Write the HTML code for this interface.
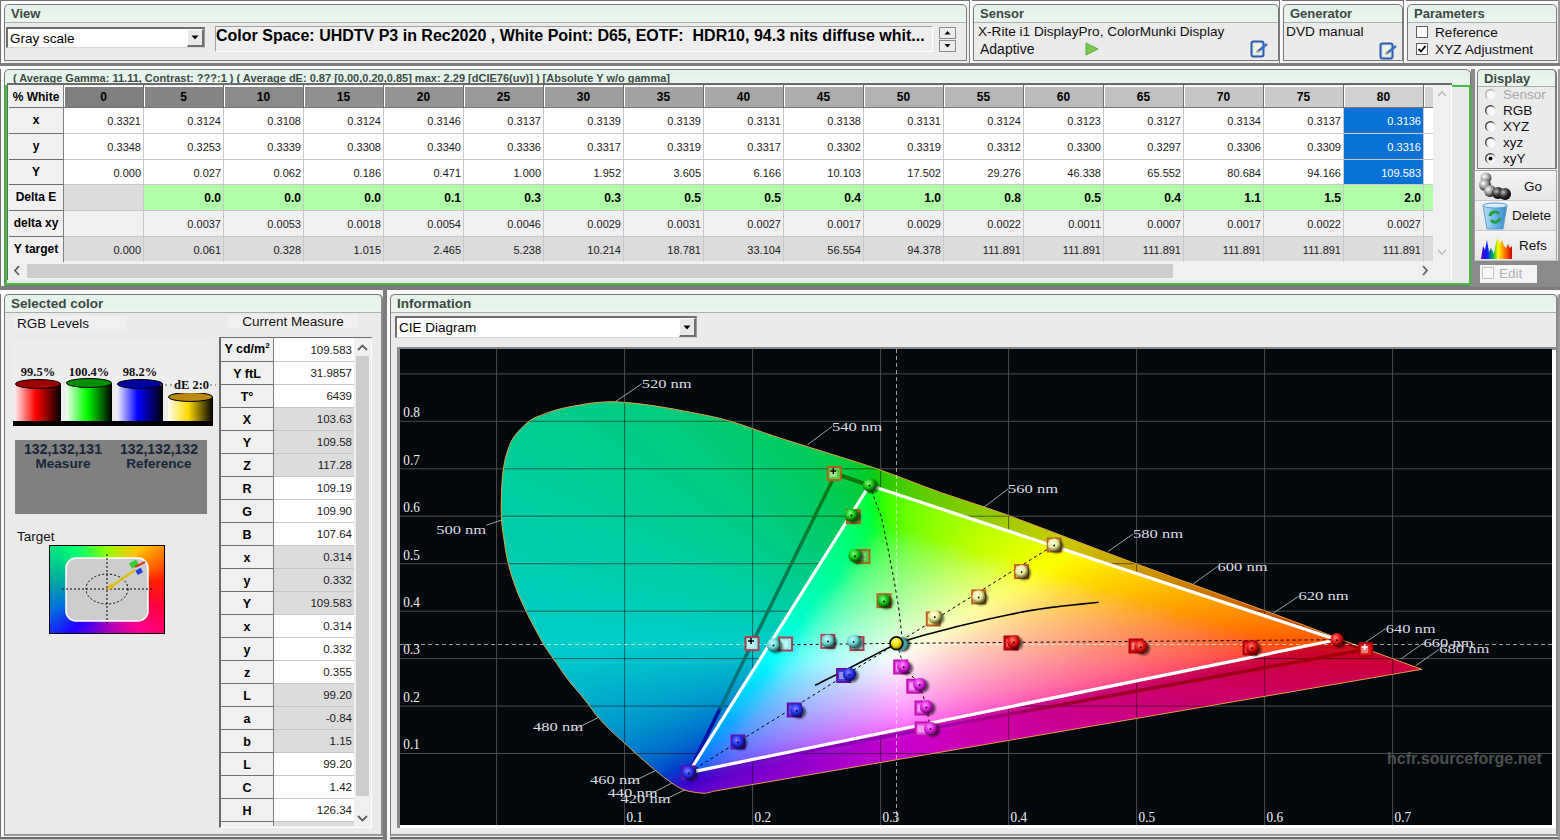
<!DOCTYPE html><html><head><meta charset="utf-8"><style>html,body{margin:0;padding:0}body{width:1560px;height:840px;overflow:hidden;position:relative;background:#f0f0f0;font-family:"Liberation Sans",sans-serif}</style></head><body><div style="position:absolute;left:0px;top:0px;width:1560px;height:1px;background:#707070"></div><div style="position:absolute;left:0px;top:0px;width:1px;height:840px;background:#707070"></div><div style="position:absolute;left:1px;top:1px;width:1558px;height:3px;background:#fafafa"></div><div style="position:absolute;left:1px;top:1px;width:3px;height:836px;background:#fafafa"></div><div style="position:absolute;left:0px;top:837px;width:1560px;height:2px;background:#6e6e6e"></div><div style="position:absolute;left:0px;top:839px;width:1560px;height:1px;background:#c8c8c8"></div><div style="position:absolute;left:1558px;top:0px;width:2px;height:840px;background:#9a9a9a"></div><div style="position:absolute;left:0px;top:63px;width:1560px;height:3px;background:#7c7c7c"></div><div style="position:absolute;left:0px;top:66px;width:1560px;height:3px;background:#fafafa"></div><div style="position:absolute;left:0px;top:286px;width:1560px;height:4px;background:#7c7c7c"></div><div style="position:absolute;left:0px;top:290px;width:1560px;height:4px;background:#fafafa"></div><div style="position:absolute;left:969px;top:0px;width:1px;height:63px;background:#7c7c7c"></div><div style="position:absolute;left:970px;top:0px;width:2px;height:63px;background:#fafafa"></div><div style="position:absolute;left:1279px;top:0px;width:1px;height:63px;background:#7c7c7c"></div><div style="position:absolute;left:1280px;top:0px;width:2px;height:63px;background:#fafafa"></div><div style="position:absolute;left:1403px;top:0px;width:1px;height:63px;background:#7c7c7c"></div><div style="position:absolute;left:1404px;top:0px;width:2px;height:63px;background:#fafafa"></div><div style="position:absolute;left:1471px;top:69px;width:4px;height:217px;background:#8a8a8a"></div><div style="position:absolute;left:383px;top:290px;width:4px;height:550px;background:#7c7c7c"></div><div style="position:absolute;left:387px;top:290px;width:3px;height:550px;background:#fafafa"></div><div style="position:absolute;left:4px;top:4px;width:963px;height:57px;background:#ebebeb;border:1px solid #7a7a7a;box-sizing:border-box;border-radius:5px 5px 0 0"></div><div style="position:absolute;left:5px;top:5px;width:961px;height:18px;background:linear-gradient(#e2f3e8,#eaf6ef);border-bottom:1px solid #a9b0ac;border-radius:5px 5px 0 0;box-sizing:border-box"></div><div style="position:absolute;left:11px;top:6px;text-align:left;white-space:pre;font-family:'Liberation Sans',sans-serif;font-size:13px;font-weight:bold;color:#3d4743;line-height:16px">View</div><div style="position:absolute;left:6px;top:27px;width:199px;height:21px;background:#fff;border-top:2px solid #6e6e6e;border-left:2px solid #6e6e6e;border-right:1px solid #9a9a9a;border-bottom:1px solid #d8d8d8;box-sizing:border-box"></div><div style="position:absolute;left:10px;top:31px;text-align:left;white-space:pre;font-family:'Liberation Sans',sans-serif;font-size:13.5px;color:#000;line-height:16px">Gray scale</div><div style="position:absolute;left:187px;top:29px;width:17px;height:18px;background:#e9e9e9;border-right:2px solid #707070;border-bottom:2px solid #707070;border-top:1px solid #fff;border-left:1px solid #fff;box-sizing:border-box"></div><svg style="position:absolute;left:191px;top:35px" width="9" height="6"><path d="M0.5 0.5h7l-3.5 4z" fill="#000"/></svg><div style="position:absolute;left:215px;top:26px;width:718px;height:26px;background:#eeeeee;border-top:1px solid #a0a0a0;border-left:1px solid #a0a0a0;border-right:1px solid #fff;border-bottom:1px solid #fff;box-sizing:border-box"></div><div style="position:absolute;left:216px;top:27px;text-align:left;white-space:pre;font-family:'Liberation Sans',sans-serif;font-size:16px;font-weight:bold;color:#000;line-height:18px">Color Space: UHDTV P3 in Rec2020 , White Point: D65, EOTF:  HDR10, 94.3 nits diffuse whit...</div><div style="position:absolute;left:939px;top:27px;width:17px;height:12px;background:#ececec;border:1px solid #8a8a8a;box-sizing:border-box"></div><svg style="position:absolute;left:943px;top:30px" width="9" height="6"><path d="M1.5 4.5h6l-3-3.5z" fill="#000"/></svg><div style="position:absolute;left:939px;top:40px;width:17px;height:12px;background:#ececec;border:1px solid #8a8a8a;box-sizing:border-box"></div><svg style="position:absolute;left:943px;top:43px" width="9" height="6"><path d="M1.5 1h6l-3 3.5z" fill="#000"/></svg><div style="position:absolute;left:973px;top:4px;width:306px;height:57px;background:#ebebeb;border:1px solid #7a7a7a;box-sizing:border-box;border-radius:5px 5px 0 0"></div><div style="position:absolute;left:974px;top:5px;width:304px;height:18px;background:linear-gradient(#e2f3e8,#eaf6ef);border-bottom:1px solid #a9b0ac;border-radius:5px 5px 0 0;box-sizing:border-box"></div><div style="position:absolute;left:980px;top:6px;text-align:left;white-space:pre;font-family:'Liberation Sans',sans-serif;font-size:13px;font-weight:bold;color:#3d4743;line-height:16px">Sensor</div><div style="position:absolute;left:978px;top:24px;text-align:left;white-space:pre;font-family:'Liberation Sans',sans-serif;font-size:13.6px;color:#101010;line-height:16px">X-Rite i1 DisplayPro, ColorMunki Display</div><div style="position:absolute;left:980px;top:41px;text-align:left;white-space:pre;font-family:'Liberation Sans',sans-serif;font-size:14px;color:#101010;line-height:16px">Adaptive</div><svg style="position:absolute;left:1085px;top:42px" width="14" height="14"><path d="M1 1L13 7L1 13z" fill="#7ec850" stroke="#5aa838" stroke-width="1"/></svg><svg style="position:absolute;left:1250px;top:38px" width="20" height="20"><rect x="1.5" y="3.5" width="12" height="15" rx="2" fill="#d8e6f5" stroke="#2a5db0" stroke-width="2"/><rect x="4" y="6" width="7" height="10" fill="#f2f2e0"/><path d="M7 14L17 6" stroke="#3a6fc0" stroke-width="2.5"/><path d="M6 15l2-3 2 2z" fill="#c8b070"/></svg><div style="position:absolute;left:1283px;top:4px;width:120px;height:57px;background:#ebebeb;border:1px solid #7a7a7a;box-sizing:border-box;border-radius:5px 5px 0 0"></div><div style="position:absolute;left:1284px;top:5px;width:118px;height:18px;background:linear-gradient(#e2f3e8,#eaf6ef);border-bottom:1px solid #a9b0ac;border-radius:5px 5px 0 0;box-sizing:border-box"></div><div style="position:absolute;left:1290px;top:6px;text-align:left;white-space:pre;font-family:'Liberation Sans',sans-serif;font-size:13px;font-weight:bold;color:#3d4743;line-height:16px">Generator</div><div style="position:absolute;left:1286px;top:24px;text-align:left;white-space:pre;font-family:'Liberation Sans',sans-serif;font-size:13.7px;color:#101010;line-height:16px">DVD manual</div><svg style="position:absolute;left:1379px;top:40px" width="20" height="20"><rect x="1.5" y="3.5" width="12" height="15" rx="2" fill="#d8e6f5" stroke="#2a5db0" stroke-width="2"/><rect x="4" y="6" width="7" height="10" fill="#f2f2e0"/><path d="M7 14L17 6" stroke="#3a6fc0" stroke-width="2.5"/><path d="M6 15l2-3 2 2z" fill="#c8b070"/></svg><div style="position:absolute;left:1407px;top:4px;width:150px;height:57px;background:#ebebeb;border:1px solid #7a7a7a;box-sizing:border-box;border-radius:5px 5px 0 0"></div><div style="position:absolute;left:1408px;top:5px;width:148px;height:18px;background:linear-gradient(#e2f3e8,#eaf6ef);border-bottom:1px solid #a9b0ac;border-radius:5px 5px 0 0;box-sizing:border-box"></div><div style="position:absolute;left:1414px;top:6px;text-align:left;white-space:pre;font-family:'Liberation Sans',sans-serif;font-size:13px;font-weight:bold;color:#3d4743;line-height:16px">Parameters</div><div style="position:absolute;left:1416px;top:26px;width:12px;height:12px;background:#fff;border:1px solid #606060;box-sizing:border-box"></div><div style="position:absolute;left:1435px;top:25px;text-align:left;white-space:pre;font-family:'Liberation Sans',sans-serif;font-size:13.6px;color:#101010;line-height:16px">Reference</div><div style="position:absolute;left:1416px;top:43px;width:12px;height:12px;background:#fff;border:1px solid #606060;box-sizing:border-box"></div><svg style="position:absolute;left:1416px;top:43px" width="12" height="12"><path d="M2.5 6L5 8.5L9.5 3" fill="none" stroke="#000" stroke-width="1.8"/></svg><div style="position:absolute;left:1435px;top:42px;text-align:left;white-space:pre;font-family:'Liberation Sans',sans-serif;font-size:13.7px;color:#101010;line-height:16px">XYZ Adjustment</div><div style="position:absolute;left:4px;top:69px;width:1467px;height:217px;background:#ebebeb;border:1px solid #7a7a7a;box-sizing:border-box;border-radius:5px 5px 0 0"></div><div style="position:absolute;left:5px;top:70px;width:1465px;height:14px;background:linear-gradient(#e2f3e8,#eaf6ef);border-radius:5px 5px 0 0"></div><div style="position:absolute;left:13px;top:71px;text-align:left;white-space:pre;font-family:'Liberation Sans',sans-serif;font-size:11px;font-weight:bold;color:#3d4a45;line-height:14px;height:13px;overflow:hidden">( Average Gamma: 11.11, Contrast: ???:1 ) ( Average dE: 0.87 [0.00,0.20,0.85] max: 2.29 [dCIE76(uv)] ) [Absolute Y w/o gamma]</div><div style="position:absolute;left:5px;top:85px;width:1466px;height:200px;border:2px solid #3cc23c;box-sizing:border-box"></div><div style="position:absolute;left:7px;top:83px;width:1445px;height:197px;background:#f0f0f0;border-top:2px solid #6a6a6a;border-left:1px solid #6a6a6a;box-sizing:border-box"></div><div style="position:absolute;left:9px;top:85px;width:54px;height:22px;background:#f0f0f0"></div><div style="position:absolute;left:9px;top:86px;width:54px;text-align:center;white-space:pre;font-family:'Liberation Sans',sans-serif;font-size:12px;font-weight:bold;color:#000;line-height:22px">% White</div><div style="position:absolute;left:64px;top:86px;width:79px;height:21px;background:#808080;border-left:1px solid #fff;border-top:1px solid #fff;box-sizing:border-box"></div><div style="position:absolute;left:64px;top:86px;width:79px;text-align:center;white-space:pre;font-family:'Liberation Sans',sans-serif;font-size:12px;font-weight:bold;color:#000;line-height:23px">0</div><div style="position:absolute;left:144px;top:86px;width:79px;height:21px;background:#858585;border-left:1px solid #fff;border-top:1px solid #fff;box-sizing:border-box"></div><div style="position:absolute;left:144px;top:86px;width:79px;text-align:center;white-space:pre;font-family:'Liberation Sans',sans-serif;font-size:12px;font-weight:bold;color:#000;line-height:23px">5</div><div style="position:absolute;left:224px;top:86px;width:79px;height:21px;background:#8a8a8a;border-left:1px solid #fff;border-top:1px solid #fff;box-sizing:border-box"></div><div style="position:absolute;left:224px;top:86px;width:79px;text-align:center;white-space:pre;font-family:'Liberation Sans',sans-serif;font-size:12px;font-weight:bold;color:#000;line-height:23px">10</div><div style="position:absolute;left:304px;top:86px;width:79px;height:21px;background:#8f8f8f;border-left:1px solid #fff;border-top:1px solid #fff;box-sizing:border-box"></div><div style="position:absolute;left:304px;top:86px;width:79px;text-align:center;white-space:pre;font-family:'Liberation Sans',sans-serif;font-size:12px;font-weight:bold;color:#000;line-height:23px">15</div><div style="position:absolute;left:384px;top:86px;width:79px;height:21px;background:#949494;border-left:1px solid #fff;border-top:1px solid #fff;box-sizing:border-box"></div><div style="position:absolute;left:384px;top:86px;width:79px;text-align:center;white-space:pre;font-family:'Liberation Sans',sans-serif;font-size:12px;font-weight:bold;color:#000;line-height:23px">20</div><div style="position:absolute;left:464px;top:86px;width:79px;height:21px;background:#999999;border-left:1px solid #fff;border-top:1px solid #fff;box-sizing:border-box"></div><div style="position:absolute;left:464px;top:86px;width:79px;text-align:center;white-space:pre;font-family:'Liberation Sans',sans-serif;font-size:12px;font-weight:bold;color:#000;line-height:23px">25</div><div style="position:absolute;left:544px;top:86px;width:79px;height:21px;background:#9e9e9e;border-left:1px solid #fff;border-top:1px solid #fff;box-sizing:border-box"></div><div style="position:absolute;left:544px;top:86px;width:79px;text-align:center;white-space:pre;font-family:'Liberation Sans',sans-serif;font-size:12px;font-weight:bold;color:#000;line-height:23px">30</div><div style="position:absolute;left:624px;top:86px;width:79px;height:21px;background:#a3a3a3;border-left:1px solid #fff;border-top:1px solid #fff;box-sizing:border-box"></div><div style="position:absolute;left:624px;top:86px;width:79px;text-align:center;white-space:pre;font-family:'Liberation Sans',sans-serif;font-size:12px;font-weight:bold;color:#000;line-height:23px">35</div><div style="position:absolute;left:704px;top:86px;width:79px;height:21px;background:#a8a8a8;border-left:1px solid #fff;border-top:1px solid #fff;box-sizing:border-box"></div><div style="position:absolute;left:704px;top:86px;width:79px;text-align:center;white-space:pre;font-family:'Liberation Sans',sans-serif;font-size:12px;font-weight:bold;color:#000;line-height:23px">40</div><div style="position:absolute;left:784px;top:86px;width:79px;height:21px;background:#adadad;border-left:1px solid #fff;border-top:1px solid #fff;box-sizing:border-box"></div><div style="position:absolute;left:784px;top:86px;width:79px;text-align:center;white-space:pre;font-family:'Liberation Sans',sans-serif;font-size:12px;font-weight:bold;color:#000;line-height:23px">45</div><div style="position:absolute;left:864px;top:86px;width:79px;height:21px;background:#b2b2b2;border-left:1px solid #fff;border-top:1px solid #fff;box-sizing:border-box"></div><div style="position:absolute;left:864px;top:86px;width:79px;text-align:center;white-space:pre;font-family:'Liberation Sans',sans-serif;font-size:12px;font-weight:bold;color:#000;line-height:23px">50</div><div style="position:absolute;left:944px;top:86px;width:79px;height:21px;background:#b7b7b7;border-left:1px solid #fff;border-top:1px solid #fff;box-sizing:border-box"></div><div style="position:absolute;left:944px;top:86px;width:79px;text-align:center;white-space:pre;font-family:'Liberation Sans',sans-serif;font-size:12px;font-weight:bold;color:#000;line-height:23px">55</div><div style="position:absolute;left:1024px;top:86px;width:79px;height:21px;background:#bcbcbc;border-left:1px solid #fff;border-top:1px solid #fff;box-sizing:border-box"></div><div style="position:absolute;left:1024px;top:86px;width:79px;text-align:center;white-space:pre;font-family:'Liberation Sans',sans-serif;font-size:12px;font-weight:bold;color:#000;line-height:23px">60</div><div style="position:absolute;left:1104px;top:86px;width:79px;height:21px;background:#c1c1c1;border-left:1px solid #fff;border-top:1px solid #fff;box-sizing:border-box"></div><div style="position:absolute;left:1104px;top:86px;width:79px;text-align:center;white-space:pre;font-family:'Liberation Sans',sans-serif;font-size:12px;font-weight:bold;color:#000;line-height:23px">65</div><div style="position:absolute;left:1184px;top:86px;width:79px;height:21px;background:#c6c6c6;border-left:1px solid #fff;border-top:1px solid #fff;box-sizing:border-box"></div><div style="position:absolute;left:1184px;top:86px;width:79px;text-align:center;white-space:pre;font-family:'Liberation Sans',sans-serif;font-size:12px;font-weight:bold;color:#000;line-height:23px">70</div><div style="position:absolute;left:1264px;top:86px;width:79px;height:21px;background:#cbcbcb;border-left:1px solid #fff;border-top:1px solid #fff;box-sizing:border-box"></div><div style="position:absolute;left:1264px;top:86px;width:79px;text-align:center;white-space:pre;font-family:'Liberation Sans',sans-serif;font-size:12px;font-weight:bold;color:#000;line-height:23px">75</div><div style="position:absolute;left:1344px;top:86px;width:79px;height:21px;background:#d0d0d0;border-left:1px solid #fff;border-top:1px solid #fff;box-sizing:border-box"></div><div style="position:absolute;left:1344px;top:86px;width:79px;text-align:center;white-space:pre;font-family:'Liberation Sans',sans-serif;font-size:12px;font-weight:bold;color:#000;line-height:23px">80</div><div style="position:absolute;left:1424px;top:86px;width:9px;height:21px;background:#d5d5d5;border-left:1px solid #fff;border-top:1px solid #fff;box-sizing:border-box"></div><div style="position:absolute;left:9px;top:108px;width:54px;height:25px;background:#f0f0f0"></div><div style="position:absolute;left:9px;top:108px;width:54px;text-align:center;white-space:pre;font-family:'Liberation Sans',sans-serif;font-size:12px;font-weight:bold;color:#000;line-height:25px">x</div><div style="position:absolute;left:64px;top:108px;width:79px;height:25px;background:#ffffff"></div><div style="position:absolute;left:64px;top:108px;width:79px;text-align:right;white-space:pre;font-family:'Liberation Sans',sans-serif;font-size:11px;font-weight:normal;color:#1a1a1a;line-height:27px;padding-right:2px;box-sizing:border-box">0.3321</div><div style="position:absolute;left:144px;top:108px;width:79px;height:25px;background:#ffffff"></div><div style="position:absolute;left:144px;top:108px;width:79px;text-align:right;white-space:pre;font-family:'Liberation Sans',sans-serif;font-size:11px;font-weight:normal;color:#1a1a1a;line-height:27px;padding-right:2px;box-sizing:border-box">0.3124</div><div style="position:absolute;left:224px;top:108px;width:79px;height:25px;background:#ffffff"></div><div style="position:absolute;left:224px;top:108px;width:79px;text-align:right;white-space:pre;font-family:'Liberation Sans',sans-serif;font-size:11px;font-weight:normal;color:#1a1a1a;line-height:27px;padding-right:2px;box-sizing:border-box">0.3108</div><div style="position:absolute;left:304px;top:108px;width:79px;height:25px;background:#ffffff"></div><div style="position:absolute;left:304px;top:108px;width:79px;text-align:right;white-space:pre;font-family:'Liberation Sans',sans-serif;font-size:11px;font-weight:normal;color:#1a1a1a;line-height:27px;padding-right:2px;box-sizing:border-box">0.3124</div><div style="position:absolute;left:384px;top:108px;width:79px;height:25px;background:#ffffff"></div><div style="position:absolute;left:384px;top:108px;width:79px;text-align:right;white-space:pre;font-family:'Liberation Sans',sans-serif;font-size:11px;font-weight:normal;color:#1a1a1a;line-height:27px;padding-right:2px;box-sizing:border-box">0.3146</div><div style="position:absolute;left:464px;top:108px;width:79px;height:25px;background:#ffffff"></div><div style="position:absolute;left:464px;top:108px;width:79px;text-align:right;white-space:pre;font-family:'Liberation Sans',sans-serif;font-size:11px;font-weight:normal;color:#1a1a1a;line-height:27px;padding-right:2px;box-sizing:border-box">0.3137</div><div style="position:absolute;left:544px;top:108px;width:79px;height:25px;background:#ffffff"></div><div style="position:absolute;left:544px;top:108px;width:79px;text-align:right;white-space:pre;font-family:'Liberation Sans',sans-serif;font-size:11px;font-weight:normal;color:#1a1a1a;line-height:27px;padding-right:2px;box-sizing:border-box">0.3139</div><div style="position:absolute;left:624px;top:108px;width:79px;height:25px;background:#ffffff"></div><div style="position:absolute;left:624px;top:108px;width:79px;text-align:right;white-space:pre;font-family:'Liberation Sans',sans-serif;font-size:11px;font-weight:normal;color:#1a1a1a;line-height:27px;padding-right:2px;box-sizing:border-box">0.3139</div><div style="position:absolute;left:704px;top:108px;width:79px;height:25px;background:#ffffff"></div><div style="position:absolute;left:704px;top:108px;width:79px;text-align:right;white-space:pre;font-family:'Liberation Sans',sans-serif;font-size:11px;font-weight:normal;color:#1a1a1a;line-height:27px;padding-right:2px;box-sizing:border-box">0.3131</div><div style="position:absolute;left:784px;top:108px;width:79px;height:25px;background:#ffffff"></div><div style="position:absolute;left:784px;top:108px;width:79px;text-align:right;white-space:pre;font-family:'Liberation Sans',sans-serif;font-size:11px;font-weight:normal;color:#1a1a1a;line-height:27px;padding-right:2px;box-sizing:border-box">0.3138</div><div style="position:absolute;left:864px;top:108px;width:79px;height:25px;background:#ffffff"></div><div style="position:absolute;left:864px;top:108px;width:79px;text-align:right;white-space:pre;font-family:'Liberation Sans',sans-serif;font-size:11px;font-weight:normal;color:#1a1a1a;line-height:27px;padding-right:2px;box-sizing:border-box">0.3131</div><div style="position:absolute;left:944px;top:108px;width:79px;height:25px;background:#ffffff"></div><div style="position:absolute;left:944px;top:108px;width:79px;text-align:right;white-space:pre;font-family:'Liberation Sans',sans-serif;font-size:11px;font-weight:normal;color:#1a1a1a;line-height:27px;padding-right:2px;box-sizing:border-box">0.3124</div><div style="position:absolute;left:1024px;top:108px;width:79px;height:25px;background:#ffffff"></div><div style="position:absolute;left:1024px;top:108px;width:79px;text-align:right;white-space:pre;font-family:'Liberation Sans',sans-serif;font-size:11px;font-weight:normal;color:#1a1a1a;line-height:27px;padding-right:2px;box-sizing:border-box">0.3123</div><div style="position:absolute;left:1104px;top:108px;width:79px;height:25px;background:#ffffff"></div><div style="position:absolute;left:1104px;top:108px;width:79px;text-align:right;white-space:pre;font-family:'Liberation Sans',sans-serif;font-size:11px;font-weight:normal;color:#1a1a1a;line-height:27px;padding-right:2px;box-sizing:border-box">0.3127</div><div style="position:absolute;left:1184px;top:108px;width:79px;height:25px;background:#ffffff"></div><div style="position:absolute;left:1184px;top:108px;width:79px;text-align:right;white-space:pre;font-family:'Liberation Sans',sans-serif;font-size:11px;font-weight:normal;color:#1a1a1a;line-height:27px;padding-right:2px;box-sizing:border-box">0.3134</div><div style="position:absolute;left:1264px;top:108px;width:79px;height:25px;background:#ffffff"></div><div style="position:absolute;left:1264px;top:108px;width:79px;text-align:right;white-space:pre;font-family:'Liberation Sans',sans-serif;font-size:11px;font-weight:normal;color:#1a1a1a;line-height:27px;padding-right:2px;box-sizing:border-box">0.3137</div><div style="position:absolute;left:1344px;top:108px;width:79px;height:25px;background:#0a72d6"></div><div style="position:absolute;left:1344px;top:108px;width:79px;text-align:right;white-space:pre;font-family:'Liberation Sans',sans-serif;font-size:11px;font-weight:normal;color:#ffffff;line-height:27px;padding-right:2px;box-sizing:border-box">0.3136</div><div style="position:absolute;left:1424px;top:108px;width:9px;height:25px;background:#ffffff"></div><div style="position:absolute;left:9px;top:134px;width:54px;height:25px;background:#f0f0f0"></div><div style="position:absolute;left:9px;top:134px;width:54px;text-align:center;white-space:pre;font-family:'Liberation Sans',sans-serif;font-size:12px;font-weight:bold;color:#000;line-height:25px">y</div><div style="position:absolute;left:64px;top:134px;width:79px;height:25px;background:#ffffff"></div><div style="position:absolute;left:64px;top:134px;width:79px;text-align:right;white-space:pre;font-family:'Liberation Sans',sans-serif;font-size:11px;font-weight:normal;color:#1a1a1a;line-height:27px;padding-right:2px;box-sizing:border-box">0.3348</div><div style="position:absolute;left:144px;top:134px;width:79px;height:25px;background:#ffffff"></div><div style="position:absolute;left:144px;top:134px;width:79px;text-align:right;white-space:pre;font-family:'Liberation Sans',sans-serif;font-size:11px;font-weight:normal;color:#1a1a1a;line-height:27px;padding-right:2px;box-sizing:border-box">0.3253</div><div style="position:absolute;left:224px;top:134px;width:79px;height:25px;background:#ffffff"></div><div style="position:absolute;left:224px;top:134px;width:79px;text-align:right;white-space:pre;font-family:'Liberation Sans',sans-serif;font-size:11px;font-weight:normal;color:#1a1a1a;line-height:27px;padding-right:2px;box-sizing:border-box">0.3339</div><div style="position:absolute;left:304px;top:134px;width:79px;height:25px;background:#ffffff"></div><div style="position:absolute;left:304px;top:134px;width:79px;text-align:right;white-space:pre;font-family:'Liberation Sans',sans-serif;font-size:11px;font-weight:normal;color:#1a1a1a;line-height:27px;padding-right:2px;box-sizing:border-box">0.3308</div><div style="position:absolute;left:384px;top:134px;width:79px;height:25px;background:#ffffff"></div><div style="position:absolute;left:384px;top:134px;width:79px;text-align:right;white-space:pre;font-family:'Liberation Sans',sans-serif;font-size:11px;font-weight:normal;color:#1a1a1a;line-height:27px;padding-right:2px;box-sizing:border-box">0.3340</div><div style="position:absolute;left:464px;top:134px;width:79px;height:25px;background:#ffffff"></div><div style="position:absolute;left:464px;top:134px;width:79px;text-align:right;white-space:pre;font-family:'Liberation Sans',sans-serif;font-size:11px;font-weight:normal;color:#1a1a1a;line-height:27px;padding-right:2px;box-sizing:border-box">0.3336</div><div style="position:absolute;left:544px;top:134px;width:79px;height:25px;background:#ffffff"></div><div style="position:absolute;left:544px;top:134px;width:79px;text-align:right;white-space:pre;font-family:'Liberation Sans',sans-serif;font-size:11px;font-weight:normal;color:#1a1a1a;line-height:27px;padding-right:2px;box-sizing:border-box">0.3317</div><div style="position:absolute;left:624px;top:134px;width:79px;height:25px;background:#ffffff"></div><div style="position:absolute;left:624px;top:134px;width:79px;text-align:right;white-space:pre;font-family:'Liberation Sans',sans-serif;font-size:11px;font-weight:normal;color:#1a1a1a;line-height:27px;padding-right:2px;box-sizing:border-box">0.3319</div><div style="position:absolute;left:704px;top:134px;width:79px;height:25px;background:#ffffff"></div><div style="position:absolute;left:704px;top:134px;width:79px;text-align:right;white-space:pre;font-family:'Liberation Sans',sans-serif;font-size:11px;font-weight:normal;color:#1a1a1a;line-height:27px;padding-right:2px;box-sizing:border-box">0.3317</div><div style="position:absolute;left:784px;top:134px;width:79px;height:25px;background:#ffffff"></div><div style="position:absolute;left:784px;top:134px;width:79px;text-align:right;white-space:pre;font-family:'Liberation Sans',sans-serif;font-size:11px;font-weight:normal;color:#1a1a1a;line-height:27px;padding-right:2px;box-sizing:border-box">0.3302</div><div style="position:absolute;left:864px;top:134px;width:79px;height:25px;background:#ffffff"></div><div style="position:absolute;left:864px;top:134px;width:79px;text-align:right;white-space:pre;font-family:'Liberation Sans',sans-serif;font-size:11px;font-weight:normal;color:#1a1a1a;line-height:27px;padding-right:2px;box-sizing:border-box">0.3319</div><div style="position:absolute;left:944px;top:134px;width:79px;height:25px;background:#ffffff"></div><div style="position:absolute;left:944px;top:134px;width:79px;text-align:right;white-space:pre;font-family:'Liberation Sans',sans-serif;font-size:11px;font-weight:normal;color:#1a1a1a;line-height:27px;padding-right:2px;box-sizing:border-box">0.3312</div><div style="position:absolute;left:1024px;top:134px;width:79px;height:25px;background:#ffffff"></div><div style="position:absolute;left:1024px;top:134px;width:79px;text-align:right;white-space:pre;font-family:'Liberation Sans',sans-serif;font-size:11px;font-weight:normal;color:#1a1a1a;line-height:27px;padding-right:2px;box-sizing:border-box">0.3300</div><div style="position:absolute;left:1104px;top:134px;width:79px;height:25px;background:#ffffff"></div><div style="position:absolute;left:1104px;top:134px;width:79px;text-align:right;white-space:pre;font-family:'Liberation Sans',sans-serif;font-size:11px;font-weight:normal;color:#1a1a1a;line-height:27px;padding-right:2px;box-sizing:border-box">0.3297</div><div style="position:absolute;left:1184px;top:134px;width:79px;height:25px;background:#ffffff"></div><div style="position:absolute;left:1184px;top:134px;width:79px;text-align:right;white-space:pre;font-family:'Liberation Sans',sans-serif;font-size:11px;font-weight:normal;color:#1a1a1a;line-height:27px;padding-right:2px;box-sizing:border-box">0.3306</div><div style="position:absolute;left:1264px;top:134px;width:79px;height:25px;background:#ffffff"></div><div style="position:absolute;left:1264px;top:134px;width:79px;text-align:right;white-space:pre;font-family:'Liberation Sans',sans-serif;font-size:11px;font-weight:normal;color:#1a1a1a;line-height:27px;padding-right:2px;box-sizing:border-box">0.3309</div><div style="position:absolute;left:1344px;top:134px;width:79px;height:25px;background:#0a72d6"></div><div style="position:absolute;left:1344px;top:134px;width:79px;text-align:right;white-space:pre;font-family:'Liberation Sans',sans-serif;font-size:11px;font-weight:normal;color:#ffffff;line-height:27px;padding-right:2px;box-sizing:border-box">0.3316</div><div style="position:absolute;left:1424px;top:134px;width:9px;height:25px;background:#ffffff"></div><div style="position:absolute;left:9px;top:160px;width:54px;height:24px;background:#f0f0f0"></div><div style="position:absolute;left:9px;top:160px;width:54px;text-align:center;white-space:pre;font-family:'Liberation Sans',sans-serif;font-size:12px;font-weight:bold;color:#000;line-height:24px">Y</div><div style="position:absolute;left:64px;top:160px;width:79px;height:24px;background:#ffffff"></div><div style="position:absolute;left:64px;top:160px;width:79px;text-align:right;white-space:pre;font-family:'Liberation Sans',sans-serif;font-size:11px;font-weight:normal;color:#1a1a1a;line-height:26px;padding-right:2px;box-sizing:border-box">0.000</div><div style="position:absolute;left:144px;top:160px;width:79px;height:24px;background:#ffffff"></div><div style="position:absolute;left:144px;top:160px;width:79px;text-align:right;white-space:pre;font-family:'Liberation Sans',sans-serif;font-size:11px;font-weight:normal;color:#1a1a1a;line-height:26px;padding-right:2px;box-sizing:border-box">0.027</div><div style="position:absolute;left:224px;top:160px;width:79px;height:24px;background:#ffffff"></div><div style="position:absolute;left:224px;top:160px;width:79px;text-align:right;white-space:pre;font-family:'Liberation Sans',sans-serif;font-size:11px;font-weight:normal;color:#1a1a1a;line-height:26px;padding-right:2px;box-sizing:border-box">0.062</div><div style="position:absolute;left:304px;top:160px;width:79px;height:24px;background:#ffffff"></div><div style="position:absolute;left:304px;top:160px;width:79px;text-align:right;white-space:pre;font-family:'Liberation Sans',sans-serif;font-size:11px;font-weight:normal;color:#1a1a1a;line-height:26px;padding-right:2px;box-sizing:border-box">0.186</div><div style="position:absolute;left:384px;top:160px;width:79px;height:24px;background:#ffffff"></div><div style="position:absolute;left:384px;top:160px;width:79px;text-align:right;white-space:pre;font-family:'Liberation Sans',sans-serif;font-size:11px;font-weight:normal;color:#1a1a1a;line-height:26px;padding-right:2px;box-sizing:border-box">0.471</div><div style="position:absolute;left:464px;top:160px;width:79px;height:24px;background:#ffffff"></div><div style="position:absolute;left:464px;top:160px;width:79px;text-align:right;white-space:pre;font-family:'Liberation Sans',sans-serif;font-size:11px;font-weight:normal;color:#1a1a1a;line-height:26px;padding-right:2px;box-sizing:border-box">1.000</div><div style="position:absolute;left:544px;top:160px;width:79px;height:24px;background:#ffffff"></div><div style="position:absolute;left:544px;top:160px;width:79px;text-align:right;white-space:pre;font-family:'Liberation Sans',sans-serif;font-size:11px;font-weight:normal;color:#1a1a1a;line-height:26px;padding-right:2px;box-sizing:border-box">1.952</div><div style="position:absolute;left:624px;top:160px;width:79px;height:24px;background:#ffffff"></div><div style="position:absolute;left:624px;top:160px;width:79px;text-align:right;white-space:pre;font-family:'Liberation Sans',sans-serif;font-size:11px;font-weight:normal;color:#1a1a1a;line-height:26px;padding-right:2px;box-sizing:border-box">3.605</div><div style="position:absolute;left:704px;top:160px;width:79px;height:24px;background:#ffffff"></div><div style="position:absolute;left:704px;top:160px;width:79px;text-align:right;white-space:pre;font-family:'Liberation Sans',sans-serif;font-size:11px;font-weight:normal;color:#1a1a1a;line-height:26px;padding-right:2px;box-sizing:border-box">6.166</div><div style="position:absolute;left:784px;top:160px;width:79px;height:24px;background:#ffffff"></div><div style="position:absolute;left:784px;top:160px;width:79px;text-align:right;white-space:pre;font-family:'Liberation Sans',sans-serif;font-size:11px;font-weight:normal;color:#1a1a1a;line-height:26px;padding-right:2px;box-sizing:border-box">10.103</div><div style="position:absolute;left:864px;top:160px;width:79px;height:24px;background:#ffffff"></div><div style="position:absolute;left:864px;top:160px;width:79px;text-align:right;white-space:pre;font-family:'Liberation Sans',sans-serif;font-size:11px;font-weight:normal;color:#1a1a1a;line-height:26px;padding-right:2px;box-sizing:border-box">17.502</div><div style="position:absolute;left:944px;top:160px;width:79px;height:24px;background:#ffffff"></div><div style="position:absolute;left:944px;top:160px;width:79px;text-align:right;white-space:pre;font-family:'Liberation Sans',sans-serif;font-size:11px;font-weight:normal;color:#1a1a1a;line-height:26px;padding-right:2px;box-sizing:border-box">29.276</div><div style="position:absolute;left:1024px;top:160px;width:79px;height:24px;background:#ffffff"></div><div style="position:absolute;left:1024px;top:160px;width:79px;text-align:right;white-space:pre;font-family:'Liberation Sans',sans-serif;font-size:11px;font-weight:normal;color:#1a1a1a;line-height:26px;padding-right:2px;box-sizing:border-box">46.338</div><div style="position:absolute;left:1104px;top:160px;width:79px;height:24px;background:#ffffff"></div><div style="position:absolute;left:1104px;top:160px;width:79px;text-align:right;white-space:pre;font-family:'Liberation Sans',sans-serif;font-size:11px;font-weight:normal;color:#1a1a1a;line-height:26px;padding-right:2px;box-sizing:border-box">65.552</div><div style="position:absolute;left:1184px;top:160px;width:79px;height:24px;background:#ffffff"></div><div style="position:absolute;left:1184px;top:160px;width:79px;text-align:right;white-space:pre;font-family:'Liberation Sans',sans-serif;font-size:11px;font-weight:normal;color:#1a1a1a;line-height:26px;padding-right:2px;box-sizing:border-box">80.684</div><div style="position:absolute;left:1264px;top:160px;width:79px;height:24px;background:#ffffff"></div><div style="position:absolute;left:1264px;top:160px;width:79px;text-align:right;white-space:pre;font-family:'Liberation Sans',sans-serif;font-size:11px;font-weight:normal;color:#1a1a1a;line-height:26px;padding-right:2px;box-sizing:border-box">94.166</div><div style="position:absolute;left:1344px;top:160px;width:79px;height:24px;background:#0a72d6"></div><div style="position:absolute;left:1344px;top:160px;width:79px;text-align:right;white-space:pre;font-family:'Liberation Sans',sans-serif;font-size:11px;font-weight:normal;color:#ffffff;line-height:26px;padding-right:2px;box-sizing:border-box">109.583</div><div style="position:absolute;left:1424px;top:160px;width:9px;height:24px;background:#ffffff"></div><div style="position:absolute;left:9px;top:185px;width:54px;height:25px;background:#f0f0f0"></div><div style="position:absolute;left:9px;top:185px;width:54px;text-align:center;white-space:pre;font-family:'Liberation Sans',sans-serif;font-size:12px;font-weight:bold;color:#000;line-height:25px">Delta E</div><div style="position:absolute;left:64px;top:185px;width:79px;height:25px;background:#dcdcdc"></div><div style="position:absolute;left:144px;top:185px;width:79px;height:25px;background:#b0ffa8"></div><div style="position:absolute;left:144px;top:185px;width:79px;text-align:right;white-space:pre;font-family:'Liberation Sans',sans-serif;font-size:12px;font-weight:bold;color:#000;line-height:27px;padding-right:2px;box-sizing:border-box">0.0</div><div style="position:absolute;left:224px;top:185px;width:79px;height:25px;background:#b0ffa8"></div><div style="position:absolute;left:224px;top:185px;width:79px;text-align:right;white-space:pre;font-family:'Liberation Sans',sans-serif;font-size:12px;font-weight:bold;color:#000;line-height:27px;padding-right:2px;box-sizing:border-box">0.0</div><div style="position:absolute;left:304px;top:185px;width:79px;height:25px;background:#b0ffa8"></div><div style="position:absolute;left:304px;top:185px;width:79px;text-align:right;white-space:pre;font-family:'Liberation Sans',sans-serif;font-size:12px;font-weight:bold;color:#000;line-height:27px;padding-right:2px;box-sizing:border-box">0.0</div><div style="position:absolute;left:384px;top:185px;width:79px;height:25px;background:#b0ffa8"></div><div style="position:absolute;left:384px;top:185px;width:79px;text-align:right;white-space:pre;font-family:'Liberation Sans',sans-serif;font-size:12px;font-weight:bold;color:#000;line-height:27px;padding-right:2px;box-sizing:border-box">0.1</div><div style="position:absolute;left:464px;top:185px;width:79px;height:25px;background:#b0ffa8"></div><div style="position:absolute;left:464px;top:185px;width:79px;text-align:right;white-space:pre;font-family:'Liberation Sans',sans-serif;font-size:12px;font-weight:bold;color:#000;line-height:27px;padding-right:2px;box-sizing:border-box">0.3</div><div style="position:absolute;left:544px;top:185px;width:79px;height:25px;background:#b0ffa8"></div><div style="position:absolute;left:544px;top:185px;width:79px;text-align:right;white-space:pre;font-family:'Liberation Sans',sans-serif;font-size:12px;font-weight:bold;color:#000;line-height:27px;padding-right:2px;box-sizing:border-box">0.3</div><div style="position:absolute;left:624px;top:185px;width:79px;height:25px;background:#b0ffa8"></div><div style="position:absolute;left:624px;top:185px;width:79px;text-align:right;white-space:pre;font-family:'Liberation Sans',sans-serif;font-size:12px;font-weight:bold;color:#000;line-height:27px;padding-right:2px;box-sizing:border-box">0.5</div><div style="position:absolute;left:704px;top:185px;width:79px;height:25px;background:#b0ffa8"></div><div style="position:absolute;left:704px;top:185px;width:79px;text-align:right;white-space:pre;font-family:'Liberation Sans',sans-serif;font-size:12px;font-weight:bold;color:#000;line-height:27px;padding-right:2px;box-sizing:border-box">0.5</div><div style="position:absolute;left:784px;top:185px;width:79px;height:25px;background:#b0ffa8"></div><div style="position:absolute;left:784px;top:185px;width:79px;text-align:right;white-space:pre;font-family:'Liberation Sans',sans-serif;font-size:12px;font-weight:bold;color:#000;line-height:27px;padding-right:2px;box-sizing:border-box">0.4</div><div style="position:absolute;left:864px;top:185px;width:79px;height:25px;background:#b0ffa8"></div><div style="position:absolute;left:864px;top:185px;width:79px;text-align:right;white-space:pre;font-family:'Liberation Sans',sans-serif;font-size:12px;font-weight:bold;color:#000;line-height:27px;padding-right:2px;box-sizing:border-box">1.0</div><div style="position:absolute;left:944px;top:185px;width:79px;height:25px;background:#b0ffa8"></div><div style="position:absolute;left:944px;top:185px;width:79px;text-align:right;white-space:pre;font-family:'Liberation Sans',sans-serif;font-size:12px;font-weight:bold;color:#000;line-height:27px;padding-right:2px;box-sizing:border-box">0.8</div><div style="position:absolute;left:1024px;top:185px;width:79px;height:25px;background:#b0ffa8"></div><div style="position:absolute;left:1024px;top:185px;width:79px;text-align:right;white-space:pre;font-family:'Liberation Sans',sans-serif;font-size:12px;font-weight:bold;color:#000;line-height:27px;padding-right:2px;box-sizing:border-box">0.5</div><div style="position:absolute;left:1104px;top:185px;width:79px;height:25px;background:#b0ffa8"></div><div style="position:absolute;left:1104px;top:185px;width:79px;text-align:right;white-space:pre;font-family:'Liberation Sans',sans-serif;font-size:12px;font-weight:bold;color:#000;line-height:27px;padding-right:2px;box-sizing:border-box">0.4</div><div style="position:absolute;left:1184px;top:185px;width:79px;height:25px;background:#b0ffa8"></div><div style="position:absolute;left:1184px;top:185px;width:79px;text-align:right;white-space:pre;font-family:'Liberation Sans',sans-serif;font-size:12px;font-weight:bold;color:#000;line-height:27px;padding-right:2px;box-sizing:border-box">1.1</div><div style="position:absolute;left:1264px;top:185px;width:79px;height:25px;background:#b0ffa8"></div><div style="position:absolute;left:1264px;top:185px;width:79px;text-align:right;white-space:pre;font-family:'Liberation Sans',sans-serif;font-size:12px;font-weight:bold;color:#000;line-height:27px;padding-right:2px;box-sizing:border-box">1.5</div><div style="position:absolute;left:1344px;top:185px;width:79px;height:25px;background:#b0ffa8"></div><div style="position:absolute;left:1344px;top:185px;width:79px;text-align:right;white-space:pre;font-family:'Liberation Sans',sans-serif;font-size:12px;font-weight:bold;color:#000;line-height:27px;padding-right:2px;box-sizing:border-box">2.0</div><div style="position:absolute;left:1424px;top:185px;width:9px;height:25px;background:#b0ffa8"></div><div style="position:absolute;left:9px;top:211px;width:54px;height:25px;background:#f0f0f0"></div><div style="position:absolute;left:9px;top:211px;width:54px;text-align:center;white-space:pre;font-family:'Liberation Sans',sans-serif;font-size:12px;font-weight:bold;color:#000;line-height:25px">delta xy</div><div style="position:absolute;left:64px;top:211px;width:79px;height:25px;background:#f0f0f0"></div><div style="position:absolute;left:144px;top:211px;width:79px;height:25px;background:#f0f0f0"></div><div style="position:absolute;left:144px;top:211px;width:79px;text-align:right;white-space:pre;font-family:'Liberation Sans',sans-serif;font-size:11px;font-weight:normal;color:#1a1a1a;line-height:27px;padding-right:2px;box-sizing:border-box">0.0037</div><div style="position:absolute;left:224px;top:211px;width:79px;height:25px;background:#f0f0f0"></div><div style="position:absolute;left:224px;top:211px;width:79px;text-align:right;white-space:pre;font-family:'Liberation Sans',sans-serif;font-size:11px;font-weight:normal;color:#1a1a1a;line-height:27px;padding-right:2px;box-sizing:border-box">0.0053</div><div style="position:absolute;left:304px;top:211px;width:79px;height:25px;background:#f0f0f0"></div><div style="position:absolute;left:304px;top:211px;width:79px;text-align:right;white-space:pre;font-family:'Liberation Sans',sans-serif;font-size:11px;font-weight:normal;color:#1a1a1a;line-height:27px;padding-right:2px;box-sizing:border-box">0.0018</div><div style="position:absolute;left:384px;top:211px;width:79px;height:25px;background:#f0f0f0"></div><div style="position:absolute;left:384px;top:211px;width:79px;text-align:right;white-space:pre;font-family:'Liberation Sans',sans-serif;font-size:11px;font-weight:normal;color:#1a1a1a;line-height:27px;padding-right:2px;box-sizing:border-box">0.0054</div><div style="position:absolute;left:464px;top:211px;width:79px;height:25px;background:#f0f0f0"></div><div style="position:absolute;left:464px;top:211px;width:79px;text-align:right;white-space:pre;font-family:'Liberation Sans',sans-serif;font-size:11px;font-weight:normal;color:#1a1a1a;line-height:27px;padding-right:2px;box-sizing:border-box">0.0046</div><div style="position:absolute;left:544px;top:211px;width:79px;height:25px;background:#f0f0f0"></div><div style="position:absolute;left:544px;top:211px;width:79px;text-align:right;white-space:pre;font-family:'Liberation Sans',sans-serif;font-size:11px;font-weight:normal;color:#1a1a1a;line-height:27px;padding-right:2px;box-sizing:border-box">0.0029</div><div style="position:absolute;left:624px;top:211px;width:79px;height:25px;background:#f0f0f0"></div><div style="position:absolute;left:624px;top:211px;width:79px;text-align:right;white-space:pre;font-family:'Liberation Sans',sans-serif;font-size:11px;font-weight:normal;color:#1a1a1a;line-height:27px;padding-right:2px;box-sizing:border-box">0.0031</div><div style="position:absolute;left:704px;top:211px;width:79px;height:25px;background:#f0f0f0"></div><div style="position:absolute;left:704px;top:211px;width:79px;text-align:right;white-space:pre;font-family:'Liberation Sans',sans-serif;font-size:11px;font-weight:normal;color:#1a1a1a;line-height:27px;padding-right:2px;box-sizing:border-box">0.0027</div><div style="position:absolute;left:784px;top:211px;width:79px;height:25px;background:#f0f0f0"></div><div style="position:absolute;left:784px;top:211px;width:79px;text-align:right;white-space:pre;font-family:'Liberation Sans',sans-serif;font-size:11px;font-weight:normal;color:#1a1a1a;line-height:27px;padding-right:2px;box-sizing:border-box">0.0017</div><div style="position:absolute;left:864px;top:211px;width:79px;height:25px;background:#f0f0f0"></div><div style="position:absolute;left:864px;top:211px;width:79px;text-align:right;white-space:pre;font-family:'Liberation Sans',sans-serif;font-size:11px;font-weight:normal;color:#1a1a1a;line-height:27px;padding-right:2px;box-sizing:border-box">0.0029</div><div style="position:absolute;left:944px;top:211px;width:79px;height:25px;background:#f0f0f0"></div><div style="position:absolute;left:944px;top:211px;width:79px;text-align:right;white-space:pre;font-family:'Liberation Sans',sans-serif;font-size:11px;font-weight:normal;color:#1a1a1a;line-height:27px;padding-right:2px;box-sizing:border-box">0.0022</div><div style="position:absolute;left:1024px;top:211px;width:79px;height:25px;background:#f0f0f0"></div><div style="position:absolute;left:1024px;top:211px;width:79px;text-align:right;white-space:pre;font-family:'Liberation Sans',sans-serif;font-size:11px;font-weight:normal;color:#1a1a1a;line-height:27px;padding-right:2px;box-sizing:border-box">0.0011</div><div style="position:absolute;left:1104px;top:211px;width:79px;height:25px;background:#f0f0f0"></div><div style="position:absolute;left:1104px;top:211px;width:79px;text-align:right;white-space:pre;font-family:'Liberation Sans',sans-serif;font-size:11px;font-weight:normal;color:#1a1a1a;line-height:27px;padding-right:2px;box-sizing:border-box">0.0007</div><div style="position:absolute;left:1184px;top:211px;width:79px;height:25px;background:#f0f0f0"></div><div style="position:absolute;left:1184px;top:211px;width:79px;text-align:right;white-space:pre;font-family:'Liberation Sans',sans-serif;font-size:11px;font-weight:normal;color:#1a1a1a;line-height:27px;padding-right:2px;box-sizing:border-box">0.0017</div><div style="position:absolute;left:1264px;top:211px;width:79px;height:25px;background:#f0f0f0"></div><div style="position:absolute;left:1264px;top:211px;width:79px;text-align:right;white-space:pre;font-family:'Liberation Sans',sans-serif;font-size:11px;font-weight:normal;color:#1a1a1a;line-height:27px;padding-right:2px;box-sizing:border-box">0.0022</div><div style="position:absolute;left:1344px;top:211px;width:79px;height:25px;background:#f0f0f0"></div><div style="position:absolute;left:1344px;top:211px;width:79px;text-align:right;white-space:pre;font-family:'Liberation Sans',sans-serif;font-size:11px;font-weight:normal;color:#1a1a1a;line-height:27px;padding-right:2px;box-sizing:border-box">0.0027</div><div style="position:absolute;left:1424px;top:211px;width:9px;height:25px;background:#f0f0f0"></div><div style="position:absolute;left:9px;top:237px;width:54px;height:24px;background:#f0f0f0"></div><div style="position:absolute;left:9px;top:237px;width:54px;text-align:center;white-space:pre;font-family:'Liberation Sans',sans-serif;font-size:12px;font-weight:bold;color:#000;line-height:24px">Y target</div><div style="position:absolute;left:64px;top:237px;width:79px;height:24px;background:#dcdcdc"></div><div style="position:absolute;left:64px;top:237px;width:79px;text-align:right;white-space:pre;font-family:'Liberation Sans',sans-serif;font-size:11px;font-weight:normal;color:#1a1a1a;line-height:26px;padding-right:2px;box-sizing:border-box">0.000</div><div style="position:absolute;left:144px;top:237px;width:79px;height:24px;background:#dcdcdc"></div><div style="position:absolute;left:144px;top:237px;width:79px;text-align:right;white-space:pre;font-family:'Liberation Sans',sans-serif;font-size:11px;font-weight:normal;color:#1a1a1a;line-height:26px;padding-right:2px;box-sizing:border-box">0.061</div><div style="position:absolute;left:224px;top:237px;width:79px;height:24px;background:#dcdcdc"></div><div style="position:absolute;left:224px;top:237px;width:79px;text-align:right;white-space:pre;font-family:'Liberation Sans',sans-serif;font-size:11px;font-weight:normal;color:#1a1a1a;line-height:26px;padding-right:2px;box-sizing:border-box">0.328</div><div style="position:absolute;left:304px;top:237px;width:79px;height:24px;background:#dcdcdc"></div><div style="position:absolute;left:304px;top:237px;width:79px;text-align:right;white-space:pre;font-family:'Liberation Sans',sans-serif;font-size:11px;font-weight:normal;color:#1a1a1a;line-height:26px;padding-right:2px;box-sizing:border-box">1.015</div><div style="position:absolute;left:384px;top:237px;width:79px;height:24px;background:#dcdcdc"></div><div style="position:absolute;left:384px;top:237px;width:79px;text-align:right;white-space:pre;font-family:'Liberation Sans',sans-serif;font-size:11px;font-weight:normal;color:#1a1a1a;line-height:26px;padding-right:2px;box-sizing:border-box">2.465</div><div style="position:absolute;left:464px;top:237px;width:79px;height:24px;background:#dcdcdc"></div><div style="position:absolute;left:464px;top:237px;width:79px;text-align:right;white-space:pre;font-family:'Liberation Sans',sans-serif;font-size:11px;font-weight:normal;color:#1a1a1a;line-height:26px;padding-right:2px;box-sizing:border-box">5.238</div><div style="position:absolute;left:544px;top:237px;width:79px;height:24px;background:#dcdcdc"></div><div style="position:absolute;left:544px;top:237px;width:79px;text-align:right;white-space:pre;font-family:'Liberation Sans',sans-serif;font-size:11px;font-weight:normal;color:#1a1a1a;line-height:26px;padding-right:2px;box-sizing:border-box">10.214</div><div style="position:absolute;left:624px;top:237px;width:79px;height:24px;background:#dcdcdc"></div><div style="position:absolute;left:624px;top:237px;width:79px;text-align:right;white-space:pre;font-family:'Liberation Sans',sans-serif;font-size:11px;font-weight:normal;color:#1a1a1a;line-height:26px;padding-right:2px;box-sizing:border-box">18.781</div><div style="position:absolute;left:704px;top:237px;width:79px;height:24px;background:#dcdcdc"></div><div style="position:absolute;left:704px;top:237px;width:79px;text-align:right;white-space:pre;font-family:'Liberation Sans',sans-serif;font-size:11px;font-weight:normal;color:#1a1a1a;line-height:26px;padding-right:2px;box-sizing:border-box">33.104</div><div style="position:absolute;left:784px;top:237px;width:79px;height:24px;background:#dcdcdc"></div><div style="position:absolute;left:784px;top:237px;width:79px;text-align:right;white-space:pre;font-family:'Liberation Sans',sans-serif;font-size:11px;font-weight:normal;color:#1a1a1a;line-height:26px;padding-right:2px;box-sizing:border-box">56.554</div><div style="position:absolute;left:864px;top:237px;width:79px;height:24px;background:#dcdcdc"></div><div style="position:absolute;left:864px;top:237px;width:79px;text-align:right;white-space:pre;font-family:'Liberation Sans',sans-serif;font-size:11px;font-weight:normal;color:#1a1a1a;line-height:26px;padding-right:2px;box-sizing:border-box">94.378</div><div style="position:absolute;left:944px;top:237px;width:79px;height:24px;background:#dcdcdc"></div><div style="position:absolute;left:944px;top:237px;width:79px;text-align:right;white-space:pre;font-family:'Liberation Sans',sans-serif;font-size:11px;font-weight:normal;color:#1a1a1a;line-height:26px;padding-right:2px;box-sizing:border-box">111.891</div><div style="position:absolute;left:1024px;top:237px;width:79px;height:24px;background:#dcdcdc"></div><div style="position:absolute;left:1024px;top:237px;width:79px;text-align:right;white-space:pre;font-family:'Liberation Sans',sans-serif;font-size:11px;font-weight:normal;color:#1a1a1a;line-height:26px;padding-right:2px;box-sizing:border-box">111.891</div><div style="position:absolute;left:1104px;top:237px;width:79px;height:24px;background:#dcdcdc"></div><div style="position:absolute;left:1104px;top:237px;width:79px;text-align:right;white-space:pre;font-family:'Liberation Sans',sans-serif;font-size:11px;font-weight:normal;color:#1a1a1a;line-height:26px;padding-right:2px;box-sizing:border-box">111.891</div><div style="position:absolute;left:1184px;top:237px;width:79px;height:24px;background:#dcdcdc"></div><div style="position:absolute;left:1184px;top:237px;width:79px;text-align:right;white-space:pre;font-family:'Liberation Sans',sans-serif;font-size:11px;font-weight:normal;color:#1a1a1a;line-height:26px;padding-right:2px;box-sizing:border-box">111.891</div><div style="position:absolute;left:1264px;top:237px;width:79px;height:24px;background:#dcdcdc"></div><div style="position:absolute;left:1264px;top:237px;width:79px;text-align:right;white-space:pre;font-family:'Liberation Sans',sans-serif;font-size:11px;font-weight:normal;color:#1a1a1a;line-height:26px;padding-right:2px;box-sizing:border-box">111.891</div><div style="position:absolute;left:1344px;top:237px;width:79px;height:24px;background:#dcdcdc"></div><div style="position:absolute;left:1344px;top:237px;width:79px;text-align:right;white-space:pre;font-family:'Liberation Sans',sans-serif;font-size:11px;font-weight:normal;color:#1a1a1a;line-height:26px;padding-right:2px;box-sizing:border-box">111.891</div><div style="position:absolute;left:1424px;top:237px;width:9px;height:24px;background:#dcdcdc"></div><div style="position:absolute;left:64px;top:107px;width:1369px;height:1px;background:#787878"></div><div style="position:absolute;left:9px;top:107px;width:54px;height:1px;background:#707070"></div><div style="position:absolute;left:64px;top:133px;width:1369px;height:1px;background:#c8c8c8"></div><div style="position:absolute;left:9px;top:133px;width:54px;height:1px;background:#707070"></div><div style="position:absolute;left:64px;top:159px;width:1369px;height:1px;background:#c8c8c8"></div><div style="position:absolute;left:9px;top:159px;width:54px;height:1px;background:#707070"></div><div style="position:absolute;left:64px;top:184px;width:1369px;height:1px;background:#c8c8c8"></div><div style="position:absolute;left:9px;top:184px;width:54px;height:1px;background:#707070"></div><div style="position:absolute;left:64px;top:210px;width:1369px;height:1px;background:#c8c8c8"></div><div style="position:absolute;left:9px;top:210px;width:54px;height:1px;background:#707070"></div><div style="position:absolute;left:64px;top:236px;width:1369px;height:1px;background:#c8c8c8"></div><div style="position:absolute;left:9px;top:236px;width:54px;height:1px;background:#707070"></div><div style="position:absolute;left:63px;top:85px;width:1px;height:177px;background:#808080"></div><div style="position:absolute;left:143px;top:108px;width:1px;height:154px;background:#c8c8c8"></div><div style="position:absolute;left:143px;top:85px;width:1px;height:23px;background:#6e6e6e"></div><div style="position:absolute;left:223px;top:108px;width:1px;height:154px;background:#c8c8c8"></div><div style="position:absolute;left:223px;top:85px;width:1px;height:23px;background:#6e6e6e"></div><div style="position:absolute;left:303px;top:108px;width:1px;height:154px;background:#c8c8c8"></div><div style="position:absolute;left:303px;top:85px;width:1px;height:23px;background:#6e6e6e"></div><div style="position:absolute;left:383px;top:108px;width:1px;height:154px;background:#c8c8c8"></div><div style="position:absolute;left:383px;top:85px;width:1px;height:23px;background:#6e6e6e"></div><div style="position:absolute;left:463px;top:108px;width:1px;height:154px;background:#c8c8c8"></div><div style="position:absolute;left:463px;top:85px;width:1px;height:23px;background:#6e6e6e"></div><div style="position:absolute;left:543px;top:108px;width:1px;height:154px;background:#c8c8c8"></div><div style="position:absolute;left:543px;top:85px;width:1px;height:23px;background:#6e6e6e"></div><div style="position:absolute;left:623px;top:108px;width:1px;height:154px;background:#c8c8c8"></div><div style="position:absolute;left:623px;top:85px;width:1px;height:23px;background:#6e6e6e"></div><div style="position:absolute;left:703px;top:108px;width:1px;height:154px;background:#c8c8c8"></div><div style="position:absolute;left:703px;top:85px;width:1px;height:23px;background:#6e6e6e"></div><div style="position:absolute;left:783px;top:108px;width:1px;height:154px;background:#c8c8c8"></div><div style="position:absolute;left:783px;top:85px;width:1px;height:23px;background:#6e6e6e"></div><div style="position:absolute;left:863px;top:108px;width:1px;height:154px;background:#c8c8c8"></div><div style="position:absolute;left:863px;top:85px;width:1px;height:23px;background:#6e6e6e"></div><div style="position:absolute;left:943px;top:108px;width:1px;height:154px;background:#c8c8c8"></div><div style="position:absolute;left:943px;top:85px;width:1px;height:23px;background:#6e6e6e"></div><div style="position:absolute;left:1023px;top:108px;width:1px;height:154px;background:#c8c8c8"></div><div style="position:absolute;left:1023px;top:85px;width:1px;height:23px;background:#6e6e6e"></div><div style="position:absolute;left:1103px;top:108px;width:1px;height:154px;background:#c8c8c8"></div><div style="position:absolute;left:1103px;top:85px;width:1px;height:23px;background:#6e6e6e"></div><div style="position:absolute;left:1183px;top:108px;width:1px;height:154px;background:#c8c8c8"></div><div style="position:absolute;left:1183px;top:85px;width:1px;height:23px;background:#6e6e6e"></div><div style="position:absolute;left:1263px;top:108px;width:1px;height:154px;background:#c8c8c8"></div><div style="position:absolute;left:1263px;top:85px;width:1px;height:23px;background:#6e6e6e"></div><div style="position:absolute;left:1343px;top:108px;width:1px;height:154px;background:#c8c8c8"></div><div style="position:absolute;left:1343px;top:85px;width:1px;height:23px;background:#6e6e6e"></div><div style="position:absolute;left:1423px;top:108px;width:1px;height:154px;background:#c8c8c8"></div><div style="position:absolute;left:1423px;top:85px;width:1px;height:23px;background:#6e6e6e"></div><div style="position:absolute;left:1433px;top:85px;width:18px;height:177px;background:#f0f0f0"></div><svg style="position:absolute;left:1437px;top:90px" width="10" height="7"><path d="M1 6L5 2L9 6" fill="none" stroke="#bdbdbd" stroke-width="1.6"/></svg><svg style="position:absolute;left:1437px;top:249px" width="10" height="7"><path d="M1 1L5 5L9 1" fill="none" stroke="#bdbdbd" stroke-width="1.6"/></svg><div style="position:absolute;left:1451px;top:85px;width:1px;height:195px;background:#ffffff"></div><div style="position:absolute;left:8px;top:262px;width:1443px;height:18px;background:#f0f0f0"></div><div style="position:absolute;left:27px;top:264px;width:1146px;height:14px;background:#cdcdcd"></div><svg style="position:absolute;left:13px;top:265px" width="8" height="11"><path d="M6 1L2 5.5L6 10" fill="none" stroke="#606060" stroke-width="1.8"/></svg><svg style="position:absolute;left:1421px;top:265px" width="8" height="11"><path d="M2 1L6 5.5L2 10" fill="none" stroke="#606060" stroke-width="1.8"/></svg><div style="position:absolute;left:1477px;top:69px;width:80px;height:100px;background:#ebebeb;border:1px solid #7a7a7a;border-right-width:2px;box-sizing:border-box;border-radius:5px 5px 0 0"></div><div style="position:absolute;left:1478px;top:70px;width:77px;height:17px;background:linear-gradient(#e2f3e8,#eaf6ef);border-bottom:1px solid #a9b0ac;border-radius:5px 5px 0 0;box-sizing:border-box"></div><div style="position:absolute;left:1484px;top:71px;text-align:left;white-space:pre;font-family:'Liberation Sans',sans-serif;font-size:13px;font-weight:bold;color:#3d4743;line-height:16px">Display</div><svg style="position:absolute;left:1484px;top:88px" width="13" height="13"><defs><linearGradient id="rg88" x1="0" y1="0" x2="1" y2="1"><stop offset="0.3" stop-color="#b0b0b0"/><stop offset="0.7" stop-color="#f4f4f4"/></linearGradient></defs><circle cx="6.5" cy="6.5" r="4.8" fill="#f8f8f8" stroke="url(#rg88)" stroke-width="1.4"/></svg><div style="position:absolute;left:1503px;top:87px;text-align:left;white-space:pre;font-family:'Liberation Sans',sans-serif;font-size:13.5px;color:#a8a8a8;line-height:16px">Sensor</div><svg style="position:absolute;left:1484px;top:104px" width="13" height="13"><defs><linearGradient id="rg104" x1="0" y1="0" x2="1" y2="1"><stop offset="0.3" stop-color="#404040"/><stop offset="0.7" stop-color="#f4f4f4"/></linearGradient></defs><circle cx="6.5" cy="6.5" r="4.8" fill="#f8f8f8" stroke="url(#rg104)" stroke-width="1.4"/></svg><div style="position:absolute;left:1503px;top:103px;text-align:left;white-space:pre;font-family:'Liberation Sans',sans-serif;font-size:13.5px;color:#101010;line-height:16px">RGB</div><svg style="position:absolute;left:1484px;top:120px" width="13" height="13"><defs><linearGradient id="rg120" x1="0" y1="0" x2="1" y2="1"><stop offset="0.3" stop-color="#404040"/><stop offset="0.7" stop-color="#f4f4f4"/></linearGradient></defs><circle cx="6.5" cy="6.5" r="4.8" fill="#f8f8f8" stroke="url(#rg120)" stroke-width="1.4"/></svg><div style="position:absolute;left:1503px;top:119px;text-align:left;white-space:pre;font-family:'Liberation Sans',sans-serif;font-size:13.5px;color:#101010;line-height:16px">XYZ</div><svg style="position:absolute;left:1484px;top:136px" width="13" height="13"><defs><linearGradient id="rg136" x1="0" y1="0" x2="1" y2="1"><stop offset="0.3" stop-color="#404040"/><stop offset="0.7" stop-color="#f4f4f4"/></linearGradient></defs><circle cx="6.5" cy="6.5" r="4.8" fill="#f8f8f8" stroke="url(#rg136)" stroke-width="1.4"/></svg><div style="position:absolute;left:1503px;top:135px;text-align:left;white-space:pre;font-family:'Liberation Sans',sans-serif;font-size:13.5px;color:#101010;line-height:16px">xyz</div><svg style="position:absolute;left:1484px;top:152px" width="13" height="13"><defs><linearGradient id="rg152" x1="0" y1="0" x2="1" y2="1"><stop offset="0.3" stop-color="#404040"/><stop offset="0.7" stop-color="#f4f4f4"/></linearGradient></defs><circle cx="6.5" cy="6.5" r="4.8" fill="#f8f8f8" stroke="url(#rg152)" stroke-width="1.4"/><circle cx="6.5" cy="6.5" r="2" fill="#000"/></svg><div style="position:absolute;left:1503px;top:151px;text-align:left;white-space:pre;font-family:'Liberation Sans',sans-serif;font-size:13.5px;color:#101010;line-height:16px">xyY</div><div style="position:absolute;left:1474px;top:170px;width:83px;height:92px;background:#e4e4e4;border:1px solid #a0a0a0;box-sizing:border-box"></div><div style="position:absolute;left:1475px;top:171px;width:81px;height:30px;background:linear-gradient(#f4f4f4,#e6e6e6);border-bottom:1px solid #c8c8c8;box-sizing:border-box"></div><div style="position:absolute;left:1475px;top:201px;width:81px;height:30px;background:linear-gradient(#f4f4f4,#e6e6e6);border-bottom:1px solid #c8c8c8;box-sizing:border-box"></div><div style="position:absolute;left:1475px;top:231px;width:81px;height:30px;background:linear-gradient(#f4f4f4,#e6e6e6);border-bottom:1px solid #c8c8c8;box-sizing:border-box"></div><div style="position:absolute;left:1524px;top:179px;text-align:left;white-space:pre;font-family:'Liberation Sans',sans-serif;font-size:13.5px;color:#101010;line-height:16px">Go</div><div style="position:absolute;left:1512px;top:208px;text-align:left;white-space:pre;font-family:'Liberation Sans',sans-serif;font-size:13.5px;color:#101010;line-height:16px">Delete</div><div style="position:absolute;left:1519px;top:238px;text-align:left;white-space:pre;font-family:'Liberation Sans',sans-serif;font-size:13.5px;color:#101010;line-height:16px">Refs</div><svg style="position:absolute;left:1478px;top:172px" width="36" height="28"><defs><radialGradient id="ball" cx="35%" cy="35%" r="65%"><stop offset="0" stop-color="#fff"/><stop offset="0.6" stop-color="#909090"/><stop offset="1" stop-color="#202020"/></radialGradient><radialGradient id="ballk" cx="35%" cy="35%" r="65%"><stop offset="0" stop-color="#bbb"/><stop offset="0.5" stop-color="#404040"/><stop offset="1" stop-color="#000"/></radialGradient></defs><circle cx="8" cy="6" r="5.5" fill="url(#ball)" opacity="0.8"/><circle cx="7" cy="13" r="6" fill="url(#ball)"/><circle cx="12" cy="19" r="6" fill="url(#ball)"/><circle cx="20" cy="21" r="6" fill="url(#ballk)"/><circle cx="27" cy="22" r="6" fill="url(#ballk)"/></svg><svg style="position:absolute;left:1480px;top:202px" width="30" height="28"><defs><linearGradient id="bin" x1="0" x2="1"><stop offset="0" stop-color="#bfe2f8"/><stop offset="0.5" stop-color="#6cb4e8"/><stop offset="1" stop-color="#3a86c8"/></linearGradient></defs><path d="M3 3L27 3L23 27L7 27z" fill="url(#bin)" stroke="#5a9ad0" stroke-width="1"/><ellipse cx="15" cy="3.5" rx="12" ry="2.5" fill="#d8eefa" stroke="#5a9ad0"/><path d="M10 14a5 5 0 0 1 9-2" fill="none" stroke="#20a040" stroke-width="3"/><path d="M20 16a5 5 0 0 1-9 2" fill="none" stroke="#20a040" stroke-width="3"/></svg><svg style="position:absolute;left:1480px;top:234px" width="34" height="26"><defs><linearGradient id="spec" x1="0" x2="1"><stop offset="0" stop-color="#6000c0"/><stop offset="0.2" stop-color="#0020ff"/><stop offset="0.4" stop-color="#00c040"/><stop offset="0.55" stop-color="#ffff00"/><stop offset="0.75" stop-color="#ff8000"/><stop offset="1" stop-color="#d00000"/></linearGradient></defs><path d="M1 25L3 12L5 16L7 6L9 18L11 14L14 20L16 8L18 4L20 10L22 6L24 12L26 14L28 10L30 14L32 12L32 25z" fill="url(#spec)"/></svg><div style="position:absolute;left:1471px;top:261px;width:89px;height:26px;background:#8a8a8a"></div><div style="position:absolute;left:1480px;top:265px;width:57px;height:18px;background:#f4f4f4"></div><div style="position:absolute;left:1482px;top:267px;width:12px;height:12px;background:#f8f8f8;border:1px solid #c4c4c4;box-sizing:border-box"></div><div style="position:absolute;left:1499px;top:265px;text-align:left;white-space:pre;font-family:'Liberation Sans',sans-serif;font-size:13.5px;color:#b0b0b0;line-height:17px">Edit</div><div style="position:absolute;left:4px;top:294px;width:379px;height:542px;background:#ebebeb;border:1px solid #7a7a7a;border-right:2px solid #8a8a8a;border-bottom:2px solid #9a9a9a;box-sizing:border-box;border-radius:5px 5px 0 0"></div><div style="position:absolute;left:5px;top:295px;width:376px;height:18px;background:linear-gradient(#e2f3e8,#eaf6ef);border-bottom:1px solid #a9b0ac;border-radius:5px 5px 0 0;box-sizing:border-box"></div><div style="position:absolute;left:11px;top:296px;text-align:left;white-space:pre;font-family:'Liberation Sans',sans-serif;font-size:13.5px;font-weight:bold;color:#3d4743;line-height:16px">Selected color</div><div style="position:absolute;left:390px;top:294px;width:1168px;height:542px;background:#ebebeb;border:1px solid #7a7a7a;border-right:2px solid #8a8a8a;border-bottom:2px solid #9a9a9a;box-sizing:border-box;border-radius:5px 5px 0 0"></div><div style="position:absolute;left:391px;top:295px;width:1165px;height:18px;background:linear-gradient(#e2f3e8,#eaf6ef);border-bottom:1px solid #a9b0ac;border-radius:5px 5px 0 0;box-sizing:border-box"></div><div style="position:absolute;left:397px;top:296px;text-align:left;white-space:pre;font-family:'Liberation Sans',sans-serif;font-size:13.5px;font-weight:bold;color:#3d4743;line-height:16px">Information</div><div style="position:absolute;left:14px;top:316px;width:113px;height:15px;background:#f0f0f0"></div><div style="position:absolute;left:17px;top:316px;text-align:left;white-space:pre;font-family:'Liberation Sans',sans-serif;font-size:13.5px;color:#101010;line-height:16px">RGB Levels</div><div style="position:absolute;left:12px;top:339px;width:202px;height:87px;background:#ededed"></div><div style="position:absolute;left:13px;top:421px;width:200px;height:5px;background:#000"></div><svg style="position:absolute;left:15px;top:378px" width="46" height="43"><defs><linearGradient id="gr" x1="0" x2="1"><stop offset="0" stop-color="#ffe8e8"/><stop offset="0.45" stop-color="#ff0000"/><stop offset="1" stop-color="#000"/></linearGradient></defs><rect x="0" y="6" width="46" height="37" fill="url(#gr)"/><ellipse cx="23.0" cy="6" rx="22.5" ry="4.5" fill="#a00000" stroke="#000" stroke-width="1"/></svg><svg style="position:absolute;left:66px;top:377px" width="46" height="44"><defs><linearGradient id="gg" x1="0" x2="1"><stop offset="0" stop-color="#f0fff0"/><stop offset="0.45" stop-color="#00ff00"/><stop offset="1" stop-color="#000"/></linearGradient></defs><rect x="0" y="6" width="46" height="38" fill="url(#gg)"/><ellipse cx="23.0" cy="6" rx="22.5" ry="4.5" fill="#009000" stroke="#000" stroke-width="1"/></svg><svg style="position:absolute;left:117px;top:378px" width="46" height="43"><defs><linearGradient id="gb" x1="0" x2="1"><stop offset="0" stop-color="#f0f0ff"/><stop offset="0.45" stop-color="#0000ff"/><stop offset="1" stop-color="#000"/></linearGradient></defs><rect x="0" y="6" width="46" height="37" fill="url(#gb)"/><ellipse cx="23.0" cy="6" rx="22.5" ry="4.5" fill="#0000a0" stroke="#000" stroke-width="1"/></svg><svg style="position:absolute;left:168px;top:391px" width="45" height="30"><defs><linearGradient id="gy" x1="0" x2="1"><stop offset="0" stop-color="#fffff0"/><stop offset="0.45" stop-color="#ffd800"/><stop offset="1" stop-color="#000"/></linearGradient></defs><rect x="0" y="6" width="45" height="24" fill="url(#gy)"/><ellipse cx="22.5" cy="6" rx="22.0" ry="4.5" fill="#b88a10" stroke="#000" stroke-width="1"/></svg><div style="position:absolute;left:13px;top:364px;width:50px;text-align:center;white-space:pre;font-family:'Liberation Serif',serif;font-size:12.5px;font-weight:bold;color:#101010;line-height:16px">99.5%</div><div style="position:absolute;left:64px;top:364px;width:50px;text-align:center;white-space:pre;font-family:'Liberation Serif',serif;font-size:12.5px;font-weight:bold;color:#101010;line-height:16px">100.4%</div><div style="position:absolute;left:115px;top:364px;width:50px;text-align:center;white-space:pre;font-family:'Liberation Serif',serif;font-size:12.5px;font-weight:bold;color:#101010;line-height:16px">98.2%</div><svg style="position:absolute;left:160px;top:383px" width="56" height="4"><path d="M0 2H56" stroke="#606060" stroke-dasharray="2 3"/></svg><div style="position:absolute;left:173px;top:377px;text-align:left;white-space:pre;font-family:'Liberation Serif',serif;font-size:12.5px;font-weight:bold;color:#101010;line-height:16px;background:#ededed;padding:0 1px">dE 2:0</div><div style="position:absolute;left:15px;top:440px;width:192px;height:74px;background:#808080"></div><div style="position:absolute;left:15px;top:441px;width:96px;text-align:center;white-space:pre;font-family:'Liberation Sans',sans-serif;font-size:14px;font-weight:bold;color:#18263a;line-height:16px">132,132,131</div><div style="position:absolute;left:15px;top:456px;width:96px;text-align:center;white-space:pre;font-family:'Liberation Sans',sans-serif;font-size:13.5px;font-weight:bold;color:#18263a;line-height:16px">Measure</div><div style="position:absolute;left:111px;top:441px;width:96px;text-align:center;white-space:pre;font-family:'Liberation Sans',sans-serif;font-size:14px;font-weight:bold;color:#18263a;line-height:16px">132,132,132</div><div style="position:absolute;left:111px;top:456px;width:96px;text-align:center;white-space:pre;font-family:'Liberation Sans',sans-serif;font-size:13.5px;font-weight:bold;color:#18263a;line-height:16px">Reference</div><div style="position:absolute;left:17px;top:529px;text-align:left;white-space:pre;font-family:'Liberation Sans',sans-serif;font-size:13.5px;color:#101010;line-height:16px">Target</div><div style="position:absolute;left:49px;top:545px;width:116px;height:89px;background:conic-gradient(from 0deg at 50% 50%,#90ff00 0deg,#ffc000 40deg,#ff2000 80deg,#ff0040 110deg,#ff0090 140deg,#a000c0 180deg,#2000ff 220deg,#0070e0 250deg,#00a8a0 280deg,#00ff70 320deg,#90ff00 360deg);border:1px solid #000;box-sizing:border-box"></div><svg style="position:absolute;left:49px;top:545px" width="116" height="89"><rect x="17" y="13" width="82" height="63" rx="10" fill="#cdcdcd" stroke="#fff" stroke-width="1.5"/><path d="M13 44H103M58 9V80" stroke="#000" stroke-dasharray="2 2" stroke-width="1"/><ellipse cx="58" cy="44" rx="21" ry="15" fill="none" stroke="#000" stroke-dasharray="2 2"/><path d="M60 43L86 25" stroke="#e0c000" stroke-width="2.2"/><path d="M57 45L62 38L65 43z" fill="#e8b800"/><rect x="81" y="16" width="8" height="6" fill="#30d030" transform="rotate(-30 85 19)"/><rect x="87" y="24" width="6" height="5" fill="#2040e0" transform="rotate(-30 90 26)"/><path d="M86 22L96 17" stroke="#d04020" stroke-width="2"/></svg><div style="position:absolute;left:228px;top:315px;width:130px;height:13px;background:#f0f0f0"></div><div style="position:absolute;left:228px;top:314px;width:130px;text-align:center;white-space:pre;font-family:'Liberation Sans',sans-serif;font-size:13.5px;color:#101010;line-height:16px">Current Measure</div><div style="position:absolute;left:219px;top:337px;width:153px;height:491px;background:#f0f0f0;border-top:2px solid #6a6a6a;border-left:2px solid #6a6a6a;border-right:1px solid #fff;border-bottom:1px solid #fff;box-sizing:border-box"></div><div style="position:absolute;left:221px;top:338px;width:52px;height:23px;background:#f0f0f0"></div><div style="position:absolute;left:274px;top:338px;width:80px;height:23px;background:#ffffff"></div><div style="position:absolute;left:221px;top:338px;width:52px;text-align:center;white-space:pre;font-family:'Liberation Sans',sans-serif;font-size:12.5px;font-weight:bold;color:#000;line-height:23px">Y cd/m<sup style="font-size:8px;vertical-align:5px;line-height:0">2</sup></div><div style="position:absolute;left:274px;top:338px;width:80px;text-align:right;white-space:pre;font-family:'Liberation Sans',sans-serif;font-size:11.5px;color:#1a1a1a;line-height:24px;padding-right:2px;box-sizing:border-box">109.583</div><div style="position:absolute;left:221px;top:361px;width:52px;height:23px;background:#f0f0f0"></div><div style="position:absolute;left:274px;top:361px;width:80px;height:23px;background:#ffffff"></div><div style="position:absolute;left:221px;top:363px;width:52px;text-align:center;white-space:pre;font-family:'Liberation Sans',sans-serif;font-size:12.5px;font-weight:bold;color:#000;line-height:23px">Y ftL</div><div style="position:absolute;left:274px;top:361px;width:80px;text-align:right;white-space:pre;font-family:'Liberation Sans',sans-serif;font-size:11.5px;color:#1a1a1a;line-height:24px;padding-right:2px;box-sizing:border-box">31.9857</div><div style="position:absolute;left:221px;top:384px;width:52px;height:23px;background:#f0f0f0"></div><div style="position:absolute;left:274px;top:384px;width:80px;height:23px;background:#ffffff"></div><div style="position:absolute;left:221px;top:386px;width:52px;text-align:center;white-space:pre;font-family:'Liberation Sans',sans-serif;font-size:12.5px;font-weight:bold;color:#000;line-height:23px">T°</div><div style="position:absolute;left:274px;top:384px;width:80px;text-align:right;white-space:pre;font-family:'Liberation Sans',sans-serif;font-size:11.5px;color:#1a1a1a;line-height:24px;padding-right:2px;box-sizing:border-box">6439</div><div style="position:absolute;left:221px;top:407px;width:52px;height:23px;background:#f0f0f0"></div><div style="position:absolute;left:274px;top:407px;width:80px;height:23px;background:#dcdcdc"></div><div style="position:absolute;left:221px;top:409px;width:52px;text-align:center;white-space:pre;font-family:'Liberation Sans',sans-serif;font-size:12.5px;font-weight:bold;color:#000;line-height:23px">X</div><div style="position:absolute;left:274px;top:407px;width:80px;text-align:right;white-space:pre;font-family:'Liberation Sans',sans-serif;font-size:11.5px;color:#1a1a1a;line-height:24px;padding-right:2px;box-sizing:border-box">103.63</div><div style="position:absolute;left:221px;top:430px;width:52px;height:23px;background:#f0f0f0"></div><div style="position:absolute;left:274px;top:430px;width:80px;height:23px;background:#dcdcdc"></div><div style="position:absolute;left:221px;top:432px;width:52px;text-align:center;white-space:pre;font-family:'Liberation Sans',sans-serif;font-size:12.5px;font-weight:bold;color:#000;line-height:23px">Y</div><div style="position:absolute;left:274px;top:430px;width:80px;text-align:right;white-space:pre;font-family:'Liberation Sans',sans-serif;font-size:11.5px;color:#1a1a1a;line-height:24px;padding-right:2px;box-sizing:border-box">109.58</div><div style="position:absolute;left:221px;top:453px;width:52px;height:23px;background:#f0f0f0"></div><div style="position:absolute;left:274px;top:453px;width:80px;height:23px;background:#dcdcdc"></div><div style="position:absolute;left:221px;top:455px;width:52px;text-align:center;white-space:pre;font-family:'Liberation Sans',sans-serif;font-size:12.5px;font-weight:bold;color:#000;line-height:23px">Z</div><div style="position:absolute;left:274px;top:453px;width:80px;text-align:right;white-space:pre;font-family:'Liberation Sans',sans-serif;font-size:11.5px;color:#1a1a1a;line-height:24px;padding-right:2px;box-sizing:border-box">117.28</div><div style="position:absolute;left:221px;top:476px;width:52px;height:23px;background:#f0f0f0"></div><div style="position:absolute;left:274px;top:476px;width:80px;height:23px;background:#ffffff"></div><div style="position:absolute;left:221px;top:478px;width:52px;text-align:center;white-space:pre;font-family:'Liberation Sans',sans-serif;font-size:12.5px;font-weight:bold;color:#000;line-height:23px">R</div><div style="position:absolute;left:274px;top:476px;width:80px;text-align:right;white-space:pre;font-family:'Liberation Sans',sans-serif;font-size:11.5px;color:#1a1a1a;line-height:24px;padding-right:2px;box-sizing:border-box">109.19</div><div style="position:absolute;left:221px;top:499px;width:52px;height:23px;background:#f0f0f0"></div><div style="position:absolute;left:274px;top:499px;width:80px;height:23px;background:#ffffff"></div><div style="position:absolute;left:221px;top:501px;width:52px;text-align:center;white-space:pre;font-family:'Liberation Sans',sans-serif;font-size:12.5px;font-weight:bold;color:#000;line-height:23px">G</div><div style="position:absolute;left:274px;top:499px;width:80px;text-align:right;white-space:pre;font-family:'Liberation Sans',sans-serif;font-size:11.5px;color:#1a1a1a;line-height:24px;padding-right:2px;box-sizing:border-box">109.90</div><div style="position:absolute;left:221px;top:522px;width:52px;height:23px;background:#f0f0f0"></div><div style="position:absolute;left:274px;top:522px;width:80px;height:23px;background:#ffffff"></div><div style="position:absolute;left:221px;top:524px;width:52px;text-align:center;white-space:pre;font-family:'Liberation Sans',sans-serif;font-size:12.5px;font-weight:bold;color:#000;line-height:23px">B</div><div style="position:absolute;left:274px;top:522px;width:80px;text-align:right;white-space:pre;font-family:'Liberation Sans',sans-serif;font-size:11.5px;color:#1a1a1a;line-height:24px;padding-right:2px;box-sizing:border-box">107.64</div><div style="position:absolute;left:221px;top:545px;width:52px;height:23px;background:#f0f0f0"></div><div style="position:absolute;left:274px;top:545px;width:80px;height:23px;background:#dcdcdc"></div><div style="position:absolute;left:221px;top:547px;width:52px;text-align:center;white-space:pre;font-family:'Liberation Sans',sans-serif;font-size:12.5px;font-weight:bold;color:#000;line-height:23px">x</div><div style="position:absolute;left:274px;top:545px;width:80px;text-align:right;white-space:pre;font-family:'Liberation Sans',sans-serif;font-size:11.5px;color:#1a1a1a;line-height:24px;padding-right:2px;box-sizing:border-box">0.314</div><div style="position:absolute;left:221px;top:568px;width:52px;height:23px;background:#f0f0f0"></div><div style="position:absolute;left:274px;top:568px;width:80px;height:23px;background:#dcdcdc"></div><div style="position:absolute;left:221px;top:570px;width:52px;text-align:center;white-space:pre;font-family:'Liberation Sans',sans-serif;font-size:12.5px;font-weight:bold;color:#000;line-height:23px">y</div><div style="position:absolute;left:274px;top:568px;width:80px;text-align:right;white-space:pre;font-family:'Liberation Sans',sans-serif;font-size:11.5px;color:#1a1a1a;line-height:24px;padding-right:2px;box-sizing:border-box">0.332</div><div style="position:absolute;left:221px;top:591px;width:52px;height:23px;background:#f0f0f0"></div><div style="position:absolute;left:274px;top:591px;width:80px;height:23px;background:#dcdcdc"></div><div style="position:absolute;left:221px;top:593px;width:52px;text-align:center;white-space:pre;font-family:'Liberation Sans',sans-serif;font-size:12.5px;font-weight:bold;color:#000;line-height:23px">Y</div><div style="position:absolute;left:274px;top:591px;width:80px;text-align:right;white-space:pre;font-family:'Liberation Sans',sans-serif;font-size:11.5px;color:#1a1a1a;line-height:24px;padding-right:2px;box-sizing:border-box">109.583</div><div style="position:absolute;left:221px;top:614px;width:52px;height:23px;background:#f0f0f0"></div><div style="position:absolute;left:274px;top:614px;width:80px;height:23px;background:#ffffff"></div><div style="position:absolute;left:221px;top:616px;width:52px;text-align:center;white-space:pre;font-family:'Liberation Sans',sans-serif;font-size:12.5px;font-weight:bold;color:#000;line-height:23px">x</div><div style="position:absolute;left:274px;top:614px;width:80px;text-align:right;white-space:pre;font-family:'Liberation Sans',sans-serif;font-size:11.5px;color:#1a1a1a;line-height:24px;padding-right:2px;box-sizing:border-box">0.314</div><div style="position:absolute;left:221px;top:637px;width:52px;height:23px;background:#f0f0f0"></div><div style="position:absolute;left:274px;top:637px;width:80px;height:23px;background:#ffffff"></div><div style="position:absolute;left:221px;top:639px;width:52px;text-align:center;white-space:pre;font-family:'Liberation Sans',sans-serif;font-size:12.5px;font-weight:bold;color:#000;line-height:23px">y</div><div style="position:absolute;left:274px;top:637px;width:80px;text-align:right;white-space:pre;font-family:'Liberation Sans',sans-serif;font-size:11.5px;color:#1a1a1a;line-height:24px;padding-right:2px;box-sizing:border-box">0.332</div><div style="position:absolute;left:221px;top:660px;width:52px;height:23px;background:#f0f0f0"></div><div style="position:absolute;left:274px;top:660px;width:80px;height:23px;background:#ffffff"></div><div style="position:absolute;left:221px;top:662px;width:52px;text-align:center;white-space:pre;font-family:'Liberation Sans',sans-serif;font-size:12.5px;font-weight:bold;color:#000;line-height:23px">z</div><div style="position:absolute;left:274px;top:660px;width:80px;text-align:right;white-space:pre;font-family:'Liberation Sans',sans-serif;font-size:11.5px;color:#1a1a1a;line-height:24px;padding-right:2px;box-sizing:border-box">0.355</div><div style="position:absolute;left:221px;top:683px;width:52px;height:23px;background:#f0f0f0"></div><div style="position:absolute;left:274px;top:683px;width:80px;height:23px;background:#dcdcdc"></div><div style="position:absolute;left:221px;top:685px;width:52px;text-align:center;white-space:pre;font-family:'Liberation Sans',sans-serif;font-size:12.5px;font-weight:bold;color:#000;line-height:23px">L</div><div style="position:absolute;left:274px;top:683px;width:80px;text-align:right;white-space:pre;font-family:'Liberation Sans',sans-serif;font-size:11.5px;color:#1a1a1a;line-height:24px;padding-right:2px;box-sizing:border-box">99.20</div><div style="position:absolute;left:221px;top:706px;width:52px;height:23px;background:#f0f0f0"></div><div style="position:absolute;left:274px;top:706px;width:80px;height:23px;background:#dcdcdc"></div><div style="position:absolute;left:221px;top:708px;width:52px;text-align:center;white-space:pre;font-family:'Liberation Sans',sans-serif;font-size:12.5px;font-weight:bold;color:#000;line-height:23px">a</div><div style="position:absolute;left:274px;top:706px;width:80px;text-align:right;white-space:pre;font-family:'Liberation Sans',sans-serif;font-size:11.5px;color:#1a1a1a;line-height:24px;padding-right:2px;box-sizing:border-box">-0.84</div><div style="position:absolute;left:221px;top:729px;width:52px;height:23px;background:#f0f0f0"></div><div style="position:absolute;left:274px;top:729px;width:80px;height:23px;background:#dcdcdc"></div><div style="position:absolute;left:221px;top:731px;width:52px;text-align:center;white-space:pre;font-family:'Liberation Sans',sans-serif;font-size:12.5px;font-weight:bold;color:#000;line-height:23px">b</div><div style="position:absolute;left:274px;top:729px;width:80px;text-align:right;white-space:pre;font-family:'Liberation Sans',sans-serif;font-size:11.5px;color:#1a1a1a;line-height:24px;padding-right:2px;box-sizing:border-box">1.15</div><div style="position:absolute;left:221px;top:752px;width:52px;height:23px;background:#f0f0f0"></div><div style="position:absolute;left:274px;top:752px;width:80px;height:23px;background:#ffffff"></div><div style="position:absolute;left:221px;top:754px;width:52px;text-align:center;white-space:pre;font-family:'Liberation Sans',sans-serif;font-size:12.5px;font-weight:bold;color:#000;line-height:23px">L</div><div style="position:absolute;left:274px;top:752px;width:80px;text-align:right;white-space:pre;font-family:'Liberation Sans',sans-serif;font-size:11.5px;color:#1a1a1a;line-height:24px;padding-right:2px;box-sizing:border-box">99.20</div><div style="position:absolute;left:221px;top:775px;width:52px;height:23px;background:#f0f0f0"></div><div style="position:absolute;left:274px;top:775px;width:80px;height:23px;background:#ffffff"></div><div style="position:absolute;left:221px;top:777px;width:52px;text-align:center;white-space:pre;font-family:'Liberation Sans',sans-serif;font-size:12.5px;font-weight:bold;color:#000;line-height:23px">C</div><div style="position:absolute;left:274px;top:775px;width:80px;text-align:right;white-space:pre;font-family:'Liberation Sans',sans-serif;font-size:11.5px;color:#1a1a1a;line-height:24px;padding-right:2px;box-sizing:border-box">1.42</div><div style="position:absolute;left:221px;top:798px;width:52px;height:23px;background:#f0f0f0"></div><div style="position:absolute;left:274px;top:798px;width:80px;height:23px;background:#ffffff"></div><div style="position:absolute;left:221px;top:800px;width:52px;text-align:center;white-space:pre;font-family:'Liberation Sans',sans-serif;font-size:12.5px;font-weight:bold;color:#000;line-height:23px">H</div><div style="position:absolute;left:274px;top:798px;width:80px;text-align:right;white-space:pre;font-family:'Liberation Sans',sans-serif;font-size:11.5px;color:#1a1a1a;line-height:24px;padding-right:2px;box-sizing:border-box">126.34</div><div style="position:absolute;left:221px;top:821px;width:52px;height:5px;background:#f0f0f0"></div><div style="position:absolute;left:274px;top:821px;width:80px;height:5px;background:#dcdcdc"></div><div style="position:absolute;left:221px;top:361px;width:52px;height:1px;background:#707070"></div><div style="position:absolute;left:274px;top:361px;width:80px;height:1px;background:#c8c8c8"></div><div style="position:absolute;left:221px;top:384px;width:52px;height:1px;background:#707070"></div><div style="position:absolute;left:274px;top:384px;width:80px;height:1px;background:#c8c8c8"></div><div style="position:absolute;left:221px;top:407px;width:52px;height:1px;background:#707070"></div><div style="position:absolute;left:274px;top:407px;width:80px;height:1px;background:#c8c8c8"></div><div style="position:absolute;left:221px;top:430px;width:52px;height:1px;background:#707070"></div><div style="position:absolute;left:274px;top:430px;width:80px;height:1px;background:#c8c8c8"></div><div style="position:absolute;left:221px;top:453px;width:52px;height:1px;background:#707070"></div><div style="position:absolute;left:274px;top:453px;width:80px;height:1px;background:#c8c8c8"></div><div style="position:absolute;left:221px;top:476px;width:52px;height:1px;background:#707070"></div><div style="position:absolute;left:274px;top:476px;width:80px;height:1px;background:#c8c8c8"></div><div style="position:absolute;left:221px;top:499px;width:52px;height:1px;background:#707070"></div><div style="position:absolute;left:274px;top:499px;width:80px;height:1px;background:#c8c8c8"></div><div style="position:absolute;left:221px;top:522px;width:52px;height:1px;background:#707070"></div><div style="position:absolute;left:274px;top:522px;width:80px;height:1px;background:#c8c8c8"></div><div style="position:absolute;left:221px;top:545px;width:52px;height:1px;background:#707070"></div><div style="position:absolute;left:274px;top:545px;width:80px;height:1px;background:#c8c8c8"></div><div style="position:absolute;left:221px;top:568px;width:52px;height:1px;background:#707070"></div><div style="position:absolute;left:274px;top:568px;width:80px;height:1px;background:#c8c8c8"></div><div style="position:absolute;left:221px;top:591px;width:52px;height:1px;background:#707070"></div><div style="position:absolute;left:274px;top:591px;width:80px;height:1px;background:#c8c8c8"></div><div style="position:absolute;left:221px;top:614px;width:52px;height:1px;background:#707070"></div><div style="position:absolute;left:274px;top:614px;width:80px;height:1px;background:#c8c8c8"></div><div style="position:absolute;left:221px;top:637px;width:52px;height:1px;background:#707070"></div><div style="position:absolute;left:274px;top:637px;width:80px;height:1px;background:#c8c8c8"></div><div style="position:absolute;left:221px;top:660px;width:52px;height:1px;background:#707070"></div><div style="position:absolute;left:274px;top:660px;width:80px;height:1px;background:#c8c8c8"></div><div style="position:absolute;left:221px;top:683px;width:52px;height:1px;background:#707070"></div><div style="position:absolute;left:274px;top:683px;width:80px;height:1px;background:#c8c8c8"></div><div style="position:absolute;left:221px;top:706px;width:52px;height:1px;background:#707070"></div><div style="position:absolute;left:274px;top:706px;width:80px;height:1px;background:#c8c8c8"></div><div style="position:absolute;left:221px;top:729px;width:52px;height:1px;background:#707070"></div><div style="position:absolute;left:274px;top:729px;width:80px;height:1px;background:#c8c8c8"></div><div style="position:absolute;left:221px;top:752px;width:52px;height:1px;background:#707070"></div><div style="position:absolute;left:274px;top:752px;width:80px;height:1px;background:#c8c8c8"></div><div style="position:absolute;left:221px;top:775px;width:52px;height:1px;background:#707070"></div><div style="position:absolute;left:274px;top:775px;width:80px;height:1px;background:#c8c8c8"></div><div style="position:absolute;left:221px;top:798px;width:52px;height:1px;background:#707070"></div><div style="position:absolute;left:274px;top:798px;width:80px;height:1px;background:#c8c8c8"></div><div style="position:absolute;left:221px;top:821px;width:52px;height:1px;background:#707070"></div><div style="position:absolute;left:274px;top:821px;width:80px;height:1px;background:#c8c8c8"></div><div style="position:absolute;left:273px;top:338px;width:1px;height:488px;background:#808080"></div><div style="position:absolute;left:354px;top:338px;width:17px;height:488px;background:#f0f0f0"></div><div style="position:absolute;left:356px;top:356px;width:13px;height:440px;background:#cdcdcd"></div><svg style="position:absolute;left:357px;top:344px" width="11" height="7"><path d="M1 6L5.5 1.5L10 6" fill="none" stroke="#606060" stroke-width="1.8"/></svg><svg style="position:absolute;left:357px;top:815px" width="11" height="7"><path d="M1 1L5.5 5.5L10 1" fill="none" stroke="#606060" stroke-width="1.8"/></svg><div style="position:absolute;left:395px;top:316px;width:302px;height:22px;background:#fff;border-top:2px solid #6e6e6e;border-left:2px solid #6e6e6e;border-right:1px solid #9a9a9a;border-bottom:1px solid #d8d8d8;box-sizing:border-box"></div><div style="position:absolute;left:399px;top:320px;text-align:left;white-space:pre;font-family:'Liberation Sans',sans-serif;font-size:13.5px;color:#000;line-height:16px">CIE Diagram</div><div style="position:absolute;left:679px;top:318px;width:17px;height:19px;background:#e9e9e9;border-right:2px solid #707070;border-bottom:2px solid #707070;border-top:1px solid #fff;border-left:1px solid #fff;box-sizing:border-box"></div><svg style="position:absolute;left:683px;top:325px" width="9" height="6"><path d="M0.5 0.5h7l-3.5 4z" fill="#000"/></svg><div style="position:absolute;left:397px;top:347px;width:1159px;height:481px;background:#ffffff;border-top:3px solid #8a8a8a;border-left:3px solid #8a8a8a;box-sizing:border-box"></div><svg style="position:absolute;left:400px;top:349px" width="1152" height="476" viewBox="400 349 1152 476"><defs><style>.c rect{width:12px;height:12px}</style><clipPath id="loc"><path d="M714.0 791.2 L712.5 791.6 L710.3 792.2 L707.9 792.8 L705.7 793.2 L703.8 793.3 L702.1 793.2 L700.1 793.0 L697.8 792.7 L694.9 792.3 L691.6 791.8 L688.1 791.1 L684.7 790.1 L681.5 788.8 L678.4 787.2 L675.1 785.2 L671.6 782.9 L667.7 780.1 L663.5 777.0 L659.1 773.5 L654.6 769.8 L649.7 765.7 L644.4 761.1 L639.3 756.6 L635.0 752.8 L631.8 749.9 L629.3 747.6 L627.1 745.4 L624.5 743.0 L621.4 740.2 L618.1 737.3 L614.7 734.3 L611.4 731.2 L608.0 727.8 L604.6 724.3 L601.3 720.8 L598.3 717.5 L595.9 714.6 L593.8 711.9 L591.9 709.2 L589.8 706.4 L587.5 703.4 L585.0 700.2 L582.6 697.1 L580.0 693.9 L577.5 691.0 L575.0 688.2 L572.3 685.1 L569.2 681.2 L565.4 676.0 L561.0 669.8 L556.7 663.5 L552.9 658.0 L550.0 654.0 L547.7 650.8 L545.4 647.3 L542.5 642.5 L538.7 635.6 L534.3 627.4 L529.9 618.9 L526.1 611.3 L523.0 604.8 L520.3 598.9 L517.9 593.3 L515.7 587.5 L513.6 581.6 L511.6 575.7 L509.9 569.8 L508.3 563.7 L506.9 557.4 L505.7 550.9 L504.7 544.4 L503.8 538.4 L503.0 533.0 L502.3 528.1 L501.8 523.2 L501.4 517.6 L501.2 511.0 L501.2 503.8 L501.4 496.5 L501.6 490.0 L501.9 484.4 L502.2 479.3 L502.6 474.6 L503.2 470.0 L503.9 465.7 L504.6 461.7 L505.5 457.8 L506.7 453.8 L508.0 449.6 L509.5 445.4 L511.3 441.2 L513.8 437.1 L517.1 432.8 L521.0 428.5 L525.2 424.5 L529.3 421.1 L533.1 418.6 L537.0 416.8 L540.8 415.4 L544.8 413.9 L548.8 412.4 L552.7 411.1 L556.9 409.8 L561.4 408.6 L566.6 407.4 L572.3 406.3 L577.9 405.3 L582.9 404.4 L586.8 403.8 L590.1 403.3 L593.4 402.9 L597.1 402.6 L601.2 402.2 L605.4 401.9 L610.2 401.7 L616.2 401.8 L623.5 402.3 L631.8 403.0 L641.0 404.0 L650.8 405.3 L661.8 407.0 L673.9 409.1 L686.0 411.4 L696.9 413.5 L705.9 415.3 L713.8 416.9 L721.5 418.8 L730.3 421.2 L740.7 424.5 L752.0 428.4 L763.3 432.4 L773.8 436.0 L782.3 438.8 L789.6 441.1 L797.7 443.6 L808.5 447.0 L823.2 451.6 L840.6 457.0 L858.9 462.8 L876.4 468.6 L892.6 474.4 L908.5 480.4 L924.4 486.5 L940.5 492.4 L955.6 497.5 L969.8 502.2 L986.1 507.6 L1007.2 515.0 L1034.5 525.2 L1066.3 537.3 L1100.6 550.4 L1135.4 563.5 L1172.5 577.1 L1212.3 591.6 L1250.3 605.4 L1282.0 617.0 L1305.0 625.6 L1322.1 632.2 L1336.8 637.9 L1352.6 643.9 L1371.6 651.0 L1391.6 658.3 L1409.3 664.8 L1421.7 669.3Z"/></clipPath><clipPath id="tri"><path d="M869.5 485.2L1336.9 639.7L688.8 772.6Z"/></clipPath><filter id="bl" x="-5%" y="-5%" width="110%" height="110%"><feGaussianBlur stdDeviation="6"/></filter><filter id="sh" x="-50%" y="-50%" width="200%" height="200%"><feGaussianBlur stdDeviation="1.2"/></filter><g id="cells" class="c"><rect x="476" y="384" fill="#00ffb4"/><rect x="488" y="384" fill="#00ffb4"/><rect x="500" y="384" fill="#00ffb3"/><rect x="512" y="384" fill="#00ffb2"/><rect x="524" y="384" fill="#00ffb0"/><rect x="536" y="384" fill="#00ffae"/><rect x="548" y="384" fill="#00ffad"/><rect x="560" y="384" fill="#00ffab"/><rect x="572" y="384" fill="#00ffa9"/><rect x="584" y="384" fill="#00ffa7"/><rect x="596" y="384" fill="#00ffa5"/><rect x="608" y="384" fill="#00ffa3"/><rect x="620" y="384" fill="#00ffa1"/><rect x="632" y="384" fill="#00ff9e"/><rect x="644" y="384" fill="#00ff9c"/><rect x="656" y="384" fill="#00ff99"/><rect x="668" y="384" fill="#00ff96"/><rect x="680" y="384" fill="#00ff93"/><rect x="692" y="384" fill="#00ff90"/><rect x="704" y="384" fill="#00ff8c"/><rect x="716" y="384" fill="#00ff88"/><rect x="728" y="384" fill="#00ff84"/><rect x="740" y="384" fill="#00ff80"/><rect x="752" y="384" fill="#00ff7b"/><rect x="764" y="384" fill="#00ff76"/><rect x="776" y="384" fill="#00ff70"/><rect x="788" y="384" fill="#00ff69"/><rect x="800" y="384" fill="#00ff61"/><rect x="812" y="384" fill="#00ff58"/><rect x="824" y="384" fill="#00ff4e"/><rect x="836" y="384" fill="#00ff40"/><rect x="848" y="384" fill="#00ff2d"/><rect x="860" y="384" fill="#03ff00"/><rect x="872" y="384" fill="#2fff00"/><rect x="884" y="384" fill="#43ff00"/><rect x="896" y="384" fill="#52ff00"/><rect x="908" y="384" fill="#5eff00"/><rect x="920" y="384" fill="#68ff00"/><rect x="932" y="384" fill="#71ff00"/><rect x="944" y="384" fill="#7aff00"/><rect x="956" y="384" fill="#82ff00"/><rect x="968" y="384" fill="#89ff00"/><rect x="980" y="384" fill="#8fff00"/><rect x="992" y="384" fill="#96ff00"/><rect x="1004" y="384" fill="#9cff00"/><rect x="1016" y="384" fill="#a2ff00"/><rect x="1028" y="384" fill="#a7ff00"/><rect x="1040" y="384" fill="#acff00"/><rect x="1052" y="384" fill="#b1ff00"/><rect x="1064" y="384" fill="#b6ff00"/><rect x="1076" y="384" fill="#bbff00"/><rect x="1088" y="384" fill="#c0ff00"/><rect x="1100" y="384" fill="#c4ff00"/><rect x="1112" y="384" fill="#c8ff00"/><rect x="1124" y="384" fill="#cdff00"/><rect x="1136" y="384" fill="#d1ff00"/><rect x="1148" y="384" fill="#d5ff00"/><rect x="1160" y="384" fill="#d9ff00"/><rect x="1172" y="384" fill="#dcff00"/><rect x="1184" y="384" fill="#e0ff00"/><rect x="1196" y="384" fill="#e4ff00"/><rect x="1208" y="384" fill="#e7ff00"/><rect x="1220" y="384" fill="#ebff00"/><rect x="1232" y="384" fill="#eeff00"/><rect x="1244" y="384" fill="#f2ff00"/><rect x="1256" y="384" fill="#f5ff00"/><rect x="1268" y="384" fill="#f8ff00"/><rect x="1280" y="384" fill="#fbff00"/><rect x="1292" y="384" fill="#feff00"/><rect x="1304" y="384" fill="#fffd00"/><rect x="1316" y="384" fill="#fffa00"/><rect x="1328" y="384" fill="#fff700"/><rect x="1340" y="384" fill="#fff400"/><rect x="1352" y="384" fill="#fff100"/><rect x="1364" y="384" fill="#ffef00"/><rect x="1376" y="384" fill="#ffec00"/><rect x="1388" y="384" fill="#ffea00"/><rect x="1400" y="384" fill="#ffe800"/><rect x="1412" y="384" fill="#ffe500"/><rect x="1424" y="384" fill="#ffe300"/><rect x="1436" y="384" fill="#ffe100"/><rect x="1448" y="384" fill="#ffdf00"/><rect x="476" y="396" fill="#00ffb5"/><rect x="488" y="396" fill="#00ffb5"/><rect x="500" y="396" fill="#00ffb4"/><rect x="512" y="396" fill="#00ffb3"/><rect x="524" y="396" fill="#00ffb1"/><rect x="536" y="396" fill="#00ffaf"/><rect x="548" y="396" fill="#00ffae"/><rect x="560" y="396" fill="#00ffac"/><rect x="572" y="396" fill="#00ffaa"/><rect x="584" y="396" fill="#00ffa8"/><rect x="596" y="396" fill="#00ffa6"/><rect x="608" y="396" fill="#00ffa4"/><rect x="620" y="396" fill="#00ffa2"/><rect x="632" y="396" fill="#00ff9f"/><rect x="644" y="396" fill="#00ff9d"/><rect x="656" y="396" fill="#00ff9a"/><rect x="668" y="396" fill="#00ff97"/><rect x="680" y="396" fill="#00ff94"/><rect x="692" y="396" fill="#00ff91"/><rect x="704" y="396" fill="#00ff8d"/><rect x="716" y="396" fill="#00ff89"/><rect x="728" y="396" fill="#00ff85"/><rect x="740" y="396" fill="#00ff81"/><rect x="752" y="396" fill="#00ff7c"/><rect x="764" y="396" fill="#00ff77"/><rect x="776" y="396" fill="#00ff71"/><rect x="788" y="396" fill="#00ff6a"/><rect x="800" y="396" fill="#00ff62"/><rect x="812" y="396" fill="#00ff5a"/><rect x="824" y="396" fill="#00ff4f"/><rect x="836" y="396" fill="#00ff41"/><rect x="848" y="396" fill="#00ff2e"/><rect x="860" y="396" fill="#00ff01"/><rect x="872" y="396" fill="#2eff00"/><rect x="884" y="396" fill="#43ff00"/><rect x="896" y="396" fill="#52ff00"/><rect x="908" y="396" fill="#5eff00"/><rect x="920" y="396" fill="#69ff00"/><rect x="932" y="396" fill="#72ff00"/><rect x="944" y="396" fill="#7aff00"/><rect x="956" y="396" fill="#82ff00"/><rect x="968" y="396" fill="#8aff00"/><rect x="980" y="396" fill="#90ff00"/><rect x="992" y="396" fill="#97ff00"/><rect x="1004" y="396" fill="#9dff00"/><rect x="1016" y="396" fill="#a3ff00"/><rect x="1028" y="396" fill="#a8ff00"/><rect x="1040" y="396" fill="#aeff00"/><rect x="1052" y="396" fill="#b3ff00"/><rect x="1064" y="396" fill="#b8ff00"/><rect x="1076" y="396" fill="#bcff00"/><rect x="1088" y="396" fill="#c1ff00"/><rect x="1100" y="396" fill="#c5ff00"/><rect x="1112" y="396" fill="#caff00"/><rect x="1124" y="396" fill="#ceff00"/><rect x="1136" y="396" fill="#d2ff00"/><rect x="1148" y="396" fill="#d6ff00"/><rect x="1160" y="396" fill="#daff00"/><rect x="1172" y="396" fill="#deff00"/><rect x="1184" y="396" fill="#e2ff00"/><rect x="1196" y="396" fill="#e5ff00"/><rect x="1208" y="396" fill="#e9ff00"/><rect x="1220" y="396" fill="#ecff00"/><rect x="1232" y="396" fill="#f0ff00"/><rect x="1244" y="396" fill="#f3ff00"/><rect x="1256" y="396" fill="#f7ff00"/><rect x="1268" y="396" fill="#faff00"/><rect x="1280" y="396" fill="#fdff00"/><rect x="1292" y="396" fill="#fffe00"/><rect x="1304" y="396" fill="#fffb00"/><rect x="1316" y="396" fill="#fff800"/><rect x="1328" y="396" fill="#fff500"/><rect x="1340" y="396" fill="#fff200"/><rect x="1352" y="396" fill="#fff000"/><rect x="1364" y="396" fill="#ffed00"/><rect x="1376" y="396" fill="#ffeb00"/><rect x="1388" y="396" fill="#ffe800"/><rect x="1400" y="396" fill="#ffe600"/><rect x="1412" y="396" fill="#ffe400"/><rect x="1424" y="396" fill="#ffe100"/><rect x="1436" y="396" fill="#ffdf00"/><rect x="1448" y="396" fill="#ffdd00"/><rect x="476" y="408" fill="#00ffb8"/><rect x="488" y="408" fill="#00ffb8"/><rect x="500" y="408" fill="#00ffb6"/><rect x="512" y="408" fill="#00ffb5"/><rect x="524" y="408" fill="#00ffb3"/><rect x="536" y="408" fill="#00ffb2"/><rect x="548" y="408" fill="#00ffb0"/><rect x="560" y="408" fill="#00ffae"/><rect x="572" y="408" fill="#00ffad"/><rect x="584" y="408" fill="#00ffab"/><rect x="596" y="408" fill="#00ffa9"/><rect x="608" y="408" fill="#00ffa7"/><rect x="620" y="408" fill="#00ffa4"/><rect x="632" y="408" fill="#00ffa2"/><rect x="644" y="408" fill="#00ff9f"/><rect x="656" y="408" fill="#00ff9d"/><rect x="668" y="408" fill="#00ff9a"/><rect x="680" y="408" fill="#00ff97"/><rect x="692" y="408" fill="#00ff94"/><rect x="704" y="408" fill="#00ff90"/><rect x="716" y="408" fill="#00ff8c"/><rect x="728" y="408" fill="#00ff88"/><rect x="740" y="408" fill="#00ff84"/><rect x="752" y="408" fill="#00ff7f"/><rect x="764" y="408" fill="#00ff7a"/><rect x="776" y="408" fill="#00ff74"/><rect x="788" y="408" fill="#00ff6d"/><rect x="800" y="408" fill="#00ff66"/><rect x="812" y="408" fill="#00ff5d"/><rect x="824" y="408" fill="#00ff52"/><rect x="836" y="408" fill="#00ff45"/><rect x="848" y="408" fill="#00ff33"/><rect x="860" y="408" fill="#00ff0d"/><rect x="872" y="408" fill="#2cff00"/><rect x="884" y="408" fill="#42ff00"/><rect x="896" y="408" fill="#52ff00"/><rect x="908" y="408" fill="#5fff00"/><rect x="920" y="408" fill="#6aff00"/><rect x="932" y="408" fill="#73ff00"/><rect x="944" y="408" fill="#7cff00"/><rect x="956" y="408" fill="#84ff00"/><rect x="968" y="408" fill="#8cff00"/><rect x="980" y="408" fill="#93ff00"/><rect x="992" y="408" fill="#99ff00"/><rect x="1004" y="408" fill="#a0ff00"/><rect x="1016" y="408" fill="#a6ff00"/><rect x="1028" y="408" fill="#abff00"/><rect x="1040" y="408" fill="#b1ff00"/><rect x="1052" y="408" fill="#b6ff00"/><rect x="1064" y="408" fill="#bbff00"/><rect x="1076" y="408" fill="#c0ff00"/><rect x="1088" y="408" fill="#c5ff00"/><rect x="1100" y="408" fill="#c9ff00"/><rect x="1112" y="408" fill="#ceff00"/><rect x="1124" y="408" fill="#d2ff00"/><rect x="1136" y="408" fill="#d6ff00"/><rect x="1148" y="408" fill="#dbff00"/><rect x="1160" y="408" fill="#dfff00"/><rect x="1172" y="408" fill="#e3ff00"/><rect x="1184" y="408" fill="#e6ff00"/><rect x="1196" y="408" fill="#eaff00"/><rect x="1208" y="408" fill="#eeff00"/><rect x="1220" y="408" fill="#f1ff00"/><rect x="1232" y="408" fill="#f5ff00"/><rect x="1244" y="408" fill="#f8ff00"/><rect x="1256" y="408" fill="#fcff00"/><rect x="1268" y="408" fill="#ffff00"/><rect x="1280" y="408" fill="#fffc00"/><rect x="1292" y="408" fill="#fff800"/><rect x="1304" y="408" fill="#fff500"/><rect x="1316" y="408" fill="#fff300"/><rect x="1328" y="408" fill="#fff000"/><rect x="1340" y="408" fill="#ffed00"/><rect x="1352" y="408" fill="#ffeb00"/><rect x="1364" y="408" fill="#ffe800"/><rect x="1376" y="408" fill="#ffe600"/><rect x="1388" y="408" fill="#ffe300"/><rect x="1400" y="408" fill="#ffe100"/><rect x="1412" y="408" fill="#ffdf00"/><rect x="1424" y="408" fill="#ffdd00"/><rect x="1436" y="408" fill="#ffdb00"/><rect x="1448" y="408" fill="#ffd900"/><rect x="476" y="420" fill="#00ffba"/><rect x="488" y="420" fill="#00ffba"/><rect x="500" y="420" fill="#00ffb9"/><rect x="512" y="420" fill="#00ffb7"/><rect x="524" y="420" fill="#00ffb6"/><rect x="536" y="420" fill="#00ffb4"/><rect x="548" y="420" fill="#00ffb3"/><rect x="560" y="420" fill="#00ffb1"/><rect x="572" y="420" fill="#00ffaf"/><rect x="584" y="420" fill="#00ffad"/><rect x="596" y="420" fill="#00ffab"/><rect x="608" y="420" fill="#00ffa9"/><rect x="620" y="420" fill="#00ffa7"/><rect x="632" y="420" fill="#00ffa5"/><rect x="644" y="420" fill="#00ffa2"/><rect x="656" y="420" fill="#00ffa0"/><rect x="668" y="420" fill="#00ff9d"/><rect x="680" y="420" fill="#00ff9a"/><rect x="692" y="420" fill="#00ff97"/><rect x="704" y="420" fill="#00ff93"/><rect x="716" y="420" fill="#00ff8f"/><rect x="728" y="420" fill="#00ff8b"/><rect x="740" y="420" fill="#00ff87"/><rect x="752" y="420" fill="#00ff82"/><rect x="764" y="420" fill="#00ff7d"/><rect x="776" y="420" fill="#00ff77"/><rect x="788" y="420" fill="#00ff70"/><rect x="800" y="420" fill="#00ff69"/><rect x="812" y="420" fill="#00ff60"/><rect x="824" y="420" fill="#00ff56"/><rect x="836" y="420" fill="#00ff49"/><rect x="848" y="420" fill="#00ff37"/><rect x="860" y="420" fill="#00ff16"/><rect x="872" y="420" fill="#2aff00"/><rect x="884" y="420" fill="#42ff00"/><rect x="896" y="420" fill="#52ff00"/><rect x="908" y="420" fill="#60ff00"/><rect x="920" y="420" fill="#6bff00"/><rect x="932" y="420" fill="#75ff00"/><rect x="944" y="420" fill="#7eff00"/><rect x="956" y="420" fill="#87ff00"/><rect x="968" y="420" fill="#8eff00"/><rect x="980" y="420" fill="#96ff00"/><rect x="992" y="420" fill="#9cff00"/><rect x="1004" y="420" fill="#a3ff00"/><rect x="1016" y="420" fill="#a9ff00"/><rect x="1028" y="420" fill="#afff00"/><rect x="1040" y="420" fill="#b4ff00"/><rect x="1052" y="420" fill="#baff00"/><rect x="1064" y="420" fill="#bfff00"/><rect x="1076" y="420" fill="#c4ff00"/><rect x="1088" y="420" fill="#c9ff00"/><rect x="1100" y="420" fill="#ceff00"/><rect x="1112" y="420" fill="#d2ff00"/><rect x="1124" y="420" fill="#d7ff00"/><rect x="1136" y="420" fill="#dbff00"/><rect x="1148" y="420" fill="#dfff00"/><rect x="1160" y="420" fill="#e3ff00"/><rect x="1172" y="420" fill="#e7ff00"/><rect x="1184" y="420" fill="#ebff00"/><rect x="1196" y="420" fill="#efff00"/><rect x="1208" y="420" fill="#f3ff00"/><rect x="1220" y="420" fill="#f7ff00"/><rect x="1232" y="420" fill="#faff00"/><rect x="1244" y="420" fill="#feff00"/><rect x="1256" y="420" fill="#fffd00"/><rect x="1268" y="420" fill="#fff900"/><rect x="1280" y="420" fill="#fff600"/><rect x="1292" y="420" fill="#fff300"/><rect x="1304" y="420" fill="#fff000"/><rect x="1316" y="420" fill="#ffed00"/><rect x="1328" y="420" fill="#ffeb00"/><rect x="1340" y="420" fill="#ffe800"/><rect x="1352" y="420" fill="#ffe500"/><rect x="1364" y="420" fill="#ffe300"/><rect x="1376" y="420" fill="#ffe100"/><rect x="1388" y="420" fill="#ffde00"/><rect x="1400" y="420" fill="#ffdc00"/><rect x="1412" y="420" fill="#ffda00"/><rect x="1424" y="420" fill="#ffd800"/><rect x="1436" y="420" fill="#ffd600"/><rect x="1448" y="420" fill="#ffd400"/><rect x="476" y="432" fill="#00ffbd"/><rect x="488" y="432" fill="#00ffbd"/><rect x="500" y="432" fill="#00ffbb"/><rect x="512" y="432" fill="#00ffba"/><rect x="524" y="432" fill="#00ffb9"/><rect x="536" y="432" fill="#00ffb7"/><rect x="548" y="432" fill="#00ffb5"/><rect x="560" y="432" fill="#00ffb4"/><rect x="572" y="432" fill="#00ffb2"/><rect x="584" y="432" fill="#00ffb0"/><rect x="596" y="432" fill="#00ffae"/><rect x="608" y="432" fill="#00ffac"/><rect x="620" y="432" fill="#00ffaa"/><rect x="632" y="432" fill="#00ffa8"/><rect x="644" y="432" fill="#00ffa5"/><rect x="656" y="432" fill="#00ffa3"/><rect x="668" y="432" fill="#00ffa0"/><rect x="680" y="432" fill="#00ff9d"/><rect x="692" y="432" fill="#00ff9a"/><rect x="704" y="432" fill="#00ff96"/><rect x="716" y="432" fill="#00ff93"/><rect x="728" y="432" fill="#00ff8f"/><rect x="740" y="432" fill="#00ff8a"/><rect x="752" y="432" fill="#00ff85"/><rect x="764" y="432" fill="#00ff80"/><rect x="776" y="432" fill="#00ff7a"/><rect x="788" y="432" fill="#00ff74"/><rect x="800" y="432" fill="#00ff6c"/><rect x="812" y="432" fill="#00ff64"/><rect x="824" y="432" fill="#00ff59"/><rect x="836" y="432" fill="#00ff4c"/><rect x="848" y="432" fill="#00ff3b"/><rect x="860" y="432" fill="#00ff1e"/><rect x="872" y="432" fill="#27ff00"/><rect x="884" y="432" fill="#41ff00"/><rect x="896" y="432" fill="#53ff00"/><rect x="908" y="432" fill="#61ff00"/><rect x="920" y="432" fill="#6dff00"/><rect x="932" y="432" fill="#77ff00"/><rect x="944" y="432" fill="#81ff00"/><rect x="956" y="432" fill="#89ff00"/><rect x="968" y="432" fill="#91ff00"/><rect x="980" y="432" fill="#99ff00"/><rect x="992" y="432" fill="#a0ff00"/><rect x="1004" y="432" fill="#a6ff00"/><rect x="1016" y="432" fill="#adff00"/><rect x="1028" y="432" fill="#b3ff00"/><rect x="1040" y="432" fill="#b8ff00"/><rect x="1052" y="432" fill="#beff00"/><rect x="1064" y="432" fill="#c3ff00"/><rect x="1076" y="432" fill="#c8ff00"/><rect x="1088" y="432" fill="#cdff00"/><rect x="1100" y="432" fill="#d2ff00"/><rect x="1112" y="432" fill="#d7ff00"/><rect x="1124" y="432" fill="#dcff00"/><rect x="1136" y="432" fill="#e0ff00"/><rect x="1148" y="432" fill="#e4ff00"/><rect x="1160" y="432" fill="#e9ff00"/><rect x="1172" y="432" fill="#edff00"/><rect x="1184" y="432" fill="#f1ff00"/><rect x="1196" y="432" fill="#f5ff00"/><rect x="1208" y="432" fill="#f9ff00"/><rect x="1220" y="432" fill="#fcff00"/><rect x="1232" y="432" fill="#fffe00"/><rect x="1244" y="432" fill="#fffa00"/><rect x="1256" y="432" fill="#fff700"/><rect x="1268" y="432" fill="#fff400"/><rect x="1280" y="432" fill="#fff000"/><rect x="1292" y="432" fill="#ffed00"/><rect x="1304" y="432" fill="#ffeb00"/><rect x="1316" y="432" fill="#ffe800"/><rect x="1328" y="432" fill="#ffe500"/><rect x="1340" y="432" fill="#ffe300"/><rect x="1352" y="432" fill="#ffe000"/><rect x="1364" y="432" fill="#ffde00"/><rect x="1376" y="432" fill="#ffdb00"/><rect x="1388" y="432" fill="#ffd900"/><rect x="1400" y="432" fill="#ffd700"/><rect x="1412" y="432" fill="#ffd500"/><rect x="1424" y="432" fill="#ffd300"/><rect x="1436" y="432" fill="#ffd100"/><rect x="1448" y="432" fill="#ffcf00"/><rect x="476" y="444" fill="#00ffbf"/><rect x="488" y="444" fill="#00ffbf"/><rect x="500" y="444" fill="#00ffbe"/><rect x="512" y="444" fill="#00ffbd"/><rect x="524" y="444" fill="#00ffbb"/><rect x="536" y="444" fill="#00ffba"/><rect x="548" y="444" fill="#00ffb8"/><rect x="560" y="444" fill="#00ffb7"/><rect x="572" y="444" fill="#00ffb5"/><rect x="584" y="444" fill="#00ffb3"/><rect x="596" y="444" fill="#00ffb1"/><rect x="608" y="444" fill="#00ffaf"/><rect x="620" y="444" fill="#00ffad"/><rect x="632" y="444" fill="#00ffab"/><rect x="644" y="444" fill="#00ffa8"/><rect x="656" y="444" fill="#00ffa6"/><rect x="668" y="444" fill="#00ffa3"/><rect x="680" y="444" fill="#00ffa0"/><rect x="692" y="444" fill="#00ff9d"/><rect x="704" y="444" fill="#00ff99"/><rect x="716" y="444" fill="#00ff96"/><rect x="728" y="444" fill="#00ff92"/><rect x="740" y="444" fill="#00ff8e"/><rect x="752" y="444" fill="#00ff89"/><rect x="764" y="444" fill="#00ff84"/><rect x="776" y="444" fill="#00ff7e"/><rect x="788" y="444" fill="#00ff77"/><rect x="800" y="444" fill="#00ff70"/><rect x="812" y="444" fill="#00ff67"/><rect x="824" y="444" fill="#00ff5d"/><rect x="836" y="444" fill="#00ff50"/><rect x="848" y="444" fill="#00ff3f"/><rect x="860" y="444" fill="#00ff24"/><rect x="872" y="444" fill="#23ff00"/><rect x="884" y="444" fill="#40ff00"/><rect x="896" y="444" fill="#53ff00"/><rect x="908" y="444" fill="#62ff00"/><rect x="920" y="444" fill="#6eff00"/><rect x="932" y="444" fill="#79ff00"/><rect x="944" y="444" fill="#83ff00"/><rect x="956" y="444" fill="#8cff00"/><rect x="968" y="444" fill="#94ff00"/><rect x="980" y="444" fill="#9cff00"/><rect x="992" y="444" fill="#a3ff00"/><rect x="1004" y="444" fill="#aaff00"/><rect x="1016" y="444" fill="#b0ff00"/><rect x="1028" y="444" fill="#b7ff00"/><rect x="1040" y="444" fill="#bdff00"/><rect x="1052" y="444" fill="#c2ff00"/><rect x="1064" y="444" fill="#c8ff00"/><rect x="1076" y="444" fill="#cdff00"/><rect x="1088" y="444" fill="#d2ff00"/><rect x="1100" y="444" fill="#d7ff00"/><rect x="1112" y="444" fill="#dcff00"/><rect x="1124" y="444" fill="#e1ff00"/><rect x="1136" y="444" fill="#e5ff00"/><rect x="1148" y="444" fill="#eaff00"/><rect x="1160" y="444" fill="#eeff00"/><rect x="1172" y="444" fill="#f3ff00"/><rect x="1184" y="444" fill="#f7ff00"/><rect x="1196" y="444" fill="#fbff00"/><rect x="1208" y="444" fill="#ffff00"/><rect x="1220" y="444" fill="#fffb00"/><rect x="1232" y="444" fill="#fff800"/><rect x="1244" y="444" fill="#fff400"/><rect x="1256" y="444" fill="#fff100"/><rect x="1268" y="444" fill="#ffee00"/><rect x="1280" y="444" fill="#ffeb00"/><rect x="1292" y="444" fill="#ffe800"/><rect x="1304" y="444" fill="#ffe500"/><rect x="1316" y="444" fill="#ffe200"/><rect x="1328" y="444" fill="#ffdf00"/><rect x="1340" y="444" fill="#ffdd00"/><rect x="1352" y="444" fill="#ffda00"/><rect x="1364" y="444" fill="#ffd800"/><rect x="1376" y="444" fill="#ffd600"/><rect x="1388" y="444" fill="#ffd400"/><rect x="1400" y="444" fill="#ffd100"/><rect x="1412" y="444" fill="#ffcf00"/><rect x="1424" y="444" fill="#ffcd00"/><rect x="1436" y="444" fill="#ffcb00"/><rect x="1448" y="444" fill="#ffca00"/><rect x="476" y="456" fill="#00ffc2"/><rect x="488" y="456" fill="#00ffc2"/><rect x="500" y="456" fill="#00ffc1"/><rect x="512" y="456" fill="#00ffc0"/><rect x="524" y="456" fill="#00ffbe"/><rect x="536" y="456" fill="#00ffbd"/><rect x="548" y="456" fill="#00ffbb"/><rect x="560" y="456" fill="#00ffba"/><rect x="572" y="456" fill="#00ffb8"/><rect x="584" y="456" fill="#00ffb6"/><rect x="596" y="456" fill="#00ffb4"/><rect x="608" y="456" fill="#00ffb2"/><rect x="620" y="456" fill="#00ffb0"/><rect x="632" y="456" fill="#00ffae"/><rect x="644" y="456" fill="#00ffab"/><rect x="656" y="456" fill="#00ffa9"/><rect x="668" y="456" fill="#00ffa6"/><rect x="680" y="456" fill="#00ffa3"/><rect x="692" y="456" fill="#00ffa0"/><rect x="704" y="456" fill="#00ff9d"/><rect x="716" y="456" fill="#00ff99"/><rect x="728" y="456" fill="#00ff95"/><rect x="740" y="456" fill="#00ff91"/><rect x="752" y="456" fill="#00ff8c"/><rect x="764" y="456" fill="#00ff87"/><rect x="776" y="456" fill="#00ff82"/><rect x="788" y="456" fill="#00ff7b"/><rect x="800" y="456" fill="#00ff74"/><rect x="812" y="456" fill="#00ff6b"/><rect x="824" y="456" fill="#00ff61"/><rect x="836" y="456" fill="#00ff54"/><rect x="848" y="456" fill="#00ff44"/><rect x="860" y="456" fill="#00ff2a"/><rect x="872" y="456" fill="#1eff00"/><rect x="884" y="456" fill="#40ff00"/><rect x="896" y="456" fill="#54ff00"/><rect x="908" y="456" fill="#63ff00"/><rect x="920" y="456" fill="#70ff00"/><rect x="932" y="456" fill="#7bff00"/><rect x="944" y="456" fill="#86ff00"/><rect x="956" y="456" fill="#8fff00"/><rect x="968" y="456" fill="#97ff00"/><rect x="980" y="456" fill="#9fff00"/><rect x="992" y="456" fill="#a7ff00"/><rect x="1004" y="456" fill="#aeff00"/><rect x="1016" y="456" fill="#b5ff00"/><rect x="1028" y="456" fill="#bbff00"/><rect x="1040" y="456" fill="#c1ff00"/><rect x="1052" y="456" fill="#c7ff00"/><rect x="1064" y="456" fill="#cdff00"/><rect x="1076" y="456" fill="#d2ff00"/><rect x="1088" y="456" fill="#d8ff00"/><rect x="1100" y="456" fill="#ddff00"/><rect x="1112" y="456" fill="#e2ff00"/><rect x="1124" y="456" fill="#e7ff00"/><rect x="1136" y="456" fill="#ebff00"/><rect x="1148" y="456" fill="#f0ff00"/><rect x="1160" y="456" fill="#f5ff00"/><rect x="1172" y="456" fill="#f9ff00"/><rect x="1184" y="456" fill="#fdff00"/><rect x="1196" y="456" fill="#fffd00"/><rect x="1208" y="456" fill="#fff900"/><rect x="1220" y="456" fill="#fff500"/><rect x="1232" y="456" fill="#fff100"/><rect x="1244" y="456" fill="#ffee00"/><rect x="1256" y="456" fill="#ffeb00"/><rect x="1268" y="456" fill="#ffe700"/><rect x="1280" y="456" fill="#ffe400"/><rect x="1292" y="456" fill="#ffe200"/><rect x="1304" y="456" fill="#ffdf00"/><rect x="1316" y="456" fill="#ffdc00"/><rect x="1328" y="456" fill="#ffda00"/><rect x="1340" y="456" fill="#ffd700"/><rect x="1352" y="456" fill="#ffd500"/><rect x="1364" y="456" fill="#ffd200"/><rect x="1376" y="456" fill="#ffd000"/><rect x="1388" y="456" fill="#ffce00"/><rect x="1400" y="456" fill="#ffcc00"/><rect x="1412" y="456" fill="#ffca00"/><rect x="1424" y="456" fill="#ffc800"/><rect x="1436" y="456" fill="#ffc600"/><rect x="1448" y="456" fill="#ffc400"/><rect x="476" y="468" fill="#00ffc5"/><rect x="488" y="468" fill="#00ffc5"/><rect x="500" y="468" fill="#00ffc4"/><rect x="512" y="468" fill="#00ffc2"/><rect x="524" y="468" fill="#00ffc1"/><rect x="536" y="468" fill="#00ffc0"/><rect x="548" y="468" fill="#00ffbe"/><rect x="560" y="468" fill="#00ffbd"/><rect x="572" y="468" fill="#00ffbb"/><rect x="584" y="468" fill="#00ffb9"/><rect x="596" y="468" fill="#00ffb7"/><rect x="608" y="468" fill="#00ffb5"/><rect x="620" y="468" fill="#00ffb3"/><rect x="632" y="468" fill="#00ffb1"/><rect x="644" y="468" fill="#00ffaf"/><rect x="656" y="468" fill="#00ffac"/><rect x="668" y="468" fill="#00ffaa"/><rect x="680" y="468" fill="#00ffa7"/><rect x="692" y="468" fill="#00ffa4"/><rect x="704" y="468" fill="#00ffa1"/><rect x="716" y="468" fill="#00ff9d"/><rect x="728" y="468" fill="#00ff99"/><rect x="740" y="468" fill="#00ff95"/><rect x="752" y="468" fill="#00ff90"/><rect x="764" y="468" fill="#00ff8b"/><rect x="776" y="468" fill="#00ff86"/><rect x="788" y="468" fill="#00ff7f"/><rect x="800" y="468" fill="#00ff78"/><rect x="812" y="468" fill="#00ff6f"/><rect x="824" y="468" fill="#00ff65"/><rect x="836" y="468" fill="#00ff59"/><rect x="848" y="468" fill="#00ff49"/><rect x="860" y="468" fill="#00ff30"/><rect x="872" y="468" fill="#18ff00"/><rect x="884" y="468" fill="#3fff00"/><rect x="896" y="468" fill="#54ff00"/><rect x="908" y="468" fill="#64ff00"/><rect x="920" y="468" fill="#72ff00"/><rect x="932" y="468" fill="#7eff00"/><rect x="944" y="468" fill="#89ff00"/><rect x="956" y="468" fill="#92ff00"/><rect x="968" y="468" fill="#9bff00"/><rect x="980" y="468" fill="#a3ff00"/><rect x="992" y="468" fill="#abff00"/><rect x="1004" y="468" fill="#b3ff00"/><rect x="1016" y="468" fill="#baff00"/><rect x="1028" y="468" fill="#c0ff00"/><rect x="1040" y="468" fill="#c7ff00"/><rect x="1052" y="468" fill="#cdff00"/><rect x="1064" y="468" fill="#d3ff00"/><rect x="1076" y="468" fill="#d8ff00"/><rect x="1088" y="468" fill="#deff00"/><rect x="1100" y="468" fill="#e3ff00"/><rect x="1112" y="468" fill="#e8ff00"/><rect x="1124" y="468" fill="#edff00"/><rect x="1136" y="468" fill="#f2ff00"/><rect x="1148" y="468" fill="#f7ff00"/><rect x="1160" y="468" fill="#fbff00"/><rect x="1172" y="468" fill="#fffe00"/><rect x="1184" y="468" fill="#fffa00"/><rect x="1196" y="468" fill="#fff600"/><rect x="1208" y="468" fill="#fff200"/><rect x="1220" y="468" fill="#ffee00"/><rect x="1232" y="468" fill="#ffeb00"/><rect x="1244" y="468" fill="#ffe700"/><rect x="1256" y="468" fill="#ffe400"/><rect x="1268" y="468" fill="#ffe100"/><rect x="1280" y="468" fill="#ffde00"/><rect x="1292" y="468" fill="#ffdb00"/><rect x="1304" y="468" fill="#ffd800"/><rect x="1316" y="468" fill="#ffd600"/><rect x="1328" y="468" fill="#ffd300"/><rect x="1340" y="468" fill="#ffd100"/><rect x="1352" y="468" fill="#ffcf00"/><rect x="1364" y="468" fill="#ffcc00"/><rect x="1376" y="468" fill="#ffca00"/><rect x="1388" y="468" fill="#ffc800"/><rect x="1400" y="468" fill="#ffc600"/><rect x="1412" y="468" fill="#ffc400"/><rect x="1424" y="468" fill="#ffc200"/><rect x="1436" y="468" fill="#ffc000"/><rect x="1448" y="468" fill="#ffbf00"/><rect x="476" y="480" fill="#00ffc8"/><rect x="488" y="480" fill="#00ffc8"/><rect x="500" y="480" fill="#00ffc7"/><rect x="512" y="480" fill="#00ffc5"/><rect x="524" y="480" fill="#00ffc4"/><rect x="536" y="480" fill="#00ffc3"/><rect x="548" y="480" fill="#00ffc1"/><rect x="560" y="480" fill="#00ffc0"/><rect x="572" y="480" fill="#00ffbe"/><rect x="584" y="480" fill="#00ffbc"/><rect x="596" y="480" fill="#00ffbb"/><rect x="608" y="480" fill="#00ffb9"/><rect x="620" y="480" fill="#00ffb7"/><rect x="632" y="480" fill="#00ffb5"/><rect x="644" y="480" fill="#00ffb2"/><rect x="656" y="480" fill="#00ffb0"/><rect x="668" y="480" fill="#00ffad"/><rect x="680" y="480" fill="#00ffab"/><rect x="692" y="480" fill="#00ffa8"/><rect x="704" y="480" fill="#00ffa4"/><rect x="716" y="480" fill="#00ffa1"/><rect x="728" y="480" fill="#00ff9d"/><rect x="740" y="480" fill="#00ff99"/><rect x="752" y="480" fill="#00ff94"/><rect x="764" y="480" fill="#00ff8f"/><rect x="776" y="480" fill="#00ff8a"/><rect x="788" y="480" fill="#00ff83"/><rect x="800" y="480" fill="#00ff7c"/><rect x="812" y="480" fill="#00ff74"/><rect x="824" y="480" fill="#00ff6a"/><rect x="836" y="480" fill="#00ff5d"/><rect x="848" y="480" fill="#00ff4e"/><rect x="860" y="480" fill="#00ff36"/><rect x="872" y="480" fill="#0eff00"/><rect x="884" y="480" fill="#3dff00"/><rect x="896" y="480" fill="#55ff00"/><rect x="908" y="480" fill="#66ff00"/><rect x="920" y="480" fill="#74ff00"/><rect x="932" y="480" fill="#81ff00"/><rect x="944" y="480" fill="#8cff00"/><rect x="956" y="480" fill="#96ff00"/><rect x="968" y="480" fill="#9fff00"/><rect x="980" y="480" fill="#a8ff00"/><rect x="992" y="480" fill="#b0ff00"/><rect x="1004" y="480" fill="#b8ff00"/><rect x="1016" y="480" fill="#bfff00"/><rect x="1028" y="480" fill="#c6ff00"/><rect x="1040" y="480" fill="#ccff00"/><rect x="1052" y="480" fill="#d3ff00"/><rect x="1064" y="480" fill="#d9ff00"/><rect x="1076" y="480" fill="#dfff00"/><rect x="1088" y="480" fill="#e4ff00"/><rect x="1100" y="480" fill="#eaff00"/><rect x="1112" y="480" fill="#efff00"/><rect x="1124" y="480" fill="#f4ff00"/><rect x="1136" y="480" fill="#f9ff00"/><rect x="1148" y="480" fill="#feff00"/><rect x="1160" y="480" fill="#fffb00"/><rect x="1172" y="480" fill="#fff700"/><rect x="1184" y="480" fill="#fff200"/><rect x="1196" y="480" fill="#ffee00"/><rect x="1208" y="480" fill="#ffeb00"/><rect x="1220" y="480" fill="#ffe700"/><rect x="1232" y="480" fill="#ffe400"/><rect x="1244" y="480" fill="#ffe000"/><rect x="1256" y="480" fill="#ffdd00"/><rect x="1268" y="480" fill="#ffda00"/><rect x="1280" y="480" fill="#ffd700"/><rect x="1292" y="480" fill="#ffd500"/><rect x="1304" y="480" fill="#ffd200"/><rect x="1316" y="480" fill="#ffcf00"/><rect x="1328" y="480" fill="#ffcd00"/><rect x="1340" y="480" fill="#ffcb00"/><rect x="1352" y="480" fill="#ffc800"/><rect x="1364" y="480" fill="#ffc600"/><rect x="1376" y="480" fill="#ffc400"/><rect x="1388" y="480" fill="#ffc200"/><rect x="1400" y="480" fill="#ffc000"/><rect x="1412" y="480" fill="#ffbe00"/><rect x="1424" y="480" fill="#ffbc00"/><rect x="1436" y="480" fill="#ffba00"/><rect x="1448" y="480" fill="#ffb900"/><rect x="476" y="492" fill="#00ffcb"/><rect x="488" y="492" fill="#00ffcb"/><rect x="500" y="492" fill="#00ffca"/><rect x="512" y="492" fill="#00ffc9"/><rect x="524" y="492" fill="#00ffc7"/><rect x="536" y="492" fill="#00ffc6"/><rect x="548" y="492" fill="#00ffc5"/><rect x="560" y="492" fill="#00ffc3"/><rect x="572" y="492" fill="#00ffc2"/><rect x="584" y="492" fill="#00ffc0"/><rect x="596" y="492" fill="#00ffbe"/><rect x="608" y="492" fill="#00ffbc"/><rect x="620" y="492" fill="#00ffba"/><rect x="632" y="492" fill="#00ffb8"/><rect x="644" y="492" fill="#00ffb6"/><rect x="656" y="492" fill="#00ffb4"/><rect x="668" y="492" fill="#00ffb1"/><rect x="680" y="492" fill="#00ffaf"/><rect x="692" y="492" fill="#00ffac"/><rect x="704" y="492" fill="#00ffa8"/><rect x="716" y="492" fill="#00ffa5"/><rect x="728" y="492" fill="#00ffa1"/><rect x="740" y="492" fill="#00ff9d"/><rect x="752" y="492" fill="#00ff99"/><rect x="764" y="492" fill="#00ff94"/><rect x="776" y="492" fill="#00ff8e"/><rect x="788" y="492" fill="#00ff88"/><rect x="800" y="492" fill="#00ff81"/><rect x="812" y="492" fill="#00ff78"/><rect x="824" y="492" fill="#00ff6e"/><rect x="836" y="492" fill="#00ff62"/><rect x="848" y="492" fill="#00ff53"/><rect x="860" y="492" fill="#00ff3c"/><rect x="872" y="492" fill="#00ff04"/><rect x="884" y="492" fill="#3cff00"/><rect x="896" y="492" fill="#55ff00"/><rect x="908" y="492" fill="#68ff00"/><rect x="920" y="492" fill="#77ff00"/><rect x="932" y="492" fill="#84ff00"/><rect x="944" y="492" fill="#90ff00"/><rect x="956" y="492" fill="#9aff00"/><rect x="968" y="492" fill="#a4ff00"/><rect x="980" y="492" fill="#adff00"/><rect x="992" y="492" fill="#b5ff00"/><rect x="1004" y="492" fill="#bdff00"/><rect x="1016" y="492" fill="#c5ff00"/><rect x="1028" y="492" fill="#ccff00"/><rect x="1040" y="492" fill="#d3ff00"/><rect x="1052" y="492" fill="#d9ff00"/><rect x="1064" y="492" fill="#e0ff00"/><rect x="1076" y="492" fill="#e6ff00"/><rect x="1088" y="492" fill="#ecff00"/><rect x="1100" y="492" fill="#f1ff00"/><rect x="1112" y="492" fill="#f7ff00"/><rect x="1124" y="492" fill="#fcff00"/><rect x="1136" y="492" fill="#fffd00"/><rect x="1148" y="492" fill="#fff800"/><rect x="1160" y="492" fill="#fff300"/><rect x="1172" y="492" fill="#ffef00"/><rect x="1184" y="492" fill="#ffeb00"/><rect x="1196" y="492" fill="#ffe700"/><rect x="1208" y="492" fill="#ffe300"/><rect x="1220" y="492" fill="#ffe000"/><rect x="1232" y="492" fill="#ffdc00"/><rect x="1244" y="492" fill="#ffd900"/><rect x="1256" y="492" fill="#ffd600"/><rect x="1268" y="492" fill="#ffd300"/><rect x="1280" y="492" fill="#ffd000"/><rect x="1292" y="492" fill="#ffce00"/><rect x="1304" y="492" fill="#ffcb00"/><rect x="1316" y="492" fill="#ffc900"/><rect x="1328" y="492" fill="#ffc600"/><rect x="1340" y="492" fill="#ffc400"/><rect x="1352" y="492" fill="#ffc200"/><rect x="1364" y="492" fill="#ffc000"/><rect x="1376" y="492" fill="#ffbd00"/><rect x="1388" y="492" fill="#ffbb00"/><rect x="1400" y="492" fill="#ffba00"/><rect x="1412" y="492" fill="#ffb800"/><rect x="1424" y="492" fill="#ffb600"/><rect x="1436" y="492" fill="#ffb400"/><rect x="1448" y="492" fill="#ffb200"/><rect x="476" y="504" fill="#00ffce"/><rect x="488" y="504" fill="#00ffce"/><rect x="500" y="504" fill="#00ffcd"/><rect x="512" y="504" fill="#00ffcc"/><rect x="524" y="504" fill="#00ffcb"/><rect x="536" y="504" fill="#00ffc9"/><rect x="548" y="504" fill="#00ffc8"/><rect x="560" y="504" fill="#00ffc7"/><rect x="572" y="504" fill="#00ffc5"/><rect x="584" y="504" fill="#00ffc4"/><rect x="596" y="504" fill="#00ffc2"/><rect x="608" y="504" fill="#00ffc0"/><rect x="620" y="504" fill="#00ffbe"/><rect x="632" y="504" fill="#00ffbc"/><rect x="644" y="504" fill="#00ffba"/><rect x="656" y="504" fill="#00ffb8"/><rect x="668" y="504" fill="#00ffb5"/><rect x="680" y="504" fill="#00ffb3"/><rect x="692" y="504" fill="#00ffb0"/><rect x="704" y="504" fill="#00ffad"/><rect x="716" y="504" fill="#00ffa9"/><rect x="728" y="504" fill="#00ffa6"/><rect x="740" y="504" fill="#00ffa2"/><rect x="752" y="504" fill="#00ff9d"/><rect x="764" y="504" fill="#00ff98"/><rect x="776" y="504" fill="#00ff93"/><rect x="788" y="504" fill="#00ff8d"/><rect x="800" y="504" fill="#00ff86"/><rect x="812" y="504" fill="#00ff7d"/><rect x="824" y="504" fill="#00ff74"/><rect x="836" y="504" fill="#00ff68"/><rect x="848" y="504" fill="#00ff58"/><rect x="860" y="504" fill="#00ff42"/><rect x="872" y="504" fill="#00ff15"/><rect x="884" y="504" fill="#3aff00"/><rect x="896" y="504" fill="#56ff00"/><rect x="908" y="504" fill="#6aff00"/><rect x="920" y="504" fill="#7aff00"/><rect x="932" y="504" fill="#88ff00"/><rect x="944" y="504" fill="#94ff00"/><rect x="956" y="504" fill="#9fff00"/><rect x="968" y="504" fill="#a9ff00"/><rect x="980" y="504" fill="#b2ff00"/><rect x="992" y="504" fill="#bbff00"/><rect x="1004" y="504" fill="#c3ff00"/><rect x="1016" y="504" fill="#cbff00"/><rect x="1028" y="504" fill="#d3ff00"/><rect x="1040" y="504" fill="#daff00"/><rect x="1052" y="504" fill="#e1ff00"/><rect x="1064" y="504" fill="#e7ff00"/><rect x="1076" y="504" fill="#eeff00"/><rect x="1088" y="504" fill="#f4ff00"/><rect x="1100" y="504" fill="#faff00"/><rect x="1112" y="504" fill="#fffe00"/><rect x="1124" y="504" fill="#fff900"/><rect x="1136" y="504" fill="#fff400"/><rect x="1148" y="504" fill="#ffef00"/><rect x="1160" y="504" fill="#ffeb00"/><rect x="1172" y="504" fill="#ffe600"/><rect x="1184" y="504" fill="#ffe200"/><rect x="1196" y="504" fill="#ffdf00"/><rect x="1208" y="504" fill="#ffdb00"/><rect x="1220" y="504" fill="#ffd800"/><rect x="1232" y="504" fill="#ffd400"/><rect x="1244" y="504" fill="#ffd100"/><rect x="1256" y="504" fill="#ffce00"/><rect x="1268" y="504" fill="#ffcc00"/><rect x="1280" y="504" fill="#ffc900"/><rect x="1292" y="504" fill="#ffc600"/><rect x="1304" y="504" fill="#ffc400"/><rect x="1316" y="504" fill="#ffc100"/><rect x="1328" y="504" fill="#ffbf00"/><rect x="1340" y="504" fill="#ffbd00"/><rect x="1352" y="504" fill="#ffbb00"/><rect x="1364" y="504" fill="#ffb900"/><rect x="1376" y="504" fill="#ffb700"/><rect x="1388" y="504" fill="#ffb500"/><rect x="1400" y="504" fill="#ffb300"/><rect x="1412" y="504" fill="#ffb100"/><rect x="1424" y="504" fill="#ffaf00"/><rect x="1436" y="504" fill="#ffad00"/><rect x="1448" y="504" fill="#ffac00"/><rect x="476" y="516" fill="#00ffd1"/><rect x="488" y="516" fill="#00ffd1"/><rect x="500" y="516" fill="#00ffd0"/><rect x="512" y="516" fill="#00ffcf"/><rect x="524" y="516" fill="#00ffce"/><rect x="536" y="516" fill="#00ffcd"/><rect x="548" y="516" fill="#00ffcc"/><rect x="560" y="516" fill="#00ffca"/><rect x="572" y="516" fill="#00ffc9"/><rect x="584" y="516" fill="#00ffc7"/><rect x="596" y="516" fill="#00ffc6"/><rect x="608" y="516" fill="#00ffc4"/><rect x="620" y="516" fill="#00ffc2"/><rect x="632" y="516" fill="#00ffc0"/><rect x="644" y="516" fill="#00ffbe"/><rect x="656" y="516" fill="#00ffbc"/><rect x="668" y="516" fill="#00ffba"/><rect x="680" y="516" fill="#00ffb7"/><rect x="692" y="516" fill="#00ffb4"/><rect x="704" y="516" fill="#00ffb1"/><rect x="716" y="516" fill="#00ffae"/><rect x="728" y="516" fill="#00ffab"/><rect x="740" y="516" fill="#00ffa7"/><rect x="752" y="516" fill="#00ffa2"/><rect x="764" y="516" fill="#00ff9d"/><rect x="776" y="516" fill="#00ff98"/><rect x="788" y="516" fill="#00ff92"/><rect x="800" y="516" fill="#00ff8b"/><rect x="812" y="516" fill="#00ff83"/><rect x="824" y="516" fill="#00ff79"/><rect x="836" y="516" fill="#00ff6d"/><rect x="848" y="516" fill="#00ff5e"/><rect x="860" y="516" fill="#00ff49"/><rect x="872" y="516" fill="#12ff28"/><rect x="884" y="516" fill="#3fff19"/><rect x="896" y="516" fill="#57ff00"/><rect x="908" y="516" fill="#6cff00"/><rect x="920" y="516" fill="#7dff00"/><rect x="932" y="516" fill="#8cff00"/><rect x="944" y="516" fill="#99ff00"/><rect x="956" y="516" fill="#a4ff00"/><rect x="968" y="516" fill="#afff00"/><rect x="980" y="516" fill="#b9ff00"/><rect x="992" y="516" fill="#c2ff00"/><rect x="1004" y="516" fill="#cbff00"/><rect x="1016" y="516" fill="#d3ff00"/><rect x="1028" y="516" fill="#dbff00"/><rect x="1040" y="516" fill="#e2ff00"/><rect x="1052" y="516" fill="#e9ff00"/><rect x="1064" y="516" fill="#f0ff00"/><rect x="1076" y="516" fill="#f7ff00"/><rect x="1088" y="516" fill="#fdff00"/><rect x="1100" y="516" fill="#fffb00"/><rect x="1112" y="516" fill="#fff500"/><rect x="1124" y="516" fill="#fff000"/><rect x="1136" y="516" fill="#ffeb00"/><rect x="1148" y="516" fill="#ffe600"/><rect x="1160" y="516" fill="#ffe200"/><rect x="1172" y="516" fill="#ffde00"/><rect x="1184" y="516" fill="#ffda00"/><rect x="1196" y="516" fill="#ffd600"/><rect x="1208" y="516" fill="#ffd300"/><rect x="1220" y="516" fill="#ffcf00"/><rect x="1232" y="516" fill="#ffcc00"/><rect x="1244" y="516" fill="#ffc900"/><rect x="1256" y="516" fill="#ffc600"/><rect x="1268" y="516" fill="#ffc400"/><rect x="1280" y="516" fill="#ffc100"/><rect x="1292" y="516" fill="#ffbe00"/><rect x="1304" y="516" fill="#ffbc00"/><rect x="1316" y="516" fill="#ffba00"/><rect x="1328" y="516" fill="#ffb700"/><rect x="1340" y="516" fill="#ffb500"/><rect x="1352" y="516" fill="#ffb300"/><rect x="1364" y="516" fill="#ffb100"/><rect x="1376" y="516" fill="#ffaf00"/><rect x="1388" y="516" fill="#ffad00"/><rect x="1400" y="516" fill="#ffac00"/><rect x="1412" y="516" fill="#ffaa00"/><rect x="1424" y="516" fill="#ffa800"/><rect x="1436" y="516" fill="#ffa700"/><rect x="1448" y="516" fill="#ffa500"/><rect x="476" y="528" fill="#00ffd5"/><rect x="488" y="528" fill="#00ffd5"/><rect x="500" y="528" fill="#00ffd4"/><rect x="512" y="528" fill="#00ffd3"/><rect x="524" y="528" fill="#00ffd2"/><rect x="536" y="528" fill="#00ffd1"/><rect x="548" y="528" fill="#00ffcf"/><rect x="560" y="528" fill="#00ffce"/><rect x="572" y="528" fill="#00ffcd"/><rect x="584" y="528" fill="#00ffcb"/><rect x="596" y="528" fill="#00ffca"/><rect x="608" y="528" fill="#00ffc8"/><rect x="620" y="528" fill="#00ffc6"/><rect x="632" y="528" fill="#00ffc5"/><rect x="644" y="528" fill="#00ffc3"/><rect x="656" y="528" fill="#00ffc1"/><rect x="668" y="528" fill="#00ffbe"/><rect x="680" y="528" fill="#00ffbc"/><rect x="692" y="528" fill="#00ffb9"/><rect x="704" y="528" fill="#00ffb6"/><rect x="716" y="528" fill="#00ffb3"/><rect x="728" y="528" fill="#00ffb0"/><rect x="740" y="528" fill="#00ffac"/><rect x="752" y="528" fill="#00ffa8"/><rect x="764" y="528" fill="#00ffa3"/><rect x="776" y="528" fill="#00ff9e"/><rect x="788" y="528" fill="#00ff98"/><rect x="800" y="528" fill="#00ff91"/><rect x="812" y="528" fill="#00ff89"/><rect x="824" y="528" fill="#00ff7f"/><rect x="836" y="528" fill="#00ff73"/><rect x="848" y="528" fill="#00ff64"/><rect x="860" y="528" fill="#00ff50"/><rect x="872" y="528" fill="#39ff47"/><rect x="884" y="528" fill="#53ff41"/><rect x="896" y="528" fill="#67ff39"/><rect x="908" y="528" fill="#77ff2f"/><rect x="920" y="528" fill="#85ff22"/><rect x="932" y="528" fill="#91ff0a"/><rect x="944" y="528" fill="#9eff00"/><rect x="956" y="528" fill="#abff00"/><rect x="968" y="528" fill="#b6ff00"/><rect x="980" y="528" fill="#c0ff00"/><rect x="992" y="528" fill="#caff00"/><rect x="1004" y="528" fill="#d3ff00"/><rect x="1016" y="528" fill="#dcff00"/><rect x="1028" y="528" fill="#e4ff00"/><rect x="1040" y="528" fill="#ecff00"/><rect x="1052" y="528" fill="#f3ff00"/><rect x="1064" y="528" fill="#faff00"/><rect x="1076" y="528" fill="#fffd00"/><rect x="1088" y="528" fill="#fff600"/><rect x="1100" y="528" fill="#fff000"/><rect x="1112" y="528" fill="#ffeb00"/><rect x="1124" y="528" fill="#ffe600"/><rect x="1136" y="528" fill="#ffe100"/><rect x="1148" y="528" fill="#ffdc00"/><rect x="1160" y="528" fill="#ffd800"/><rect x="1172" y="528" fill="#ffd400"/><rect x="1184" y="528" fill="#ffd000"/><rect x="1196" y="528" fill="#ffcd00"/><rect x="1208" y="528" fill="#ffca00"/><rect x="1220" y="528" fill="#ffc600"/><rect x="1232" y="528" fill="#ffc300"/><rect x="1244" y="528" fill="#ffc000"/><rect x="1256" y="528" fill="#ffbe00"/><rect x="1268" y="528" fill="#ffbb00"/><rect x="1280" y="528" fill="#ffb900"/><rect x="1292" y="528" fill="#ffb600"/><rect x="1304" y="528" fill="#ffb400"/><rect x="1316" y="528" fill="#ffb200"/><rect x="1328" y="528" fill="#ffaf00"/><rect x="1340" y="528" fill="#ffad00"/><rect x="1352" y="528" fill="#ffab00"/><rect x="1364" y="528" fill="#ffa900"/><rect x="1376" y="528" fill="#ffa800"/><rect x="1388" y="528" fill="#ffa600"/><rect x="1400" y="528" fill="#ffa400"/><rect x="1412" y="528" fill="#ffa200"/><rect x="1424" y="528" fill="#ffa100"/><rect x="1436" y="528" fill="#ff9f00"/><rect x="1448" y="528" fill="#ff9e00"/><rect x="476" y="540" fill="#00ffd8"/><rect x="488" y="540" fill="#00ffd8"/><rect x="500" y="540" fill="#00ffd8"/><rect x="512" y="540" fill="#00ffd7"/><rect x="524" y="540" fill="#00ffd6"/><rect x="536" y="540" fill="#00ffd5"/><rect x="548" y="540" fill="#00ffd3"/><rect x="560" y="540" fill="#00ffd2"/><rect x="572" y="540" fill="#00ffd1"/><rect x="584" y="540" fill="#00ffd0"/><rect x="596" y="540" fill="#00ffce"/><rect x="608" y="540" fill="#00ffcd"/><rect x="620" y="540" fill="#00ffcb"/><rect x="632" y="540" fill="#00ffc9"/><rect x="644" y="540" fill="#00ffc7"/><rect x="656" y="540" fill="#00ffc5"/><rect x="668" y="540" fill="#00ffc3"/><rect x="680" y="540" fill="#00ffc1"/><rect x="692" y="540" fill="#00ffbe"/><rect x="704" y="540" fill="#00ffbb"/><rect x="716" y="540" fill="#00ffb8"/><rect x="728" y="540" fill="#00ffb5"/><rect x="740" y="540" fill="#00ffb2"/><rect x="752" y="540" fill="#00ffad"/><rect x="764" y="540" fill="#00ffa9"/><rect x="776" y="540" fill="#00ffa4"/><rect x="788" y="540" fill="#00ff9e"/><rect x="800" y="540" fill="#00ff97"/><rect x="812" y="540" fill="#00ff8f"/><rect x="824" y="540" fill="#00ff86"/><rect x="836" y="540" fill="#00ff7a"/><rect x="848" y="540" fill="#00ff6b"/><rect x="860" y="540" fill="#31ff62"/><rect x="872" y="540" fill="#50ff5e"/><rect x="884" y="540" fill="#65ff59"/><rect x="896" y="540" fill="#76ff54"/><rect x="908" y="540" fill="#85ff4e"/><rect x="920" y="540" fill="#92ff47"/><rect x="932" y="540" fill="#9eff3f"/><rect x="944" y="540" fill="#aaff36"/><rect x="956" y="540" fill="#b4ff2a"/><rect x="968" y="540" fill="#bfff18"/><rect x="980" y="540" fill="#c9ff00"/><rect x="992" y="540" fill="#d3ff00"/><rect x="1004" y="540" fill="#ddff00"/><rect x="1016" y="540" fill="#e6ff00"/><rect x="1028" y="540" fill="#efff00"/><rect x="1040" y="540" fill="#f7ff00"/><rect x="1052" y="540" fill="#ffff00"/><rect x="1064" y="540" fill="#fff800"/><rect x="1076" y="540" fill="#fff100"/><rect x="1088" y="540" fill="#ffeb00"/><rect x="1100" y="540" fill="#ffe500"/><rect x="1112" y="540" fill="#ffe000"/><rect x="1124" y="540" fill="#ffdb00"/><rect x="1136" y="540" fill="#ffd600"/><rect x="1148" y="540" fill="#ffd200"/><rect x="1160" y="540" fill="#ffce00"/><rect x="1172" y="540" fill="#ffca00"/><rect x="1184" y="540" fill="#ffc600"/><rect x="1196" y="540" fill="#ffc300"/><rect x="1208" y="540" fill="#ffc000"/><rect x="1220" y="540" fill="#ffbd00"/><rect x="1232" y="540" fill="#ffba00"/><rect x="1244" y="540" fill="#ffb700"/><rect x="1256" y="540" fill="#ffb400"/><rect x="1268" y="540" fill="#ffb200"/><rect x="1280" y="540" fill="#ffb000"/><rect x="1292" y="540" fill="#ffad00"/><rect x="1304" y="540" fill="#ffab00"/><rect x="1316" y="540" fill="#ffa900"/><rect x="1328" y="540" fill="#ffa700"/><rect x="1340" y="540" fill="#ffa500"/><rect x="1352" y="540" fill="#ffa300"/><rect x="1364" y="540" fill="#ffa100"/><rect x="1376" y="540" fill="#ff9f00"/><rect x="1388" y="540" fill="#ff9e00"/><rect x="1400" y="540" fill="#ff9c00"/><rect x="1412" y="540" fill="#ff9a00"/><rect x="1424" y="540" fill="#ff9900"/><rect x="1436" y="540" fill="#ff9700"/><rect x="1448" y="540" fill="#ff9600"/><rect x="476" y="552" fill="#00ffdc"/><rect x="488" y="552" fill="#00ffdc"/><rect x="500" y="552" fill="#00ffdb"/><rect x="512" y="552" fill="#00ffdb"/><rect x="524" y="552" fill="#00ffda"/><rect x="536" y="552" fill="#00ffd9"/><rect x="548" y="552" fill="#00ffd8"/><rect x="560" y="552" fill="#00ffd6"/><rect x="572" y="552" fill="#00ffd5"/><rect x="584" y="552" fill="#00ffd4"/><rect x="596" y="552" fill="#00ffd3"/><rect x="608" y="552" fill="#00ffd1"/><rect x="620" y="552" fill="#00ffd0"/><rect x="632" y="552" fill="#00ffce"/><rect x="644" y="552" fill="#00ffcc"/><rect x="656" y="552" fill="#00ffca"/><rect x="668" y="552" fill="#00ffc8"/><rect x="680" y="552" fill="#00ffc6"/><rect x="692" y="552" fill="#00ffc4"/><rect x="704" y="552" fill="#00ffc1"/><rect x="716" y="552" fill="#00ffbe"/><rect x="728" y="552" fill="#00ffbb"/><rect x="740" y="552" fill="#00ffb8"/><rect x="752" y="552" fill="#00ffb4"/><rect x="764" y="552" fill="#00ffaf"/><rect x="776" y="552" fill="#00ffaa"/><rect x="788" y="552" fill="#00ffa5"/><rect x="800" y="552" fill="#00ff9e"/><rect x="812" y="552" fill="#00ff96"/><rect x="824" y="552" fill="#00ff8d"/><rect x="836" y="552" fill="#00ff82"/><rect x="848" y="552" fill="#26ff78"/><rect x="860" y="552" fill="#4bff75"/><rect x="872" y="552" fill="#62ff71"/><rect x="884" y="552" fill="#75ff6e"/><rect x="896" y="552" fill="#85ff69"/><rect x="908" y="552" fill="#93ff65"/><rect x="920" y="552" fill="#9fff60"/><rect x="932" y="552" fill="#abff5b"/><rect x="944" y="552" fill="#b7ff55"/><rect x="956" y="552" fill="#c2ff4e"/><rect x="968" y="552" fill="#ccff47"/><rect x="980" y="552" fill="#d6ff3e"/><rect x="992" y="552" fill="#e0ff33"/><rect x="1004" y="552" fill="#e9ff23"/><rect x="1016" y="552" fill="#f2ff02"/><rect x="1028" y="552" fill="#fcff00"/><rect x="1040" y="552" fill="#fffa00"/><rect x="1052" y="552" fill="#fff200"/><rect x="1064" y="552" fill="#ffeb00"/><rect x="1076" y="552" fill="#ffe400"/><rect x="1088" y="552" fill="#ffde00"/><rect x="1100" y="552" fill="#ffd900"/><rect x="1112" y="552" fill="#ffd400"/><rect x="1124" y="552" fill="#ffcf00"/><rect x="1136" y="552" fill="#ffcb00"/><rect x="1148" y="552" fill="#ffc700"/><rect x="1160" y="552" fill="#ffc300"/><rect x="1172" y="552" fill="#ffbf00"/><rect x="1184" y="552" fill="#ffbc00"/><rect x="1196" y="552" fill="#ffb800"/><rect x="1208" y="552" fill="#ffb500"/><rect x="1220" y="552" fill="#ffb200"/><rect x="1232" y="552" fill="#ffb000"/><rect x="1244" y="552" fill="#ffad00"/><rect x="1256" y="552" fill="#ffab00"/><rect x="1268" y="552" fill="#ffa800"/><rect x="1280" y="552" fill="#ffa600"/><rect x="1292" y="552" fill="#ffa400"/><rect x="1304" y="552" fill="#ffa100"/><rect x="1316" y="552" fill="#ff9f00"/><rect x="1328" y="552" fill="#ff9d00"/><rect x="1340" y="552" fill="#ff9c00"/><rect x="1352" y="552" fill="#ff9a00"/><rect x="1364" y="552" fill="#ff9800"/><rect x="1376" y="552" fill="#ff9600"/><rect x="1388" y="552" fill="#ff9500"/><rect x="1400" y="552" fill="#ff9300"/><rect x="1412" y="552" fill="#ff9200"/><rect x="1424" y="552" fill="#ff9000"/><rect x="1436" y="552" fill="#ff8f00"/><rect x="1448" y="552" fill="#ff8d00"/><rect x="476" y="564" fill="#00ffe0"/><rect x="488" y="564" fill="#00ffe0"/><rect x="500" y="564" fill="#00ffe0"/><rect x="512" y="564" fill="#00ffdf"/><rect x="524" y="564" fill="#00ffde"/><rect x="536" y="564" fill="#00ffdd"/><rect x="548" y="564" fill="#00ffdc"/><rect x="560" y="564" fill="#00ffdb"/><rect x="572" y="564" fill="#00ffda"/><rect x="584" y="564" fill="#00ffd9"/><rect x="596" y="564" fill="#00ffd8"/><rect x="608" y="564" fill="#00ffd6"/><rect x="620" y="564" fill="#00ffd5"/><rect x="632" y="564" fill="#00ffd3"/><rect x="644" y="564" fill="#00ffd2"/><rect x="656" y="564" fill="#00ffd0"/><rect x="668" y="564" fill="#00ffce"/><rect x="680" y="564" fill="#00ffcc"/><rect x="692" y="564" fill="#00ffca"/><rect x="704" y="564" fill="#00ffc7"/><rect x="716" y="564" fill="#00ffc5"/><rect x="728" y="564" fill="#00ffc2"/><rect x="740" y="564" fill="#00ffbe"/><rect x="752" y="564" fill="#00ffbb"/><rect x="764" y="564" fill="#00ffb6"/><rect x="776" y="564" fill="#00ffb2"/><rect x="788" y="564" fill="#00ffac"/><rect x="800" y="564" fill="#00ffa6"/><rect x="812" y="564" fill="#00ff9f"/><rect x="824" y="564" fill="#00ff96"/><rect x="836" y="564" fill="#15ff8c"/><rect x="848" y="564" fill="#46ff89"/><rect x="860" y="564" fill="#60ff86"/><rect x="872" y="564" fill="#74ff83"/><rect x="884" y="564" fill="#84ff80"/><rect x="896" y="564" fill="#93ff7d"/><rect x="908" y="564" fill="#a1ff7a"/><rect x="920" y="564" fill="#adff76"/><rect x="932" y="564" fill="#b9ff72"/><rect x="944" y="564" fill="#c5ff6d"/><rect x="956" y="564" fill="#cfff68"/><rect x="968" y="564" fill="#daff63"/><rect x="980" y="564" fill="#e4ff5d"/><rect x="992" y="564" fill="#eeff57"/><rect x="1004" y="564" fill="#f8ff4f"/><rect x="1016" y="564" fill="#fffd46"/><rect x="1028" y="564" fill="#fff439"/><rect x="1040" y="564" fill="#ffeb29"/><rect x="1052" y="564" fill="#ffe413"/><rect x="1064" y="564" fill="#ffdd00"/><rect x="1076" y="564" fill="#ffd600"/><rect x="1088" y="564" fill="#ffd100"/><rect x="1100" y="564" fill="#ffcc00"/><rect x="1112" y="564" fill="#ffc700"/><rect x="1124" y="564" fill="#ffc200"/><rect x="1136" y="564" fill="#ffbe00"/><rect x="1148" y="564" fill="#ffba00"/><rect x="1160" y="564" fill="#ffb700"/><rect x="1172" y="564" fill="#ffb300"/><rect x="1184" y="564" fill="#ffb000"/><rect x="1196" y="564" fill="#ffad00"/><rect x="1208" y="564" fill="#ffaa00"/><rect x="1220" y="564" fill="#ffa700"/><rect x="1232" y="564" fill="#ffa500"/><rect x="1244" y="564" fill="#ffa200"/><rect x="1256" y="564" fill="#ffa000"/><rect x="1268" y="564" fill="#ff9d00"/><rect x="1280" y="564" fill="#ff9b00"/><rect x="1292" y="564" fill="#ff9900"/><rect x="1304" y="564" fill="#ff9700"/><rect x="1316" y="564" fill="#ff9500"/><rect x="1328" y="564" fill="#ff9300"/><rect x="1340" y="564" fill="#ff9200"/><rect x="1352" y="564" fill="#ff9000"/><rect x="1364" y="564" fill="#ff8e00"/><rect x="1376" y="564" fill="#ff8d00"/><rect x="1388" y="564" fill="#ff8b00"/><rect x="1400" y="564" fill="#ff8a00"/><rect x="1412" y="564" fill="#ff8800"/><rect x="1424" y="564" fill="#ff8700"/><rect x="1436" y="564" fill="#ff8500"/><rect x="1448" y="564" fill="#ff8400"/><rect x="476" y="576" fill="#00ffe4"/><rect x="488" y="576" fill="#00ffe4"/><rect x="500" y="576" fill="#00ffe4"/><rect x="512" y="576" fill="#00ffe3"/><rect x="524" y="576" fill="#00ffe2"/><rect x="536" y="576" fill="#00ffe2"/><rect x="548" y="576" fill="#00ffe1"/><rect x="560" y="576" fill="#00ffe0"/><rect x="572" y="576" fill="#00ffdf"/><rect x="584" y="576" fill="#00ffde"/><rect x="596" y="576" fill="#00ffdd"/><rect x="608" y="576" fill="#00ffdb"/><rect x="620" y="576" fill="#00ffda"/><rect x="632" y="576" fill="#00ffd9"/><rect x="644" y="576" fill="#00ffd7"/><rect x="656" y="576" fill="#00ffd6"/><rect x="668" y="576" fill="#00ffd4"/><rect x="680" y="576" fill="#00ffd2"/><rect x="692" y="576" fill="#00ffd0"/><rect x="704" y="576" fill="#00ffce"/><rect x="716" y="576" fill="#00ffcc"/><rect x="728" y="576" fill="#00ffc9"/><rect x="740" y="576" fill="#00ffc6"/><rect x="752" y="576" fill="#00ffc2"/><rect x="764" y="576" fill="#00ffbe"/><rect x="776" y="576" fill="#00ffba"/><rect x="788" y="576" fill="#00ffb5"/><rect x="800" y="576" fill="#00ffaf"/><rect x="812" y="576" fill="#00ffa8"/><rect x="824" y="576" fill="#00ff9f"/><rect x="836" y="576" fill="#40ff9c"/><rect x="848" y="576" fill="#5dff9a"/><rect x="860" y="576" fill="#72ff98"/><rect x="872" y="576" fill="#84ff95"/><rect x="884" y="576" fill="#94ff93"/><rect x="896" y="576" fill="#a2ff90"/><rect x="908" y="576" fill="#b0ff8d"/><rect x="920" y="576" fill="#bcff8a"/><rect x="932" y="576" fill="#c8ff87"/><rect x="944" y="576" fill="#d3ff83"/><rect x="956" y="576" fill="#deff7f"/><rect x="968" y="576" fill="#e9ff7b"/><rect x="980" y="576" fill="#f4ff77"/><rect x="992" y="576" fill="#feff72"/><rect x="1004" y="576" fill="#fff669"/><rect x="1016" y="576" fill="#ffed5f"/><rect x="1028" y="576" fill="#ffe556"/><rect x="1040" y="576" fill="#ffdd4c"/><rect x="1052" y="576" fill="#ffd642"/><rect x="1064" y="576" fill="#ffcf37"/><rect x="1076" y="576" fill="#ffc92a"/><rect x="1088" y="576" fill="#ffc31a"/><rect x="1100" y="576" fill="#ffbd00"/><rect x="1112" y="576" fill="#ffb800"/><rect x="1124" y="576" fill="#ffb400"/><rect x="1136" y="576" fill="#ffb000"/><rect x="1148" y="576" fill="#ffad00"/><rect x="1160" y="576" fill="#ffa900"/><rect x="1172" y="576" fill="#ffa600"/><rect x="1184" y="576" fill="#ffa300"/><rect x="1196" y="576" fill="#ffa000"/><rect x="1208" y="576" fill="#ff9d00"/><rect x="1220" y="576" fill="#ff9b00"/><rect x="1232" y="576" fill="#ff9800"/><rect x="1244" y="576" fill="#ff9600"/><rect x="1256" y="576" fill="#ff9400"/><rect x="1268" y="576" fill="#ff9200"/><rect x="1280" y="576" fill="#ff9000"/><rect x="1292" y="576" fill="#ff8e00"/><rect x="1304" y="576" fill="#ff8c00"/><rect x="1316" y="576" fill="#ff8a00"/><rect x="1328" y="576" fill="#ff8800"/><rect x="1340" y="576" fill="#ff8600"/><rect x="1352" y="576" fill="#ff8500"/><rect x="1364" y="576" fill="#ff8300"/><rect x="1376" y="576" fill="#ff8200"/><rect x="1388" y="576" fill="#ff8000"/><rect x="1400" y="576" fill="#ff7f00"/><rect x="1412" y="576" fill="#ff7e00"/><rect x="1424" y="576" fill="#ff7c00"/><rect x="1436" y="576" fill="#ff7b00"/><rect x="1448" y="576" fill="#ff7a00"/><rect x="476" y="588" fill="#00ffe9"/><rect x="488" y="588" fill="#00ffe9"/><rect x="500" y="588" fill="#00ffe8"/><rect x="512" y="588" fill="#00ffe8"/><rect x="524" y="588" fill="#00ffe7"/><rect x="536" y="588" fill="#00ffe6"/><rect x="548" y="588" fill="#00ffe6"/><rect x="560" y="588" fill="#00ffe5"/><rect x="572" y="588" fill="#00ffe4"/><rect x="584" y="588" fill="#00ffe3"/><rect x="596" y="588" fill="#00ffe2"/><rect x="608" y="588" fill="#00ffe1"/><rect x="620" y="588" fill="#00ffe0"/><rect x="632" y="588" fill="#00ffdf"/><rect x="644" y="588" fill="#00ffde"/><rect x="656" y="588" fill="#00ffdc"/><rect x="668" y="588" fill="#00ffdb"/><rect x="680" y="588" fill="#00ffd9"/><rect x="692" y="588" fill="#00ffd7"/><rect x="704" y="588" fill="#00ffd5"/><rect x="716" y="588" fill="#00ffd3"/><rect x="728" y="588" fill="#00ffd1"/><rect x="740" y="588" fill="#00ffce"/><rect x="752" y="588" fill="#00ffcb"/><rect x="764" y="588" fill="#00ffc7"/><rect x="776" y="588" fill="#00ffc3"/><rect x="788" y="588" fill="#00ffbe"/><rect x="800" y="588" fill="#00ffb9"/><rect x="812" y="588" fill="#00ffb2"/><rect x="824" y="588" fill="#37ffae"/><rect x="836" y="588" fill="#59ffad"/><rect x="848" y="588" fill="#71ffab"/><rect x="860" y="588" fill="#84ffa9"/><rect x="872" y="588" fill="#95ffa7"/><rect x="884" y="588" fill="#a4ffa5"/><rect x="896" y="588" fill="#b2ffa3"/><rect x="908" y="588" fill="#bfffa0"/><rect x="920" y="588" fill="#ccff9e"/><rect x="932" y="588" fill="#d8ff9b"/><rect x="944" y="588" fill="#e3ff98"/><rect x="956" y="588" fill="#efff95"/><rect x="968" y="588" fill="#faff92"/><rect x="980" y="588" fill="#fffa8b"/><rect x="992" y="588" fill="#fff082"/><rect x="1004" y="588" fill="#ffe779"/><rect x="1016" y="588" fill="#ffde71"/><rect x="1028" y="588" fill="#ffd669"/><rect x="1040" y="588" fill="#ffcf60"/><rect x="1052" y="588" fill="#ffc858"/><rect x="1064" y="588" fill="#ffc250"/><rect x="1076" y="588" fill="#ffbc48"/><rect x="1088" y="588" fill="#ffb63f"/><rect x="1100" y="588" fill="#ffb036"/><rect x="1112" y="588" fill="#ffab2b"/><rect x="1124" y="588" fill="#ffa61e"/><rect x="1136" y="588" fill="#ffa108"/><rect x="1148" y="588" fill="#ff9d00"/><rect x="1160" y="588" fill="#ff9a00"/><rect x="1172" y="588" fill="#ff9700"/><rect x="1184" y="588" fill="#ff9400"/><rect x="1196" y="588" fill="#ff9200"/><rect x="1208" y="588" fill="#ff8f00"/><rect x="1220" y="588" fill="#ff8d00"/><rect x="1232" y="588" fill="#ff8a00"/><rect x="1244" y="588" fill="#ff8800"/><rect x="1256" y="588" fill="#ff8600"/><rect x="1268" y="588" fill="#ff8400"/><rect x="1280" y="588" fill="#ff8200"/><rect x="1292" y="588" fill="#ff8100"/><rect x="1304" y="588" fill="#ff7f00"/><rect x="1316" y="588" fill="#ff7d00"/><rect x="1328" y="588" fill="#ff7c00"/><rect x="1340" y="588" fill="#ff7a00"/><rect x="1352" y="588" fill="#ff7900"/><rect x="1364" y="588" fill="#ff7700"/><rect x="1376" y="588" fill="#ff7600"/><rect x="1388" y="588" fill="#ff7400"/><rect x="1400" y="588" fill="#ff7300"/><rect x="1412" y="588" fill="#ff7200"/><rect x="1424" y="588" fill="#ff7100"/><rect x="1436" y="588" fill="#ff6f00"/><rect x="1448" y="588" fill="#ff6e00"/><rect x="476" y="600" fill="#00ffee"/><rect x="488" y="600" fill="#00ffee"/><rect x="500" y="600" fill="#00ffed"/><rect x="512" y="600" fill="#00ffed"/><rect x="524" y="600" fill="#00ffec"/><rect x="536" y="600" fill="#00ffec"/><rect x="548" y="600" fill="#00ffeb"/><rect x="560" y="600" fill="#00ffea"/><rect x="572" y="600" fill="#00ffea"/><rect x="584" y="600" fill="#00ffe9"/><rect x="596" y="600" fill="#00ffe8"/><rect x="608" y="600" fill="#00ffe7"/><rect x="620" y="600" fill="#00ffe6"/><rect x="632" y="600" fill="#00ffe5"/><rect x="644" y="600" fill="#00ffe4"/><rect x="656" y="600" fill="#00ffe3"/><rect x="668" y="600" fill="#00ffe2"/><rect x="680" y="600" fill="#00ffe1"/><rect x="692" y="600" fill="#00ffdf"/><rect x="704" y="600" fill="#00ffdd"/><rect x="716" y="600" fill="#00ffdb"/><rect x="728" y="600" fill="#00ffd9"/><rect x="740" y="600" fill="#00ffd7"/><rect x="752" y="600" fill="#00ffd4"/><rect x="764" y="600" fill="#00ffd1"/><rect x="776" y="600" fill="#00ffce"/><rect x="788" y="600" fill="#00ffca"/><rect x="800" y="600" fill="#00ffc5"/><rect x="812" y="600" fill="#2cffc1"/><rect x="824" y="600" fill="#55ffbf"/><rect x="836" y="600" fill="#6fffbe"/><rect x="848" y="600" fill="#84ffbc"/><rect x="860" y="600" fill="#96ffbb"/><rect x="872" y="600" fill="#a6ffb9"/><rect x="884" y="600" fill="#b5ffb8"/><rect x="896" y="600" fill="#c3ffb6"/><rect x="908" y="600" fill="#d0ffb4"/><rect x="920" y="600" fill="#ddffb2"/><rect x="932" y="600" fill="#e9ffb0"/><rect x="944" y="600" fill="#f5ffae"/><rect x="956" y="600" fill="#fffdaa"/><rect x="968" y="600" fill="#fff2a0"/><rect x="980" y="600" fill="#ffe897"/><rect x="992" y="600" fill="#ffdf8e"/><rect x="1004" y="600" fill="#ffd786"/><rect x="1016" y="600" fill="#ffcf7e"/><rect x="1028" y="600" fill="#ffc877"/><rect x="1040" y="600" fill="#ffc170"/><rect x="1052" y="600" fill="#ffba68"/><rect x="1064" y="600" fill="#ffb461"/><rect x="1076" y="600" fill="#ffae5a"/><rect x="1088" y="600" fill="#ffa953"/><rect x="1100" y="600" fill="#ffa34c"/><rect x="1112" y="600" fill="#ff9e45"/><rect x="1124" y="600" fill="#ff993d"/><rect x="1136" y="600" fill="#ff9435"/><rect x="1148" y="600" fill="#ff902c"/><rect x="1160" y="600" fill="#ff8b20"/><rect x="1172" y="600" fill="#ff8711"/><rect x="1184" y="600" fill="#ff8300"/><rect x="1196" y="600" fill="#ff8100"/><rect x="1208" y="600" fill="#ff7f00"/><rect x="1220" y="600" fill="#ff7c00"/><rect x="1232" y="600" fill="#ff7a00"/><rect x="1244" y="600" fill="#ff7800"/><rect x="1256" y="600" fill="#ff7700"/><rect x="1268" y="600" fill="#ff7500"/><rect x="1280" y="600" fill="#ff7300"/><rect x="1292" y="600" fill="#ff7100"/><rect x="1304" y="600" fill="#ff7000"/><rect x="1316" y="600" fill="#ff6e00"/><rect x="1328" y="600" fill="#ff6d00"/><rect x="1340" y="600" fill="#ff6c00"/><rect x="1352" y="600" fill="#ff6a00"/><rect x="1364" y="600" fill="#ff6900"/><rect x="1376" y="600" fill="#ff6800"/><rect x="1388" y="600" fill="#ff6700"/><rect x="1400" y="600" fill="#ff6500"/><rect x="1412" y="600" fill="#ff6400"/><rect x="1424" y="600" fill="#ff6300"/><rect x="1436" y="600" fill="#ff6200"/><rect x="1448" y="600" fill="#ff6100"/><rect x="476" y="612" fill="#00fff2"/><rect x="488" y="612" fill="#00fff2"/><rect x="500" y="612" fill="#00fff2"/><rect x="512" y="612" fill="#00fff2"/><rect x="524" y="612" fill="#00fff1"/><rect x="536" y="612" fill="#00fff1"/><rect x="548" y="612" fill="#00fff1"/><rect x="560" y="612" fill="#00fff0"/><rect x="572" y="612" fill="#00fff0"/><rect x="584" y="612" fill="#00ffef"/><rect x="596" y="612" fill="#00ffee"/><rect x="608" y="612" fill="#00ffee"/><rect x="620" y="612" fill="#00ffed"/><rect x="632" y="612" fill="#00ffec"/><rect x="644" y="612" fill="#00ffec"/><rect x="656" y="612" fill="#00ffeb"/><rect x="668" y="612" fill="#00ffea"/><rect x="680" y="612" fill="#00ffe9"/><rect x="692" y="612" fill="#00ffe8"/><rect x="704" y="612" fill="#00ffe6"/><rect x="716" y="612" fill="#00ffe5"/><rect x="728" y="612" fill="#00ffe3"/><rect x="740" y="612" fill="#00ffe1"/><rect x="752" y="612" fill="#00ffdf"/><rect x="764" y="612" fill="#00ffdd"/><rect x="776" y="612" fill="#00ffda"/><rect x="788" y="612" fill="#00ffd7"/><rect x="800" y="612" fill="#19ffd3"/><rect x="812" y="612" fill="#50ffd2"/><rect x="824" y="612" fill="#6dffd1"/><rect x="836" y="612" fill="#84ffd0"/><rect x="848" y="612" fill="#97ffcf"/><rect x="860" y="612" fill="#a8ffce"/><rect x="872" y="612" fill="#b8ffcd"/><rect x="884" y="612" fill="#c7ffcb"/><rect x="896" y="612" fill="#d5ffca"/><rect x="908" y="612" fill="#e2ffc9"/><rect x="920" y="612" fill="#efffc7"/><rect x="932" y="612" fill="#fcffc6"/><rect x="944" y="612" fill="#fff6bd"/><rect x="956" y="612" fill="#ffebb3"/><rect x="968" y="612" fill="#ffe1a9"/><rect x="980" y="612" fill="#ffd8a1"/><rect x="992" y="612" fill="#ffcf98"/><rect x="1004" y="612" fill="#ffc791"/><rect x="1016" y="612" fill="#ffc089"/><rect x="1028" y="612" fill="#ffb982"/><rect x="1040" y="612" fill="#ffb27b"/><rect x="1052" y="612" fill="#ffac75"/><rect x="1064" y="612" fill="#ffa66f"/><rect x="1076" y="612" fill="#ffa068"/><rect x="1088" y="612" fill="#ff9b62"/><rect x="1100" y="612" fill="#ff965c"/><rect x="1112" y="612" fill="#ff9156"/><rect x="1124" y="612" fill="#ff8c4f"/><rect x="1136" y="612" fill="#ff8749"/><rect x="1148" y="612" fill="#ff8243"/><rect x="1160" y="612" fill="#ff7e3c"/><rect x="1172" y="612" fill="#ff7a34"/><rect x="1184" y="612" fill="#ff752c"/><rect x="1196" y="612" fill="#ff7122"/><rect x="1208" y="612" fill="#ff6d16"/><rect x="1220" y="612" fill="#ff6901"/><rect x="1232" y="612" fill="#ff6700"/><rect x="1244" y="612" fill="#ff6500"/><rect x="1256" y="612" fill="#ff6400"/><rect x="1268" y="612" fill="#ff6200"/><rect x="1280" y="612" fill="#ff6100"/><rect x="1292" y="612" fill="#ff5f00"/><rect x="1304" y="612" fill="#ff5e00"/><rect x="1316" y="612" fill="#ff5d00"/><rect x="1328" y="612" fill="#ff5b00"/><rect x="1340" y="612" fill="#ff5a00"/><rect x="1352" y="612" fill="#ff5900"/><rect x="1364" y="612" fill="#ff5800"/><rect x="1376" y="612" fill="#ff5700"/><rect x="1388" y="612" fill="#ff5600"/><rect x="1400" y="612" fill="#ff5500"/><rect x="1412" y="612" fill="#ff5400"/><rect x="1424" y="612" fill="#ff5300"/><rect x="1436" y="612" fill="#ff5200"/><rect x="1448" y="612" fill="#ff5100"/><rect x="476" y="624" fill="#00fff8"/><rect x="488" y="624" fill="#00fff8"/><rect x="500" y="624" fill="#00fff8"/><rect x="512" y="624" fill="#00fff7"/><rect x="524" y="624" fill="#00fff7"/><rect x="536" y="624" fill="#00fff7"/><rect x="548" y="624" fill="#00fff7"/><rect x="560" y="624" fill="#00fff6"/><rect x="572" y="624" fill="#00fff6"/><rect x="584" y="624" fill="#00fff6"/><rect x="596" y="624" fill="#00fff5"/><rect x="608" y="624" fill="#00fff5"/><rect x="620" y="624" fill="#00fff5"/><rect x="632" y="624" fill="#00fff4"/><rect x="644" y="624" fill="#00fff4"/><rect x="656" y="624" fill="#00fff3"/><rect x="668" y="624" fill="#00fff3"/><rect x="680" y="624" fill="#00fff2"/><rect x="692" y="624" fill="#00fff1"/><rect x="704" y="624" fill="#00fff0"/><rect x="716" y="624" fill="#00ffef"/><rect x="728" y="624" fill="#00ffee"/><rect x="740" y="624" fill="#00ffed"/><rect x="752" y="624" fill="#00ffec"/><rect x="764" y="624" fill="#00ffea"/><rect x="776" y="624" fill="#00ffe8"/><rect x="788" y="624" fill="#00ffe6"/><rect x="800" y="624" fill="#4affe5"/><rect x="812" y="624" fill="#6bffe5"/><rect x="824" y="624" fill="#84ffe4"/><rect x="836" y="624" fill="#99ffe4"/><rect x="848" y="624" fill="#abffe3"/><rect x="860" y="624" fill="#bcffe2"/><rect x="872" y="624" fill="#ccffe2"/><rect x="884" y="624" fill="#dbffe1"/><rect x="896" y="624" fill="#e9ffe0"/><rect x="908" y="624" fill="#f7ffdf"/><rect x="920" y="624" fill="#fffada"/><rect x="932" y="624" fill="#ffedce"/><rect x="944" y="624" fill="#ffe2c4"/><rect x="956" y="624" fill="#ffd8ba"/><rect x="968" y="624" fill="#ffcfb1"/><rect x="980" y="624" fill="#ffc6a9"/><rect x="992" y="624" fill="#ffbfa1"/><rect x="1004" y="624" fill="#ffb799"/><rect x="1016" y="624" fill="#ffb092"/><rect x="1028" y="624" fill="#ffa98c"/><rect x="1040" y="624" fill="#ffa385"/><rect x="1052" y="624" fill="#ff9d7f"/><rect x="1064" y="624" fill="#ff9779"/><rect x="1076" y="624" fill="#ff9273"/><rect x="1088" y="624" fill="#ff8d6e"/><rect x="1100" y="624" fill="#ff8768"/><rect x="1112" y="624" fill="#ff8263"/><rect x="1124" y="624" fill="#ff7e5d"/><rect x="1136" y="624" fill="#ff7958"/><rect x="1148" y="624" fill="#ff7452"/><rect x="1160" y="624" fill="#ff704c"/><rect x="1172" y="624" fill="#ff6b47"/><rect x="1184" y="624" fill="#ff6741"/><rect x="1196" y="624" fill="#ff623a"/><rect x="1208" y="624" fill="#ff5e34"/><rect x="1220" y="624" fill="#ff592c"/><rect x="1232" y="624" fill="#ff5524"/><rect x="1244" y="624" fill="#ff5019"/><rect x="1256" y="624" fill="#ff4c09"/><rect x="1268" y="624" fill="#ff4900"/><rect x="1280" y="624" fill="#ff4800"/><rect x="1292" y="624" fill="#ff4700"/><rect x="1304" y="624" fill="#ff4600"/><rect x="1316" y="624" fill="#ff4500"/><rect x="1328" y="624" fill="#ff4400"/><rect x="1340" y="624" fill="#ff4300"/><rect x="1352" y="624" fill="#ff4200"/><rect x="1364" y="624" fill="#ff4100"/><rect x="1376" y="624" fill="#ff4000"/><rect x="1388" y="624" fill="#ff4000"/><rect x="1400" y="624" fill="#ff3f00"/><rect x="1412" y="624" fill="#ff3e00"/><rect x="1424" y="624" fill="#ff3d00"/><rect x="1436" y="624" fill="#ff3c00"/><rect x="1448" y="624" fill="#ff3c00"/><rect x="476" y="636" fill="#00fffd"/><rect x="488" y="636" fill="#00fffd"/><rect x="500" y="636" fill="#00fffd"/><rect x="512" y="636" fill="#00fffd"/><rect x="524" y="636" fill="#00fffd"/><rect x="536" y="636" fill="#00fffd"/><rect x="548" y="636" fill="#00fffd"/><rect x="560" y="636" fill="#00fffd"/><rect x="572" y="636" fill="#00fffd"/><rect x="584" y="636" fill="#00fffd"/><rect x="596" y="636" fill="#00fffd"/><rect x="608" y="636" fill="#00fffd"/><rect x="620" y="636" fill="#00fffd"/><rect x="632" y="636" fill="#00fffd"/><rect x="644" y="636" fill="#00fffd"/><rect x="656" y="636" fill="#00fffc"/><rect x="668" y="636" fill="#00fffc"/><rect x="680" y="636" fill="#00fffc"/><rect x="692" y="636" fill="#00fffc"/><rect x="704" y="636" fill="#00fffc"/><rect x="716" y="636" fill="#00fffc"/><rect x="728" y="636" fill="#00fffb"/><rect x="740" y="636" fill="#00fffb"/><rect x="752" y="636" fill="#00fffb"/><rect x="764" y="636" fill="#00fffa"/><rect x="776" y="636" fill="#00fffa"/><rect x="788" y="636" fill="#41fffa"/><rect x="800" y="636" fill="#68fffa"/><rect x="812" y="636" fill="#84fffa"/><rect x="824" y="636" fill="#9afff9"/><rect x="836" y="636" fill="#aefff9"/><rect x="848" y="636" fill="#c0fff9"/><rect x="860" y="636" fill="#d1fff9"/><rect x="872" y="636" fill="#e1fff9"/><rect x="884" y="636" fill="#f1fff9"/><rect x="896" y="636" fill="#fffef8"/><rect x="908" y="636" fill="#fff1ea"/><rect x="920" y="636" fill="#ffe4de"/><rect x="932" y="636" fill="#ffd9d3"/><rect x="944" y="636" fill="#ffcfc9"/><rect x="956" y="636" fill="#ffc6c0"/><rect x="968" y="636" fill="#ffbdb7"/><rect x="980" y="636" fill="#ffb5b0"/><rect x="992" y="636" fill="#ffaea8"/><rect x="1004" y="636" fill="#ffa7a1"/><rect x="1016" y="636" fill="#ffa09a"/><rect x="1028" y="636" fill="#ff9994"/><rect x="1040" y="636" fill="#ff938e"/><rect x="1052" y="636" fill="#ff8d88"/><rect x="1064" y="636" fill="#ff8882"/><rect x="1076" y="636" fill="#ff827d"/><rect x="1088" y="636" fill="#ff7d77"/><rect x="1100" y="636" fill="#ff7872"/><rect x="1112" y="636" fill="#ff736d"/><rect x="1124" y="636" fill="#ff6e68"/><rect x="1136" y="636" fill="#ff6963"/><rect x="1148" y="636" fill="#ff645e"/><rect x="1160" y="636" fill="#ff5f59"/><rect x="1172" y="636" fill="#ff5a54"/><rect x="1184" y="636" fill="#ff564f"/><rect x="1196" y="636" fill="#ff514a"/><rect x="1208" y="636" fill="#ff4c45"/><rect x="1220" y="636" fill="#ff473f"/><rect x="1232" y="636" fill="#ff4139"/><rect x="1244" y="636" fill="#ff3c33"/><rect x="1256" y="636" fill="#ff362d"/><rect x="1268" y="636" fill="#ff3025"/><rect x="1280" y="636" fill="#ff291c"/><rect x="1292" y="636" fill="#ff2210"/><rect x="1304" y="636" fill="#ff1a00"/><rect x="1316" y="636" fill="#ff1900"/><rect x="1328" y="636" fill="#ff1900"/><rect x="1340" y="636" fill="#ff1800"/><rect x="1352" y="636" fill="#ff1800"/><rect x="1364" y="636" fill="#ff1700"/><rect x="1376" y="636" fill="#ff1700"/><rect x="1388" y="636" fill="#ff1600"/><rect x="1400" y="636" fill="#ff1600"/><rect x="1412" y="636" fill="#ff1500"/><rect x="1424" y="636" fill="#ff1500"/><rect x="1436" y="636" fill="#ff1500"/><rect x="1448" y="636" fill="#ff1400"/><rect x="476" y="648" fill="#00fbff"/><rect x="488" y="648" fill="#00fbff"/><rect x="500" y="648" fill="#00fbff"/><rect x="512" y="648" fill="#00faff"/><rect x="524" y="648" fill="#00faff"/><rect x="536" y="648" fill="#00faff"/><rect x="548" y="648" fill="#00faff"/><rect x="560" y="648" fill="#00faff"/><rect x="572" y="648" fill="#00f9ff"/><rect x="584" y="648" fill="#00f9ff"/><rect x="596" y="648" fill="#00f9ff"/><rect x="608" y="648" fill="#00f9ff"/><rect x="620" y="648" fill="#00f8ff"/><rect x="632" y="648" fill="#00f8ff"/><rect x="644" y="648" fill="#00f8ff"/><rect x="656" y="648" fill="#00f7ff"/><rect x="668" y="648" fill="#00f7ff"/><rect x="680" y="648" fill="#00f7ff"/><rect x="692" y="648" fill="#00f6ff"/><rect x="704" y="648" fill="#00f5ff"/><rect x="716" y="648" fill="#00f5ff"/><rect x="728" y="648" fill="#00f4ff"/><rect x="740" y="648" fill="#00f3ff"/><rect x="752" y="648" fill="#00f2ff"/><rect x="764" y="648" fill="#00f1ff"/><rect x="776" y="648" fill="#31f0ff"/><rect x="788" y="648" fill="#5eefff"/><rect x="800" y="648" fill="#7befff"/><rect x="812" y="648" fill="#92eeff"/><rect x="824" y="648" fill="#a6eeff"/><rect x="836" y="648" fill="#b7edff"/><rect x="848" y="648" fill="#c8edff"/><rect x="860" y="648" fill="#d8ecff"/><rect x="872" y="648" fill="#e7ecff"/><rect x="884" y="648" fill="#f5ebff"/><rect x="896" y="648" fill="#ffe7fa"/><rect x="908" y="648" fill="#ffdaee"/><rect x="920" y="648" fill="#ffcfe2"/><rect x="932" y="648" fill="#ffc5d8"/><rect x="944" y="648" fill="#ffbbce"/><rect x="956" y="648" fill="#ffb3c5"/><rect x="968" y="648" fill="#ffabbd"/><rect x="980" y="648" fill="#ffa3b6"/><rect x="992" y="648" fill="#ff9cae"/><rect x="1004" y="648" fill="#ff95a8"/><rect x="1016" y="648" fill="#ff8fa1"/><rect x="1028" y="648" fill="#ff889b"/><rect x="1040" y="648" fill="#ff8295"/><rect x="1052" y="648" fill="#ff7c90"/><rect x="1064" y="648" fill="#ff778a"/><rect x="1076" y="648" fill="#ff7185"/><rect x="1088" y="648" fill="#ff6c80"/><rect x="1100" y="648" fill="#ff667b"/><rect x="1112" y="648" fill="#ff6176"/><rect x="1124" y="648" fill="#ff5c71"/><rect x="1136" y="648" fill="#ff566d"/><rect x="1148" y="648" fill="#ff5168"/><rect x="1160" y="648" fill="#ff4c63"/><rect x="1172" y="648" fill="#ff465f"/><rect x="1184" y="648" fill="#ff405a"/><rect x="1196" y="648" fill="#ff3a56"/><rect x="1208" y="648" fill="#ff3451"/><rect x="1220" y="648" fill="#ff2d4c"/><rect x="1232" y="648" fill="#ff2548"/><rect x="1244" y="648" fill="#ff1b43"/><rect x="1256" y="648" fill="#ff0d3e"/><rect x="1268" y="648" fill="#ff003a"/><rect x="1280" y="648" fill="#ff003a"/><rect x="1292" y="648" fill="#ff0039"/><rect x="1304" y="648" fill="#ff0038"/><rect x="1316" y="648" fill="#ff0037"/><rect x="1328" y="648" fill="#ff0036"/><rect x="1340" y="648" fill="#ff0036"/><rect x="1352" y="648" fill="#ff0035"/><rect x="1364" y="648" fill="#ff0034"/><rect x="1376" y="648" fill="#ff0034"/><rect x="1388" y="648" fill="#ff0033"/><rect x="1400" y="648" fill="#ff0033"/><rect x="1412" y="648" fill="#ff0032"/><rect x="1424" y="648" fill="#ff0031"/><rect x="1436" y="648" fill="#ff0031"/><rect x="1448" y="648" fill="#ff0030"/><rect x="476" y="660" fill="#00f5ff"/><rect x="488" y="660" fill="#00f5ff"/><rect x="500" y="660" fill="#00f4ff"/><rect x="512" y="660" fill="#00f4ff"/><rect x="524" y="660" fill="#00f4ff"/><rect x="536" y="660" fill="#00f3ff"/><rect x="548" y="660" fill="#00f3ff"/><rect x="560" y="660" fill="#00f2ff"/><rect x="572" y="660" fill="#00f2ff"/><rect x="584" y="660" fill="#00f1ff"/><rect x="596" y="660" fill="#00f1ff"/><rect x="608" y="660" fill="#00f0ff"/><rect x="620" y="660" fill="#00efff"/><rect x="632" y="660" fill="#00efff"/><rect x="644" y="660" fill="#00eeff"/><rect x="656" y="660" fill="#00edff"/><rect x="668" y="660" fill="#00ecff"/><rect x="680" y="660" fill="#00ebff"/><rect x="692" y="660" fill="#00e9ff"/><rect x="704" y="660" fill="#00e8ff"/><rect x="716" y="660" fill="#00e6ff"/><rect x="728" y="660" fill="#00e4ff"/><rect x="740" y="660" fill="#00e2ff"/><rect x="752" y="660" fill="#00dfff"/><rect x="764" y="660" fill="#19dcff"/><rect x="776" y="660" fill="#52dbff"/><rect x="788" y="660" fill="#70dbff"/><rect x="800" y="660" fill="#87daff"/><rect x="812" y="660" fill="#9ad9ff"/><rect x="824" y="660" fill="#acd8ff"/><rect x="836" y="660" fill="#bcd7ff"/><rect x="848" y="660" fill="#cbd6ff"/><rect x="860" y="660" fill="#d9d5ff"/><rect x="872" y="660" fill="#e7d4ff"/><rect x="884" y="660" fill="#f5d2ff"/><rect x="896" y="660" fill="#ffcffc"/><rect x="908" y="660" fill="#ffc4f0"/><rect x="920" y="660" fill="#ffb9e5"/><rect x="932" y="660" fill="#ffb0dc"/><rect x="944" y="660" fill="#ffa7d2"/><rect x="956" y="660" fill="#ff9fca"/><rect x="968" y="660" fill="#ff97c2"/><rect x="980" y="660" fill="#ff90bb"/><rect x="992" y="660" fill="#ff89b4"/><rect x="1004" y="660" fill="#ff82ad"/><rect x="1016" y="660" fill="#ff7ca7"/><rect x="1028" y="660" fill="#ff75a1"/><rect x="1040" y="660" fill="#ff6f9c"/><rect x="1052" y="660" fill="#ff6996"/><rect x="1064" y="660" fill="#ff6391"/><rect x="1076" y="660" fill="#ff5d8c"/><rect x="1088" y="660" fill="#ff5787"/><rect x="1100" y="660" fill="#ff5282"/><rect x="1112" y="660" fill="#ff4b7e"/><rect x="1124" y="660" fill="#ff4579"/><rect x="1136" y="660" fill="#ff3f75"/><rect x="1148" y="660" fill="#ff3870"/><rect x="1160" y="660" fill="#ff306c"/><rect x="1172" y="660" fill="#ff2868"/><rect x="1184" y="660" fill="#ff1e64"/><rect x="1196" y="660" fill="#ff105f"/><rect x="1208" y="660" fill="#ff005c"/><rect x="1220" y="660" fill="#ff005b"/><rect x="1232" y="660" fill="#ff0059"/><rect x="1244" y="660" fill="#ff0058"/><rect x="1256" y="660" fill="#ff0057"/><rect x="1268" y="660" fill="#ff0056"/><rect x="1280" y="660" fill="#ff0054"/><rect x="1292" y="660" fill="#ff0053"/><rect x="1304" y="660" fill="#ff0052"/><rect x="1316" y="660" fill="#ff0051"/><rect x="1328" y="660" fill="#ff0050"/><rect x="1340" y="660" fill="#ff004f"/><rect x="1352" y="660" fill="#ff004e"/><rect x="1364" y="660" fill="#ff004d"/><rect x="1376" y="660" fill="#ff004d"/><rect x="1388" y="660" fill="#ff004c"/><rect x="1400" y="660" fill="#ff004b"/><rect x="1412" y="660" fill="#ff004a"/><rect x="1424" y="660" fill="#ff0049"/><rect x="1436" y="660" fill="#ff0049"/><rect x="1448" y="660" fill="#ff0048"/><rect x="476" y="672" fill="#00eeff"/><rect x="488" y="672" fill="#00eeff"/><rect x="500" y="672" fill="#00eeff"/><rect x="512" y="672" fill="#00edff"/><rect x="524" y="672" fill="#00edff"/><rect x="536" y="672" fill="#00ecff"/><rect x="548" y="672" fill="#00ebff"/><rect x="560" y="672" fill="#00ebff"/><rect x="572" y="672" fill="#00eaff"/><rect x="584" y="672" fill="#00e9ff"/><rect x="596" y="672" fill="#00e8ff"/><rect x="608" y="672" fill="#00e7ff"/><rect x="620" y="672" fill="#00e6ff"/><rect x="632" y="672" fill="#00e5ff"/><rect x="644" y="672" fill="#00e3ff"/><rect x="656" y="672" fill="#00e2ff"/><rect x="668" y="672" fill="#00e0ff"/><rect x="680" y="672" fill="#00deff"/><rect x="692" y="672" fill="#00dcff"/><rect x="704" y="672" fill="#00d9ff"/><rect x="716" y="672" fill="#00d6ff"/><rect x="728" y="672" fill="#00d3ff"/><rect x="740" y="672" fill="#00cfff"/><rect x="752" y="672" fill="#00cbff"/><rect x="764" y="672" fill="#45c9ff"/><rect x="776" y="672" fill="#65c8ff"/><rect x="788" y="672" fill="#7cc6ff"/><rect x="800" y="672" fill="#90c5ff"/><rect x="812" y="672" fill="#a1c4ff"/><rect x="824" y="672" fill="#b1c2ff"/><rect x="836" y="672" fill="#c0c1ff"/><rect x="848" y="672" fill="#cdbfff"/><rect x="860" y="672" fill="#dbbdff"/><rect x="872" y="672" fill="#e7bbff"/><rect x="884" y="672" fill="#f4baff"/><rect x="896" y="672" fill="#ffb7fe"/><rect x="908" y="672" fill="#ffacf3"/><rect x="920" y="672" fill="#ffa3e8"/><rect x="932" y="672" fill="#ff9adf"/><rect x="944" y="672" fill="#ff92d6"/><rect x="956" y="672" fill="#ff8ace"/><rect x="968" y="672" fill="#ff82c7"/><rect x="980" y="672" fill="#ff7bc0"/><rect x="992" y="672" fill="#ff74b9"/><rect x="1004" y="672" fill="#ff6db3"/><rect x="1016" y="672" fill="#ff66ad"/><rect x="1028" y="672" fill="#ff5fa7"/><rect x="1040" y="672" fill="#ff59a1"/><rect x="1052" y="672" fill="#ff529c"/><rect x="1064" y="672" fill="#ff4b97"/><rect x="1076" y="672" fill="#ff4492"/><rect x="1088" y="672" fill="#ff3d8e"/><rect x="1100" y="672" fill="#ff3589"/><rect x="1112" y="672" fill="#ff2c85"/><rect x="1124" y="672" fill="#ff2280"/><rect x="1136" y="672" fill="#ff137c"/><rect x="1148" y="672" fill="#ff0078"/><rect x="1160" y="672" fill="#ff0076"/><rect x="1172" y="672" fill="#ff0074"/><rect x="1184" y="672" fill="#ff0072"/><rect x="1196" y="672" fill="#ff0071"/><rect x="1208" y="672" fill="#ff006f"/><rect x="1220" y="672" fill="#ff006d"/><rect x="1232" y="672" fill="#ff006c"/><rect x="1244" y="672" fill="#ff006a"/><rect x="1256" y="672" fill="#ff0069"/><rect x="1268" y="672" fill="#ff0067"/><rect x="1280" y="672" fill="#ff0066"/><rect x="1292" y="672" fill="#ff0065"/><rect x="1304" y="672" fill="#ff0064"/><rect x="1316" y="672" fill="#ff0062"/><rect x="1328" y="672" fill="#ff0061"/><rect x="1340" y="672" fill="#ff0060"/><rect x="1352" y="672" fill="#ff005f"/><rect x="1364" y="672" fill="#ff005e"/><rect x="1376" y="672" fill="#ff005d"/><rect x="1388" y="672" fill="#ff005c"/><rect x="1400" y="672" fill="#ff005b"/><rect x="1412" y="672" fill="#ff005a"/><rect x="1424" y="672" fill="#ff0059"/><rect x="1436" y="672" fill="#ff0059"/><rect x="1448" y="672" fill="#ff0058"/><rect x="476" y="684" fill="#00e8ff"/><rect x="488" y="684" fill="#00e8ff"/><rect x="500" y="684" fill="#00e7ff"/><rect x="512" y="684" fill="#00e6ff"/><rect x="524" y="684" fill="#00e6ff"/><rect x="536" y="684" fill="#00e5ff"/><rect x="548" y="684" fill="#00e4ff"/><rect x="560" y="684" fill="#00e3ff"/><rect x="572" y="684" fill="#00e2ff"/><rect x="584" y="684" fill="#00e0ff"/><rect x="596" y="684" fill="#00dfff"/><rect x="608" y="684" fill="#00ddff"/><rect x="620" y="684" fill="#00dcff"/><rect x="632" y="684" fill="#00daff"/><rect x="644" y="684" fill="#00d8ff"/><rect x="656" y="684" fill="#00d6ff"/><rect x="668" y="684" fill="#00d3ff"/><rect x="680" y="684" fill="#00d1ff"/><rect x="692" y="684" fill="#00cdff"/><rect x="704" y="684" fill="#00caff"/><rect x="716" y="684" fill="#00c6ff"/><rect x="728" y="684" fill="#00c1ff"/><rect x="740" y="684" fill="#00bbff"/><rect x="752" y="684" fill="#38b7ff"/><rect x="764" y="684" fill="#5bb5ff"/><rect x="776" y="684" fill="#73b4ff"/><rect x="788" y="684" fill="#87b2ff"/><rect x="800" y="684" fill="#98b0ff"/><rect x="812" y="684" fill="#a7aeff"/><rect x="824" y="684" fill="#b5acff"/><rect x="836" y="684" fill="#c3aaff"/><rect x="848" y="684" fill="#cfa8ff"/><rect x="860" y="684" fill="#dca5ff"/><rect x="872" y="684" fill="#e8a3ff"/><rect x="884" y="684" fill="#f3a0ff"/><rect x="896" y="684" fill="#fe9dff"/><rect x="908" y="684" fill="#ff94f5"/><rect x="920" y="684" fill="#ff8beb"/><rect x="932" y="684" fill="#ff82e2"/><rect x="944" y="684" fill="#ff7ada"/><rect x="956" y="684" fill="#ff72d2"/><rect x="968" y="684" fill="#ff6acb"/><rect x="980" y="684" fill="#ff62c4"/><rect x="992" y="684" fill="#ff5abd"/><rect x="1004" y="684" fill="#ff53b7"/><rect x="1016" y="684" fill="#ff4bb2"/><rect x="1028" y="684" fill="#ff43ac"/><rect x="1040" y="684" fill="#ff3aa7"/><rect x="1052" y="684" fill="#ff31a2"/><rect x="1064" y="684" fill="#ff269d"/><rect x="1076" y="684" fill="#ff1798"/><rect x="1088" y="684" fill="#ff0094"/><rect x="1100" y="684" fill="#ff0091"/><rect x="1112" y="684" fill="#ff008e"/><rect x="1124" y="684" fill="#ff008b"/><rect x="1136" y="684" fill="#ff0089"/><rect x="1148" y="684" fill="#ff0087"/><rect x="1160" y="684" fill="#ff0085"/><rect x="1172" y="684" fill="#ff0083"/><rect x="1184" y="684" fill="#ff0081"/><rect x="1196" y="684" fill="#ff007f"/><rect x="1208" y="684" fill="#ff007d"/><rect x="1220" y="684" fill="#ff007b"/><rect x="1232" y="684" fill="#ff0079"/><rect x="1244" y="684" fill="#ff0078"/><rect x="1256" y="684" fill="#ff0076"/><rect x="1268" y="684" fill="#ff0075"/><rect x="1280" y="684" fill="#ff0074"/><rect x="1292" y="684" fill="#ff0072"/><rect x="1304" y="684" fill="#ff0071"/><rect x="1316" y="684" fill="#ff0070"/><rect x="1328" y="684" fill="#ff006e"/><rect x="1340" y="684" fill="#ff006d"/><rect x="1352" y="684" fill="#ff006c"/><rect x="1364" y="684" fill="#ff006b"/><rect x="1376" y="684" fill="#ff006a"/><rect x="1388" y="684" fill="#ff0069"/><rect x="1400" y="684" fill="#ff0068"/><rect x="1412" y="684" fill="#ff0067"/><rect x="1424" y="684" fill="#ff0066"/><rect x="1436" y="684" fill="#ff0065"/><rect x="1448" y="684" fill="#ff0064"/><rect x="476" y="696" fill="#00e1ff"/><rect x="488" y="696" fill="#00e1ff"/><rect x="500" y="696" fill="#00e0ff"/><rect x="512" y="696" fill="#00dfff"/><rect x="524" y="696" fill="#00deff"/><rect x="536" y="696" fill="#00ddff"/><rect x="548" y="696" fill="#00dcff"/><rect x="560" y="696" fill="#00daff"/><rect x="572" y="696" fill="#00d9ff"/><rect x="584" y="696" fill="#00d7ff"/><rect x="596" y="696" fill="#00d5ff"/><rect x="608" y="696" fill="#00d4ff"/><rect x="620" y="696" fill="#00d1ff"/><rect x="632" y="696" fill="#00cfff"/><rect x="644" y="696" fill="#00ccff"/><rect x="656" y="696" fill="#00c9ff"/><rect x="668" y="696" fill="#00c6ff"/><rect x="680" y="696" fill="#00c2ff"/><rect x="692" y="696" fill="#00beff"/><rect x="704" y="696" fill="#00b9ff"/><rect x="716" y="696" fill="#00b3ff"/><rect x="728" y="696" fill="#00acff"/><rect x="740" y="696" fill="#29a6ff"/><rect x="752" y="696" fill="#51a4ff"/><rect x="764" y="696" fill="#6aa2ff"/><rect x="776" y="696" fill="#7e9fff"/><rect x="788" y="696" fill="#8f9dff"/><rect x="800" y="696" fill="#9e9bff"/><rect x="812" y="696" fill="#ac98ff"/><rect x="824" y="696" fill="#b995ff"/><rect x="836" y="696" fill="#c592ff"/><rect x="848" y="696" fill="#d18fff"/><rect x="860" y="696" fill="#dd8cff"/><rect x="872" y="696" fill="#e889ff"/><rect x="884" y="696" fill="#f385ff"/><rect x="896" y="696" fill="#fd81ff"/><rect x="908" y="696" fill="#ff78f7"/><rect x="920" y="696" fill="#ff6fed"/><rect x="932" y="696" fill="#ff66e5"/><rect x="944" y="696" fill="#ff5ddd"/><rect x="956" y="696" fill="#ff54d5"/><rect x="968" y="696" fill="#ff4bce"/><rect x="980" y="696" fill="#ff41c8"/><rect x="992" y="696" fill="#ff37c1"/><rect x="1004" y="696" fill="#ff2bbc"/><rect x="1016" y="696" fill="#ff1cb6"/><rect x="1028" y="696" fill="#ff00b1"/><rect x="1040" y="696" fill="#ff00ad"/><rect x="1052" y="696" fill="#ff00a9"/><rect x="1064" y="696" fill="#ff00a5"/><rect x="1076" y="696" fill="#ff00a2"/><rect x="1088" y="696" fill="#ff009f"/><rect x="1100" y="696" fill="#ff009c"/><rect x="1112" y="696" fill="#ff009a"/><rect x="1124" y="696" fill="#ff0097"/><rect x="1136" y="696" fill="#ff0094"/><rect x="1148" y="696" fill="#ff0092"/><rect x="1160" y="696" fill="#ff0090"/><rect x="1172" y="696" fill="#ff008e"/><rect x="1184" y="696" fill="#ff008c"/><rect x="1196" y="696" fill="#ff008a"/><rect x="1208" y="696" fill="#ff0088"/><rect x="1220" y="696" fill="#ff0086"/><rect x="1232" y="696" fill="#ff0085"/><rect x="1244" y="696" fill="#ff0083"/><rect x="1256" y="696" fill="#ff0081"/><rect x="1268" y="696" fill="#ff0080"/><rect x="1280" y="696" fill="#ff007e"/><rect x="1292" y="696" fill="#ff007d"/><rect x="1304" y="696" fill="#ff007c"/><rect x="1316" y="696" fill="#ff007a"/><rect x="1328" y="696" fill="#ff0079"/><rect x="1340" y="696" fill="#ff0078"/><rect x="1352" y="696" fill="#ff0076"/><rect x="1364" y="696" fill="#ff0075"/><rect x="1376" y="696" fill="#ff0074"/><rect x="1388" y="696" fill="#ff0073"/><rect x="1400" y="696" fill="#ff0072"/><rect x="1412" y="696" fill="#ff0071"/><rect x="1424" y="696" fill="#ff0070"/><rect x="1436" y="696" fill="#ff006f"/><rect x="1448" y="696" fill="#ff006e"/><rect x="476" y="708" fill="#00daff"/><rect x="488" y="708" fill="#00daff"/><rect x="500" y="708" fill="#00d9ff"/><rect x="512" y="708" fill="#00d8ff"/><rect x="524" y="708" fill="#00d7ff"/><rect x="536" y="708" fill="#00d5ff"/><rect x="548" y="708" fill="#00d4ff"/><rect x="560" y="708" fill="#00d2ff"/><rect x="572" y="708" fill="#00d0ff"/><rect x="584" y="708" fill="#00ceff"/><rect x="596" y="708" fill="#00ccff"/><rect x="608" y="708" fill="#00c9ff"/><rect x="620" y="708" fill="#00c6ff"/><rect x="632" y="708" fill="#00c3ff"/><rect x="644" y="708" fill="#00c0ff"/><rect x="656" y="708" fill="#00bcff"/><rect x="668" y="708" fill="#00b7ff"/><rect x="680" y="708" fill="#00b2ff"/><rect x="692" y="708" fill="#00adff"/><rect x="704" y="708" fill="#00a6ff"/><rect x="716" y="708" fill="#009dff"/><rect x="728" y="708" fill="#1494ff"/><rect x="740" y="708" fill="#4792ff"/><rect x="752" y="708" fill="#618fff"/><rect x="764" y="708" fill="#758dff"/><rect x="776" y="708" fill="#868aff"/><rect x="788" y="708" fill="#9687ff"/><rect x="800" y="708" fill="#a383ff"/><rect x="812" y="708" fill="#b080ff"/><rect x="824" y="708" fill="#bc7cff"/><rect x="836" y="708" fill="#c878ff"/><rect x="848" y="708" fill="#d374ff"/><rect x="860" y="708" fill="#dd6fff"/><rect x="872" y="708" fill="#e86aff"/><rect x="884" y="708" fill="#f265ff"/><rect x="896" y="708" fill="#fc5fff"/><rect x="908" y="708" fill="#ff55f8"/><rect x="920" y="708" fill="#ff4aef"/><rect x="932" y="708" fill="#ff3ee7"/><rect x="944" y="708" fill="#ff31df"/><rect x="956" y="708" fill="#ff21d8"/><rect x="968" y="708" fill="#ff04d2"/><rect x="980" y="708" fill="#ff00cc"/><rect x="992" y="708" fill="#ff00c7"/><rect x="1004" y="708" fill="#ff00c2"/><rect x="1016" y="708" fill="#ff00bd"/><rect x="1028" y="708" fill="#ff00b9"/><rect x="1040" y="708" fill="#ff00b6"/><rect x="1052" y="708" fill="#ff00b2"/><rect x="1064" y="708" fill="#ff00af"/><rect x="1076" y="708" fill="#ff00ab"/><rect x="1088" y="708" fill="#ff00a8"/><rect x="1100" y="708" fill="#ff00a5"/><rect x="1112" y="708" fill="#ff00a3"/><rect x="1124" y="708" fill="#ff00a0"/><rect x="1136" y="708" fill="#ff009e"/><rect x="1148" y="708" fill="#ff009b"/><rect x="1160" y="708" fill="#ff0099"/><rect x="1172" y="708" fill="#ff0097"/><rect x="1184" y="708" fill="#ff0095"/><rect x="1196" y="708" fill="#ff0093"/><rect x="1208" y="708" fill="#ff0091"/><rect x="1220" y="708" fill="#ff008f"/><rect x="1232" y="708" fill="#ff008e"/><rect x="1244" y="708" fill="#ff008c"/><rect x="1256" y="708" fill="#ff008a"/><rect x="1268" y="708" fill="#ff0089"/><rect x="1280" y="708" fill="#ff0087"/><rect x="1292" y="708" fill="#ff0086"/><rect x="1304" y="708" fill="#ff0084"/><rect x="1316" y="708" fill="#ff0083"/><rect x="1328" y="708" fill="#ff0082"/><rect x="1340" y="708" fill="#ff0081"/><rect x="1352" y="708" fill="#ff007f"/><rect x="1364" y="708" fill="#ff007e"/><rect x="1376" y="708" fill="#ff007d"/><rect x="1388" y="708" fill="#ff007c"/><rect x="1400" y="708" fill="#ff007b"/><rect x="1412" y="708" fill="#ff007a"/><rect x="1424" y="708" fill="#ff0079"/><rect x="1436" y="708" fill="#ff0078"/><rect x="1448" y="708" fill="#ff0077"/><rect x="476" y="720" fill="#00d3ff"/><rect x="488" y="720" fill="#00d3ff"/><rect x="500" y="720" fill="#00d2ff"/><rect x="512" y="720" fill="#00d1ff"/><rect x="524" y="720" fill="#00cfff"/><rect x="536" y="720" fill="#00cdff"/><rect x="548" y="720" fill="#00cbff"/><rect x="560" y="720" fill="#00c9ff"/><rect x="572" y="720" fill="#00c6ff"/><rect x="584" y="720" fill="#00c4ff"/><rect x="596" y="720" fill="#00c1ff"/><rect x="608" y="720" fill="#00beff"/><rect x="620" y="720" fill="#00baff"/><rect x="632" y="720" fill="#00b7ff"/><rect x="644" y="720" fill="#00b2ff"/><rect x="656" y="720" fill="#00adff"/><rect x="668" y="720" fill="#00a7ff"/><rect x="680" y="720" fill="#00a1ff"/><rect x="692" y="720" fill="#0099ff"/><rect x="704" y="720" fill="#0090ff"/><rect x="716" y="720" fill="#0084ff"/><rect x="728" y="720" fill="#3c80ff"/><rect x="740" y="720" fill="#597cff"/><rect x="752" y="720" fill="#6e79ff"/><rect x="764" y="720" fill="#7f75ff"/><rect x="776" y="720" fill="#8e72ff"/><rect x="788" y="720" fill="#9b6eff"/><rect x="800" y="720" fill="#a869ff"/><rect x="812" y="720" fill="#b464ff"/><rect x="824" y="720" fill="#bf5fff"/><rect x="836" y="720" fill="#ca59ff"/><rect x="848" y="720" fill="#d452ff"/><rect x="860" y="720" fill="#de4bff"/><rect x="872" y="720" fill="#e842ff"/><rect x="884" y="720" fill="#f237ff"/><rect x="896" y="720" fill="#fb28ff"/><rect x="908" y="720" fill="#ff0bfa"/><rect x="920" y="720" fill="#ff00f1"/><rect x="932" y="720" fill="#ff00ea"/><rect x="944" y="720" fill="#ff00e3"/><rect x="956" y="720" fill="#ff00dd"/><rect x="968" y="720" fill="#ff00d7"/><rect x="980" y="720" fill="#ff00d2"/><rect x="992" y="720" fill="#ff00cd"/><rect x="1004" y="720" fill="#ff00c9"/><rect x="1016" y="720" fill="#ff00c4"/><rect x="1028" y="720" fill="#ff00c0"/><rect x="1040" y="720" fill="#ff00bd"/><rect x="1052" y="720" fill="#ff00b9"/><rect x="1064" y="720" fill="#ff00b6"/><rect x="1076" y="720" fill="#ff00b3"/><rect x="1088" y="720" fill="#ff00b0"/><rect x="1100" y="720" fill="#ff00ad"/><rect x="1112" y="720" fill="#ff00ab"/><rect x="1124" y="720" fill="#ff00a8"/><rect x="1136" y="720" fill="#ff00a6"/><rect x="1148" y="720" fill="#ff00a3"/><rect x="1160" y="720" fill="#ff00a1"/><rect x="1172" y="720" fill="#ff009f"/><rect x="1184" y="720" fill="#ff009d"/><rect x="1196" y="720" fill="#ff009b"/><rect x="1208" y="720" fill="#ff0099"/><rect x="1220" y="720" fill="#ff0097"/><rect x="1232" y="720" fill="#ff0095"/><rect x="1244" y="720" fill="#ff0094"/><rect x="1256" y="720" fill="#ff0092"/><rect x="1268" y="720" fill="#ff0091"/><rect x="1280" y="720" fill="#ff008f"/><rect x="1292" y="720" fill="#ff008e"/><rect x="1304" y="720" fill="#ff008c"/><rect x="1316" y="720" fill="#ff008b"/><rect x="1328" y="720" fill="#ff0089"/><rect x="1340" y="720" fill="#ff0088"/><rect x="1352" y="720" fill="#ff0087"/><rect x="1364" y="720" fill="#ff0086"/><rect x="1376" y="720" fill="#ff0084"/><rect x="1388" y="720" fill="#ff0083"/><rect x="1400" y="720" fill="#ff0082"/><rect x="1412" y="720" fill="#ff0081"/><rect x="1424" y="720" fill="#ff0080"/><rect x="1436" y="720" fill="#ff007f"/><rect x="1448" y="720" fill="#ff007e"/><rect x="476" y="732" fill="#00ccff"/><rect x="488" y="732" fill="#00ccff"/><rect x="500" y="732" fill="#00cbff"/><rect x="512" y="732" fill="#00c9ff"/><rect x="524" y="732" fill="#00c7ff"/><rect x="536" y="732" fill="#00c4ff"/><rect x="548" y="732" fill="#00c2ff"/><rect x="560" y="732" fill="#00bfff"/><rect x="572" y="732" fill="#00bcff"/><rect x="584" y="732" fill="#00b9ff"/><rect x="596" y="732" fill="#00b6ff"/><rect x="608" y="732" fill="#00b2ff"/><rect x="620" y="732" fill="#00aeff"/><rect x="632" y="732" fill="#00a9ff"/><rect x="644" y="732" fill="#00a3ff"/><rect x="656" y="732" fill="#009dff"/><rect x="668" y="732" fill="#0096ff"/><rect x="680" y="732" fill="#008dff"/><rect x="692" y="732" fill="#0082ff"/><rect x="704" y="732" fill="#0074ff"/><rect x="716" y="732" fill="#316cff"/><rect x="728" y="732" fill="#5068ff"/><rect x="740" y="732" fill="#6664ff"/><rect x="752" y="732" fill="#775fff"/><rect x="764" y="732" fill="#865aff"/><rect x="776" y="732" fill="#9454ff"/><rect x="788" y="732" fill="#a04eff"/><rect x="800" y="732" fill="#ac47ff"/><rect x="812" y="732" fill="#b73fff"/><rect x="824" y="732" fill="#c234ff"/><rect x="836" y="732" fill="#cc27ff"/><rect x="848" y="732" fill="#d50fff"/><rect x="860" y="732" fill="#df00ff"/><rect x="872" y="732" fill="#e900ff"/><rect x="884" y="732" fill="#f200ff"/><rect x="896" y="732" fill="#fa00ff"/><rect x="908" y="732" fill="#ff00fb"/><rect x="920" y="732" fill="#ff00f4"/><rect x="932" y="732" fill="#ff00ed"/><rect x="944" y="732" fill="#ff00e7"/><rect x="956" y="732" fill="#ff00e1"/><rect x="968" y="732" fill="#ff00dc"/><rect x="980" y="732" fill="#ff00d7"/><rect x="992" y="732" fill="#ff00d2"/><rect x="1004" y="732" fill="#ff00ce"/><rect x="1016" y="732" fill="#ff00ca"/><rect x="1028" y="732" fill="#ff00c6"/><rect x="1040" y="732" fill="#ff00c3"/><rect x="1052" y="732" fill="#ff00bf"/><rect x="1064" y="732" fill="#ff00bc"/><rect x="1076" y="732" fill="#ff00b9"/><rect x="1088" y="732" fill="#ff00b6"/><rect x="1100" y="732" fill="#ff00b4"/><rect x="1112" y="732" fill="#ff00b1"/><rect x="1124" y="732" fill="#ff00af"/><rect x="1136" y="732" fill="#ff00ac"/><rect x="1148" y="732" fill="#ff00aa"/><rect x="1160" y="732" fill="#ff00a8"/><rect x="1172" y="732" fill="#ff00a6"/><rect x="1184" y="732" fill="#ff00a4"/><rect x="1196" y="732" fill="#ff00a2"/><rect x="1208" y="732" fill="#ff00a0"/><rect x="1220" y="732" fill="#ff009e"/><rect x="1232" y="732" fill="#ff009c"/><rect x="1244" y="732" fill="#ff009b"/><rect x="1256" y="732" fill="#ff0099"/><rect x="1268" y="732" fill="#ff0097"/><rect x="1280" y="732" fill="#ff0096"/><rect x="1292" y="732" fill="#ff0094"/><rect x="1304" y="732" fill="#ff0093"/><rect x="1316" y="732" fill="#ff0091"/><rect x="1328" y="732" fill="#ff0090"/><rect x="1340" y="732" fill="#ff008f"/><rect x="1352" y="732" fill="#ff008e"/><rect x="1364" y="732" fill="#ff008c"/><rect x="1376" y="732" fill="#ff008b"/><rect x="1388" y="732" fill="#ff008a"/><rect x="1400" y="732" fill="#ff0089"/><rect x="1412" y="732" fill="#ff0088"/><rect x="1424" y="732" fill="#ff0087"/><rect x="1436" y="732" fill="#ff0085"/><rect x="1448" y="732" fill="#ff0084"/><rect x="476" y="744" fill="#00c4ff"/><rect x="488" y="744" fill="#00c4ff"/><rect x="500" y="744" fill="#00c3ff"/><rect x="512" y="744" fill="#00c0ff"/><rect x="524" y="744" fill="#00beff"/><rect x="536" y="744" fill="#00bbff"/><rect x="548" y="744" fill="#00b8ff"/><rect x="560" y="744" fill="#00b5ff"/><rect x="572" y="744" fill="#00b2ff"/><rect x="584" y="744" fill="#00aeff"/><rect x="596" y="744" fill="#00aaff"/><rect x="608" y="744" fill="#00a5ff"/><rect x="620" y="744" fill="#00a0ff"/><rect x="632" y="744" fill="#009aff"/><rect x="644" y="744" fill="#0093ff"/><rect x="656" y="744" fill="#008aff"/><rect x="668" y="744" fill="#0081ff"/><rect x="680" y="744" fill="#0074ff"/><rect x="692" y="744" fill="#0065ff"/><rect x="704" y="744" fill="#2456ff"/><rect x="716" y="744" fill="#4851ff"/><rect x="728" y="744" fill="#5f4bff"/><rect x="740" y="744" fill="#7044ff"/><rect x="752" y="744" fill="#7f3cff"/><rect x="764" y="744" fill="#8d32ff"/><rect x="776" y="744" fill="#9926ff"/><rect x="788" y="744" fill="#a511ff"/><rect x="800" y="744" fill="#b000ff"/><rect x="812" y="744" fill="#bc00ff"/><rect x="824" y="744" fill="#c600ff"/><rect x="836" y="744" fill="#d000ff"/><rect x="848" y="744" fill="#d900ff"/><rect x="860" y="744" fill="#e200ff"/><rect x="872" y="744" fill="#ea00ff"/><rect x="884" y="744" fill="#f200ff"/><rect x="896" y="744" fill="#fa00ff"/><rect x="908" y="744" fill="#ff00fd"/><rect x="920" y="744" fill="#ff00f6"/><rect x="932" y="744" fill="#ff00f0"/><rect x="944" y="744" fill="#ff00ea"/><rect x="956" y="744" fill="#ff00e5"/><rect x="968" y="744" fill="#ff00e0"/><rect x="980" y="744" fill="#ff00db"/><rect x="992" y="744" fill="#ff00d7"/><rect x="1004" y="744" fill="#ff00d3"/><rect x="1016" y="744" fill="#ff00cf"/><rect x="1028" y="744" fill="#ff00cb"/><rect x="1040" y="744" fill="#ff00c8"/><rect x="1052" y="744" fill="#ff00c5"/><rect x="1064" y="744" fill="#ff00c2"/><rect x="1076" y="744" fill="#ff00bf"/><rect x="1088" y="744" fill="#ff00bc"/><rect x="1100" y="744" fill="#ff00b9"/><rect x="1112" y="744" fill="#ff00b7"/><rect x="1124" y="744" fill="#ff00b4"/><rect x="1136" y="744" fill="#ff00b2"/><rect x="1148" y="744" fill="#ff00b0"/><rect x="1160" y="744" fill="#ff00ad"/><rect x="1172" y="744" fill="#ff00ab"/><rect x="1184" y="744" fill="#ff00a9"/><rect x="1196" y="744" fill="#ff00a7"/><rect x="1208" y="744" fill="#ff00a6"/><rect x="1220" y="744" fill="#ff00a4"/><rect x="1232" y="744" fill="#ff00a2"/><rect x="1244" y="744" fill="#ff00a0"/><rect x="1256" y="744" fill="#ff009f"/><rect x="1268" y="744" fill="#ff009d"/><rect x="1280" y="744" fill="#ff009c"/><rect x="1292" y="744" fill="#ff009a"/><rect x="1304" y="744" fill="#ff0099"/><rect x="1316" y="744" fill="#ff0097"/><rect x="1328" y="744" fill="#ff0096"/><rect x="1340" y="744" fill="#ff0095"/><rect x="1352" y="744" fill="#ff0093"/><rect x="1364" y="744" fill="#ff0092"/><rect x="1376" y="744" fill="#ff0091"/><rect x="1388" y="744" fill="#ff0090"/><rect x="1400" y="744" fill="#ff008f"/><rect x="1412" y="744" fill="#ff008d"/><rect x="1424" y="744" fill="#ff008c"/><rect x="1436" y="744" fill="#ff008b"/><rect x="1448" y="744" fill="#ff008a"/><rect x="476" y="756" fill="#00bcff"/><rect x="488" y="756" fill="#00bcff"/><rect x="500" y="756" fill="#00baff"/><rect x="512" y="756" fill="#00b8ff"/><rect x="524" y="756" fill="#00b5ff"/><rect x="536" y="756" fill="#00b2ff"/><rect x="548" y="756" fill="#00aeff"/><rect x="560" y="756" fill="#00abff"/><rect x="572" y="756" fill="#00a6ff"/><rect x="584" y="756" fill="#00a2ff"/><rect x="596" y="756" fill="#009dff"/><rect x="608" y="756" fill="#0097ff"/><rect x="620" y="756" fill="#0090ff"/><rect x="632" y="756" fill="#0088ff"/><rect x="644" y="756" fill="#007fff"/><rect x="656" y="756" fill="#0074ff"/><rect x="668" y="756" fill="#0066ff"/><rect x="680" y="756" fill="#0054ff"/><rect x="692" y="756" fill="#113aff"/><rect x="704" y="756" fill="#3f31ff"/><rect x="716" y="756" fill="#5725ff"/><rect x="728" y="756" fill="#6a13ff"/><rect x="740" y="756" fill="#7a00ff"/><rect x="752" y="756" fill="#8a00ff"/><rect x="764" y="756" fill="#9800ff"/><rect x="776" y="756" fill="#a400ff"/><rect x="788" y="756" fill="#af00ff"/><rect x="800" y="756" fill="#b900ff"/><rect x="812" y="756" fill="#c300ff"/><rect x="824" y="756" fill="#cc00ff"/><rect x="836" y="756" fill="#d500ff"/><rect x="848" y="756" fill="#dd00ff"/><rect x="860" y="756" fill="#e400ff"/><rect x="872" y="756" fill="#ec00ff"/><rect x="884" y="756" fill="#f300ff"/><rect x="896" y="756" fill="#fa00ff"/><rect x="908" y="756" fill="#ff00fe"/><rect x="920" y="756" fill="#ff00f8"/><rect x="932" y="756" fill="#ff00f2"/><rect x="944" y="756" fill="#ff00ed"/><rect x="956" y="756" fill="#ff00e8"/><rect x="968" y="756" fill="#ff00e3"/><rect x="980" y="756" fill="#ff00df"/><rect x="992" y="756" fill="#ff00db"/><rect x="1004" y="756" fill="#ff00d7"/><rect x="1016" y="756" fill="#ff00d3"/><rect x="1028" y="756" fill="#ff00d0"/><rect x="1040" y="756" fill="#ff00cc"/><rect x="1052" y="756" fill="#ff00c9"/><rect x="1064" y="756" fill="#ff00c6"/><rect x="1076" y="756" fill="#ff00c3"/><rect x="1088" y="756" fill="#ff00c1"/><rect x="1100" y="756" fill="#ff00be"/><rect x="1112" y="756" fill="#ff00bc"/><rect x="1124" y="756" fill="#ff00b9"/><rect x="1136" y="756" fill="#ff00b7"/><rect x="1148" y="756" fill="#ff00b5"/><rect x="1160" y="756" fill="#ff00b3"/><rect x="1172" y="756" fill="#ff00b1"/><rect x="1184" y="756" fill="#ff00af"/><rect x="1196" y="756" fill="#ff00ad"/><rect x="1208" y="756" fill="#ff00ab"/><rect x="1220" y="756" fill="#ff00a9"/><rect x="1232" y="756" fill="#ff00a7"/><rect x="1244" y="756" fill="#ff00a6"/><rect x="1256" y="756" fill="#ff00a4"/><rect x="1268" y="756" fill="#ff00a2"/><rect x="1280" y="756" fill="#ff00a1"/><rect x="1292" y="756" fill="#ff009f"/><rect x="1304" y="756" fill="#ff009e"/><rect x="1316" y="756" fill="#ff009d"/><rect x="1328" y="756" fill="#ff009b"/><rect x="1340" y="756" fill="#ff009a"/><rect x="1352" y="756" fill="#ff0099"/><rect x="1364" y="756" fill="#ff0097"/><rect x="1376" y="756" fill="#ff0096"/><rect x="1388" y="756" fill="#ff0095"/><rect x="1400" y="756" fill="#ff0094"/><rect x="1412" y="756" fill="#ff0093"/><rect x="1424" y="756" fill="#ff0092"/><rect x="1436" y="756" fill="#ff0091"/><rect x="1448" y="756" fill="#ff008f"/><rect x="476" y="768" fill="#00b4ff"/><rect x="488" y="768" fill="#00b4ff"/><rect x="500" y="768" fill="#00b2ff"/><rect x="512" y="768" fill="#00afff"/><rect x="524" y="768" fill="#00abff"/><rect x="536" y="768" fill="#00a8ff"/><rect x="548" y="768" fill="#00a3ff"/><rect x="560" y="768" fill="#009fff"/><rect x="572" y="768" fill="#009aff"/><rect x="584" y="768" fill="#0094ff"/><rect x="596" y="768" fill="#008eff"/><rect x="608" y="768" fill="#0087ff"/><rect x="620" y="768" fill="#007eff"/><rect x="632" y="768" fill="#0074ff"/><rect x="644" y="768" fill="#0068ff"/><rect x="656" y="768" fill="#0058ff"/><rect x="668" y="768" fill="#0040ff"/><rect x="680" y="768" fill="#0003ff"/><rect x="692" y="768" fill="#4100ff"/><rect x="704" y="768" fill="#5b00ff"/><rect x="716" y="768" fill="#6f00ff"/><rect x="728" y="768" fill="#7f00ff"/><rect x="740" y="768" fill="#8c00ff"/><rect x="752" y="768" fill="#9900ff"/><rect x="764" y="768" fill="#a400ff"/><rect x="776" y="768" fill="#ae00ff"/><rect x="788" y="768" fill="#b700ff"/><rect x="800" y="768" fill="#c000ff"/><rect x="812" y="768" fill="#c900ff"/><rect x="824" y="768" fill="#d000ff"/><rect x="836" y="768" fill="#d800ff"/><rect x="848" y="768" fill="#df00ff"/><rect x="860" y="768" fill="#e600ff"/><rect x="872" y="768" fill="#ed00ff"/><rect x="884" y="768" fill="#f300ff"/><rect x="896" y="768" fill="#f900ff"/><rect x="908" y="768" fill="#ff00ff"/><rect x="920" y="768" fill="#ff00f9"/><rect x="932" y="768" fill="#ff00f4"/><rect x="944" y="768" fill="#ff00ef"/><rect x="956" y="768" fill="#ff00ea"/><rect x="968" y="768" fill="#ff00e6"/><rect x="980" y="768" fill="#ff00e2"/><rect x="992" y="768" fill="#ff00de"/><rect x="1004" y="768" fill="#ff00da"/><rect x="1016" y="768" fill="#ff00d7"/><rect x="1028" y="768" fill="#ff00d3"/><rect x="1040" y="768" fill="#ff00d0"/><rect x="1052" y="768" fill="#ff00cd"/><rect x="1064" y="768" fill="#ff00ca"/><rect x="1076" y="768" fill="#ff00c8"/><rect x="1088" y="768" fill="#ff00c5"/><rect x="1100" y="768" fill="#ff00c2"/><rect x="1112" y="768" fill="#ff00c0"/><rect x="1124" y="768" fill="#ff00be"/><rect x="1136" y="768" fill="#ff00bb"/><rect x="1148" y="768" fill="#ff00b9"/><rect x="1160" y="768" fill="#ff00b7"/><rect x="1172" y="768" fill="#ff00b5"/><rect x="1184" y="768" fill="#ff00b3"/><rect x="1196" y="768" fill="#ff00b1"/><rect x="1208" y="768" fill="#ff00af"/><rect x="1220" y="768" fill="#ff00ae"/><rect x="1232" y="768" fill="#ff00ac"/><rect x="1244" y="768" fill="#ff00aa"/><rect x="1256" y="768" fill="#ff00a9"/><rect x="1268" y="768" fill="#ff00a7"/><rect x="1280" y="768" fill="#ff00a6"/><rect x="1292" y="768" fill="#ff00a4"/><rect x="1304" y="768" fill="#ff00a3"/><rect x="1316" y="768" fill="#ff00a1"/><rect x="1328" y="768" fill="#ff00a0"/><rect x="1340" y="768" fill="#ff009f"/><rect x="1352" y="768" fill="#ff009d"/><rect x="1364" y="768" fill="#ff009c"/><rect x="1376" y="768" fill="#ff009b"/><rect x="1388" y="768" fill="#ff009a"/><rect x="1400" y="768" fill="#ff0099"/><rect x="1412" y="768" fill="#ff0097"/><rect x="1424" y="768" fill="#ff0096"/><rect x="1436" y="768" fill="#ff0095"/><rect x="1448" y="768" fill="#ff0094"/><rect x="476" y="780" fill="#00abff"/><rect x="488" y="780" fill="#00abff"/><rect x="500" y="780" fill="#00a8ff"/><rect x="512" y="780" fill="#00a5ff"/><rect x="524" y="780" fill="#00a1ff"/><rect x="536" y="780" fill="#009dff"/><rect x="548" y="780" fill="#0098ff"/><rect x="560" y="780" fill="#0092ff"/><rect x="572" y="780" fill="#008cff"/><rect x="584" y="780" fill="#0085ff"/><rect x="596" y="780" fill="#007eff"/><rect x="608" y="780" fill="#0074ff"/><rect x="620" y="780" fill="#0069ff"/><rect x="632" y="780" fill="#005bff"/><rect x="644" y="780" fill="#0047ff"/><rect x="656" y="780" fill="#0025ff"/><rect x="668" y="780" fill="#3000ff"/><rect x="680" y="780" fill="#4f00ff"/><rect x="692" y="780" fill="#6400ff"/><rect x="704" y="780" fill="#7400ff"/><rect x="716" y="780" fill="#8200ff"/><rect x="728" y="780" fill="#8e00ff"/><rect x="740" y="780" fill="#9900ff"/><rect x="752" y="780" fill="#a300ff"/><rect x="764" y="780" fill="#ad00ff"/><rect x="776" y="780" fill="#b600ff"/><rect x="788" y="780" fill="#be00ff"/><rect x="800" y="780" fill="#c600ff"/><rect x="812" y="780" fill="#cd00ff"/><rect x="824" y="780" fill="#d400ff"/><rect x="836" y="780" fill="#db00ff"/><rect x="848" y="780" fill="#e100ff"/><rect x="860" y="780" fill="#e800ff"/><rect x="872" y="780" fill="#ee00ff"/><rect x="884" y="780" fill="#f400ff"/><rect x="896" y="780" fill="#f900ff"/><rect x="908" y="780" fill="#ff00ff"/><rect x="920" y="780" fill="#ff00fa"/><rect x="932" y="780" fill="#ff00f5"/><rect x="944" y="780" fill="#ff00f1"/><rect x="956" y="780" fill="#ff00ec"/><rect x="968" y="780" fill="#ff00e8"/><rect x="980" y="780" fill="#ff00e4"/><rect x="992" y="780" fill="#ff00e1"/><rect x="1004" y="780" fill="#ff00dd"/><rect x="1016" y="780" fill="#ff00da"/><rect x="1028" y="780" fill="#ff00d6"/><rect x="1040" y="780" fill="#ff00d3"/><rect x="1052" y="780" fill="#ff00d1"/><rect x="1064" y="780" fill="#ff00ce"/><rect x="1076" y="780" fill="#ff00cb"/><rect x="1088" y="780" fill="#ff00c9"/><rect x="1100" y="780" fill="#ff00c6"/><rect x="1112" y="780" fill="#ff00c4"/><rect x="1124" y="780" fill="#ff00c1"/><rect x="1136" y="780" fill="#ff00bf"/><rect x="1148" y="780" fill="#ff00bd"/><rect x="1160" y="780" fill="#ff00bb"/><rect x="1172" y="780" fill="#ff00b9"/><rect x="1184" y="780" fill="#ff00b7"/><rect x="1196" y="780" fill="#ff00b5"/><rect x="1208" y="780" fill="#ff00b4"/><rect x="1220" y="780" fill="#ff00b2"/><rect x="1232" y="780" fill="#ff00b0"/><rect x="1244" y="780" fill="#ff00af"/><rect x="1256" y="780" fill="#ff00ad"/><rect x="1268" y="780" fill="#ff00ab"/><rect x="1280" y="780" fill="#ff00aa"/><rect x="1292" y="780" fill="#ff00a8"/><rect x="1304" y="780" fill="#ff00a7"/><rect x="1316" y="780" fill="#ff00a6"/><rect x="1328" y="780" fill="#ff00a4"/><rect x="1340" y="780" fill="#ff00a3"/><rect x="1352" y="780" fill="#ff00a2"/><rect x="1364" y="780" fill="#ff00a1"/><rect x="1376" y="780" fill="#ff009f"/><rect x="1388" y="780" fill="#ff009e"/><rect x="1400" y="780" fill="#ff009d"/><rect x="1412" y="780" fill="#ff009c"/><rect x="1424" y="780" fill="#ff009b"/><rect x="1436" y="780" fill="#ff009a"/><rect x="1448" y="780" fill="#ff0099"/><rect x="476" y="792" fill="#00a2ff"/><rect x="488" y="792" fill="#00a2ff"/><rect x="500" y="792" fill="#009fff"/><rect x="512" y="792" fill="#009aff"/><rect x="524" y="792" fill="#0096ff"/><rect x="536" y="792" fill="#0091ff"/><rect x="548" y="792" fill="#008bff"/><rect x="560" y="792" fill="#0084ff"/><rect x="572" y="792" fill="#007dff"/><rect x="584" y="792" fill="#0074ff"/><rect x="596" y="792" fill="#006aff"/><rect x="608" y="792" fill="#005dff"/><rect x="620" y="792" fill="#004cff"/><rect x="632" y="792" fill="#0033ff"/><rect x="644" y="792" fill="#1b00ff"/><rect x="656" y="792" fill="#4300ff"/><rect x="668" y="792" fill="#5900ff"/><rect x="680" y="792" fill="#6a00ff"/><rect x="692" y="792" fill="#7900ff"/><rect x="704" y="792" fill="#8500ff"/><rect x="716" y="792" fill="#9000ff"/><rect x="728" y="792" fill="#9a00ff"/><rect x="740" y="792" fill="#a300ff"/><rect x="752" y="792" fill="#ac00ff"/><rect x="764" y="792" fill="#b400ff"/><rect x="776" y="792" fill="#bc00ff"/><rect x="788" y="792" fill="#c300ff"/><rect x="800" y="792" fill="#ca00ff"/><rect x="812" y="792" fill="#d100ff"/><rect x="824" y="792" fill="#d700ff"/><rect x="836" y="792" fill="#dd00ff"/><rect x="848" y="792" fill="#e300ff"/><rect x="860" y="792" fill="#e900ff"/><rect x="872" y="792" fill="#ee00ff"/><rect x="884" y="792" fill="#f400ff"/><rect x="896" y="792" fill="#f900ff"/><rect x="908" y="792" fill="#fe00ff"/><rect x="920" y="792" fill="#ff00fb"/><rect x="932" y="792" fill="#ff00f6"/><rect x="944" y="792" fill="#ff00f2"/><rect x="956" y="792" fill="#ff00ee"/><rect x="968" y="792" fill="#ff00ea"/><rect x="980" y="792" fill="#ff00e6"/><rect x="992" y="792" fill="#ff00e3"/><rect x="1004" y="792" fill="#ff00e0"/><rect x="1016" y="792" fill="#ff00dc"/><rect x="1028" y="792" fill="#ff00d9"/><rect x="1040" y="792" fill="#ff00d6"/><rect x="1052" y="792" fill="#ff00d4"/><rect x="1064" y="792" fill="#ff00d1"/><rect x="1076" y="792" fill="#ff00ce"/><rect x="1088" y="792" fill="#ff00cc"/><rect x="1100" y="792" fill="#ff00ca"/><rect x="1112" y="792" fill="#ff00c7"/><rect x="1124" y="792" fill="#ff00c5"/><rect x="1136" y="792" fill="#ff00c3"/><rect x="1148" y="792" fill="#ff00c1"/><rect x="1160" y="792" fill="#ff00bf"/><rect x="1172" y="792" fill="#ff00bd"/><rect x="1184" y="792" fill="#ff00bb"/><rect x="1196" y="792" fill="#ff00b9"/><rect x="1208" y="792" fill="#ff00b7"/><rect x="1220" y="792" fill="#ff00b6"/><rect x="1232" y="792" fill="#ff00b4"/><rect x="1244" y="792" fill="#ff00b2"/><rect x="1256" y="792" fill="#ff00b1"/><rect x="1268" y="792" fill="#ff00af"/><rect x="1280" y="792" fill="#ff00ae"/><rect x="1292" y="792" fill="#ff00ac"/><rect x="1304" y="792" fill="#ff00ab"/><rect x="1316" y="792" fill="#ff00aa"/><rect x="1328" y="792" fill="#ff00a8"/><rect x="1340" y="792" fill="#ff00a7"/><rect x="1352" y="792" fill="#ff00a6"/><rect x="1364" y="792" fill="#ff00a4"/><rect x="1376" y="792" fill="#ff00a3"/><rect x="1388" y="792" fill="#ff00a2"/><rect x="1400" y="792" fill="#ff00a1"/><rect x="1412" y="792" fill="#ff00a0"/><rect x="1424" y="792" fill="#ff009f"/><rect x="1436" y="792" fill="#ff009e"/><rect x="1448" y="792" fill="#ff009d"/><rect x="476" y="804" fill="#00a0ff"/><rect x="488" y="804" fill="#00a0ff"/><rect x="500" y="804" fill="#009dff"/><rect x="512" y="804" fill="#0099ff"/><rect x="524" y="804" fill="#0094ff"/><rect x="536" y="804" fill="#008fff"/><rect x="548" y="804" fill="#0089ff"/><rect x="560" y="804" fill="#0082ff"/><rect x="572" y="804" fill="#007bff"/><rect x="584" y="804" fill="#0072ff"/><rect x="596" y="804" fill="#0067ff"/><rect x="608" y="804" fill="#0059ff"/><rect x="620" y="804" fill="#0047ff"/><rect x="632" y="804" fill="#002aff"/><rect x="644" y="804" fill="#2700ff"/><rect x="656" y="804" fill="#4800ff"/><rect x="668" y="804" fill="#5d00ff"/><rect x="680" y="804" fill="#6d00ff"/><rect x="692" y="804" fill="#7b00ff"/><rect x="704" y="804" fill="#8700ff"/><rect x="716" y="804" fill="#9200ff"/><rect x="728" y="804" fill="#9b00ff"/><rect x="740" y="804" fill="#a400ff"/><rect x="752" y="804" fill="#ad00ff"/><rect x="764" y="804" fill="#b500ff"/><rect x="776" y="804" fill="#bd00ff"/><rect x="788" y="804" fill="#c400ff"/><rect x="800" y="804" fill="#cb00ff"/><rect x="812" y="804" fill="#d100ff"/><rect x="824" y="804" fill="#d700ff"/><rect x="836" y="804" fill="#dd00ff"/><rect x="848" y="804" fill="#e300ff"/><rect x="860" y="804" fill="#e900ff"/><rect x="872" y="804" fill="#ee00ff"/><rect x="884" y="804" fill="#f400ff"/><rect x="896" y="804" fill="#f900ff"/><rect x="908" y="804" fill="#fe00ff"/><rect x="920" y="804" fill="#ff00fb"/><rect x="932" y="804" fill="#ff00f7"/><rect x="944" y="804" fill="#ff00f2"/><rect x="956" y="804" fill="#ff00ee"/><rect x="968" y="804" fill="#ff00ea"/><rect x="980" y="804" fill="#ff00e7"/><rect x="992" y="804" fill="#ff00e3"/><rect x="1004" y="804" fill="#ff00e0"/><rect x="1016" y="804" fill="#ff00dd"/><rect x="1028" y="804" fill="#ff00da"/><rect x="1040" y="804" fill="#ff00d7"/><rect x="1052" y="804" fill="#ff00d4"/><rect x="1064" y="804" fill="#ff00d1"/><rect x="1076" y="804" fill="#ff00cf"/><rect x="1088" y="804" fill="#ff00cc"/><rect x="1100" y="804" fill="#ff00ca"/><rect x="1112" y="804" fill="#ff00c8"/><rect x="1124" y="804" fill="#ff00c5"/><rect x="1136" y="804" fill="#ff00c3"/><rect x="1148" y="804" fill="#ff00c1"/><rect x="1160" y="804" fill="#ff00bf"/><rect x="1172" y="804" fill="#ff00bd"/><rect x="1184" y="804" fill="#ff00bb"/><rect x="1196" y="804" fill="#ff00ba"/><rect x="1208" y="804" fill="#ff00b8"/><rect x="1220" y="804" fill="#ff00b6"/><rect x="1232" y="804" fill="#ff00b5"/><rect x="1244" y="804" fill="#ff00b3"/><rect x="1256" y="804" fill="#ff00b1"/><rect x="1268" y="804" fill="#ff00b0"/><rect x="1280" y="804" fill="#ff00ae"/><rect x="1292" y="804" fill="#ff00ad"/><rect x="1304" y="804" fill="#ff00ab"/><rect x="1316" y="804" fill="#ff00aa"/><rect x="1328" y="804" fill="#ff00a9"/><rect x="1340" y="804" fill="#ff00a7"/><rect x="1352" y="804" fill="#ff00a6"/><rect x="1364" y="804" fill="#ff00a5"/><rect x="1376" y="804" fill="#ff00a4"/><rect x="1388" y="804" fill="#ff00a3"/><rect x="1400" y="804" fill="#ff00a1"/><rect x="1412" y="804" fill="#ff00a0"/><rect x="1424" y="804" fill="#ff009f"/><rect x="1436" y="804" fill="#ff009e"/><rect x="1448" y="804" fill="#ff009d"/></g><g id="cellsb" class="c"><rect x="476" y="384" fill="#00ffb8"/><rect x="488" y="384" fill="#00ffb8"/><rect x="500" y="384" fill="#00ffb7"/><rect x="512" y="384" fill="#00ffb6"/><rect x="524" y="384" fill="#00ffb4"/><rect x="536" y="384" fill="#00ffb3"/><rect x="548" y="384" fill="#00ffb1"/><rect x="560" y="384" fill="#00ffaf"/><rect x="572" y="384" fill="#00ffae"/><rect x="584" y="384" fill="#00ffac"/><rect x="596" y="384" fill="#00ffaa"/><rect x="608" y="384" fill="#00ffa8"/><rect x="620" y="384" fill="#00ffa6"/><rect x="632" y="384" fill="#00ffa3"/><rect x="644" y="384" fill="#00ffa1"/><rect x="656" y="384" fill="#00ff9e"/><rect x="668" y="384" fill="#00ff9b"/><rect x="680" y="384" fill="#00ff99"/><rect x="692" y="384" fill="#00ff95"/><rect x="704" y="384" fill="#00ff92"/><rect x="716" y="384" fill="#00ff8e"/><rect x="728" y="384" fill="#00ff8a"/><rect x="740" y="384" fill="#00ff86"/><rect x="752" y="384" fill="#00ff81"/><rect x="764" y="384" fill="#00ff7c"/><rect x="776" y="384" fill="#00ff76"/><rect x="788" y="384" fill="#00ff70"/><rect x="800" y="384" fill="#00ff68"/><rect x="812" y="384" fill="#00ff5f"/><rect x="824" y="384" fill="#00ff54"/><rect x="836" y="384" fill="#00ff46"/><rect x="848" y="384" fill="#00ff31"/><rect x="860" y="384" fill="#16ff00"/><rect x="872" y="384" fill="#3bff00"/><rect x="884" y="384" fill="#4eff00"/><rect x="896" y="384" fill="#5cff00"/><rect x="908" y="384" fill="#67ff00"/><rect x="920" y="384" fill="#71ff00"/><rect x="932" y="384" fill="#7aff00"/><rect x="944" y="384" fill="#82ff00"/><rect x="956" y="384" fill="#89ff00"/><rect x="968" y="384" fill="#8fff00"/><rect x="980" y="384" fill="#96ff00"/><rect x="992" y="384" fill="#9bff00"/><rect x="1004" y="384" fill="#a1ff00"/><rect x="1016" y="384" fill="#a6ff00"/><rect x="1028" y="384" fill="#abff00"/><rect x="1040" y="384" fill="#b0ff00"/><rect x="1052" y="384" fill="#b5ff00"/><rect x="1064" y="384" fill="#b9ff00"/><rect x="1076" y="384" fill="#bdff00"/><rect x="1088" y="384" fill="#c1ff00"/><rect x="1100" y="384" fill="#c5ff00"/><rect x="1112" y="384" fill="#c9ff00"/><rect x="1124" y="384" fill="#cdff00"/><rect x="1136" y="384" fill="#d1ff00"/><rect x="1148" y="384" fill="#d4ff00"/><rect x="1160" y="384" fill="#d8ff00"/><rect x="1172" y="384" fill="#dbff00"/><rect x="1184" y="384" fill="#deff00"/><rect x="1196" y="384" fill="#e2ff00"/><rect x="1208" y="384" fill="#e5ff00"/><rect x="1220" y="384" fill="#e8ff00"/><rect x="1232" y="384" fill="#ebff00"/><rect x="1244" y="384" fill="#eeff00"/><rect x="1256" y="384" fill="#f1ff00"/><rect x="1268" y="384" fill="#f4ff00"/><rect x="1280" y="384" fill="#f7ff00"/><rect x="1292" y="384" fill="#f9ff00"/><rect x="1304" y="384" fill="#fcff00"/><rect x="1316" y="384" fill="#ffff00"/><rect x="1328" y="384" fill="#fffd00"/><rect x="1340" y="384" fill="#fffa00"/><rect x="1352" y="384" fill="#fff800"/><rect x="1364" y="384" fill="#fff500"/><rect x="1376" y="384" fill="#fff300"/><rect x="1388" y="384" fill="#fff100"/><rect x="1400" y="384" fill="#ffef00"/><rect x="1412" y="384" fill="#ffed00"/><rect x="1424" y="384" fill="#ffeb00"/><rect x="1436" y="384" fill="#ffe900"/><rect x="1448" y="384" fill="#ffe700"/><rect x="476" y="396" fill="#00ffb9"/><rect x="488" y="396" fill="#00ffb9"/><rect x="500" y="396" fill="#00ffb8"/><rect x="512" y="396" fill="#00ffb7"/><rect x="524" y="396" fill="#00ffb5"/><rect x="536" y="396" fill="#00ffb4"/><rect x="548" y="396" fill="#00ffb2"/><rect x="560" y="396" fill="#00ffb0"/><rect x="572" y="396" fill="#00ffae"/><rect x="584" y="396" fill="#00ffad"/><rect x="596" y="396" fill="#00ffab"/><rect x="608" y="396" fill="#00ffa9"/><rect x="620" y="396" fill="#00ffa6"/><rect x="632" y="396" fill="#00ffa4"/><rect x="644" y="396" fill="#00ffa2"/><rect x="656" y="396" fill="#00ff9f"/><rect x="668" y="396" fill="#00ff9c"/><rect x="680" y="396" fill="#00ff99"/><rect x="692" y="396" fill="#00ff96"/><rect x="704" y="396" fill="#00ff93"/><rect x="716" y="396" fill="#00ff8f"/><rect x="728" y="396" fill="#00ff8b"/><rect x="740" y="396" fill="#00ff87"/><rect x="752" y="396" fill="#00ff82"/><rect x="764" y="396" fill="#00ff7d"/><rect x="776" y="396" fill="#00ff77"/><rect x="788" y="396" fill="#00ff71"/><rect x="800" y="396" fill="#00ff69"/><rect x="812" y="396" fill="#00ff60"/><rect x="824" y="396" fill="#00ff55"/><rect x="836" y="396" fill="#00ff47"/><rect x="848" y="396" fill="#00ff33"/><rect x="860" y="396" fill="#13ff00"/><rect x="872" y="396" fill="#3aff00"/><rect x="884" y="396" fill="#4eff00"/><rect x="896" y="396" fill="#5cff00"/><rect x="908" y="396" fill="#67ff00"/><rect x="920" y="396" fill="#71ff00"/><rect x="932" y="396" fill="#7aff00"/><rect x="944" y="396" fill="#82ff00"/><rect x="956" y="396" fill="#89ff00"/><rect x="968" y="396" fill="#90ff00"/><rect x="980" y="396" fill="#96ff00"/><rect x="992" y="396" fill="#9cff00"/><rect x="1004" y="396" fill="#a2ff00"/><rect x="1016" y="396" fill="#a7ff00"/><rect x="1028" y="396" fill="#acff00"/><rect x="1040" y="396" fill="#b1ff00"/><rect x="1052" y="396" fill="#b6ff00"/><rect x="1064" y="396" fill="#baff00"/><rect x="1076" y="396" fill="#beff00"/><rect x="1088" y="396" fill="#c3ff00"/><rect x="1100" y="396" fill="#c7ff00"/><rect x="1112" y="396" fill="#cbff00"/><rect x="1124" y="396" fill="#ceff00"/><rect x="1136" y="396" fill="#d2ff00"/><rect x="1148" y="396" fill="#d6ff00"/><rect x="1160" y="396" fill="#d9ff00"/><rect x="1172" y="396" fill="#ddff00"/><rect x="1184" y="396" fill="#e0ff00"/><rect x="1196" y="396" fill="#e3ff00"/><rect x="1208" y="396" fill="#e6ff00"/><rect x="1220" y="396" fill="#e9ff00"/><rect x="1232" y="396" fill="#ecff00"/><rect x="1244" y="396" fill="#efff00"/><rect x="1256" y="396" fill="#f2ff00"/><rect x="1268" y="396" fill="#f5ff00"/><rect x="1280" y="396" fill="#f8ff00"/><rect x="1292" y="396" fill="#fbff00"/><rect x="1304" y="396" fill="#feff00"/><rect x="1316" y="396" fill="#fffe00"/><rect x="1328" y="396" fill="#fffb00"/><rect x="1340" y="396" fill="#fff900"/><rect x="1352" y="396" fill="#fff600"/><rect x="1364" y="396" fill="#fff400"/><rect x="1376" y="396" fill="#fff200"/><rect x="1388" y="396" fill="#ffef00"/><rect x="1400" y="396" fill="#ffed00"/><rect x="1412" y="396" fill="#ffeb00"/><rect x="1424" y="396" fill="#ffe900"/><rect x="1436" y="396" fill="#ffe700"/><rect x="1448" y="396" fill="#ffe500"/><rect x="476" y="408" fill="#00ffbb"/><rect x="488" y="408" fill="#00ffbb"/><rect x="500" y="408" fill="#00ffba"/><rect x="512" y="408" fill="#00ffb9"/><rect x="524" y="408" fill="#00ffb7"/><rect x="536" y="408" fill="#00ffb6"/><rect x="548" y="408" fill="#00ffb4"/><rect x="560" y="408" fill="#00ffb2"/><rect x="572" y="408" fill="#00ffb1"/><rect x="584" y="408" fill="#00ffaf"/><rect x="596" y="408" fill="#00ffad"/><rect x="608" y="408" fill="#00ffab"/><rect x="620" y="408" fill="#00ffa9"/><rect x="632" y="408" fill="#00ffa7"/><rect x="644" y="408" fill="#00ffa4"/><rect x="656" y="408" fill="#00ffa2"/><rect x="668" y="408" fill="#00ff9f"/><rect x="680" y="408" fill="#00ff9c"/><rect x="692" y="408" fill="#00ff99"/><rect x="704" y="408" fill="#00ff96"/><rect x="716" y="408" fill="#00ff92"/><rect x="728" y="408" fill="#00ff8e"/><rect x="740" y="408" fill="#00ff8a"/><rect x="752" y="408" fill="#00ff85"/><rect x="764" y="408" fill="#00ff80"/><rect x="776" y="408" fill="#00ff7a"/><rect x="788" y="408" fill="#00ff74"/><rect x="800" y="408" fill="#00ff6c"/><rect x="812" y="408" fill="#00ff63"/><rect x="824" y="408" fill="#00ff59"/><rect x="836" y="408" fill="#00ff4b"/><rect x="848" y="408" fill="#00ff37"/><rect x="860" y="408" fill="#02ff00"/><rect x="872" y="408" fill="#38ff00"/><rect x="884" y="408" fill="#4dff00"/><rect x="896" y="408" fill="#5cff00"/><rect x="908" y="408" fill="#68ff00"/><rect x="920" y="408" fill="#72ff00"/><rect x="932" y="408" fill="#7cff00"/><rect x="944" y="408" fill="#84ff00"/><rect x="956" y="408" fill="#8bff00"/><rect x="968" y="408" fill="#92ff00"/><rect x="980" y="408" fill="#99ff00"/><rect x="992" y="408" fill="#9fff00"/><rect x="1004" y="408" fill="#a4ff00"/><rect x="1016" y="408" fill="#aaff00"/><rect x="1028" y="408" fill="#afff00"/><rect x="1040" y="408" fill="#b4ff00"/><rect x="1052" y="408" fill="#b9ff00"/><rect x="1064" y="408" fill="#bdff00"/><rect x="1076" y="408" fill="#c2ff00"/><rect x="1088" y="408" fill="#c6ff00"/><rect x="1100" y="408" fill="#caff00"/><rect x="1112" y="408" fill="#ceff00"/><rect x="1124" y="408" fill="#d2ff00"/><rect x="1136" y="408" fill="#d6ff00"/><rect x="1148" y="408" fill="#d9ff00"/><rect x="1160" y="408" fill="#ddff00"/><rect x="1172" y="408" fill="#e0ff00"/><rect x="1184" y="408" fill="#e4ff00"/><rect x="1196" y="408" fill="#e7ff00"/><rect x="1208" y="408" fill="#eaff00"/><rect x="1220" y="408" fill="#edff00"/><rect x="1232" y="408" fill="#f1ff00"/><rect x="1244" y="408" fill="#f4ff00"/><rect x="1256" y="408" fill="#f7ff00"/><rect x="1268" y="408" fill="#faff00"/><rect x="1280" y="408" fill="#fcff00"/><rect x="1292" y="408" fill="#ffff00"/><rect x="1304" y="408" fill="#fffc00"/><rect x="1316" y="408" fill="#fff900"/><rect x="1328" y="408" fill="#fff700"/><rect x="1340" y="408" fill="#fff400"/><rect x="1352" y="408" fill="#fff200"/><rect x="1364" y="408" fill="#fff000"/><rect x="1376" y="408" fill="#ffed00"/><rect x="1388" y="408" fill="#ffeb00"/><rect x="1400" y="408" fill="#ffe900"/><rect x="1412" y="408" fill="#ffe700"/><rect x="1424" y="408" fill="#ffe500"/><rect x="1436" y="408" fill="#ffe300"/><rect x="1448" y="408" fill="#ffe100"/><rect x="476" y="420" fill="#00ffbd"/><rect x="488" y="420" fill="#00ffbd"/><rect x="500" y="420" fill="#00ffbc"/><rect x="512" y="420" fill="#00ffbb"/><rect x="524" y="420" fill="#00ffba"/><rect x="536" y="420" fill="#00ffb8"/><rect x="548" y="420" fill="#00ffb6"/><rect x="560" y="420" fill="#00ffb5"/><rect x="572" y="420" fill="#00ffb3"/><rect x="584" y="420" fill="#00ffb1"/><rect x="596" y="420" fill="#00ffaf"/><rect x="608" y="420" fill="#00ffad"/><rect x="620" y="420" fill="#00ffab"/><rect x="632" y="420" fill="#00ffa9"/><rect x="644" y="420" fill="#00ffa7"/><rect x="656" y="420" fill="#00ffa4"/><rect x="668" y="420" fill="#00ffa1"/><rect x="680" y="420" fill="#00ff9f"/><rect x="692" y="420" fill="#00ff9c"/><rect x="704" y="420" fill="#00ff98"/><rect x="716" y="420" fill="#00ff95"/><rect x="728" y="420" fill="#00ff91"/><rect x="740" y="420" fill="#00ff8d"/><rect x="752" y="420" fill="#00ff88"/><rect x="764" y="420" fill="#00ff83"/><rect x="776" y="420" fill="#00ff7d"/><rect x="788" y="420" fill="#00ff77"/><rect x="800" y="420" fill="#00ff6f"/><rect x="812" y="420" fill="#00ff66"/><rect x="824" y="420" fill="#00ff5c"/><rect x="836" y="420" fill="#00ff4f"/><rect x="848" y="420" fill="#00ff3c"/><rect x="860" y="420" fill="#00ff12"/><rect x="872" y="420" fill="#36ff00"/><rect x="884" y="420" fill="#4dff00"/><rect x="896" y="420" fill="#5cff00"/><rect x="908" y="420" fill="#69ff00"/><rect x="920" y="420" fill="#74ff00"/><rect x="932" y="420" fill="#7dff00"/><rect x="944" y="420" fill="#85ff00"/><rect x="956" y="420" fill="#8dff00"/><rect x="968" y="420" fill="#94ff00"/><rect x="980" y="420" fill="#9bff00"/><rect x="992" y="420" fill="#a1ff00"/><rect x="1004" y="420" fill="#a7ff00"/><rect x="1016" y="420" fill="#adff00"/><rect x="1028" y="420" fill="#b2ff00"/><rect x="1040" y="420" fill="#b7ff00"/><rect x="1052" y="420" fill="#bcff00"/><rect x="1064" y="420" fill="#c0ff00"/><rect x="1076" y="420" fill="#c5ff00"/><rect x="1088" y="420" fill="#c9ff00"/><rect x="1100" y="420" fill="#ceff00"/><rect x="1112" y="420" fill="#d2ff00"/><rect x="1124" y="420" fill="#d6ff00"/><rect x="1136" y="420" fill="#d9ff00"/><rect x="1148" y="420" fill="#ddff00"/><rect x="1160" y="420" fill="#e1ff00"/><rect x="1172" y="420" fill="#e4ff00"/><rect x="1184" y="420" fill="#e8ff00"/><rect x="1196" y="420" fill="#ebff00"/><rect x="1208" y="420" fill="#efff00"/><rect x="1220" y="420" fill="#f2ff00"/><rect x="1232" y="420" fill="#f5ff00"/><rect x="1244" y="420" fill="#f8ff00"/><rect x="1256" y="420" fill="#fbff00"/><rect x="1268" y="420" fill="#feff00"/><rect x="1280" y="420" fill="#fffd00"/><rect x="1292" y="420" fill="#fffa00"/><rect x="1304" y="420" fill="#fff700"/><rect x="1316" y="420" fill="#fff500"/><rect x="1328" y="420" fill="#fff200"/><rect x="1340" y="420" fill="#fff000"/><rect x="1352" y="420" fill="#ffed00"/><rect x="1364" y="420" fill="#ffeb00"/><rect x="1376" y="420" fill="#ffe900"/><rect x="1388" y="420" fill="#ffe700"/><rect x="1400" y="420" fill="#ffe500"/><rect x="1412" y="420" fill="#ffe300"/><rect x="1424" y="420" fill="#ffe100"/><rect x="1436" y="420" fill="#ffdf00"/><rect x="1448" y="420" fill="#ffdd00"/><rect x="476" y="432" fill="#00ffc0"/><rect x="488" y="432" fill="#00ffc0"/><rect x="500" y="432" fill="#00ffbf"/><rect x="512" y="432" fill="#00ffbd"/><rect x="524" y="432" fill="#00ffbc"/><rect x="536" y="432" fill="#00ffba"/><rect x="548" y="432" fill="#00ffb9"/><rect x="560" y="432" fill="#00ffb7"/><rect x="572" y="432" fill="#00ffb6"/><rect x="584" y="432" fill="#00ffb4"/><rect x="596" y="432" fill="#00ffb2"/><rect x="608" y="432" fill="#00ffb0"/><rect x="620" y="432" fill="#00ffae"/><rect x="632" y="432" fill="#00ffac"/><rect x="644" y="432" fill="#00ffa9"/><rect x="656" y="432" fill="#00ffa7"/><rect x="668" y="432" fill="#00ffa4"/><rect x="680" y="432" fill="#00ffa1"/><rect x="692" y="432" fill="#00ff9e"/><rect x="704" y="432" fill="#00ff9b"/><rect x="716" y="432" fill="#00ff97"/><rect x="728" y="432" fill="#00ff94"/><rect x="740" y="432" fill="#00ff8f"/><rect x="752" y="432" fill="#00ff8b"/><rect x="764" y="432" fill="#00ff86"/><rect x="776" y="432" fill="#00ff80"/><rect x="788" y="432" fill="#00ff7a"/><rect x="800" y="432" fill="#00ff72"/><rect x="812" y="432" fill="#00ff6a"/><rect x="824" y="432" fill="#00ff5f"/><rect x="836" y="432" fill="#00ff52"/><rect x="848" y="432" fill="#00ff40"/><rect x="860" y="432" fill="#00ff1d"/><rect x="872" y="432" fill="#34ff00"/><rect x="884" y="432" fill="#4cff00"/><rect x="896" y="432" fill="#5dff00"/><rect x="908" y="432" fill="#6aff00"/><rect x="920" y="432" fill="#75ff00"/><rect x="932" y="432" fill="#7fff00"/><rect x="944" y="432" fill="#87ff00"/><rect x="956" y="432" fill="#8fff00"/><rect x="968" y="432" fill="#97ff00"/><rect x="980" y="432" fill="#9dff00"/><rect x="992" y="432" fill="#a4ff00"/><rect x="1004" y="432" fill="#aaff00"/><rect x="1016" y="432" fill="#b0ff00"/><rect x="1028" y="432" fill="#b5ff00"/><rect x="1040" y="432" fill="#baff00"/><rect x="1052" y="432" fill="#bfff00"/><rect x="1064" y="432" fill="#c4ff00"/><rect x="1076" y="432" fill="#c9ff00"/><rect x="1088" y="432" fill="#cdff00"/><rect x="1100" y="432" fill="#d1ff00"/><rect x="1112" y="432" fill="#d6ff00"/><rect x="1124" y="432" fill="#daff00"/><rect x="1136" y="432" fill="#deff00"/><rect x="1148" y="432" fill="#e1ff00"/><rect x="1160" y="432" fill="#e5ff00"/><rect x="1172" y="432" fill="#e9ff00"/><rect x="1184" y="432" fill="#ecff00"/><rect x="1196" y="432" fill="#f0ff00"/><rect x="1208" y="432" fill="#f3ff00"/><rect x="1220" y="432" fill="#f7ff00"/><rect x="1232" y="432" fill="#faff00"/><rect x="1244" y="432" fill="#fdff00"/><rect x="1256" y="432" fill="#fffe00"/><rect x="1268" y="432" fill="#fffb00"/><rect x="1280" y="432" fill="#fff800"/><rect x="1292" y="432" fill="#fff500"/><rect x="1304" y="432" fill="#fff300"/><rect x="1316" y="432" fill="#fff000"/><rect x="1328" y="432" fill="#ffed00"/><rect x="1340" y="432" fill="#ffeb00"/><rect x="1352" y="432" fill="#ffe900"/><rect x="1364" y="432" fill="#ffe600"/><rect x="1376" y="432" fill="#ffe400"/><rect x="1388" y="432" fill="#ffe200"/><rect x="1400" y="432" fill="#ffe000"/><rect x="1412" y="432" fill="#ffde00"/><rect x="1424" y="432" fill="#ffdc00"/><rect x="1436" y="432" fill="#ffda00"/><rect x="1448" y="432" fill="#ffd900"/><rect x="476" y="444" fill="#00ffc2"/><rect x="488" y="444" fill="#00ffc2"/><rect x="500" y="444" fill="#00ffc1"/><rect x="512" y="444" fill="#00ffc0"/><rect x="524" y="444" fill="#00ffbe"/><rect x="536" y="444" fill="#00ffbd"/><rect x="548" y="444" fill="#00ffbb"/><rect x="560" y="444" fill="#00ffba"/><rect x="572" y="444" fill="#00ffb8"/><rect x="584" y="444" fill="#00ffb6"/><rect x="596" y="444" fill="#00ffb5"/><rect x="608" y="444" fill="#00ffb3"/><rect x="620" y="444" fill="#00ffb1"/><rect x="632" y="444" fill="#00ffae"/><rect x="644" y="444" fill="#00ffac"/><rect x="656" y="444" fill="#00ffaa"/><rect x="668" y="444" fill="#00ffa7"/><rect x="680" y="444" fill="#00ffa4"/><rect x="692" y="444" fill="#00ffa1"/><rect x="704" y="444" fill="#00ff9e"/><rect x="716" y="444" fill="#00ff9a"/><rect x="728" y="444" fill="#00ff97"/><rect x="740" y="444" fill="#00ff93"/><rect x="752" y="444" fill="#00ff8e"/><rect x="764" y="444" fill="#00ff89"/><rect x="776" y="444" fill="#00ff83"/><rect x="788" y="444" fill="#00ff7d"/><rect x="800" y="444" fill="#00ff76"/><rect x="812" y="444" fill="#00ff6d"/><rect x="824" y="444" fill="#00ff63"/><rect x="836" y="444" fill="#00ff56"/><rect x="848" y="444" fill="#00ff44"/><rect x="860" y="444" fill="#00ff25"/><rect x="872" y="444" fill="#31ff00"/><rect x="884" y="444" fill="#4bff00"/><rect x="896" y="444" fill="#5dff00"/><rect x="908" y="444" fill="#6bff00"/><rect x="920" y="444" fill="#76ff00"/><rect x="932" y="444" fill="#80ff00"/><rect x="944" y="444" fill="#89ff00"/><rect x="956" y="444" fill="#92ff00"/><rect x="968" y="444" fill="#99ff00"/><rect x="980" y="444" fill="#a0ff00"/><rect x="992" y="444" fill="#a7ff00"/><rect x="1004" y="444" fill="#adff00"/><rect x="1016" y="444" fill="#b3ff00"/><rect x="1028" y="444" fill="#b8ff00"/><rect x="1040" y="444" fill="#beff00"/><rect x="1052" y="444" fill="#c3ff00"/><rect x="1064" y="444" fill="#c8ff00"/><rect x="1076" y="444" fill="#cdff00"/><rect x="1088" y="444" fill="#d1ff00"/><rect x="1100" y="444" fill="#d6ff00"/><rect x="1112" y="444" fill="#daff00"/><rect x="1124" y="444" fill="#deff00"/><rect x="1136" y="444" fill="#e2ff00"/><rect x="1148" y="444" fill="#e6ff00"/><rect x="1160" y="444" fill="#eaff00"/><rect x="1172" y="444" fill="#eeff00"/><rect x="1184" y="444" fill="#f1ff00"/><rect x="1196" y="444" fill="#f5ff00"/><rect x="1208" y="444" fill="#f8ff00"/><rect x="1220" y="444" fill="#fcff00"/><rect x="1232" y="444" fill="#ffff00"/><rect x="1244" y="444" fill="#fffc00"/><rect x="1256" y="444" fill="#fff900"/><rect x="1268" y="444" fill="#fff600"/><rect x="1280" y="444" fill="#fff300"/><rect x="1292" y="444" fill="#fff000"/><rect x="1304" y="444" fill="#ffee00"/><rect x="1316" y="444" fill="#ffeb00"/><rect x="1328" y="444" fill="#ffe900"/><rect x="1340" y="444" fill="#ffe600"/><rect x="1352" y="444" fill="#ffe400"/><rect x="1364" y="444" fill="#ffe200"/><rect x="1376" y="444" fill="#ffe000"/><rect x="1388" y="444" fill="#ffde00"/><rect x="1400" y="444" fill="#ffdc00"/><rect x="1412" y="444" fill="#ffda00"/><rect x="1424" y="444" fill="#ffd800"/><rect x="1436" y="444" fill="#ffd600"/><rect x="1448" y="444" fill="#ffd400"/><rect x="476" y="456" fill="#00ffc4"/><rect x="488" y="456" fill="#00ffc4"/><rect x="500" y="456" fill="#00ffc3"/><rect x="512" y="456" fill="#00ffc2"/><rect x="524" y="456" fill="#00ffc1"/><rect x="536" y="456" fill="#00ffbf"/><rect x="548" y="456" fill="#00ffbe"/><rect x="560" y="456" fill="#00ffbc"/><rect x="572" y="456" fill="#00ffbb"/><rect x="584" y="456" fill="#00ffb9"/><rect x="596" y="456" fill="#00ffb7"/><rect x="608" y="456" fill="#00ffb5"/><rect x="620" y="456" fill="#00ffb3"/><rect x="632" y="456" fill="#00ffb1"/><rect x="644" y="456" fill="#00ffaf"/><rect x="656" y="456" fill="#00ffad"/><rect x="668" y="456" fill="#00ffaa"/><rect x="680" y="456" fill="#00ffa7"/><rect x="692" y="456" fill="#00ffa4"/><rect x="704" y="456" fill="#00ffa1"/><rect x="716" y="456" fill="#00ff9e"/><rect x="728" y="456" fill="#00ff9a"/><rect x="740" y="456" fill="#00ff96"/><rect x="752" y="456" fill="#00ff91"/><rect x="764" y="456" fill="#00ff8c"/><rect x="776" y="456" fill="#00ff87"/><rect x="788" y="456" fill="#00ff80"/><rect x="800" y="456" fill="#00ff79"/><rect x="812" y="456" fill="#00ff71"/><rect x="824" y="456" fill="#00ff67"/><rect x="836" y="456" fill="#00ff5a"/><rect x="848" y="456" fill="#00ff49"/><rect x="860" y="456" fill="#00ff2c"/><rect x="872" y="456" fill="#2dff00"/><rect x="884" y="456" fill="#4bff00"/><rect x="896" y="456" fill="#5dff00"/><rect x="908" y="456" fill="#6cff00"/><rect x="920" y="456" fill="#78ff00"/><rect x="932" y="456" fill="#82ff00"/><rect x="944" y="456" fill="#8cff00"/><rect x="956" y="456" fill="#94ff00"/><rect x="968" y="456" fill="#9cff00"/><rect x="980" y="456" fill="#a3ff00"/><rect x="992" y="456" fill="#aaff00"/><rect x="1004" y="456" fill="#b0ff00"/><rect x="1016" y="456" fill="#b6ff00"/><rect x="1028" y="456" fill="#bcff00"/><rect x="1040" y="456" fill="#c2ff00"/><rect x="1052" y="456" fill="#c7ff00"/><rect x="1064" y="456" fill="#ccff00"/><rect x="1076" y="456" fill="#d1ff00"/><rect x="1088" y="456" fill="#d6ff00"/><rect x="1100" y="456" fill="#daff00"/><rect x="1112" y="456" fill="#dfff00"/><rect x="1124" y="456" fill="#e3ff00"/><rect x="1136" y="456" fill="#e7ff00"/><rect x="1148" y="456" fill="#ebff00"/><rect x="1160" y="456" fill="#efff00"/><rect x="1172" y="456" fill="#f3ff00"/><rect x="1184" y="456" fill="#f6ff00"/><rect x="1196" y="456" fill="#faff00"/><rect x="1208" y="456" fill="#feff00"/><rect x="1220" y="456" fill="#fffd00"/><rect x="1232" y="456" fill="#fff900"/><rect x="1244" y="456" fill="#fff600"/><rect x="1256" y="456" fill="#fff300"/><rect x="1268" y="456" fill="#fff000"/><rect x="1280" y="456" fill="#ffee00"/><rect x="1292" y="456" fill="#ffeb00"/><rect x="1304" y="456" fill="#ffe800"/><rect x="1316" y="456" fill="#ffe600"/><rect x="1328" y="456" fill="#ffe300"/><rect x="1340" y="456" fill="#ffe100"/><rect x="1352" y="456" fill="#ffdf00"/><rect x="1364" y="456" fill="#ffdd00"/><rect x="1376" y="456" fill="#ffdb00"/><rect x="1388" y="456" fill="#ffd900"/><rect x="1400" y="456" fill="#ffd700"/><rect x="1412" y="456" fill="#ffd500"/><rect x="1424" y="456" fill="#ffd300"/><rect x="1436" y="456" fill="#ffd100"/><rect x="1448" y="456" fill="#ffcf00"/><rect x="476" y="468" fill="#00ffc7"/><rect x="488" y="468" fill="#00ffc7"/><rect x="500" y="468" fill="#00ffc6"/><rect x="512" y="468" fill="#00ffc5"/><rect x="524" y="468" fill="#00ffc3"/><rect x="536" y="468" fill="#00ffc2"/><rect x="548" y="468" fill="#00ffc1"/><rect x="560" y="468" fill="#00ffbf"/><rect x="572" y="468" fill="#00ffbd"/><rect x="584" y="468" fill="#00ffbc"/><rect x="596" y="468" fill="#00ffba"/><rect x="608" y="468" fill="#00ffb8"/><rect x="620" y="468" fill="#00ffb6"/><rect x="632" y="468" fill="#00ffb4"/><rect x="644" y="468" fill="#00ffb2"/><rect x="656" y="468" fill="#00ffb0"/><rect x="668" y="468" fill="#00ffad"/><rect x="680" y="468" fill="#00ffaa"/><rect x="692" y="468" fill="#00ffa7"/><rect x="704" y="468" fill="#00ffa4"/><rect x="716" y="468" fill="#00ffa1"/><rect x="728" y="468" fill="#00ff9d"/><rect x="740" y="468" fill="#00ff99"/><rect x="752" y="468" fill="#00ff95"/><rect x="764" y="468" fill="#00ff90"/><rect x="776" y="468" fill="#00ff8a"/><rect x="788" y="468" fill="#00ff84"/><rect x="800" y="468" fill="#00ff7d"/><rect x="812" y="468" fill="#00ff74"/><rect x="824" y="468" fill="#00ff6b"/><rect x="836" y="468" fill="#00ff5e"/><rect x="848" y="468" fill="#00ff4d"/><rect x="860" y="468" fill="#00ff33"/><rect x="872" y="468" fill="#28ff00"/><rect x="884" y="468" fill="#4aff00"/><rect x="896" y="468" fill="#5eff00"/><rect x="908" y="468" fill="#6dff00"/><rect x="920" y="468" fill="#7aff00"/><rect x="932" y="468" fill="#85ff00"/><rect x="944" y="468" fill="#8eff00"/><rect x="956" y="468" fill="#97ff00"/><rect x="968" y="468" fill="#9fff00"/><rect x="980" y="468" fill="#a7ff00"/><rect x="992" y="468" fill="#aeff00"/><rect x="1004" y="468" fill="#b4ff00"/><rect x="1016" y="468" fill="#baff00"/><rect x="1028" y="468" fill="#c0ff00"/><rect x="1040" y="468" fill="#c6ff00"/><rect x="1052" y="468" fill="#cbff00"/><rect x="1064" y="468" fill="#d1ff00"/><rect x="1076" y="468" fill="#d6ff00"/><rect x="1088" y="468" fill="#daff00"/><rect x="1100" y="468" fill="#dfff00"/><rect x="1112" y="468" fill="#e4ff00"/><rect x="1124" y="468" fill="#e8ff00"/><rect x="1136" y="468" fill="#ecff00"/><rect x="1148" y="468" fill="#f0ff00"/><rect x="1160" y="468" fill="#f4ff00"/><rect x="1172" y="468" fill="#f8ff00"/><rect x="1184" y="468" fill="#fcff00"/><rect x="1196" y="468" fill="#fffe00"/><rect x="1208" y="468" fill="#fffa00"/><rect x="1220" y="468" fill="#fff700"/><rect x="1232" y="468" fill="#fff400"/><rect x="1244" y="468" fill="#fff100"/><rect x="1256" y="468" fill="#ffee00"/><rect x="1268" y="468" fill="#ffeb00"/><rect x="1280" y="468" fill="#ffe800"/><rect x="1292" y="468" fill="#ffe500"/><rect x="1304" y="468" fill="#ffe300"/><rect x="1316" y="468" fill="#ffe000"/><rect x="1328" y="468" fill="#ffde00"/><rect x="1340" y="468" fill="#ffdc00"/><rect x="1352" y="468" fill="#ffda00"/><rect x="1364" y="468" fill="#ffd700"/><rect x="1376" y="468" fill="#ffd500"/><rect x="1388" y="468" fill="#ffd300"/><rect x="1400" y="468" fill="#ffd200"/><rect x="1412" y="468" fill="#ffd000"/><rect x="1424" y="468" fill="#ffce00"/><rect x="1436" y="468" fill="#ffcc00"/><rect x="1448" y="468" fill="#ffca00"/><rect x="476" y="480" fill="#00ffc9"/><rect x="488" y="480" fill="#00ffc9"/><rect x="500" y="480" fill="#00ffc9"/><rect x="512" y="480" fill="#00ffc7"/><rect x="524" y="480" fill="#00ffc6"/><rect x="536" y="480" fill="#00ffc5"/><rect x="548" y="480" fill="#00ffc3"/><rect x="560" y="480" fill="#00ffc2"/><rect x="572" y="480" fill="#00ffc0"/><rect x="584" y="480" fill="#00ffbf"/><rect x="596" y="480" fill="#00ffbd"/><rect x="608" y="480" fill="#00ffbb"/><rect x="620" y="480" fill="#00ffb9"/><rect x="632" y="480" fill="#00ffb7"/><rect x="644" y="480" fill="#00ffb5"/><rect x="656" y="480" fill="#00ffb3"/><rect x="668" y="480" fill="#00ffb0"/><rect x="680" y="480" fill="#00ffae"/><rect x="692" y="480" fill="#00ffab"/><rect x="704" y="480" fill="#00ffa8"/><rect x="716" y="480" fill="#00ffa4"/><rect x="728" y="480" fill="#00ffa1"/><rect x="740" y="480" fill="#00ff9d"/><rect x="752" y="480" fill="#00ff98"/><rect x="764" y="480" fill="#00ff93"/><rect x="776" y="480" fill="#00ff8e"/><rect x="788" y="480" fill="#00ff88"/><rect x="800" y="480" fill="#00ff81"/><rect x="812" y="480" fill="#00ff78"/><rect x="824" y="480" fill="#00ff6f"/><rect x="836" y="480" fill="#00ff62"/><rect x="848" y="480" fill="#00ff52"/><rect x="860" y="480" fill="#00ff39"/><rect x="872" y="480" fill="#22ff00"/><rect x="884" y="480" fill="#49ff00"/><rect x="896" y="480" fill="#5eff00"/><rect x="908" y="480" fill="#6eff00"/><rect x="920" y="480" fill="#7cff00"/><rect x="932" y="480" fill="#87ff00"/><rect x="944" y="480" fill="#91ff00"/><rect x="956" y="480" fill="#9aff00"/><rect x="968" y="480" fill="#a2ff00"/><rect x="980" y="480" fill="#aaff00"/><rect x="992" y="480" fill="#b1ff00"/><rect x="1004" y="480" fill="#b8ff00"/><rect x="1016" y="480" fill="#bfff00"/><rect x="1028" y="480" fill="#c5ff00"/><rect x="1040" y="480" fill="#cbff00"/><rect x="1052" y="480" fill="#d0ff00"/><rect x="1064" y="480" fill="#d6ff00"/><rect x="1076" y="480" fill="#dbff00"/><rect x="1088" y="480" fill="#e0ff00"/><rect x="1100" y="480" fill="#e5ff00"/><rect x="1112" y="480" fill="#e9ff00"/><rect x="1124" y="480" fill="#eeff00"/><rect x="1136" y="480" fill="#f2ff00"/><rect x="1148" y="480" fill="#f6ff00"/><rect x="1160" y="480" fill="#fbff00"/><rect x="1172" y="480" fill="#ffff00"/><rect x="1184" y="480" fill="#fffc00"/><rect x="1196" y="480" fill="#fff800"/><rect x="1208" y="480" fill="#fff400"/><rect x="1220" y="480" fill="#fff100"/><rect x="1232" y="480" fill="#ffee00"/><rect x="1244" y="480" fill="#ffeb00"/><rect x="1256" y="480" fill="#ffe800"/><rect x="1268" y="480" fill="#ffe500"/><rect x="1280" y="480" fill="#ffe200"/><rect x="1292" y="480" fill="#ffe000"/><rect x="1304" y="480" fill="#ffdd00"/><rect x="1316" y="480" fill="#ffdb00"/><rect x="1328" y="480" fill="#ffd800"/><rect x="1340" y="480" fill="#ffd600"/><rect x="1352" y="480" fill="#ffd400"/><rect x="1364" y="480" fill="#ffd200"/><rect x="1376" y="480" fill="#ffd000"/><rect x="1388" y="480" fill="#ffce00"/><rect x="1400" y="480" fill="#ffcc00"/><rect x="1412" y="480" fill="#ffca00"/><rect x="1424" y="480" fill="#ffc900"/><rect x="1436" y="480" fill="#ffc700"/><rect x="1448" y="480" fill="#ffc500"/><rect x="476" y="492" fill="#00ffcc"/><rect x="488" y="492" fill="#00ffcc"/><rect x="500" y="492" fill="#00ffcb"/><rect x="512" y="492" fill="#00ffca"/><rect x="524" y="492" fill="#00ffc9"/><rect x="536" y="492" fill="#00ffc8"/><rect x="548" y="492" fill="#00ffc6"/><rect x="560" y="492" fill="#00ffc5"/><rect x="572" y="492" fill="#00ffc3"/><rect x="584" y="492" fill="#00ffc2"/><rect x="596" y="492" fill="#00ffc0"/><rect x="608" y="492" fill="#00ffbe"/><rect x="620" y="492" fill="#00ffbc"/><rect x="632" y="492" fill="#00ffba"/><rect x="644" y="492" fill="#00ffb8"/><rect x="656" y="492" fill="#00ffb6"/><rect x="668" y="492" fill="#00ffb4"/><rect x="680" y="492" fill="#00ffb1"/><rect x="692" y="492" fill="#00ffae"/><rect x="704" y="492" fill="#00ffab"/><rect x="716" y="492" fill="#00ffa8"/><rect x="728" y="492" fill="#00ffa4"/><rect x="740" y="492" fill="#00ffa0"/><rect x="752" y="492" fill="#00ff9c"/><rect x="764" y="492" fill="#00ff97"/><rect x="776" y="492" fill="#00ff92"/><rect x="788" y="492" fill="#00ff8c"/><rect x="800" y="492" fill="#00ff85"/><rect x="812" y="492" fill="#00ff7d"/><rect x="824" y="492" fill="#00ff73"/><rect x="836" y="492" fill="#00ff67"/><rect x="848" y="492" fill="#00ff57"/><rect x="860" y="492" fill="#00ff3f"/><rect x="872" y="492" fill="#18ff00"/><rect x="884" y="492" fill="#48ff00"/><rect x="896" y="492" fill="#5fff00"/><rect x="908" y="492" fill="#70ff00"/><rect x="920" y="492" fill="#7eff00"/><rect x="932" y="492" fill="#8aff00"/><rect x="944" y="492" fill="#94ff00"/><rect x="956" y="492" fill="#9eff00"/><rect x="968" y="492" fill="#a6ff00"/><rect x="980" y="492" fill="#aeff00"/><rect x="992" y="492" fill="#b6ff00"/><rect x="1004" y="492" fill="#bdff00"/><rect x="1016" y="492" fill="#c3ff00"/><rect x="1028" y="492" fill="#caff00"/><rect x="1040" y="492" fill="#d0ff00"/><rect x="1052" y="492" fill="#d6ff00"/><rect x="1064" y="492" fill="#dbff00"/><rect x="1076" y="492" fill="#e0ff00"/><rect x="1088" y="492" fill="#e6ff00"/><rect x="1100" y="492" fill="#ebff00"/><rect x="1112" y="492" fill="#efff00"/><rect x="1124" y="492" fill="#f4ff00"/><rect x="1136" y="492" fill="#f9ff00"/><rect x="1148" y="492" fill="#fdff00"/><rect x="1160" y="492" fill="#fffd00"/><rect x="1172" y="492" fill="#fff900"/><rect x="1184" y="492" fill="#fff500"/><rect x="1196" y="492" fill="#fff100"/><rect x="1208" y="492" fill="#ffee00"/><rect x="1220" y="492" fill="#ffeb00"/><rect x="1232" y="492" fill="#ffe700"/><rect x="1244" y="492" fill="#ffe400"/><rect x="1256" y="492" fill="#ffe200"/><rect x="1268" y="492" fill="#ffdf00"/><rect x="1280" y="492" fill="#ffdc00"/><rect x="1292" y="492" fill="#ffda00"/><rect x="1304" y="492" fill="#ffd700"/><rect x="1316" y="492" fill="#ffd500"/><rect x="1328" y="492" fill="#ffd300"/><rect x="1340" y="492" fill="#ffd000"/><rect x="1352" y="492" fill="#ffce00"/><rect x="1364" y="492" fill="#ffcc00"/><rect x="1376" y="492" fill="#ffca00"/><rect x="1388" y="492" fill="#ffc800"/><rect x="1400" y="492" fill="#ffc700"/><rect x="1412" y="492" fill="#ffc500"/><rect x="1424" y="492" fill="#ffc300"/><rect x="1436" y="492" fill="#ffc100"/><rect x="1448" y="492" fill="#ffc000"/><rect x="476" y="504" fill="#00ffcf"/><rect x="488" y="504" fill="#00ffcf"/><rect x="500" y="504" fill="#00ffce"/><rect x="512" y="504" fill="#00ffcd"/><rect x="524" y="504" fill="#00ffcc"/><rect x="536" y="504" fill="#00ffcb"/><rect x="548" y="504" fill="#00ffc9"/><rect x="560" y="504" fill="#00ffc8"/><rect x="572" y="504" fill="#00ffc6"/><rect x="584" y="504" fill="#00ffc5"/><rect x="596" y="504" fill="#00ffc3"/><rect x="608" y="504" fill="#00ffc2"/><rect x="620" y="504" fill="#00ffc0"/><rect x="632" y="504" fill="#00ffbe"/><rect x="644" y="504" fill="#00ffbc"/><rect x="656" y="504" fill="#00ffba"/><rect x="668" y="504" fill="#00ffb7"/><rect x="680" y="504" fill="#00ffb5"/><rect x="692" y="504" fill="#00ffb2"/><rect x="704" y="504" fill="#00ffaf"/><rect x="716" y="504" fill="#00ffac"/><rect x="728" y="504" fill="#00ffa8"/><rect x="740" y="504" fill="#00ffa4"/><rect x="752" y="504" fill="#00ffa0"/><rect x="764" y="504" fill="#00ff9b"/><rect x="776" y="504" fill="#00ff96"/><rect x="788" y="504" fill="#00ff90"/><rect x="800" y="504" fill="#00ff89"/><rect x="812" y="504" fill="#00ff81"/><rect x="824" y="504" fill="#00ff78"/><rect x="836" y="504" fill="#00ff6c"/><rect x="848" y="504" fill="#00ff5c"/><rect x="860" y="504" fill="#00ff45"/><rect x="872" y="504" fill="#00ff00"/><rect x="884" y="504" fill="#47ff00"/><rect x="896" y="504" fill="#60ff00"/><rect x="908" y="504" fill="#72ff00"/><rect x="920" y="504" fill="#80ff00"/><rect x="932" y="504" fill="#8dff00"/><rect x="944" y="504" fill="#98ff00"/><rect x="956" y="504" fill="#a1ff00"/><rect x="968" y="504" fill="#aaff00"/><rect x="980" y="504" fill="#b3ff00"/><rect x="992" y="504" fill="#bbff00"/><rect x="1004" y="504" fill="#c2ff00"/><rect x="1016" y="504" fill="#c9ff00"/><rect x="1028" y="504" fill="#cfff00"/><rect x="1040" y="504" fill="#d6ff00"/><rect x="1052" y="504" fill="#dcff00"/><rect x="1064" y="504" fill="#e1ff00"/><rect x="1076" y="504" fill="#e7ff00"/><rect x="1088" y="504" fill="#ecff00"/><rect x="1100" y="504" fill="#f1ff00"/><rect x="1112" y="504" fill="#f6ff00"/><rect x="1124" y="504" fill="#fbff00"/><rect x="1136" y="504" fill="#fffe00"/><rect x="1148" y="504" fill="#fffa00"/><rect x="1160" y="504" fill="#fff600"/><rect x="1172" y="504" fill="#fff200"/><rect x="1184" y="504" fill="#ffee00"/><rect x="1196" y="504" fill="#ffea00"/><rect x="1208" y="504" fill="#ffe700"/><rect x="1220" y="504" fill="#ffe400"/><rect x="1232" y="504" fill="#ffe100"/><rect x="1244" y="504" fill="#ffde00"/><rect x="1256" y="504" fill="#ffdb00"/><rect x="1268" y="504" fill="#ffd800"/><rect x="1280" y="504" fill="#ffd600"/><rect x="1292" y="504" fill="#ffd300"/><rect x="1304" y="504" fill="#ffd100"/><rect x="1316" y="504" fill="#ffcf00"/><rect x="1328" y="504" fill="#ffcc00"/><rect x="1340" y="504" fill="#ffca00"/><rect x="1352" y="504" fill="#ffc800"/><rect x="1364" y="504" fill="#ffc600"/><rect x="1376" y="504" fill="#ffc400"/><rect x="1388" y="504" fill="#ffc300"/><rect x="1400" y="504" fill="#ffc100"/><rect x="1412" y="504" fill="#ffbf00"/><rect x="1424" y="504" fill="#ffbd00"/><rect x="1436" y="504" fill="#ffbc00"/><rect x="1448" y="504" fill="#ffba00"/><rect x="476" y="516" fill="#00ffd2"/><rect x="488" y="516" fill="#00ffd2"/><rect x="500" y="516" fill="#00ffd1"/><rect x="512" y="516" fill="#00ffd0"/><rect x="524" y="516" fill="#00ffcf"/><rect x="536" y="516" fill="#00ffce"/><rect x="548" y="516" fill="#00ffcc"/><rect x="560" y="516" fill="#00ffcb"/><rect x="572" y="516" fill="#00ffca"/><rect x="584" y="516" fill="#00ffc8"/><rect x="596" y="516" fill="#00ffc7"/><rect x="608" y="516" fill="#00ffc5"/><rect x="620" y="516" fill="#00ffc3"/><rect x="632" y="516" fill="#00ffc1"/><rect x="644" y="516" fill="#00ffbf"/><rect x="656" y="516" fill="#00ffbd"/><rect x="668" y="516" fill="#00ffbb"/><rect x="680" y="516" fill="#00ffb8"/><rect x="692" y="516" fill="#00ffb6"/><rect x="704" y="516" fill="#00ffb3"/><rect x="716" y="516" fill="#00ffb0"/><rect x="728" y="516" fill="#00ffac"/><rect x="740" y="516" fill="#00ffa9"/><rect x="752" y="516" fill="#00ffa4"/><rect x="764" y="516" fill="#00ffa0"/><rect x="776" y="516" fill="#00ff9b"/><rect x="788" y="516" fill="#00ff95"/><rect x="800" y="516" fill="#00ff8e"/><rect x="812" y="516" fill="#00ff86"/><rect x="824" y="516" fill="#00ff7c"/><rect x="836" y="516" fill="#00ff71"/><rect x="848" y="516" fill="#00ff62"/><rect x="860" y="516" fill="#00ff4b"/><rect x="872" y="516" fill="#00ff1a"/><rect x="884" y="516" fill="#45ff00"/><rect x="896" y="516" fill="#60ff00"/><rect x="908" y="516" fill="#74ff00"/><rect x="920" y="516" fill="#83ff00"/><rect x="932" y="516" fill="#90ff00"/><rect x="944" y="516" fill="#9cff00"/><rect x="956" y="516" fill="#a6ff00"/><rect x="968" y="516" fill="#afff00"/><rect x="980" y="516" fill="#b8ff00"/><rect x="992" y="516" fill="#c0ff00"/><rect x="1004" y="516" fill="#c8ff00"/><rect x="1016" y="516" fill="#cfff00"/><rect x="1028" y="516" fill="#d6ff00"/><rect x="1040" y="516" fill="#dcff00"/><rect x="1052" y="516" fill="#e2ff00"/><rect x="1064" y="516" fill="#e8ff00"/><rect x="1076" y="516" fill="#eeff00"/><rect x="1088" y="516" fill="#f3ff00"/><rect x="1100" y="516" fill="#f9ff00"/><rect x="1112" y="516" fill="#feff00"/><rect x="1124" y="516" fill="#fffb00"/><rect x="1136" y="516" fill="#fff700"/><rect x="1148" y="516" fill="#fff200"/><rect x="1160" y="516" fill="#ffee00"/><rect x="1172" y="516" fill="#ffea00"/><rect x="1184" y="516" fill="#ffe700"/><rect x="1196" y="516" fill="#ffe300"/><rect x="1208" y="516" fill="#ffe000"/><rect x="1220" y="516" fill="#ffdd00"/><rect x="1232" y="516" fill="#ffda00"/><rect x="1244" y="516" fill="#ffd700"/><rect x="1256" y="516" fill="#ffd400"/><rect x="1268" y="516" fill="#ffd200"/><rect x="1280" y="516" fill="#ffcf00"/><rect x="1292" y="516" fill="#ffcd00"/><rect x="1304" y="516" fill="#ffca00"/><rect x="1316" y="516" fill="#ffc800"/><rect x="1328" y="516" fill="#ffc600"/><rect x="1340" y="516" fill="#ffc400"/><rect x="1352" y="516" fill="#ffc200"/><rect x="1364" y="516" fill="#ffc000"/><rect x="1376" y="516" fill="#ffbe00"/><rect x="1388" y="516" fill="#ffbc00"/><rect x="1400" y="516" fill="#ffba00"/><rect x="1412" y="516" fill="#ffb900"/><rect x="1424" y="516" fill="#ffb700"/><rect x="1436" y="516" fill="#ffb600"/><rect x="1448" y="516" fill="#ffb400"/><rect x="476" y="528" fill="#00ffd5"/><rect x="488" y="528" fill="#00ffd5"/><rect x="500" y="528" fill="#00ffd4"/><rect x="512" y="528" fill="#00ffd3"/><rect x="524" y="528" fill="#00ffd2"/><rect x="536" y="528" fill="#00ffd1"/><rect x="548" y="528" fill="#00ffd0"/><rect x="560" y="528" fill="#00ffce"/><rect x="572" y="528" fill="#00ffcd"/><rect x="584" y="528" fill="#00ffcc"/><rect x="596" y="528" fill="#00ffca"/><rect x="608" y="528" fill="#00ffc9"/><rect x="620" y="528" fill="#00ffc7"/><rect x="632" y="528" fill="#00ffc5"/><rect x="644" y="528" fill="#00ffc3"/><rect x="656" y="528" fill="#00ffc1"/><rect x="668" y="528" fill="#00ffbf"/><rect x="680" y="528" fill="#00ffbd"/><rect x="692" y="528" fill="#00ffba"/><rect x="704" y="528" fill="#00ffb7"/><rect x="716" y="528" fill="#00ffb4"/><rect x="728" y="528" fill="#00ffb1"/><rect x="740" y="528" fill="#00ffad"/><rect x="752" y="528" fill="#00ffa9"/><rect x="764" y="528" fill="#00ffa4"/><rect x="776" y="528" fill="#00ff9f"/><rect x="788" y="528" fill="#00ff9a"/><rect x="800" y="528" fill="#00ff93"/><rect x="812" y="528" fill="#00ff8b"/><rect x="824" y="528" fill="#00ff82"/><rect x="836" y="528" fill="#00ff76"/><rect x="848" y="528" fill="#00ff67"/><rect x="860" y="528" fill="#00ff52"/><rect x="872" y="528" fill="#01ff28"/><rect x="884" y="528" fill="#45ff0e"/><rect x="896" y="528" fill="#61ff00"/><rect x="908" y="528" fill="#76ff00"/><rect x="920" y="528" fill="#86ff00"/><rect x="932" y="528" fill="#94ff00"/><rect x="944" y="528" fill="#a0ff00"/><rect x="956" y="528" fill="#abff00"/><rect x="968" y="528" fill="#b5ff00"/><rect x="980" y="528" fill="#beff00"/><rect x="992" y="528" fill="#c6ff00"/><rect x="1004" y="528" fill="#ceff00"/><rect x="1016" y="528" fill="#d6ff00"/><rect x="1028" y="528" fill="#ddff00"/><rect x="1040" y="528" fill="#e3ff00"/><rect x="1052" y="528" fill="#eaff00"/><rect x="1064" y="528" fill="#f0ff00"/><rect x="1076" y="528" fill="#f6ff00"/><rect x="1088" y="528" fill="#fcff00"/><rect x="1100" y="528" fill="#fffd00"/><rect x="1112" y="528" fill="#fff800"/><rect x="1124" y="528" fill="#fff300"/><rect x="1136" y="528" fill="#ffee00"/><rect x="1148" y="528" fill="#ffea00"/><rect x="1160" y="528" fill="#ffe600"/><rect x="1172" y="528" fill="#ffe200"/><rect x="1184" y="528" fill="#ffdf00"/><rect x="1196" y="528" fill="#ffdb00"/><rect x="1208" y="528" fill="#ffd800"/><rect x="1220" y="528" fill="#ffd500"/><rect x="1232" y="528" fill="#ffd200"/><rect x="1244" y="528" fill="#ffcf00"/><rect x="1256" y="528" fill="#ffcd00"/><rect x="1268" y="528" fill="#ffca00"/><rect x="1280" y="528" fill="#ffc800"/><rect x="1292" y="528" fill="#ffc500"/><rect x="1304" y="528" fill="#ffc300"/><rect x="1316" y="528" fill="#ffc100"/><rect x="1328" y="528" fill="#ffbf00"/><rect x="1340" y="528" fill="#ffbd00"/><rect x="1352" y="528" fill="#ffbb00"/><rect x="1364" y="528" fill="#ffb900"/><rect x="1376" y="528" fill="#ffb700"/><rect x="1388" y="528" fill="#ffb600"/><rect x="1400" y="528" fill="#ffb400"/><rect x="1412" y="528" fill="#ffb200"/><rect x="1424" y="528" fill="#ffb100"/><rect x="1436" y="528" fill="#ffaf00"/><rect x="1448" y="528" fill="#ffae00"/><rect x="476" y="540" fill="#00ffd8"/><rect x="488" y="540" fill="#00ffd8"/><rect x="500" y="540" fill="#00ffd7"/><rect x="512" y="540" fill="#00ffd6"/><rect x="524" y="540" fill="#00ffd5"/><rect x="536" y="540" fill="#00ffd4"/><rect x="548" y="540" fill="#00ffd3"/><rect x="560" y="540" fill="#00ffd2"/><rect x="572" y="540" fill="#00ffd1"/><rect x="584" y="540" fill="#00ffcf"/><rect x="596" y="540" fill="#00ffce"/><rect x="608" y="540" fill="#00ffcc"/><rect x="620" y="540" fill="#00ffcb"/><rect x="632" y="540" fill="#00ffc9"/><rect x="644" y="540" fill="#00ffc7"/><rect x="656" y="540" fill="#00ffc5"/><rect x="668" y="540" fill="#00ffc3"/><rect x="680" y="540" fill="#00ffc1"/><rect x="692" y="540" fill="#00ffbe"/><rect x="704" y="540" fill="#00ffbc"/><rect x="716" y="540" fill="#00ffb9"/><rect x="728" y="540" fill="#00ffb5"/><rect x="740" y="540" fill="#00ffb2"/><rect x="752" y="540" fill="#00ffae"/><rect x="764" y="540" fill="#00ffaa"/><rect x="776" y="540" fill="#00ffa5"/><rect x="788" y="540" fill="#00ff9f"/><rect x="800" y="540" fill="#00ff98"/><rect x="812" y="540" fill="#00ff91"/><rect x="824" y="540" fill="#00ff87"/><rect x="836" y="540" fill="#00ff7c"/><rect x="848" y="540" fill="#00ff6d"/><rect x="860" y="540" fill="#00ff59"/><rect x="872" y="540" fill="#3dff4d"/><rect x="884" y="540" fill="#5aff45"/><rect x="896" y="540" fill="#6eff3c"/><rect x="908" y="540" fill="#7eff30"/><rect x="920" y="540" fill="#8cff1d"/><rect x="932" y="540" fill="#99ff00"/><rect x="944" y="540" fill="#a5ff00"/><rect x="956" y="540" fill="#b1ff00"/><rect x="968" y="540" fill="#bbff00"/><rect x="980" y="540" fill="#c4ff00"/><rect x="992" y="540" fill="#cdff00"/><rect x="1004" y="540" fill="#d6ff00"/><rect x="1016" y="540" fill="#ddff00"/><rect x="1028" y="540" fill="#e5ff00"/><rect x="1040" y="540" fill="#ecff00"/><rect x="1052" y="540" fill="#f3ff00"/><rect x="1064" y="540" fill="#f9ff00"/><rect x="1076" y="540" fill="#ffff00"/><rect x="1088" y="540" fill="#fff900"/><rect x="1100" y="540" fill="#fff300"/><rect x="1112" y="540" fill="#ffee00"/><rect x="1124" y="540" fill="#ffea00"/><rect x="1136" y="540" fill="#ffe500"/><rect x="1148" y="540" fill="#ffe100"/><rect x="1160" y="540" fill="#ffdd00"/><rect x="1172" y="540" fill="#ffda00"/><rect x="1184" y="540" fill="#ffd600"/><rect x="1196" y="540" fill="#ffd300"/><rect x="1208" y="540" fill="#ffd000"/><rect x="1220" y="540" fill="#ffcd00"/><rect x="1232" y="540" fill="#ffca00"/><rect x="1244" y="540" fill="#ffc800"/><rect x="1256" y="540" fill="#ffc500"/><rect x="1268" y="540" fill="#ffc200"/><rect x="1280" y="540" fill="#ffc000"/><rect x="1292" y="540" fill="#ffbe00"/><rect x="1304" y="540" fill="#ffbc00"/><rect x="1316" y="540" fill="#ffba00"/><rect x="1328" y="540" fill="#ffb800"/><rect x="1340" y="540" fill="#ffb600"/><rect x="1352" y="540" fill="#ffb400"/><rect x="1364" y="540" fill="#ffb200"/><rect x="1376" y="540" fill="#ffb000"/><rect x="1388" y="540" fill="#ffaf00"/><rect x="1400" y="540" fill="#ffad00"/><rect x="1412" y="540" fill="#ffab00"/><rect x="1424" y="540" fill="#ffaa00"/><rect x="1436" y="540" fill="#ffa800"/><rect x="1448" y="540" fill="#ffa700"/><rect x="476" y="552" fill="#00ffdb"/><rect x="488" y="552" fill="#00ffdb"/><rect x="500" y="552" fill="#00ffdb"/><rect x="512" y="552" fill="#00ffda"/><rect x="524" y="552" fill="#00ffd9"/><rect x="536" y="552" fill="#00ffd8"/><rect x="548" y="552" fill="#00ffd7"/><rect x="560" y="552" fill="#00ffd6"/><rect x="572" y="552" fill="#00ffd4"/><rect x="584" y="552" fill="#00ffd3"/><rect x="596" y="552" fill="#00ffd2"/><rect x="608" y="552" fill="#00ffd0"/><rect x="620" y="552" fill="#00ffcf"/><rect x="632" y="552" fill="#00ffcd"/><rect x="644" y="552" fill="#00ffcb"/><rect x="656" y="552" fill="#00ffca"/><rect x="668" y="552" fill="#00ffc8"/><rect x="680" y="552" fill="#00ffc5"/><rect x="692" y="552" fill="#00ffc3"/><rect x="704" y="552" fill="#00ffc0"/><rect x="716" y="552" fill="#00ffbe"/><rect x="728" y="552" fill="#00ffbb"/><rect x="740" y="552" fill="#00ffb7"/><rect x="752" y="552" fill="#00ffb3"/><rect x="764" y="552" fill="#00ffaf"/><rect x="776" y="552" fill="#00ffaa"/><rect x="788" y="552" fill="#00ffa5"/><rect x="800" y="552" fill="#00ff9e"/><rect x="812" y="552" fill="#00ff97"/><rect x="824" y="552" fill="#00ff8e"/><rect x="836" y="552" fill="#00ff83"/><rect x="848" y="552" fill="#00ff74"/><rect x="860" y="552" fill="#34ff69"/><rect x="872" y="552" fill="#56ff64"/><rect x="884" y="552" fill="#6cff5f"/><rect x="896" y="552" fill="#7dff5a"/><rect x="908" y="552" fill="#8bff53"/><rect x="920" y="552" fill="#98ff4c"/><rect x="932" y="552" fill="#a4ff43"/><rect x="944" y="552" fill="#afff38"/><rect x="956" y="552" fill="#b9ff28"/><rect x="968" y="552" fill="#c2ff01"/><rect x="980" y="552" fill="#ccff00"/><rect x="992" y="552" fill="#d6ff00"/><rect x="1004" y="552" fill="#deff00"/><rect x="1016" y="552" fill="#e7ff00"/><rect x="1028" y="552" fill="#eeff00"/><rect x="1040" y="552" fill="#f6ff00"/><rect x="1052" y="552" fill="#fdff00"/><rect x="1064" y="552" fill="#fffa00"/><rect x="1076" y="552" fill="#fff400"/><rect x="1088" y="552" fill="#ffef00"/><rect x="1100" y="552" fill="#ffe900"/><rect x="1112" y="552" fill="#ffe500"/><rect x="1124" y="552" fill="#ffe000"/><rect x="1136" y="552" fill="#ffdc00"/><rect x="1148" y="552" fill="#ffd800"/><rect x="1160" y="552" fill="#ffd400"/><rect x="1172" y="552" fill="#ffd100"/><rect x="1184" y="552" fill="#ffcd00"/><rect x="1196" y="552" fill="#ffca00"/><rect x="1208" y="552" fill="#ffc700"/><rect x="1220" y="552" fill="#ffc400"/><rect x="1232" y="552" fill="#ffc200"/><rect x="1244" y="552" fill="#ffbf00"/><rect x="1256" y="552" fill="#ffbd00"/><rect x="1268" y="552" fill="#ffba00"/><rect x="1280" y="552" fill="#ffb800"/><rect x="1292" y="552" fill="#ffb600"/><rect x="1304" y="552" fill="#ffb400"/><rect x="1316" y="552" fill="#ffb200"/><rect x="1328" y="552" fill="#ffb000"/><rect x="1340" y="552" fill="#ffae00"/><rect x="1352" y="552" fill="#ffac00"/><rect x="1364" y="552" fill="#ffaa00"/><rect x="1376" y="552" fill="#ffa900"/><rect x="1388" y="552" fill="#ffa700"/><rect x="1400" y="552" fill="#ffa500"/><rect x="1412" y="552" fill="#ffa400"/><rect x="1424" y="552" fill="#ffa200"/><rect x="1436" y="552" fill="#ffa100"/><rect x="1448" y="552" fill="#ff9f00"/><rect x="476" y="564" fill="#00ffdf"/><rect x="488" y="564" fill="#00ffdf"/><rect x="500" y="564" fill="#00ffde"/><rect x="512" y="564" fill="#00ffdd"/><rect x="524" y="564" fill="#00ffdc"/><rect x="536" y="564" fill="#00ffdb"/><rect x="548" y="564" fill="#00ffdb"/><rect x="560" y="564" fill="#00ffd9"/><rect x="572" y="564" fill="#00ffd8"/><rect x="584" y="564" fill="#00ffd7"/><rect x="596" y="564" fill="#00ffd6"/><rect x="608" y="564" fill="#00ffd5"/><rect x="620" y="564" fill="#00ffd3"/><rect x="632" y="564" fill="#00ffd2"/><rect x="644" y="564" fill="#00ffd0"/><rect x="656" y="564" fill="#00ffce"/><rect x="668" y="564" fill="#00ffcc"/><rect x="680" y="564" fill="#00ffca"/><rect x="692" y="564" fill="#00ffc8"/><rect x="704" y="564" fill="#00ffc6"/><rect x="716" y="564" fill="#00ffc3"/><rect x="728" y="564" fill="#00ffc0"/><rect x="740" y="564" fill="#00ffbd"/><rect x="752" y="564" fill="#00ffb9"/><rect x="764" y="564" fill="#00ffb5"/><rect x="776" y="564" fill="#00ffb0"/><rect x="788" y="564" fill="#00ffab"/><rect x="800" y="564" fill="#00ffa5"/><rect x="812" y="564" fill="#00ff9d"/><rect x="824" y="564" fill="#00ff95"/><rect x="836" y="564" fill="#00ff8a"/><rect x="848" y="564" fill="#26ff7f"/><rect x="860" y="564" fill="#51ff7b"/><rect x="872" y="564" fill="#69ff78"/><rect x="884" y="564" fill="#7cff74"/><rect x="896" y="564" fill="#8bff70"/><rect x="908" y="564" fill="#99ff6b"/><rect x="920" y="564" fill="#a5ff66"/><rect x="932" y="564" fill="#b0ff61"/><rect x="944" y="564" fill="#bbff5a"/><rect x="956" y="564" fill="#c5ff53"/><rect x="968" y="564" fill="#ceff4b"/><rect x="980" y="564" fill="#d7ff40"/><rect x="992" y="564" fill="#e0ff33"/><rect x="1004" y="564" fill="#e9ff1b"/><rect x="1016" y="564" fill="#f1ff00"/><rect x="1028" y="564" fill="#faff00"/><rect x="1040" y="564" fill="#fffd00"/><rect x="1052" y="564" fill="#fff500"/><rect x="1064" y="564" fill="#ffef00"/><rect x="1076" y="564" fill="#ffe900"/><rect x="1088" y="564" fill="#ffe400"/><rect x="1100" y="564" fill="#ffdf00"/><rect x="1112" y="564" fill="#ffda00"/><rect x="1124" y="564" fill="#ffd600"/><rect x="1136" y="564" fill="#ffd100"/><rect x="1148" y="564" fill="#ffce00"/><rect x="1160" y="564" fill="#ffca00"/><rect x="1172" y="564" fill="#ffc700"/><rect x="1184" y="564" fill="#ffc400"/><rect x="1196" y="564" fill="#ffc000"/><rect x="1208" y="564" fill="#ffbe00"/><rect x="1220" y="564" fill="#ffbb00"/><rect x="1232" y="564" fill="#ffb800"/><rect x="1244" y="564" fill="#ffb600"/><rect x="1256" y="564" fill="#ffb300"/><rect x="1268" y="564" fill="#ffb100"/><rect x="1280" y="564" fill="#ffaf00"/><rect x="1292" y="564" fill="#ffad00"/><rect x="1304" y="564" fill="#ffab00"/><rect x="1316" y="564" fill="#ffa900"/><rect x="1328" y="564" fill="#ffa700"/><rect x="1340" y="564" fill="#ffa500"/><rect x="1352" y="564" fill="#ffa400"/><rect x="1364" y="564" fill="#ffa200"/><rect x="1376" y="564" fill="#ffa000"/><rect x="1388" y="564" fill="#ff9f00"/><rect x="1400" y="564" fill="#ff9d00"/><rect x="1412" y="564" fill="#ff9c00"/><rect x="1424" y="564" fill="#ff9a00"/><rect x="1436" y="564" fill="#ff9900"/><rect x="1448" y="564" fill="#ff9800"/><rect x="476" y="576" fill="#00ffe2"/><rect x="488" y="576" fill="#00ffe2"/><rect x="500" y="576" fill="#00ffe2"/><rect x="512" y="576" fill="#00ffe1"/><rect x="524" y="576" fill="#00ffe0"/><rect x="536" y="576" fill="#00ffdf"/><rect x="548" y="576" fill="#00ffdf"/><rect x="560" y="576" fill="#00ffde"/><rect x="572" y="576" fill="#00ffdd"/><rect x="584" y="576" fill="#00ffdb"/><rect x="596" y="576" fill="#00ffda"/><rect x="608" y="576" fill="#00ffd9"/><rect x="620" y="576" fill="#00ffd8"/><rect x="632" y="576" fill="#00ffd6"/><rect x="644" y="576" fill="#00ffd5"/><rect x="656" y="576" fill="#00ffd3"/><rect x="668" y="576" fill="#00ffd1"/><rect x="680" y="576" fill="#00ffd0"/><rect x="692" y="576" fill="#00ffcd"/><rect x="704" y="576" fill="#00ffcb"/><rect x="716" y="576" fill="#00ffc9"/><rect x="728" y="576" fill="#00ffc6"/><rect x="740" y="576" fill="#00ffc3"/><rect x="752" y="576" fill="#00ffbf"/><rect x="764" y="576" fill="#00ffbb"/><rect x="776" y="576" fill="#00ffb7"/><rect x="788" y="576" fill="#00ffb2"/><rect x="800" y="576" fill="#00ffac"/><rect x="812" y="576" fill="#00ffa5"/><rect x="824" y="576" fill="#00ff9c"/><rect x="836" y="576" fill="#00ff92"/><rect x="848" y="576" fill="#4bff8f"/><rect x="860" y="576" fill="#67ff8c"/><rect x="872" y="576" fill="#7aff8a"/><rect x="884" y="576" fill="#8bff86"/><rect x="896" y="576" fill="#99ff83"/><rect x="908" y="576" fill="#a6ff80"/><rect x="920" y="576" fill="#b2ff7c"/><rect x="932" y="576" fill="#bdff78"/><rect x="944" y="576" fill="#c7ff73"/><rect x="956" y="576" fill="#d1ff6e"/><rect x="968" y="576" fill="#dbff69"/><rect x="980" y="576" fill="#e4ff62"/><rect x="992" y="576" fill="#edff5b"/><rect x="1004" y="576" fill="#f6ff53"/><rect x="1016" y="576" fill="#ffff49"/><rect x="1028" y="576" fill="#fff73a"/><rect x="1040" y="576" fill="#fff026"/><rect x="1052" y="576" fill="#ffe900"/><rect x="1064" y="576" fill="#ffe200"/><rect x="1076" y="576" fill="#ffdd00"/><rect x="1088" y="576" fill="#ffd700"/><rect x="1100" y="576" fill="#ffd300"/><rect x="1112" y="576" fill="#ffce00"/><rect x="1124" y="576" fill="#ffca00"/><rect x="1136" y="576" fill="#ffc600"/><rect x="1148" y="576" fill="#ffc200"/><rect x="1160" y="576" fill="#ffbf00"/><rect x="1172" y="576" fill="#ffbc00"/><rect x="1184" y="576" fill="#ffb900"/><rect x="1196" y="576" fill="#ffb600"/><rect x="1208" y="576" fill="#ffb300"/><rect x="1220" y="576" fill="#ffb100"/><rect x="1232" y="576" fill="#ffae00"/><rect x="1244" y="576" fill="#ffac00"/><rect x="1256" y="576" fill="#ffa900"/><rect x="1268" y="576" fill="#ffa700"/><rect x="1280" y="576" fill="#ffa500"/><rect x="1292" y="576" fill="#ffa300"/><rect x="1304" y="576" fill="#ffa100"/><rect x="1316" y="576" fill="#ff9f00"/><rect x="1328" y="576" fill="#ff9e00"/><rect x="1340" y="576" fill="#ff9c00"/><rect x="1352" y="576" fill="#ff9a00"/><rect x="1364" y="576" fill="#ff9900"/><rect x="1376" y="576" fill="#ff9700"/><rect x="1388" y="576" fill="#ff9600"/><rect x="1400" y="576" fill="#ff9400"/><rect x="1412" y="576" fill="#ff9300"/><rect x="1424" y="576" fill="#ff9200"/><rect x="1436" y="576" fill="#ff9000"/><rect x="1448" y="576" fill="#ff8f00"/><rect x="476" y="588" fill="#00ffe6"/><rect x="488" y="588" fill="#00ffe6"/><rect x="500" y="588" fill="#00ffe6"/><rect x="512" y="588" fill="#00ffe5"/><rect x="524" y="588" fill="#00ffe4"/><rect x="536" y="588" fill="#00ffe4"/><rect x="548" y="588" fill="#00ffe3"/><rect x="560" y="588" fill="#00ffe2"/><rect x="572" y="588" fill="#00ffe1"/><rect x="584" y="588" fill="#00ffe0"/><rect x="596" y="588" fill="#00ffdf"/><rect x="608" y="588" fill="#00ffde"/><rect x="620" y="588" fill="#00ffdd"/><rect x="632" y="588" fill="#00ffdb"/><rect x="644" y="588" fill="#00ffda"/><rect x="656" y="588" fill="#00ffd9"/><rect x="668" y="588" fill="#00ffd7"/><rect x="680" y="588" fill="#00ffd5"/><rect x="692" y="588" fill="#00ffd3"/><rect x="704" y="588" fill="#00ffd1"/><rect x="716" y="588" fill="#00ffcf"/><rect x="728" y="588" fill="#00ffcc"/><rect x="740" y="588" fill="#00ffca"/><rect x="752" y="588" fill="#00ffc6"/><rect x="764" y="588" fill="#00ffc3"/><rect x="776" y="588" fill="#00ffbf"/><rect x="788" y="588" fill="#00ffba"/><rect x="800" y="588" fill="#00ffb4"/><rect x="812" y="588" fill="#00ffad"/><rect x="824" y="588" fill="#00ffa5"/><rect x="836" y="588" fill="#44ffa1"/><rect x="848" y="588" fill="#63ff9f"/><rect x="860" y="588" fill="#79ff9d"/><rect x="872" y="588" fill="#8bff9a"/><rect x="884" y="588" fill="#9aff98"/><rect x="896" y="588" fill="#a7ff95"/><rect x="908" y="588" fill="#b4ff92"/><rect x="920" y="588" fill="#bfff8f"/><rect x="932" y="588" fill="#caff8c"/><rect x="944" y="588" fill="#d5ff88"/><rect x="956" y="588" fill="#dfff85"/><rect x="968" y="588" fill="#e9ff81"/><rect x="980" y="588" fill="#f2ff7c"/><rect x="992" y="588" fill="#fbff77"/><rect x="1004" y="588" fill="#fffa6f"/><rect x="1016" y="588" fill="#fff266"/><rect x="1028" y="588" fill="#ffea5c"/><rect x="1040" y="588" fill="#ffe352"/><rect x="1052" y="588" fill="#ffdc47"/><rect x="1064" y="588" fill="#ffd63a"/><rect x="1076" y="588" fill="#ffd02a"/><rect x="1088" y="588" fill="#ffca0e"/><rect x="1100" y="588" fill="#ffc500"/><rect x="1112" y="588" fill="#ffc100"/><rect x="1124" y="588" fill="#ffbd00"/><rect x="1136" y="588" fill="#ffb900"/><rect x="1148" y="588" fill="#ffb600"/><rect x="1160" y="588" fill="#ffb300"/><rect x="1172" y="588" fill="#ffb000"/><rect x="1184" y="588" fill="#ffad00"/><rect x="1196" y="588" fill="#ffaa00"/><rect x="1208" y="588" fill="#ffa800"/><rect x="1220" y="588" fill="#ffa500"/><rect x="1232" y="588" fill="#ffa300"/><rect x="1244" y="588" fill="#ffa000"/><rect x="1256" y="588" fill="#ff9e00"/><rect x="1268" y="588" fill="#ff9c00"/><rect x="1280" y="588" fill="#ff9a00"/><rect x="1292" y="588" fill="#ff9800"/><rect x="1304" y="588" fill="#ff9700"/><rect x="1316" y="588" fill="#ff9500"/><rect x="1328" y="588" fill="#ff9300"/><rect x="1340" y="588" fill="#ff9200"/><rect x="1352" y="588" fill="#ff9000"/><rect x="1364" y="588" fill="#ff8f00"/><rect x="1376" y="588" fill="#ff8d00"/><rect x="1388" y="588" fill="#ff8c00"/><rect x="1400" y="588" fill="#ff8a00"/><rect x="1412" y="588" fill="#ff8900"/><rect x="1424" y="588" fill="#ff8800"/><rect x="1436" y="588" fill="#ff8700"/><rect x="1448" y="588" fill="#ff8500"/><rect x="476" y="600" fill="#00ffea"/><rect x="488" y="600" fill="#00ffea"/><rect x="500" y="600" fill="#00ffea"/><rect x="512" y="600" fill="#00ffe9"/><rect x="524" y="600" fill="#00ffe9"/><rect x="536" y="600" fill="#00ffe8"/><rect x="548" y="600" fill="#00ffe7"/><rect x="560" y="600" fill="#00ffe6"/><rect x="572" y="600" fill="#00ffe6"/><rect x="584" y="600" fill="#00ffe5"/><rect x="596" y="600" fill="#00ffe4"/><rect x="608" y="600" fill="#00ffe3"/><rect x="620" y="600" fill="#00ffe2"/><rect x="632" y="600" fill="#00ffe1"/><rect x="644" y="600" fill="#00ffe0"/><rect x="656" y="600" fill="#00ffde"/><rect x="668" y="600" fill="#00ffdd"/><rect x="680" y="600" fill="#00ffdb"/><rect x="692" y="600" fill="#00ffda"/><rect x="704" y="600" fill="#00ffd8"/><rect x="716" y="600" fill="#00ffd6"/><rect x="728" y="600" fill="#00ffd3"/><rect x="740" y="600" fill="#00ffd1"/><rect x="752" y="600" fill="#00ffce"/><rect x="764" y="600" fill="#00ffcb"/><rect x="776" y="600" fill="#00ffc7"/><rect x="788" y="600" fill="#00ffc2"/><rect x="800" y="600" fill="#00ffbd"/><rect x="812" y="600" fill="#00ffb7"/><rect x="824" y="600" fill="#3affb2"/><rect x="836" y="600" fill="#5fffb1"/><rect x="848" y="600" fill="#77ffaf"/><rect x="860" y="600" fill="#8affad"/><rect x="872" y="600" fill="#9affab"/><rect x="884" y="600" fill="#a9ffa9"/><rect x="896" y="600" fill="#b6ffa7"/><rect x="908" y="600" fill="#c2ffa5"/><rect x="920" y="600" fill="#ceffa2"/><rect x="932" y="600" fill="#d9ff9f"/><rect x="944" y="600" fill="#e3ff9d"/><rect x="956" y="600" fill="#edff9a"/><rect x="968" y="600" fill="#f7ff97"/><rect x="980" y="600" fill="#fffd92"/><rect x="992" y="600" fill="#fff489"/><rect x="1004" y="600" fill="#ffec80"/><rect x="1016" y="600" fill="#ffe478"/><rect x="1028" y="600" fill="#ffdd70"/><rect x="1040" y="600" fill="#ffd668"/><rect x="1052" y="600" fill="#ffcf5f"/><rect x="1064" y="600" fill="#ffc957"/><rect x="1076" y="600" fill="#ffc44e"/><rect x="1088" y="600" fill="#ffbe44"/><rect x="1100" y="600" fill="#ffb93a"/><rect x="1112" y="600" fill="#ffb42d"/><rect x="1124" y="600" fill="#ffaf1a"/><rect x="1136" y="600" fill="#ffab00"/><rect x="1148" y="600" fill="#ffa800"/><rect x="1160" y="600" fill="#ffa500"/><rect x="1172" y="600" fill="#ffa200"/><rect x="1184" y="600" fill="#ff9f00"/><rect x="1196" y="600" fill="#ff9d00"/><rect x="1208" y="600" fill="#ff9a00"/><rect x="1220" y="600" fill="#ff9800"/><rect x="1232" y="600" fill="#ff9600"/><rect x="1244" y="600" fill="#ff9400"/><rect x="1256" y="600" fill="#ff9200"/><rect x="1268" y="600" fill="#ff9000"/><rect x="1280" y="600" fill="#ff8e00"/><rect x="1292" y="600" fill="#ff8c00"/><rect x="1304" y="600" fill="#ff8b00"/><rect x="1316" y="600" fill="#ff8900"/><rect x="1328" y="600" fill="#ff8700"/><rect x="1340" y="600" fill="#ff8600"/><rect x="1352" y="600" fill="#ff8500"/><rect x="1364" y="600" fill="#ff8300"/><rect x="1376" y="600" fill="#ff8200"/><rect x="1388" y="600" fill="#ff8000"/><rect x="1400" y="600" fill="#ff7f00"/><rect x="1412" y="600" fill="#ff7e00"/><rect x="1424" y="600" fill="#ff7d00"/><rect x="1436" y="600" fill="#ff7c00"/><rect x="1448" y="600" fill="#ff7b00"/><rect x="476" y="612" fill="#00ffee"/><rect x="488" y="612" fill="#00ffee"/><rect x="500" y="612" fill="#00ffee"/><rect x="512" y="612" fill="#00ffee"/><rect x="524" y="612" fill="#00ffed"/><rect x="536" y="612" fill="#00ffed"/><rect x="548" y="612" fill="#00ffec"/><rect x="560" y="612" fill="#00ffeb"/><rect x="572" y="612" fill="#00ffeb"/><rect x="584" y="612" fill="#00ffea"/><rect x="596" y="612" fill="#00ffe9"/><rect x="608" y="612" fill="#00ffe8"/><rect x="620" y="612" fill="#00ffe8"/><rect x="632" y="612" fill="#00ffe7"/><rect x="644" y="612" fill="#00ffe6"/><rect x="656" y="612" fill="#00ffe5"/><rect x="668" y="612" fill="#00ffe3"/><rect x="680" y="612" fill="#00ffe2"/><rect x="692" y="612" fill="#00ffe1"/><rect x="704" y="612" fill="#00ffdf"/><rect x="716" y="612" fill="#00ffdd"/><rect x="728" y="612" fill="#00ffdb"/><rect x="740" y="612" fill="#00ffd9"/><rect x="752" y="612" fill="#00ffd7"/><rect x="764" y="612" fill="#00ffd4"/><rect x="776" y="612" fill="#00ffd0"/><rect x="788" y="612" fill="#00ffcc"/><rect x="800" y="612" fill="#00ffc8"/><rect x="812" y="612" fill="#2bffc3"/><rect x="824" y="612" fill="#5bffc2"/><rect x="836" y="612" fill="#75ffc1"/><rect x="848" y="612" fill="#8affbf"/><rect x="860" y="612" fill="#9bffbe"/><rect x="872" y="612" fill="#aaffbc"/><rect x="884" y="612" fill="#b8ffba"/><rect x="896" y="612" fill="#c5ffb9"/><rect x="908" y="612" fill="#d1ffb7"/><rect x="920" y="612" fill="#ddffb5"/><rect x="932" y="612" fill="#e8ffb3"/><rect x="944" y="612" fill="#f3ffb1"/><rect x="956" y="612" fill="#fdffae"/><rect x="968" y="612" fill="#fff7a6"/><rect x="980" y="612" fill="#ffee9d"/><rect x="992" y="612" fill="#ffe595"/><rect x="1004" y="612" fill="#ffdd8d"/><rect x="1016" y="612" fill="#ffd686"/><rect x="1028" y="612" fill="#ffcf7e"/><rect x="1040" y="612" fill="#ffc977"/><rect x="1052" y="612" fill="#ffc370"/><rect x="1064" y="612" fill="#ffbd69"/><rect x="1076" y="612" fill="#ffb762"/><rect x="1088" y="612" fill="#ffb25b"/><rect x="1100" y="612" fill="#ffad53"/><rect x="1112" y="612" fill="#ffa84b"/><rect x="1124" y="612" fill="#ffa443"/><rect x="1136" y="612" fill="#ff9f3a"/><rect x="1148" y="612" fill="#ff9b2f"/><rect x="1160" y="612" fill="#ff9620"/><rect x="1172" y="612" fill="#ff9200"/><rect x="1184" y="612" fill="#ff9000"/><rect x="1196" y="612" fill="#ff8d00"/><rect x="1208" y="612" fill="#ff8b00"/><rect x="1220" y="612" fill="#ff8900"/><rect x="1232" y="612" fill="#ff8700"/><rect x="1244" y="612" fill="#ff8500"/><rect x="1256" y="612" fill="#ff8300"/><rect x="1268" y="612" fill="#ff8200"/><rect x="1280" y="612" fill="#ff8000"/><rect x="1292" y="612" fill="#ff7e00"/><rect x="1304" y="612" fill="#ff7d00"/><rect x="1316" y="612" fill="#ff7b00"/><rect x="1328" y="612" fill="#ff7a00"/><rect x="1340" y="612" fill="#ff7800"/><rect x="1352" y="612" fill="#ff7700"/><rect x="1364" y="612" fill="#ff7600"/><rect x="1376" y="612" fill="#ff7500"/><rect x="1388" y="612" fill="#ff7300"/><rect x="1400" y="612" fill="#ff7200"/><rect x="1412" y="612" fill="#ff7100"/><rect x="1424" y="612" fill="#ff7000"/><rect x="1436" y="612" fill="#ff6f00"/><rect x="1448" y="612" fill="#ff6e00"/><rect x="476" y="624" fill="#00fff3"/><rect x="488" y="624" fill="#00fff3"/><rect x="500" y="624" fill="#00fff3"/><rect x="512" y="624" fill="#00fff2"/><rect x="524" y="624" fill="#00fff2"/><rect x="536" y="624" fill="#00fff1"/><rect x="548" y="624" fill="#00fff1"/><rect x="560" y="624" fill="#00fff1"/><rect x="572" y="624" fill="#00fff0"/><rect x="584" y="624" fill="#00fff0"/><rect x="596" y="624" fill="#00ffef"/><rect x="608" y="624" fill="#00ffee"/><rect x="620" y="624" fill="#00ffee"/><rect x="632" y="624" fill="#00ffed"/><rect x="644" y="624" fill="#00ffec"/><rect x="656" y="624" fill="#00ffeb"/><rect x="668" y="624" fill="#00ffea"/><rect x="680" y="624" fill="#00ffe9"/><rect x="692" y="624" fill="#00ffe8"/><rect x="704" y="624" fill="#00ffe7"/><rect x="716" y="624" fill="#00ffe6"/><rect x="728" y="624" fill="#00ffe4"/><rect x="740" y="624" fill="#00ffe2"/><rect x="752" y="624" fill="#00ffe0"/><rect x="764" y="624" fill="#00ffde"/><rect x="776" y="624" fill="#00ffdb"/><rect x="788" y="624" fill="#00ffd8"/><rect x="800" y="624" fill="#00ffd4"/><rect x="812" y="624" fill="#55ffd3"/><rect x="824" y="624" fill="#73ffd2"/><rect x="836" y="624" fill="#8affd1"/><rect x="848" y="624" fill="#9cffd0"/><rect x="860" y="624" fill="#acffcf"/><rect x="872" y="624" fill="#bbffce"/><rect x="884" y="624" fill="#c9ffcd"/><rect x="896" y="624" fill="#d6ffcb"/><rect x="908" y="624" fill="#e2ffca"/><rect x="920" y="624" fill="#eeffc9"/><rect x="932" y="624" fill="#f9ffc7"/><rect x="944" y="624" fill="#fffac1"/><rect x="956" y="624" fill="#fff0b8"/><rect x="968" y="624" fill="#ffe7af"/><rect x="980" y="624" fill="#ffdea7"/><rect x="992" y="624" fill="#ffd69f"/><rect x="1004" y="624" fill="#ffcf98"/><rect x="1016" y="624" fill="#ffc890"/><rect x="1028" y="624" fill="#ffc18a"/><rect x="1040" y="624" fill="#ffbb83"/><rect x="1052" y="624" fill="#ffb57d"/><rect x="1064" y="624" fill="#ffb076"/><rect x="1076" y="624" fill="#ffab70"/><rect x="1088" y="624" fill="#ffa56a"/><rect x="1100" y="624" fill="#ffa164"/><rect x="1112" y="624" fill="#ff9c5d"/><rect x="1124" y="624" fill="#ff9757"/><rect x="1136" y="624" fill="#ff9350"/><rect x="1148" y="624" fill="#ff8e49"/><rect x="1160" y="624" fill="#ff8a42"/><rect x="1172" y="624" fill="#ff863a"/><rect x="1184" y="624" fill="#ff8230"/><rect x="1196" y="624" fill="#ff7d24"/><rect x="1208" y="624" fill="#ff7911"/><rect x="1220" y="624" fill="#ff7700"/><rect x="1232" y="624" fill="#ff7500"/><rect x="1244" y="624" fill="#ff7300"/><rect x="1256" y="624" fill="#ff7200"/><rect x="1268" y="624" fill="#ff7000"/><rect x="1280" y="624" fill="#ff6f00"/><rect x="1292" y="624" fill="#ff6d00"/><rect x="1304" y="624" fill="#ff6c00"/><rect x="1316" y="624" fill="#ff6b00"/><rect x="1328" y="624" fill="#ff6900"/><rect x="1340" y="624" fill="#ff6800"/><rect x="1352" y="624" fill="#ff6700"/><rect x="1364" y="624" fill="#ff6600"/><rect x="1376" y="624" fill="#ff6500"/><rect x="1388" y="624" fill="#ff6400"/><rect x="1400" y="624" fill="#ff6300"/><rect x="1412" y="624" fill="#ff6200"/><rect x="1424" y="624" fill="#ff6100"/><rect x="1436" y="624" fill="#ff6000"/><rect x="1448" y="624" fill="#ff5f00"/><rect x="476" y="636" fill="#00fff8"/><rect x="488" y="636" fill="#00fff8"/><rect x="500" y="636" fill="#00fff7"/><rect x="512" y="636" fill="#00fff7"/><rect x="524" y="636" fill="#00fff7"/><rect x="536" y="636" fill="#00fff7"/><rect x="548" y="636" fill="#00fff6"/><rect x="560" y="636" fill="#00fff6"/><rect x="572" y="636" fill="#00fff6"/><rect x="584" y="636" fill="#00fff5"/><rect x="596" y="636" fill="#00fff5"/><rect x="608" y="636" fill="#00fff5"/><rect x="620" y="636" fill="#00fff4"/><rect x="632" y="636" fill="#00fff4"/><rect x="644" y="636" fill="#00fff3"/><rect x="656" y="636" fill="#00fff3"/><rect x="668" y="636" fill="#00fff2"/><rect x="680" y="636" fill="#00fff2"/><rect x="692" y="636" fill="#00fff1"/><rect x="704" y="636" fill="#00fff0"/><rect x="716" y="636" fill="#00ffef"/><rect x="728" y="636" fill="#00ffee"/><rect x="740" y="636" fill="#00ffed"/><rect x="752" y="636" fill="#00ffec"/><rect x="764" y="636" fill="#00ffea"/><rect x="776" y="636" fill="#00ffe8"/><rect x="788" y="636" fill="#00ffe6"/><rect x="800" y="636" fill="#4dffe5"/><rect x="812" y="636" fill="#71ffe4"/><rect x="824" y="636" fill="#89ffe3"/><rect x="836" y="636" fill="#9dffe3"/><rect x="848" y="636" fill="#afffe2"/><rect x="860" y="636" fill="#beffe2"/><rect x="872" y="636" fill="#cdffe1"/><rect x="884" y="636" fill="#dbffe0"/><rect x="896" y="636" fill="#e8ffdf"/><rect x="908" y="636" fill="#f4ffde"/><rect x="920" y="636" fill="#fffedc"/><rect x="932" y="636" fill="#fff2d2"/><rect x="944" y="636" fill="#ffe8c8"/><rect x="956" y="636" fill="#ffdfbf"/><rect x="968" y="636" fill="#ffd6b6"/><rect x="980" y="636" fill="#ffceaf"/><rect x="992" y="636" fill="#ffc7a7"/><rect x="1004" y="636" fill="#ffc0a0"/><rect x="1016" y="636" fill="#ffba99"/><rect x="1028" y="636" fill="#ffb393"/><rect x="1040" y="636" fill="#ffad8d"/><rect x="1052" y="636" fill="#ffa887"/><rect x="1064" y="636" fill="#ffa281"/><rect x="1076" y="636" fill="#ff9d7b"/><rect x="1088" y="636" fill="#ff9876"/><rect x="1100" y="636" fill="#ff9370"/><rect x="1112" y="636" fill="#ff8e6b"/><rect x="1124" y="636" fill="#ff8a65"/><rect x="1136" y="636" fill="#ff8560"/><rect x="1148" y="636" fill="#ff815a"/><rect x="1160" y="636" fill="#ff7c54"/><rect x="1172" y="636" fill="#ff784e"/><rect x="1184" y="636" fill="#ff7448"/><rect x="1196" y="636" fill="#ff6f41"/><rect x="1208" y="636" fill="#ff6b39"/><rect x="1220" y="636" fill="#ff6731"/><rect x="1232" y="636" fill="#ff6227"/><rect x="1244" y="636" fill="#ff5e18"/><rect x="1256" y="636" fill="#ff5a00"/><rect x="1268" y="636" fill="#ff5900"/><rect x="1280" y="636" fill="#ff5800"/><rect x="1292" y="636" fill="#ff5700"/><rect x="1304" y="636" fill="#ff5600"/><rect x="1316" y="636" fill="#ff5400"/><rect x="1328" y="636" fill="#ff5300"/><rect x="1340" y="636" fill="#ff5200"/><rect x="1352" y="636" fill="#ff5100"/><rect x="1364" y="636" fill="#ff5000"/><rect x="1376" y="636" fill="#ff5000"/><rect x="1388" y="636" fill="#ff4f00"/><rect x="1400" y="636" fill="#ff4e00"/><rect x="1412" y="636" fill="#ff4d00"/><rect x="1424" y="636" fill="#ff4c00"/><rect x="1436" y="636" fill="#ff4b00"/><rect x="1448" y="636" fill="#ff4b00"/><rect x="476" y="648" fill="#00fffd"/><rect x="488" y="648" fill="#00fffd"/><rect x="500" y="648" fill="#00fffd"/><rect x="512" y="648" fill="#00fffc"/><rect x="524" y="648" fill="#00fffc"/><rect x="536" y="648" fill="#00fffc"/><rect x="548" y="648" fill="#00fffc"/><rect x="560" y="648" fill="#00fffc"/><rect x="572" y="648" fill="#00fffc"/><rect x="584" y="648" fill="#00fffc"/><rect x="596" y="648" fill="#00fffc"/><rect x="608" y="648" fill="#00fffc"/><rect x="620" y="648" fill="#00fffc"/><rect x="632" y="648" fill="#00fffb"/><rect x="644" y="648" fill="#00fffb"/><rect x="656" y="648" fill="#00fffb"/><rect x="668" y="648" fill="#00fffb"/><rect x="680" y="648" fill="#00fffb"/><rect x="692" y="648" fill="#00fffa"/><rect x="704" y="648" fill="#00fffa"/><rect x="716" y="648" fill="#00fffa"/><rect x="728" y="648" fill="#00fff9"/><rect x="740" y="648" fill="#00fff9"/><rect x="752" y="648" fill="#00fff9"/><rect x="764" y="648" fill="#00fff8"/><rect x="776" y="648" fill="#00fff7"/><rect x="788" y="648" fill="#43fff7"/><rect x="800" y="648" fill="#6dfff7"/><rect x="812" y="648" fill="#89fff6"/><rect x="824" y="648" fill="#9efff6"/><rect x="836" y="648" fill="#b1fff6"/><rect x="848" y="648" fill="#c2fff6"/><rect x="860" y="648" fill="#d2fff6"/><rect x="872" y="648" fill="#e0fff5"/><rect x="884" y="648" fill="#eefff5"/><rect x="896" y="648" fill="#fbfff5"/><rect x="908" y="648" fill="#fff6ec"/><rect x="920" y="648" fill="#ffeae1"/><rect x="932" y="648" fill="#ffe0d6"/><rect x="944" y="648" fill="#ffd7cd"/><rect x="956" y="648" fill="#ffcec5"/><rect x="968" y="648" fill="#ffc6bd"/><rect x="980" y="648" fill="#ffbeb5"/><rect x="992" y="648" fill="#ffb7ae"/><rect x="1004" y="648" fill="#ffb1a7"/><rect x="1016" y="648" fill="#ffaaa1"/><rect x="1028" y="648" fill="#ffa49b"/><rect x="1040" y="648" fill="#ff9f95"/><rect x="1052" y="648" fill="#ff9990"/><rect x="1064" y="648" fill="#ff948a"/><rect x="1076" y="648" fill="#ff8e85"/><rect x="1088" y="648" fill="#ff8980"/><rect x="1100" y="648" fill="#ff847a"/><rect x="1112" y="648" fill="#ff8075"/><rect x="1124" y="648" fill="#ff7b70"/><rect x="1136" y="648" fill="#ff766b"/><rect x="1148" y="648" fill="#ff7166"/><rect x="1160" y="648" fill="#ff6d61"/><rect x="1172" y="648" fill="#ff685c"/><rect x="1184" y="648" fill="#ff6357"/><rect x="1196" y="648" fill="#ff5f52"/><rect x="1208" y="648" fill="#ff5a4c"/><rect x="1220" y="648" fill="#ff5546"/><rect x="1232" y="648" fill="#ff5040"/><rect x="1244" y="648" fill="#ff4b39"/><rect x="1256" y="648" fill="#ff4532"/><rect x="1268" y="648" fill="#ff3f29"/><rect x="1280" y="648" fill="#ff391d"/><rect x="1292" y="648" fill="#ff3207"/><rect x="1304" y="648" fill="#ff3000"/><rect x="1316" y="648" fill="#ff2f00"/><rect x="1328" y="648" fill="#ff2e00"/><rect x="1340" y="648" fill="#ff2e00"/><rect x="1352" y="648" fill="#ff2d00"/><rect x="1364" y="648" fill="#ff2c00"/><rect x="1376" y="648" fill="#ff2c00"/><rect x="1388" y="648" fill="#ff2b00"/><rect x="1400" y="648" fill="#ff2b00"/><rect x="1412" y="648" fill="#ff2a00"/><rect x="1424" y="648" fill="#ff2a00"/><rect x="1436" y="648" fill="#ff2900"/><rect x="1448" y="648" fill="#ff2800"/><rect x="476" y="660" fill="#00fcff"/><rect x="488" y="660" fill="#00fcff"/><rect x="500" y="660" fill="#00fcff"/><rect x="512" y="660" fill="#00fcff"/><rect x="524" y="660" fill="#00fcff"/><rect x="536" y="660" fill="#00fcff"/><rect x="548" y="660" fill="#00fcff"/><rect x="560" y="660" fill="#00fbff"/><rect x="572" y="660" fill="#00fbff"/><rect x="584" y="660" fill="#00fbff"/><rect x="596" y="660" fill="#00fbff"/><rect x="608" y="660" fill="#00fbff"/><rect x="620" y="660" fill="#00fbff"/><rect x="632" y="660" fill="#00faff"/><rect x="644" y="660" fill="#00faff"/><rect x="656" y="660" fill="#00faff"/><rect x="668" y="660" fill="#00faff"/><rect x="680" y="660" fill="#00f9ff"/><rect x="692" y="660" fill="#00f9ff"/><rect x="704" y="660" fill="#00f9ff"/><rect x="716" y="660" fill="#00f8ff"/><rect x="728" y="660" fill="#00f8ff"/><rect x="740" y="660" fill="#00f7ff"/><rect x="752" y="660" fill="#00f6ff"/><rect x="764" y="660" fill="#00f5ff"/><rect x="776" y="660" fill="#2ff4ff"/><rect x="788" y="660" fill="#64f4ff"/><rect x="800" y="660" fill="#82f4ff"/><rect x="812" y="660" fill="#98f4ff"/><rect x="824" y="660" fill="#acf3ff"/><rect x="836" y="660" fill="#bdf3ff"/><rect x="848" y="660" fill="#cdf3ff"/><rect x="860" y="660" fill="#dbf2ff"/><rect x="872" y="660" fill="#e9f2ff"/><rect x="884" y="660" fill="#f7f2ff"/><rect x="896" y="660" fill="#ffedfb"/><rect x="908" y="660" fill="#ffe1ef"/><rect x="920" y="660" fill="#ffd7e4"/><rect x="932" y="660" fill="#ffcddb"/><rect x="944" y="660" fill="#ffc5d2"/><rect x="956" y="660" fill="#ffbdca"/><rect x="968" y="660" fill="#ffb5c2"/><rect x="980" y="660" fill="#ffaebb"/><rect x="992" y="660" fill="#ffa7b4"/><rect x="1004" y="660" fill="#ffa1ae"/><rect x="1016" y="660" fill="#ff9aa8"/><rect x="1028" y="660" fill="#ff94a2"/><rect x="1040" y="660" fill="#ff8f9c"/><rect x="1052" y="660" fill="#ff8997"/><rect x="1064" y="660" fill="#ff8492"/><rect x="1076" y="660" fill="#ff7e8d"/><rect x="1088" y="660" fill="#ff7988"/><rect x="1100" y="660" fill="#ff7483"/><rect x="1112" y="660" fill="#ff6f7e"/><rect x="1124" y="660" fill="#ff6a7a"/><rect x="1136" y="660" fill="#ff6575"/><rect x="1148" y="660" fill="#ff5f70"/><rect x="1160" y="660" fill="#ff5a6c"/><rect x="1172" y="660" fill="#ff5567"/><rect x="1184" y="660" fill="#ff4f63"/><rect x="1196" y="660" fill="#ff495e"/><rect x="1208" y="660" fill="#ff4359"/><rect x="1220" y="660" fill="#ff3c55"/><rect x="1232" y="660" fill="#ff3550"/><rect x="1244" y="660" fill="#ff2d4b"/><rect x="1256" y="660" fill="#ff2245"/><rect x="1268" y="660" fill="#ff113f"/><rect x="1280" y="660" fill="#ff003c"/><rect x="1292" y="660" fill="#ff003b"/><rect x="1304" y="660" fill="#ff003b"/><rect x="1316" y="660" fill="#ff003a"/><rect x="1328" y="660" fill="#ff0039"/><rect x="1340" y="660" fill="#ff0039"/><rect x="1352" y="660" fill="#ff0038"/><rect x="1364" y="660" fill="#ff0037"/><rect x="1376" y="660" fill="#ff0037"/><rect x="1388" y="660" fill="#ff0036"/><rect x="1400" y="660" fill="#ff0036"/><rect x="1412" y="660" fill="#ff0035"/><rect x="1424" y="660" fill="#ff0035"/><rect x="1436" y="660" fill="#ff0034"/><rect x="1448" y="660" fill="#ff0034"/><rect x="476" y="672" fill="#00f7ff"/><rect x="488" y="672" fill="#00f7ff"/><rect x="500" y="672" fill="#00f6ff"/><rect x="512" y="672" fill="#00f6ff"/><rect x="524" y="672" fill="#00f6ff"/><rect x="536" y="672" fill="#00f6ff"/><rect x="548" y="672" fill="#00f5ff"/><rect x="560" y="672" fill="#00f5ff"/><rect x="572" y="672" fill="#00f4ff"/><rect x="584" y="672" fill="#00f4ff"/><rect x="596" y="672" fill="#00f3ff"/><rect x="608" y="672" fill="#00f3ff"/><rect x="620" y="672" fill="#00f2ff"/><rect x="632" y="672" fill="#00f2ff"/><rect x="644" y="672" fill="#00f1ff"/><rect x="656" y="672" fill="#00f0ff"/><rect x="668" y="672" fill="#00f0ff"/><rect x="680" y="672" fill="#00efff"/><rect x="692" y="672" fill="#00eeff"/><rect x="704" y="672" fill="#00ecff"/><rect x="716" y="672" fill="#00ebff"/><rect x="728" y="672" fill="#00e9ff"/><rect x="740" y="672" fill="#00e8ff"/><rect x="752" y="672" fill="#00e5ff"/><rect x="764" y="672" fill="#00e3ff"/><rect x="776" y="672" fill="#57e2ff"/><rect x="788" y="672" fill="#77e1ff"/><rect x="800" y="672" fill="#8ee1ff"/><rect x="812" y="672" fill="#a1e0ff"/><rect x="824" y="672" fill="#b2dfff"/><rect x="836" y="672" fill="#c1deff"/><rect x="848" y="672" fill="#cfdeff"/><rect x="860" y="672" fill="#ddddff"/><rect x="872" y="672" fill="#e9dcff"/><rect x="884" y="672" fill="#f6dbff"/><rect x="896" y="672" fill="#ffd7fc"/><rect x="908" y="672" fill="#ffcdf1"/><rect x="920" y="672" fill="#ffc3e7"/><rect x="932" y="672" fill="#ffbade"/><rect x="944" y="672" fill="#ffb2d6"/><rect x="956" y="672" fill="#ffaace"/><rect x="968" y="672" fill="#ffa3c7"/><rect x="980" y="672" fill="#ff9cc0"/><rect x="992" y="672" fill="#ff95ba"/><rect x="1004" y="672" fill="#ff8fb3"/><rect x="1016" y="672" fill="#ff89ae"/><rect x="1028" y="672" fill="#ff83a8"/><rect x="1040" y="672" fill="#ff7da3"/><rect x="1052" y="672" fill="#ff779d"/><rect x="1064" y="672" fill="#ff7198"/><rect x="1076" y="672" fill="#ff6c94"/><rect x="1088" y="672" fill="#ff668f"/><rect x="1100" y="672" fill="#ff608a"/><rect x="1112" y="672" fill="#ff5a86"/><rect x="1124" y="672" fill="#ff5482"/><rect x="1136" y="672" fill="#ff4e7d"/><rect x="1148" y="672" fill="#ff4879"/><rect x="1160" y="672" fill="#ff4175"/><rect x="1172" y="672" fill="#ff3970"/><rect x="1184" y="672" fill="#ff306c"/><rect x="1196" y="672" fill="#ff2568"/><rect x="1208" y="672" fill="#ff1564"/><rect x="1220" y="672" fill="#ff0061"/><rect x="1232" y="672" fill="#ff0060"/><rect x="1244" y="672" fill="#ff005e"/><rect x="1256" y="672" fill="#ff005d"/><rect x="1268" y="672" fill="#ff005c"/><rect x="1280" y="672" fill="#ff005b"/><rect x="1292" y="672" fill="#ff005a"/><rect x="1304" y="672" fill="#ff0059"/><rect x="1316" y="672" fill="#ff0058"/><rect x="1328" y="672" fill="#ff0057"/><rect x="1340" y="672" fill="#ff0056"/><rect x="1352" y="672" fill="#ff0055"/><rect x="1364" y="672" fill="#ff0054"/><rect x="1376" y="672" fill="#ff0053"/><rect x="1388" y="672" fill="#ff0052"/><rect x="1400" y="672" fill="#ff0052"/><rect x="1412" y="672" fill="#ff0051"/><rect x="1424" y="672" fill="#ff0050"/><rect x="1436" y="672" fill="#ff004f"/><rect x="1448" y="672" fill="#ff004f"/><rect x="476" y="684" fill="#00f1ff"/><rect x="488" y="684" fill="#00f1ff"/><rect x="500" y="684" fill="#00f1ff"/><rect x="512" y="684" fill="#00f0ff"/><rect x="524" y="684" fill="#00f0ff"/><rect x="536" y="684" fill="#00efff"/><rect x="548" y="684" fill="#00efff"/><rect x="560" y="684" fill="#00eeff"/><rect x="572" y="684" fill="#00edff"/><rect x="584" y="684" fill="#00ecff"/><rect x="596" y="684" fill="#00ecff"/><rect x="608" y="684" fill="#00ebff"/><rect x="620" y="684" fill="#00eaff"/><rect x="632" y="684" fill="#00e9ff"/><rect x="644" y="684" fill="#00e8ff"/><rect x="656" y="684" fill="#00e6ff"/><rect x="668" y="684" fill="#00e5ff"/><rect x="680" y="684" fill="#00e3ff"/><rect x="692" y="684" fill="#00e1ff"/><rect x="704" y="684" fill="#00dfff"/><rect x="716" y="684" fill="#00ddff"/><rect x="728" y="684" fill="#00daff"/><rect x="740" y="684" fill="#00d7ff"/><rect x="752" y="684" fill="#00d3ff"/><rect x="764" y="684" fill="#4ad1ff"/><rect x="776" y="684" fill="#6cd0ff"/><rect x="788" y="684" fill="#84cfff"/><rect x="800" y="684" fill="#97ceff"/><rect x="812" y="684" fill="#a8cdff"/><rect x="824" y="684" fill="#b7cbff"/><rect x="836" y="684" fill="#c5caff"/><rect x="848" y="684" fill="#d2c9ff"/><rect x="860" y="684" fill="#dec7ff"/><rect x="872" y="684" fill="#eac6ff"/><rect x="884" y="684" fill="#f5c4ff"/><rect x="896" y="684" fill="#ffc1fe"/><rect x="908" y="684" fill="#ffb8f4"/><rect x="920" y="684" fill="#ffaeea"/><rect x="932" y="684" fill="#ffa6e1"/><rect x="944" y="684" fill="#ff9ed9"/><rect x="956" y="684" fill="#ff97d2"/><rect x="968" y="684" fill="#ff8fcb"/><rect x="980" y="684" fill="#ff88c4"/><rect x="992" y="684" fill="#ff82be"/><rect x="1004" y="684" fill="#ff7bb8"/><rect x="1016" y="684" fill="#ff75b3"/><rect x="1028" y="684" fill="#ff6ead"/><rect x="1040" y="684" fill="#ff68a8"/><rect x="1052" y="684" fill="#ff61a3"/><rect x="1064" y="684" fill="#ff5b9e"/><rect x="1076" y="684" fill="#ff549a"/><rect x="1088" y="684" fill="#ff4d95"/><rect x="1100" y="684" fill="#ff4591"/><rect x="1112" y="684" fill="#ff3d8d"/><rect x="1124" y="684" fill="#ff3488"/><rect x="1136" y="684" fill="#ff2984"/><rect x="1148" y="684" fill="#ff1980"/><rect x="1160" y="684" fill="#ff007d"/><rect x="1172" y="684" fill="#ff007b"/><rect x="1184" y="684" fill="#ff0079"/><rect x="1196" y="684" fill="#ff0077"/><rect x="1208" y="684" fill="#ff0076"/><rect x="1220" y="684" fill="#ff0074"/><rect x="1232" y="684" fill="#ff0073"/><rect x="1244" y="684" fill="#ff0071"/><rect x="1256" y="684" fill="#ff0070"/><rect x="1268" y="684" fill="#ff006f"/><rect x="1280" y="684" fill="#ff006d"/><rect x="1292" y="684" fill="#ff006c"/><rect x="1304" y="684" fill="#ff006b"/><rect x="1316" y="684" fill="#ff006a"/><rect x="1328" y="684" fill="#ff0069"/><rect x="1340" y="684" fill="#ff0068"/><rect x="1352" y="684" fill="#ff0067"/><rect x="1364" y="684" fill="#ff0066"/><rect x="1376" y="684" fill="#ff0065"/><rect x="1388" y="684" fill="#ff0064"/><rect x="1400" y="684" fill="#ff0063"/><rect x="1412" y="684" fill="#ff0062"/><rect x="1424" y="684" fill="#ff0061"/><rect x="1436" y="684" fill="#ff0060"/><rect x="1448" y="684" fill="#ff0060"/><rect x="476" y="696" fill="#00ebff"/><rect x="488" y="696" fill="#00ebff"/><rect x="500" y="696" fill="#00ebff"/><rect x="512" y="696" fill="#00eaff"/><rect x="524" y="696" fill="#00e9ff"/><rect x="536" y="696" fill="#00e8ff"/><rect x="548" y="696" fill="#00e8ff"/><rect x="560" y="696" fill="#00e7ff"/><rect x="572" y="696" fill="#00e6ff"/><rect x="584" y="696" fill="#00e5ff"/><rect x="596" y="696" fill="#00e4ff"/><rect x="608" y="696" fill="#00e2ff"/><rect x="620" y="696" fill="#00e1ff"/><rect x="632" y="696" fill="#00dfff"/><rect x="644" y="696" fill="#00deff"/><rect x="656" y="696" fill="#00dcff"/><rect x="668" y="696" fill="#00daff"/><rect x="680" y="696" fill="#00d7ff"/><rect x="692" y="696" fill="#00d4ff"/><rect x="704" y="696" fill="#00d1ff"/><rect x="716" y="696" fill="#00ceff"/><rect x="728" y="696" fill="#00c9ff"/><rect x="740" y="696" fill="#00c4ff"/><rect x="752" y="696" fill="#3bc1ff"/><rect x="764" y="696" fill="#62bfff"/><rect x="776" y="696" fill="#7bbeff"/><rect x="788" y="696" fill="#8ebcff"/><rect x="800" y="696" fill="#9fbbff"/><rect x="812" y="696" fill="#adb9ff"/><rect x="824" y="696" fill="#bbb7ff"/><rect x="836" y="696" fill="#c8b5ff"/><rect x="848" y="696" fill="#d3b3ff"/><rect x="860" y="696" fill="#dfb1ff"/><rect x="872" y="696" fill="#eaafff"/><rect x="884" y="696" fill="#f4acff"/><rect x="896" y="696" fill="#ffaaff"/><rect x="908" y="696" fill="#ffa1f5"/><rect x="920" y="696" fill="#ff98ed"/><rect x="932" y="696" fill="#ff90e4"/><rect x="944" y="696" fill="#ff88dd"/><rect x="956" y="696" fill="#ff80d5"/><rect x="968" y="696" fill="#ff79cf"/><rect x="980" y="696" fill="#ff71c8"/><rect x="992" y="696" fill="#ff6ac2"/><rect x="1004" y="696" fill="#ff63bd"/><rect x="1016" y="696" fill="#ff5bb7"/><rect x="1028" y="696" fill="#ff53b2"/><rect x="1040" y="696" fill="#ff4bad"/><rect x="1052" y="696" fill="#ff43a8"/><rect x="1064" y="696" fill="#ff39a4"/><rect x="1076" y="696" fill="#ff2d9f"/><rect x="1088" y="696" fill="#ff1d9b"/><rect x="1100" y="696" fill="#ff0097"/><rect x="1112" y="696" fill="#ff0094"/><rect x="1124" y="696" fill="#ff0092"/><rect x="1136" y="696" fill="#ff0090"/><rect x="1148" y="696" fill="#ff008e"/><rect x="1160" y="696" fill="#ff008b"/><rect x="1172" y="696" fill="#ff0089"/><rect x="1184" y="696" fill="#ff0088"/><rect x="1196" y="696" fill="#ff0086"/><rect x="1208" y="696" fill="#ff0084"/><rect x="1220" y="696" fill="#ff0082"/><rect x="1232" y="696" fill="#ff0081"/><rect x="1244" y="696" fill="#ff007f"/><rect x="1256" y="696" fill="#ff007e"/><rect x="1268" y="696" fill="#ff007c"/><rect x="1280" y="696" fill="#ff007b"/><rect x="1292" y="696" fill="#ff007a"/><rect x="1304" y="696" fill="#ff0079"/><rect x="1316" y="696" fill="#ff0077"/><rect x="1328" y="696" fill="#ff0076"/><rect x="1340" y="696" fill="#ff0075"/><rect x="1352" y="696" fill="#ff0074"/><rect x="1364" y="696" fill="#ff0073"/><rect x="1376" y="696" fill="#ff0072"/><rect x="1388" y="696" fill="#ff0071"/><rect x="1400" y="696" fill="#ff0070"/><rect x="1412" y="696" fill="#ff006f"/><rect x="1424" y="696" fill="#ff006e"/><rect x="1436" y="696" fill="#ff006d"/><rect x="1448" y="696" fill="#ff006c"/><rect x="476" y="708" fill="#00e5ff"/><rect x="488" y="708" fill="#00e5ff"/><rect x="500" y="708" fill="#00e5ff"/><rect x="512" y="708" fill="#00e4ff"/><rect x="524" y="708" fill="#00e3ff"/><rect x="536" y="708" fill="#00e2ff"/><rect x="548" y="708" fill="#00e0ff"/><rect x="560" y="708" fill="#00dfff"/><rect x="572" y="708" fill="#00deff"/><rect x="584" y="708" fill="#00ddff"/><rect x="596" y="708" fill="#00dbff"/><rect x="608" y="708" fill="#00d9ff"/><rect x="620" y="708" fill="#00d7ff"/><rect x="632" y="708" fill="#00d5ff"/><rect x="644" y="708" fill="#00d3ff"/><rect x="656" y="708" fill="#00d0ff"/><rect x="668" y="708" fill="#00cdff"/><rect x="680" y="708" fill="#00caff"/><rect x="692" y="708" fill="#00c6ff"/><rect x="704" y="708" fill="#00c2ff"/><rect x="716" y="708" fill="#00bdff"/><rect x="728" y="708" fill="#00b6ff"/><rect x="740" y="708" fill="#29b0ff"/><rect x="752" y="708" fill="#58afff"/><rect x="764" y="708" fill="#72adff"/><rect x="776" y="708" fill="#85abff"/><rect x="788" y="708" fill="#96a9ff"/><rect x="800" y="708" fill="#a5a7ff"/><rect x="812" y="708" fill="#b2a4ff"/><rect x="824" y="708" fill="#bea2ff"/><rect x="836" y="708" fill="#ca9fff"/><rect x="848" y="708" fill="#d59cff"/><rect x="860" y="708" fill="#e09aff"/><rect x="872" y="708" fill="#ea96ff"/><rect x="884" y="708" fill="#f493ff"/><rect x="896" y="708" fill="#fe8fff"/><rect x="908" y="708" fill="#ff87f7"/><rect x="920" y="708" fill="#ff7eef"/><rect x="932" y="708" fill="#ff75e7"/><rect x="944" y="708" fill="#ff6ddf"/><rect x="956" y="708" fill="#ff64d9"/><rect x="968" y="708" fill="#ff5cd2"/><rect x="980" y="708" fill="#ff53cc"/><rect x="992" y="708" fill="#ff49c6"/><rect x="1004" y="708" fill="#ff3fc1"/><rect x="1016" y="708" fill="#ff32bb"/><rect x="1028" y="708" fill="#ff22b6"/><rect x="1040" y="708" fill="#ff00b2"/><rect x="1052" y="708" fill="#ff00ae"/><rect x="1064" y="708" fill="#ff00ab"/><rect x="1076" y="708" fill="#ff00a8"/><rect x="1088" y="708" fill="#ff00a5"/><rect x="1100" y="708" fill="#ff00a2"/><rect x="1112" y="708" fill="#ff00a0"/><rect x="1124" y="708" fill="#ff009d"/><rect x="1136" y="708" fill="#ff009b"/><rect x="1148" y="708" fill="#ff0099"/><rect x="1160" y="708" fill="#ff0097"/><rect x="1172" y="708" fill="#ff0095"/><rect x="1184" y="708" fill="#ff0093"/><rect x="1196" y="708" fill="#ff0091"/><rect x="1208" y="708" fill="#ff008f"/><rect x="1220" y="708" fill="#ff008e"/><rect x="1232" y="708" fill="#ff008c"/><rect x="1244" y="708" fill="#ff008a"/><rect x="1256" y="708" fill="#ff0089"/><rect x="1268" y="708" fill="#ff0087"/><rect x="1280" y="708" fill="#ff0086"/><rect x="1292" y="708" fill="#ff0085"/><rect x="1304" y="708" fill="#ff0083"/><rect x="1316" y="708" fill="#ff0082"/><rect x="1328" y="708" fill="#ff0081"/><rect x="1340" y="708" fill="#ff0080"/><rect x="1352" y="708" fill="#ff007e"/><rect x="1364" y="708" fill="#ff007d"/><rect x="1376" y="708" fill="#ff007c"/><rect x="1388" y="708" fill="#ff007b"/><rect x="1400" y="708" fill="#ff007a"/><rect x="1412" y="708" fill="#ff0079"/><rect x="1424" y="708" fill="#ff0078"/><rect x="1436" y="708" fill="#ff0077"/><rect x="1448" y="708" fill="#ff0076"/><rect x="476" y="720" fill="#00dfff"/><rect x="488" y="720" fill="#00dfff"/><rect x="500" y="720" fill="#00deff"/><rect x="512" y="720" fill="#00ddff"/><rect x="524" y="720" fill="#00dcff"/><rect x="536" y="720" fill="#00daff"/><rect x="548" y="720" fill="#00d9ff"/><rect x="560" y="720" fill="#00d7ff"/><rect x="572" y="720" fill="#00d6ff"/><rect x="584" y="720" fill="#00d4ff"/><rect x="596" y="720" fill="#00d2ff"/><rect x="608" y="720" fill="#00d0ff"/><rect x="620" y="720" fill="#00cdff"/><rect x="632" y="720" fill="#00cbff"/><rect x="644" y="720" fill="#00c8ff"/><rect x="656" y="720" fill="#00c4ff"/><rect x="668" y="720" fill="#00c0ff"/><rect x="680" y="720" fill="#00bcff"/><rect x="692" y="720" fill="#00b7ff"/><rect x="704" y="720" fill="#00b1ff"/><rect x="716" y="720" fill="#00a9ff"/><rect x="728" y="720" fill="#00a0ff"/><rect x="740" y="720" fill="#4d9eff"/><rect x="752" y="720" fill="#699cff"/><rect x="764" y="720" fill="#7d99ff"/><rect x="776" y="720" fill="#8e97ff"/><rect x="788" y="720" fill="#9d94ff"/><rect x="800" y="720" fill="#aa91ff"/><rect x="812" y="720" fill="#b68eff"/><rect x="824" y="720" fill="#c28bff"/><rect x="836" y="720" fill="#cc87ff"/><rect x="848" y="720" fill="#d783ff"/><rect x="860" y="720" fill="#e17fff"/><rect x="872" y="720" fill="#ea7aff"/><rect x="884" y="720" fill="#f375ff"/><rect x="896" y="720" fill="#fc70ff"/><rect x="908" y="720" fill="#ff67f9"/><rect x="920" y="720" fill="#ff5df1"/><rect x="932" y="720" fill="#ff52e9"/><rect x="944" y="720" fill="#ff46e2"/><rect x="956" y="720" fill="#ff39db"/><rect x="968" y="720" fill="#ff28d5"/><rect x="980" y="720" fill="#ff01cf"/><rect x="992" y="720" fill="#ff00ca"/><rect x="1004" y="720" fill="#ff00c6"/><rect x="1016" y="720" fill="#ff00c2"/><rect x="1028" y="720" fill="#ff00be"/><rect x="1040" y="720" fill="#ff00ba"/><rect x="1052" y="720" fill="#ff00b7"/><rect x="1064" y="720" fill="#ff00b4"/><rect x="1076" y="720" fill="#ff00b1"/><rect x="1088" y="720" fill="#ff00ae"/><rect x="1100" y="720" fill="#ff00ab"/><rect x="1112" y="720" fill="#ff00a9"/><rect x="1124" y="720" fill="#ff00a6"/><rect x="1136" y="720" fill="#ff00a4"/><rect x="1148" y="720" fill="#ff00a2"/><rect x="1160" y="720" fill="#ff00a0"/><rect x="1172" y="720" fill="#ff009e"/><rect x="1184" y="720" fill="#ff009c"/><rect x="1196" y="720" fill="#ff009a"/><rect x="1208" y="720" fill="#ff0098"/><rect x="1220" y="720" fill="#ff0097"/><rect x="1232" y="720" fill="#ff0095"/><rect x="1244" y="720" fill="#ff0093"/><rect x="1256" y="720" fill="#ff0092"/><rect x="1268" y="720" fill="#ff0090"/><rect x="1280" y="720" fill="#ff008f"/><rect x="1292" y="720" fill="#ff008e"/><rect x="1304" y="720" fill="#ff008c"/><rect x="1316" y="720" fill="#ff008b"/><rect x="1328" y="720" fill="#ff008a"/><rect x="1340" y="720" fill="#ff0088"/><rect x="1352" y="720" fill="#ff0087"/><rect x="1364" y="720" fill="#ff0086"/><rect x="1376" y="720" fill="#ff0085"/><rect x="1388" y="720" fill="#ff0084"/><rect x="1400" y="720" fill="#ff0083"/><rect x="1412" y="720" fill="#ff0082"/><rect x="1424" y="720" fill="#ff0081"/><rect x="1436" y="720" fill="#ff0080"/><rect x="1448" y="720" fill="#ff007f"/><rect x="476" y="732" fill="#00d9ff"/><rect x="488" y="732" fill="#00d9ff"/><rect x="500" y="732" fill="#00d8ff"/><rect x="512" y="732" fill="#00d6ff"/><rect x="524" y="732" fill="#00d5ff"/><rect x="536" y="732" fill="#00d3ff"/><rect x="548" y="732" fill="#00d1ff"/><rect x="560" y="732" fill="#00cfff"/><rect x="572" y="732" fill="#00cdff"/><rect x="584" y="732" fill="#00cbff"/><rect x="596" y="732" fill="#00c8ff"/><rect x="608" y="732" fill="#00c6ff"/><rect x="620" y="732" fill="#00c3ff"/><rect x="632" y="732" fill="#00bfff"/><rect x="644" y="732" fill="#00bbff"/><rect x="656" y="732" fill="#00b7ff"/><rect x="668" y="732" fill="#00b2ff"/><rect x="680" y="732" fill="#00acff"/><rect x="692" y="732" fill="#00a5ff"/><rect x="704" y="732" fill="#009cff"/><rect x="716" y="732" fill="#0092ff"/><rect x="728" y="732" fill="#428dff"/><rect x="740" y="732" fill="#608aff"/><rect x="752" y="732" fill="#7587ff"/><rect x="764" y="732" fill="#8784ff"/><rect x="776" y="732" fill="#9580ff"/><rect x="788" y="732" fill="#a27cff"/><rect x="800" y="732" fill="#ae78ff"/><rect x="812" y="732" fill="#ba74ff"/><rect x="824" y="732" fill="#c46fff"/><rect x="836" y="732" fill="#ce6aff"/><rect x="848" y="732" fill="#d864ff"/><rect x="860" y="732" fill="#e15dff"/><rect x="872" y="732" fill="#ea55ff"/><rect x="884" y="732" fill="#f34cff"/><rect x="896" y="732" fill="#fc40ff"/><rect x="908" y="732" fill="#ff2ffa"/><rect x="920" y="732" fill="#ff0bf2"/><rect x="932" y="732" fill="#ff00eb"/><rect x="944" y="732" fill="#ff00e5"/><rect x="956" y="732" fill="#ff00df"/><rect x="968" y="732" fill="#ff00da"/><rect x="980" y="732" fill="#ff00d5"/><rect x="992" y="732" fill="#ff00d1"/><rect x="1004" y="732" fill="#ff00cc"/><rect x="1016" y="732" fill="#ff00c9"/><rect x="1028" y="732" fill="#ff00c5"/><rect x="1040" y="732" fill="#ff00c1"/><rect x="1052" y="732" fill="#ff00be"/><rect x="1064" y="732" fill="#ff00bb"/><rect x="1076" y="732" fill="#ff00b8"/><rect x="1088" y="732" fill="#ff00b5"/><rect x="1100" y="732" fill="#ff00b3"/><rect x="1112" y="732" fill="#ff00b0"/><rect x="1124" y="732" fill="#ff00ae"/><rect x="1136" y="732" fill="#ff00ac"/><rect x="1148" y="732" fill="#ff00aa"/><rect x="1160" y="732" fill="#ff00a7"/><rect x="1172" y="732" fill="#ff00a5"/><rect x="1184" y="732" fill="#ff00a4"/><rect x="1196" y="732" fill="#ff00a2"/><rect x="1208" y="732" fill="#ff00a0"/><rect x="1220" y="732" fill="#ff009e"/><rect x="1232" y="732" fill="#ff009d"/><rect x="1244" y="732" fill="#ff009b"/><rect x="1256" y="732" fill="#ff0099"/><rect x="1268" y="732" fill="#ff0098"/><rect x="1280" y="732" fill="#ff0096"/><rect x="1292" y="732" fill="#ff0095"/><rect x="1304" y="732" fill="#ff0094"/><rect x="1316" y="732" fill="#ff0092"/><rect x="1328" y="732" fill="#ff0091"/><rect x="1340" y="732" fill="#ff0090"/><rect x="1352" y="732" fill="#ff008f"/><rect x="1364" y="732" fill="#ff008e"/><rect x="1376" y="732" fill="#ff008c"/><rect x="1388" y="732" fill="#ff008b"/><rect x="1400" y="732" fill="#ff008a"/><rect x="1412" y="732" fill="#ff0089"/><rect x="1424" y="732" fill="#ff0088"/><rect x="1436" y="732" fill="#ff0087"/><rect x="1448" y="732" fill="#ff0086"/><rect x="476" y="744" fill="#00d2ff"/><rect x="488" y="744" fill="#00d2ff"/><rect x="500" y="744" fill="#00d1ff"/><rect x="512" y="744" fill="#00cfff"/><rect x="524" y="744" fill="#00cdff"/><rect x="536" y="744" fill="#00cbff"/><rect x="548" y="744" fill="#00c9ff"/><rect x="560" y="744" fill="#00c7ff"/><rect x="572" y="744" fill="#00c4ff"/><rect x="584" y="744" fill="#00c1ff"/><rect x="596" y="744" fill="#00beff"/><rect x="608" y="744" fill="#00bbff"/><rect x="620" y="744" fill="#00b7ff"/><rect x="632" y="744" fill="#00b3ff"/><rect x="644" y="744" fill="#00aeff"/><rect x="656" y="744" fill="#00a8ff"/><rect x="668" y="744" fill="#00a1ff"/><rect x="680" y="744" fill="#0099ff"/><rect x="692" y="744" fill="#0090ff"/><rect x="704" y="744" fill="#0084ff"/><rect x="716" y="744" fill="#357aff"/><rect x="728" y="744" fill="#5877ff"/><rect x="740" y="744" fill="#6e73ff"/><rect x="752" y="744" fill="#7f6fff"/><rect x="764" y="744" fill="#8e6aff"/><rect x="776" y="744" fill="#9b65ff"/><rect x="788" y="744" fill="#a75fff"/><rect x="800" y="744" fill="#b259ff"/><rect x="812" y="744" fill="#bd51ff"/><rect x="824" y="744" fill="#c749ff"/><rect x="836" y="744" fill="#d03eff"/><rect x="848" y="744" fill="#d92fff"/><rect x="860" y="744" fill="#e212ff"/><rect x="872" y="744" fill="#eb00ff"/><rect x="884" y="744" fill="#f300ff"/><rect x="896" y="744" fill="#fb00ff"/><rect x="908" y="744" fill="#ff00fc"/><rect x="920" y="744" fill="#ff00f5"/><rect x="932" y="744" fill="#ff00ee"/><rect x="944" y="744" fill="#ff00e9"/><rect x="956" y="744" fill="#ff00e3"/><rect x="968" y="744" fill="#ff00df"/><rect x="980" y="744" fill="#ff00da"/><rect x="992" y="744" fill="#ff00d6"/><rect x="1004" y="744" fill="#ff00d2"/><rect x="1016" y="744" fill="#ff00ce"/><rect x="1028" y="744" fill="#ff00cb"/><rect x="1040" y="744" fill="#ff00c7"/><rect x="1052" y="744" fill="#ff00c4"/><rect x="1064" y="744" fill="#ff00c1"/><rect x="1076" y="744" fill="#ff00be"/><rect x="1088" y="744" fill="#ff00bc"/><rect x="1100" y="744" fill="#ff00b9"/><rect x="1112" y="744" fill="#ff00b7"/><rect x="1124" y="744" fill="#ff00b4"/><rect x="1136" y="744" fill="#ff00b2"/><rect x="1148" y="744" fill="#ff00b0"/><rect x="1160" y="744" fill="#ff00ae"/><rect x="1172" y="744" fill="#ff00ac"/><rect x="1184" y="744" fill="#ff00aa"/><rect x="1196" y="744" fill="#ff00a8"/><rect x="1208" y="744" fill="#ff00a6"/><rect x="1220" y="744" fill="#ff00a5"/><rect x="1232" y="744" fill="#ff00a3"/><rect x="1244" y="744" fill="#ff00a1"/><rect x="1256" y="744" fill="#ff00a0"/><rect x="1268" y="744" fill="#ff009e"/><rect x="1280" y="744" fill="#ff009d"/><rect x="1292" y="744" fill="#ff009c"/><rect x="1304" y="744" fill="#ff009a"/><rect x="1316" y="744" fill="#ff0099"/><rect x="1328" y="744" fill="#ff0098"/><rect x="1340" y="744" fill="#ff0096"/><rect x="1352" y="744" fill="#ff0095"/><rect x="1364" y="744" fill="#ff0094"/><rect x="1376" y="744" fill="#ff0093"/><rect x="1388" y="744" fill="#ff0092"/><rect x="1400" y="744" fill="#ff0091"/><rect x="1412" y="744" fill="#ff0090"/><rect x="1424" y="744" fill="#ff008f"/><rect x="1436" y="744" fill="#ff008d"/><rect x="1448" y="744" fill="#ff008d"/><rect x="476" y="756" fill="#00cbff"/><rect x="488" y="756" fill="#00cbff"/><rect x="500" y="756" fill="#00c9ff"/><rect x="512" y="756" fill="#00c7ff"/><rect x="524" y="756" fill="#00c5ff"/><rect x="536" y="756" fill="#00c3ff"/><rect x="548" y="756" fill="#00c0ff"/><rect x="560" y="756" fill="#00bdff"/><rect x="572" y="756" fill="#00baff"/><rect x="584" y="756" fill="#00b7ff"/><rect x="596" y="756" fill="#00b3ff"/><rect x="608" y="756" fill="#00afff"/><rect x="620" y="756" fill="#00aaff"/><rect x="632" y="756" fill="#00a5ff"/><rect x="644" y="756" fill="#009eff"/><rect x="656" y="756" fill="#0097ff"/><rect x="668" y="756" fill="#008eff"/><rect x="680" y="756" fill="#0083ff"/><rect x="692" y="756" fill="#0075ff"/><rect x="704" y="756" fill="#2466ff"/><rect x="716" y="756" fill="#4f61ff"/><rect x="728" y="756" fill="#675bff"/><rect x="740" y="756" fill="#7855ff"/><rect x="752" y="756" fill="#884eff"/><rect x="764" y="756" fill="#9546ff"/><rect x="776" y="756" fill="#a13cff"/><rect x="788" y="756" fill="#ac2eff"/><rect x="800" y="756" fill="#b615ff"/><rect x="812" y="756" fill="#c000ff"/><rect x="824" y="756" fill="#ca00ff"/><rect x="836" y="756" fill="#d400ff"/><rect x="848" y="756" fill="#dc00ff"/><rect x="860" y="756" fill="#e400ff"/><rect x="872" y="756" fill="#ec00ff"/><rect x="884" y="756" fill="#f400ff"/><rect x="896" y="756" fill="#fb00ff"/><rect x="908" y="756" fill="#ff00fd"/><rect x="920" y="756" fill="#ff00f7"/><rect x="932" y="756" fill="#ff00f1"/><rect x="944" y="756" fill="#ff00ec"/><rect x="956" y="756" fill="#ff00e7"/><rect x="968" y="756" fill="#ff00e2"/><rect x="980" y="756" fill="#ff00de"/><rect x="992" y="756" fill="#ff00da"/><rect x="1004" y="756" fill="#ff00d6"/><rect x="1016" y="756" fill="#ff00d3"/><rect x="1028" y="756" fill="#ff00cf"/><rect x="1040" y="756" fill="#ff00cc"/><rect x="1052" y="756" fill="#ff00c9"/><rect x="1064" y="756" fill="#ff00c6"/><rect x="1076" y="756" fill="#ff00c3"/><rect x="1088" y="756" fill="#ff00c1"/><rect x="1100" y="756" fill="#ff00be"/><rect x="1112" y="756" fill="#ff00bc"/><rect x="1124" y="756" fill="#ff00ba"/><rect x="1136" y="756" fill="#ff00b8"/><rect x="1148" y="756" fill="#ff00b5"/><rect x="1160" y="756" fill="#ff00b3"/><rect x="1172" y="756" fill="#ff00b1"/><rect x="1184" y="756" fill="#ff00b0"/><rect x="1196" y="756" fill="#ff00ae"/><rect x="1208" y="756" fill="#ff00ac"/><rect x="1220" y="756" fill="#ff00aa"/><rect x="1232" y="756" fill="#ff00a9"/><rect x="1244" y="756" fill="#ff00a7"/><rect x="1256" y="756" fill="#ff00a6"/><rect x="1268" y="756" fill="#ff00a4"/><rect x="1280" y="756" fill="#ff00a3"/><rect x="1292" y="756" fill="#ff00a1"/><rect x="1304" y="756" fill="#ff00a0"/><rect x="1316" y="756" fill="#ff009f"/><rect x="1328" y="756" fill="#ff009d"/><rect x="1340" y="756" fill="#ff009c"/><rect x="1352" y="756" fill="#ff009b"/><rect x="1364" y="756" fill="#ff009a"/><rect x="1376" y="756" fill="#ff0099"/><rect x="1388" y="756" fill="#ff0097"/><rect x="1400" y="756" fill="#ff0096"/><rect x="1412" y="756" fill="#ff0095"/><rect x="1424" y="756" fill="#ff0094"/><rect x="1436" y="756" fill="#ff0093"/><rect x="1448" y="756" fill="#ff0092"/><rect x="476" y="768" fill="#00c4ff"/><rect x="488" y="768" fill="#00c4ff"/><rect x="500" y="768" fill="#00c2ff"/><rect x="512" y="768" fill="#00bfff"/><rect x="524" y="768" fill="#00bdff"/><rect x="536" y="768" fill="#00baff"/><rect x="548" y="768" fill="#00b7ff"/><rect x="560" y="768" fill="#00b4ff"/><rect x="572" y="768" fill="#00b0ff"/><rect x="584" y="768" fill="#00acff"/><rect x="596" y="768" fill="#00a7ff"/><rect x="608" y="768" fill="#00a2ff"/><rect x="620" y="768" fill="#009cff"/><rect x="632" y="768" fill="#0095ff"/><rect x="644" y="768" fill="#008cff"/><rect x="656" y="768" fill="#0082ff"/><rect x="668" y="768" fill="#0076ff"/><rect x="680" y="768" fill="#0065ff"/><rect x="692" y="768" fill="#004cff"/><rect x="704" y="768" fill="#4644ff"/><rect x="716" y="768" fill="#5f3aff"/><rect x="728" y="768" fill="#722dff"/><rect x="740" y="768" fill="#8118ff"/><rect x="752" y="768" fill="#9000ff"/><rect x="764" y="768" fill="#9d00ff"/><rect x="776" y="768" fill="#a900ff"/><rect x="788" y="768" fill="#b400ff"/><rect x="800" y="768" fill="#be00ff"/><rect x="812" y="768" fill="#c700ff"/><rect x="824" y="768" fill="#d000ff"/><rect x="836" y="768" fill="#d800ff"/><rect x="848" y="768" fill="#df00ff"/><rect x="860" y="768" fill="#e700ff"/><rect x="872" y="768" fill="#ed00ff"/><rect x="884" y="768" fill="#f400ff"/><rect x="896" y="768" fill="#fa00ff"/><rect x="908" y="768" fill="#ff00fe"/><rect x="920" y="768" fill="#ff00f8"/><rect x="932" y="768" fill="#ff00f3"/><rect x="944" y="768" fill="#ff00ee"/><rect x="956" y="768" fill="#ff00e9"/><rect x="968" y="768" fill="#ff00e5"/><rect x="980" y="768" fill="#ff00e1"/><rect x="992" y="768" fill="#ff00dd"/><rect x="1004" y="768" fill="#ff00da"/><rect x="1016" y="768" fill="#ff00d6"/><rect x="1028" y="768" fill="#ff00d3"/><rect x="1040" y="768" fill="#ff00d0"/><rect x="1052" y="768" fill="#ff00cd"/><rect x="1064" y="768" fill="#ff00cb"/><rect x="1076" y="768" fill="#ff00c8"/><rect x="1088" y="768" fill="#ff00c5"/><rect x="1100" y="768" fill="#ff00c3"/><rect x="1112" y="768" fill="#ff00c1"/><rect x="1124" y="768" fill="#ff00be"/><rect x="1136" y="768" fill="#ff00bc"/><rect x="1148" y="768" fill="#ff00ba"/><rect x="1160" y="768" fill="#ff00b8"/><rect x="1172" y="768" fill="#ff00b6"/><rect x="1184" y="768" fill="#ff00b5"/><rect x="1196" y="768" fill="#ff00b3"/><rect x="1208" y="768" fill="#ff00b1"/><rect x="1220" y="768" fill="#ff00af"/><rect x="1232" y="768" fill="#ff00ae"/><rect x="1244" y="768" fill="#ff00ac"/><rect x="1256" y="768" fill="#ff00ab"/><rect x="1268" y="768" fill="#ff00a9"/><rect x="1280" y="768" fill="#ff00a8"/><rect x="1292" y="768" fill="#ff00a6"/><rect x="1304" y="768" fill="#ff00a5"/><rect x="1316" y="768" fill="#ff00a4"/><rect x="1328" y="768" fill="#ff00a2"/><rect x="1340" y="768" fill="#ff00a1"/><rect x="1352" y="768" fill="#ff00a0"/><rect x="1364" y="768" fill="#ff009f"/><rect x="1376" y="768" fill="#ff009e"/><rect x="1388" y="768" fill="#ff009c"/><rect x="1400" y="768" fill="#ff009b"/><rect x="1412" y="768" fill="#ff009a"/><rect x="1424" y="768" fill="#ff0099"/><rect x="1436" y="768" fill="#ff0098"/><rect x="1448" y="768" fill="#ff0097"/><rect x="476" y="780" fill="#00bcff"/><rect x="488" y="780" fill="#00bcff"/><rect x="500" y="780" fill="#00baff"/><rect x="512" y="780" fill="#00b7ff"/><rect x="524" y="780" fill="#00b4ff"/><rect x="536" y="780" fill="#00b1ff"/><rect x="548" y="780" fill="#00adff"/><rect x="560" y="780" fill="#00a9ff"/><rect x="572" y="780" fill="#00a4ff"/><rect x="584" y="780" fill="#009fff"/><rect x="596" y="780" fill="#009aff"/><rect x="608" y="780" fill="#0093ff"/><rect x="620" y="780" fill="#008bff"/><rect x="632" y="780" fill="#0082ff"/><rect x="644" y="780" fill="#0077ff"/><rect x="656" y="780" fill="#0068ff"/><rect x="668" y="780" fill="#0053ff"/><rect x="680" y="780" fill="#002cff"/><rect x="692" y="780" fill="#4000ff"/><rect x="704" y="780" fill="#5f00ff"/><rect x="716" y="780" fill="#7400ff"/><rect x="728" y="780" fill="#8500ff"/><rect x="740" y="780" fill="#9200ff"/><rect x="752" y="780" fill="#9f00ff"/><rect x="764" y="780" fill="#a900ff"/><rect x="776" y="780" fill="#b300ff"/><rect x="788" y="780" fill="#bc00ff"/><rect x="800" y="780" fill="#c500ff"/><rect x="812" y="780" fill="#cd00ff"/><rect x="824" y="780" fill="#d400ff"/><rect x="836" y="780" fill="#db00ff"/><rect x="848" y="780" fill="#e200ff"/><rect x="860" y="780" fill="#e800ff"/><rect x="872" y="780" fill="#ee00ff"/><rect x="884" y="780" fill="#f400ff"/><rect x="896" y="780" fill="#fa00ff"/><rect x="908" y="780" fill="#ff00ff"/><rect x="920" y="780" fill="#ff00f9"/><rect x="932" y="780" fill="#ff00f4"/><rect x="944" y="780" fill="#ff00f0"/><rect x="956" y="780" fill="#ff00ec"/><rect x="968" y="780" fill="#ff00e8"/><rect x="980" y="780" fill="#ff00e4"/><rect x="992" y="780" fill="#ff00e0"/><rect x="1004" y="780" fill="#ff00dd"/><rect x="1016" y="780" fill="#ff00da"/><rect x="1028" y="780" fill="#ff00d7"/><rect x="1040" y="780" fill="#ff00d4"/><rect x="1052" y="780" fill="#ff00d1"/><rect x="1064" y="780" fill="#ff00ce"/><rect x="1076" y="780" fill="#ff00cc"/><rect x="1088" y="780" fill="#ff00c9"/><rect x="1100" y="780" fill="#ff00c7"/><rect x="1112" y="780" fill="#ff00c5"/><rect x="1124" y="780" fill="#ff00c3"/><rect x="1136" y="780" fill="#ff00c1"/><rect x="1148" y="780" fill="#ff00bf"/><rect x="1160" y="780" fill="#ff00bd"/><rect x="1172" y="780" fill="#ff00bb"/><rect x="1184" y="780" fill="#ff00b9"/><rect x="1196" y="780" fill="#ff00b7"/><rect x="1208" y="780" fill="#ff00b5"/><rect x="1220" y="780" fill="#ff00b4"/><rect x="1232" y="780" fill="#ff00b2"/><rect x="1244" y="780" fill="#ff00b1"/><rect x="1256" y="780" fill="#ff00af"/><rect x="1268" y="780" fill="#ff00ae"/><rect x="1280" y="780" fill="#ff00ac"/><rect x="1292" y="780" fill="#ff00ab"/><rect x="1304" y="780" fill="#ff00aa"/><rect x="1316" y="780" fill="#ff00a8"/><rect x="1328" y="780" fill="#ff00a7"/><rect x="1340" y="780" fill="#ff00a6"/><rect x="1352" y="780" fill="#ff00a5"/><rect x="1364" y="780" fill="#ff00a3"/><rect x="1376" y="780" fill="#ff00a2"/><rect x="1388" y="780" fill="#ff00a1"/><rect x="1400" y="780" fill="#ff00a0"/><rect x="1412" y="780" fill="#ff009f"/><rect x="1424" y="780" fill="#ff009e"/><rect x="1436" y="780" fill="#ff009d"/><rect x="1448" y="780" fill="#ff009c"/><rect x="476" y="792" fill="#00b4ff"/><rect x="488" y="792" fill="#00b4ff"/><rect x="500" y="792" fill="#00b1ff"/><rect x="512" y="792" fill="#00aeff"/><rect x="524" y="792" fill="#00aaff"/><rect x="536" y="792" fill="#00a6ff"/><rect x="548" y="792" fill="#00a2ff"/><rect x="560" y="792" fill="#009dff"/><rect x="572" y="792" fill="#0098ff"/><rect x="584" y="792" fill="#0091ff"/><rect x="596" y="792" fill="#008aff"/><rect x="608" y="792" fill="#0082ff"/><rect x="620" y="792" fill="#0077ff"/><rect x="632" y="792" fill="#006aff"/><rect x="644" y="792" fill="#0059ff"/><rect x="656" y="792" fill="#003dff"/><rect x="668" y="792" fill="#2a00ff"/><rect x="680" y="792" fill="#5200ff"/><rect x="692" y="792" fill="#6900ff"/><rect x="704" y="792" fill="#7a00ff"/><rect x="716" y="792" fill="#8800ff"/><rect x="728" y="792" fill="#9500ff"/><rect x="740" y="792" fill="#9f00ff"/><rect x="752" y="792" fill="#a900ff"/><rect x="764" y="792" fill="#b200ff"/><rect x="776" y="792" fill="#bb00ff"/><rect x="788" y="792" fill="#c300ff"/><rect x="800" y="792" fill="#ca00ff"/><rect x="812" y="792" fill="#d100ff"/><rect x="824" y="792" fill="#d700ff"/><rect x="836" y="792" fill="#de00ff"/><rect x="848" y="792" fill="#e400ff"/><rect x="860" y="792" fill="#ea00ff"/><rect x="872" y="792" fill="#ef00ff"/><rect x="884" y="792" fill="#f500ff"/><rect x="896" y="792" fill="#fa00ff"/><rect x="908" y="792" fill="#ff00ff"/><rect x="920" y="792" fill="#ff00fa"/><rect x="932" y="792" fill="#ff00f6"/><rect x="944" y="792" fill="#ff00f2"/><rect x="956" y="792" fill="#ff00ee"/><rect x="968" y="792" fill="#ff00ea"/><rect x="980" y="792" fill="#ff00e6"/><rect x="992" y="792" fill="#ff00e3"/><rect x="1004" y="792" fill="#ff00e0"/><rect x="1016" y="792" fill="#ff00dd"/><rect x="1028" y="792" fill="#ff00da"/><rect x="1040" y="792" fill="#ff00d7"/><rect x="1052" y="792" fill="#ff00d4"/><rect x="1064" y="792" fill="#ff00d2"/><rect x="1076" y="792" fill="#ff00cf"/><rect x="1088" y="792" fill="#ff00cd"/><rect x="1100" y="792" fill="#ff00cb"/><rect x="1112" y="792" fill="#ff00c8"/><rect x="1124" y="792" fill="#ff00c6"/><rect x="1136" y="792" fill="#ff00c4"/><rect x="1148" y="792" fill="#ff00c2"/><rect x="1160" y="792" fill="#ff00c0"/><rect x="1172" y="792" fill="#ff00bf"/><rect x="1184" y="792" fill="#ff00bd"/><rect x="1196" y="792" fill="#ff00bb"/><rect x="1208" y="792" fill="#ff00b9"/><rect x="1220" y="792" fill="#ff00b8"/><rect x="1232" y="792" fill="#ff00b6"/><rect x="1244" y="792" fill="#ff00b5"/><rect x="1256" y="792" fill="#ff00b3"/><rect x="1268" y="792" fill="#ff00b2"/><rect x="1280" y="792" fill="#ff00b0"/><rect x="1292" y="792" fill="#ff00af"/><rect x="1304" y="792" fill="#ff00ae"/><rect x="1316" y="792" fill="#ff00ac"/><rect x="1328" y="792" fill="#ff00ab"/><rect x="1340" y="792" fill="#ff00aa"/><rect x="1352" y="792" fill="#ff00a9"/><rect x="1364" y="792" fill="#ff00a7"/><rect x="1376" y="792" fill="#ff00a6"/><rect x="1388" y="792" fill="#ff00a5"/><rect x="1400" y="792" fill="#ff00a4"/><rect x="1412" y="792" fill="#ff00a3"/><rect x="1424" y="792" fill="#ff00a2"/><rect x="1436" y="792" fill="#ff00a1"/><rect x="1448" y="792" fill="#ff00a0"/><rect x="476" y="804" fill="#00b3ff"/><rect x="488" y="804" fill="#00b3ff"/><rect x="500" y="804" fill="#00b0ff"/><rect x="512" y="804" fill="#00adff"/><rect x="524" y="804" fill="#00a9ff"/><rect x="536" y="804" fill="#00a5ff"/><rect x="548" y="804" fill="#00a1ff"/><rect x="560" y="804" fill="#009cff"/><rect x="572" y="804" fill="#0096ff"/><rect x="584" y="804" fill="#008fff"/><rect x="596" y="804" fill="#0088ff"/><rect x="608" y="804" fill="#007fff"/><rect x="620" y="804" fill="#0074ff"/><rect x="632" y="804" fill="#0067ff"/><rect x="644" y="804" fill="#0054ff"/><rect x="656" y="804" fill="#0033ff"/><rect x="668" y="804" fill="#3600ff"/><rect x="680" y="804" fill="#5700ff"/><rect x="692" y="804" fill="#6d00ff"/><rect x="704" y="804" fill="#7d00ff"/><rect x="716" y="804" fill="#8b00ff"/><rect x="728" y="804" fill="#9600ff"/><rect x="740" y="804" fill="#a100ff"/><rect x="752" y="804" fill="#ab00ff"/><rect x="764" y="804" fill="#b300ff"/><rect x="776" y="804" fill="#bc00ff"/><rect x="788" y="804" fill="#c300ff"/><rect x="800" y="804" fill="#ca00ff"/><rect x="812" y="804" fill="#d100ff"/><rect x="824" y="804" fill="#d800ff"/><rect x="836" y="804" fill="#de00ff"/><rect x="848" y="804" fill="#e400ff"/><rect x="860" y="804" fill="#ea00ff"/><rect x="872" y="804" fill="#ef00ff"/><rect x="884" y="804" fill="#f500ff"/><rect x="896" y="804" fill="#fa00ff"/><rect x="908" y="804" fill="#ff00ff"/><rect x="920" y="804" fill="#ff00fb"/><rect x="932" y="804" fill="#ff00f6"/><rect x="944" y="804" fill="#ff00f2"/><rect x="956" y="804" fill="#ff00ee"/><rect x="968" y="804" fill="#ff00ea"/><rect x="980" y="804" fill="#ff00e7"/><rect x="992" y="804" fill="#ff00e3"/><rect x="1004" y="804" fill="#ff00e0"/><rect x="1016" y="804" fill="#ff00dd"/><rect x="1028" y="804" fill="#ff00da"/><rect x="1040" y="804" fill="#ff00d7"/><rect x="1052" y="804" fill="#ff00d5"/><rect x="1064" y="804" fill="#ff00d2"/><rect x="1076" y="804" fill="#ff00d0"/><rect x="1088" y="804" fill="#ff00cd"/><rect x="1100" y="804" fill="#ff00cb"/><rect x="1112" y="804" fill="#ff00c9"/><rect x="1124" y="804" fill="#ff00c7"/><rect x="1136" y="804" fill="#ff00c5"/><rect x="1148" y="804" fill="#ff00c3"/><rect x="1160" y="804" fill="#ff00c1"/><rect x="1172" y="804" fill="#ff00bf"/><rect x="1184" y="804" fill="#ff00bd"/><rect x="1196" y="804" fill="#ff00bc"/><rect x="1208" y="804" fill="#ff00ba"/><rect x="1220" y="804" fill="#ff00b8"/><rect x="1232" y="804" fill="#ff00b7"/><rect x="1244" y="804" fill="#ff00b5"/><rect x="1256" y="804" fill="#ff00b4"/><rect x="1268" y="804" fill="#ff00b2"/><rect x="1280" y="804" fill="#ff00b1"/><rect x="1292" y="804" fill="#ff00b0"/><rect x="1304" y="804" fill="#ff00ae"/><rect x="1316" y="804" fill="#ff00ad"/><rect x="1328" y="804" fill="#ff00ac"/><rect x="1340" y="804" fill="#ff00aa"/><rect x="1352" y="804" fill="#ff00a9"/><rect x="1364" y="804" fill="#ff00a8"/><rect x="1376" y="804" fill="#ff00a7"/><rect x="1388" y="804" fill="#ff00a6"/><rect x="1400" y="804" fill="#ff00a5"/><rect x="1412" y="804" fill="#ff00a4"/><rect x="1424" y="804" fill="#ff00a3"/><rect x="1436" y="804" fill="#ff00a2"/><rect x="1448" y="804" fill="#ff00a0"/></g><radialGradient id="sg" cx="0.4" cy="0.35" r="0.65"><stop offset="0" stop-color="#80ff80"/><stop offset="0.55" stop-color="#10c010"/><stop offset="1" stop-color="#064006"/></radialGradient><radialGradient id="sr" cx="0.4" cy="0.35" r="0.65"><stop offset="0" stop-color="#ff8070"/><stop offset="0.55" stop-color="#e01010"/><stop offset="1" stop-color="#600000"/></radialGradient><radialGradient id="sb" cx="0.4" cy="0.35" r="0.65"><stop offset="0" stop-color="#8080ff"/><stop offset="0.55" stop-color="#2030f0"/><stop offset="1" stop-color="#100860"/></radialGradient><radialGradient id="sc" cx="0.4" cy="0.35" r="0.65"><stop offset="0" stop-color="#c0ffff"/><stop offset="0.55" stop-color="#70d8d8"/><stop offset="1" stop-color="#1a5a5a"/></radialGradient><radialGradient id="sm" cx="0.4" cy="0.35" r="0.65"><stop offset="0" stop-color="#ff90ff"/><stop offset="0.55" stop-color="#e020e0"/><stop offset="1" stop-color="#600060"/></radialGradient><radialGradient id="sy" cx="0.4" cy="0.35" r="0.65"><stop offset="0" stop-color="#ffffe0"/><stop offset="0.55" stop-color="#e8e8a0"/><stop offset="1" stop-color="#5a5a20"/></radialGradient><radialGradient id="sw" cx="0.4" cy="0.35" r="0.65"><stop offset="0" stop-color="#ffff80"/><stop offset="0.55" stop-color="#f0e000"/><stop offset="1" stop-color="#806000"/></radialGradient><linearGradient id="lgb" gradientUnits="userSpaceOnUse" x1="835.8" y1="473.5" x2="688.6" y2="772.5"><stop offset="0" stop-color="#0a7a0a"/><stop offset="0.35" stop-color="#0a7a50"/><stop offset="0.78" stop-color="#0a7080"/><stop offset="0.795" stop-color="#0010a0"/><stop offset="1" stop-color="#1010b0"/></linearGradient><linearGradient id="lbr" gradientUnits="userSpaceOnUse" x1="688.6" y1="772.5" x2="1367.0" y2="649.1"><stop offset="0" stop-color="#6000c0"/><stop offset="0.4" stop-color="#a800a8"/><stop offset="0.55" stop-color="#980030"/><stop offset="1" stop-color="#a00000"/></linearGradient></defs><rect x="400" y="349" width="1152" height="476" fill="#02080b"/><path d="M400 753.5H1552M400 706.1H1552M400 658.6H1552M400 611.2H1552M400 563.7H1552M400 516.2H1552M400 468.8H1552M400 421.3H1552M400 373.9H1552M496.6 349V825M624.6 349V825M752.6 349V825M880.6 349V825M1008.6 349V825M1136.6 349V825M1264.6 349V825M1392.6 349V825" stroke="#4a4e50" stroke-width="1" fill="none"/><g clip-path="url(#loc)"><g filter="url(#bl)"><use href="#cells"/></g><path d="M714.0 791.2 L712.5 791.6 L710.3 792.2 L707.9 792.8 L705.7 793.2 L703.8 793.3 L702.1 793.2 L700.1 793.0 L697.8 792.7 L694.9 792.3 L691.6 791.8 L688.1 791.1 L684.7 790.1 L681.5 788.8 L678.4 787.2 L675.1 785.2 L671.6 782.9 L667.7 780.1 L663.5 777.0 L659.1 773.5 L654.6 769.8 L649.7 765.7 L644.4 761.1 L639.3 756.6 L635.0 752.8 L631.8 749.9 L629.3 747.6 L627.1 745.4 L624.5 743.0 L621.4 740.2 L618.1 737.3 L614.7 734.3 L611.4 731.2 L608.0 727.8 L604.6 724.3 L601.3 720.8 L598.3 717.5 L595.9 714.6 L593.8 711.9 L591.9 709.2 L589.8 706.4 L587.5 703.4 L585.0 700.2 L582.6 697.1 L580.0 693.9 L577.5 691.0 L575.0 688.2 L572.3 685.1 L569.2 681.2 L565.4 676.0 L561.0 669.8 L556.7 663.5 L552.9 658.0 L550.0 654.0 L547.7 650.8 L545.4 647.3 L542.5 642.5 L538.7 635.6 L534.3 627.4 L529.9 618.9 L526.1 611.3 L523.0 604.8 L520.3 598.9 L517.9 593.3 L515.7 587.5 L513.6 581.6 L511.6 575.7 L509.9 569.8 L508.3 563.7 L506.9 557.4 L505.7 550.9 L504.7 544.4 L503.8 538.4 L503.0 533.0 L502.3 528.1 L501.8 523.2 L501.4 517.6 L501.2 511.0 L501.2 503.8 L501.4 496.5 L501.6 490.0 L501.9 484.4 L502.2 479.3 L502.6 474.6 L503.2 470.0 L503.9 465.7 L504.6 461.7 L505.5 457.8 L506.7 453.8 L508.0 449.6 L509.5 445.4 L511.3 441.2 L513.8 437.1 L517.1 432.8 L521.0 428.5 L525.2 424.5 L529.3 421.1 L533.1 418.6 L537.0 416.8 L540.8 415.4 L544.8 413.9 L548.8 412.4 L552.7 411.1 L556.9 409.8 L561.4 408.6 L566.6 407.4 L572.3 406.3 L577.9 405.3 L582.9 404.4 L586.8 403.8 L590.1 403.3 L593.4 402.9 L597.1 402.6 L601.2 402.2 L605.4 401.9 L610.2 401.7 L616.2 401.8 L623.5 402.3 L631.8 403.0 L641.0 404.0 L650.8 405.3 L661.8 407.0 L673.9 409.1 L686.0 411.4 L696.9 413.5 L705.9 415.3 L713.8 416.9 L721.5 418.8 L730.3 421.2 L740.7 424.5 L752.0 428.4 L763.3 432.4 L773.8 436.0 L782.3 438.8 L789.6 441.1 L797.7 443.6 L808.5 447.0 L823.2 451.6 L840.6 457.0 L858.9 462.8 L876.4 468.6 L892.6 474.4 L908.5 480.4 L924.4 486.5 L940.5 492.4 L955.6 497.5 L969.8 502.2 L986.1 507.6 L1007.2 515.0 L1034.5 525.2 L1066.3 537.3 L1100.6 550.4 L1135.4 563.5 L1172.5 577.1 L1212.3 591.6 L1250.3 605.4 L1282.0 617.0 L1305.0 625.6 L1322.1 632.2 L1336.8 637.9 L1352.6 643.9 L1371.6 651.0 L1391.6 658.3 L1409.3 664.8 L1421.7 669.3Z" fill="#000" opacity="0.2"/><path d="M400 753.5H1552M400 706.1H1552M400 658.6H1552M400 611.2H1552M400 563.7H1552M400 516.2H1552M400 468.8H1552M400 421.3H1552M400 373.9H1552M496.6 349V825M624.6 349V825M752.6 349V825M880.6 349V825M1008.6 349V825M1136.6 349V825M1264.6 349V825M1392.6 349V825" stroke="#000" stroke-width="1" fill="none" opacity="0.5"/></g><path d="M835.8 473.5L688.6 772.5" stroke="url(#lgb)" stroke-width="3.5"/><path d="M688.6 772.5L1367.0 649.1" stroke="url(#lbr)" stroke-width="3.5"/><linearGradient id="lgr" gradientUnits="userSpaceOnUse" x1="835.8" y1="473.5" x2="1367.0" y2="649.1"><stop offset="0" stop-color="#0a780a"/><stop offset="0.45" stop-color="#707000"/><stop offset="1" stop-color="#900000"/></linearGradient><path d="M835.8 474.7L1367.0 650.3" stroke="url(#lgr)" stroke-width="3"/><path d="M835.8 473.5L869.5 485.2" stroke="#0a780a" stroke-width="3.5"/><g clip-path="url(#tri)"><g filter="url(#bl)"><use href="#cellsb"/></g></g><path d="M714.0 791.2 L712.5 791.6 L710.3 792.2 L707.9 792.8 L705.7 793.2 L703.8 793.3 L702.1 793.2 L700.1 793.0 L697.8 792.7 L694.9 792.3 L691.6 791.8 L688.1 791.1 L684.7 790.1 L681.5 788.8 L678.4 787.2 L675.1 785.2 L671.6 782.9 L667.7 780.1 L663.5 777.0 L659.1 773.5 L654.6 769.8 L649.7 765.7 L644.4 761.1 L639.3 756.6 L635.0 752.8 L631.8 749.9 L629.3 747.6 L627.1 745.4 L624.5 743.0 L621.4 740.2 L618.1 737.3 L614.7 734.3 L611.4 731.2 L608.0 727.8 L604.6 724.3 L601.3 720.8 L598.3 717.5 L595.9 714.6 L593.8 711.9 L591.9 709.2 L589.8 706.4 L587.5 703.4 L585.0 700.2 L582.6 697.1 L580.0 693.9 L577.5 691.0 L575.0 688.2 L572.3 685.1 L569.2 681.2 L565.4 676.0 L561.0 669.8 L556.7 663.5 L552.9 658.0 L550.0 654.0 L547.7 650.8 L545.4 647.3 L542.5 642.5 L538.7 635.6 L534.3 627.4 L529.9 618.9 L526.1 611.3 L523.0 604.8 L520.3 598.9 L517.9 593.3 L515.7 587.5 L513.6 581.6 L511.6 575.7 L509.9 569.8 L508.3 563.7 L506.9 557.4 L505.7 550.9 L504.7 544.4 L503.8 538.4 L503.0 533.0 L502.3 528.1 L501.8 523.2 L501.4 517.6 L501.2 511.0 L501.2 503.8 L501.4 496.5 L501.6 490.0 L501.9 484.4 L502.2 479.3 L502.6 474.6 L503.2 470.0 L503.9 465.7 L504.6 461.7 L505.5 457.8 L506.7 453.8 L508.0 449.6 L509.5 445.4 L511.3 441.2 L513.8 437.1 L517.1 432.8 L521.0 428.5 L525.2 424.5 L529.3 421.1 L533.1 418.6 L537.0 416.8 L540.8 415.4 L544.8 413.9 L548.8 412.4 L552.7 411.1 L556.9 409.8 L561.4 408.6 L566.6 407.4 L572.3 406.3 L577.9 405.3 L582.9 404.4 L586.8 403.8 L590.1 403.3 L593.4 402.9 L597.1 402.6 L601.2 402.2 L605.4 401.9 L610.2 401.7 L616.2 401.8 L623.5 402.3 L631.8 403.0 L641.0 404.0 L650.8 405.3 L661.8 407.0 L673.9 409.1 L686.0 411.4 L696.9 413.5 L705.9 415.3 L713.8 416.9 L721.5 418.8 L730.3 421.2 L740.7 424.5 L752.0 428.4 L763.3 432.4 L773.8 436.0 L782.3 438.8 L789.6 441.1 L797.7 443.6 L808.5 447.0 L823.2 451.6 L840.6 457.0 L858.9 462.8 L876.4 468.6 L892.6 474.4 L908.5 480.4 L924.4 486.5 L940.5 492.4 L955.6 497.5 L969.8 502.2 L986.1 507.6 L1007.2 515.0 L1034.5 525.2 L1066.3 537.3 L1100.6 550.4 L1135.4 563.5 L1172.5 577.1 L1212.3 591.6 L1250.3 605.4 L1282.0 617.0 L1305.0 625.6 L1322.1 632.2 L1336.8 637.9 L1352.6 643.9 L1371.6 651.0 L1391.6 658.3 L1409.3 664.8 L1421.7 669.3Z" fill="none" stroke="#e0a040" stroke-width="1"/><path d="M869.5 485.2L1336.9 639.7L688.8 772.6Z" fill="none" stroke="#ffffff" stroke-width="3.2" stroke-linejoin="miter"/><path d="M896.5 349V825M400 644.5H1552" stroke="#ffffff" stroke-width="1" stroke-dasharray="4 3" opacity="0.6"/><path d="M896.6 643.4L1336.9 639.7M896.6 643.4L688.8 772.6M896.6 643.4L773.4 644.9M896.6 643.4L1054.2 545.0M897 644L903.8 666.7L912 676L919.8 684.5L926.4 706.9L930.5 728.6M869.5 485.2L881.4 517L888 549L894.3 581.4L899 610L902 637" stroke="#000" stroke-width="1" stroke-dasharray="3 3" fill="none"/><path d="M815.0 685.4 L818.9 683.5 L824.1 680.8 L830.4 677.6 L837.3 674.2 L844.4 670.6 L851.5 667.0 L858.7 663.3 L866.3 659.2 L874.2 655.1 L882.2 650.9 L890.1 647.1 L897.7 643.8 L904.9 641.1 L911.8 638.7 L918.6 636.7 L925.5 634.8 L932.5 633.0 L940.0 631.0 L947.9 628.9 L956.1 626.8 L964.5 624.7 L973.0 622.7 L981.6 620.7 L990.0 618.8 L998.2 617.0 L1006.4 615.2 L1014.5 613.6 L1022.7 611.9 L1031.2 610.4 L1040.0 609.0 L1049.9 607.6 L1061.0 606.3 L1072.4 605.0 L1083.0 603.9 L1092.0 603.0 L1098.5 602.3" stroke="#000" stroke-width="1.6" fill="none"/><rect x="827.8" y="467.0" width="13" height="13" fill="#50d040" stroke="#b06020" stroke-width="2"/><rect x="829.8" y="470.0" width="7" height="7" fill="#fff" opacity="0.45"/><path d="M830.3 471.0h6M833.3 468.0v6" stroke="#000" stroke-width="1.5"/><rect x="846.8" y="510.2" width="13" height="13" fill="#50d040" stroke="#b06020" stroke-width="2"/><rect x="848.8" y="513.2" width="7" height="7" fill="#fff" opacity="0.45"/><rect x="856.5" y="550.1" width="13" height="13" fill="#50d040" stroke="#b06020" stroke-width="2"/><rect x="858.5" y="553.1" width="7" height="7" fill="#fff" opacity="0.45"/><rect x="877.5" y="594.2" width="13" height="13" fill="#50d040" stroke="#b06020" stroke-width="2"/><rect x="879.5" y="597.2" width="7" height="7" fill="#fff" opacity="0.45"/><circle cx="872.0" cy="486.7" r="6.8" fill="#000" opacity="0.6" filter="url(#sh)"/><circle cx="869.5" cy="485.2" r="6.6" fill="url(#sg)"/><circle cx="869.5" cy="485.7" r="0.9" fill="#000"/><circle cx="853.9" cy="516.5" r="6.8" fill="#000" opacity="0.6" filter="url(#sh)"/><circle cx="851.4" cy="515.0" r="6.6" fill="url(#sg)"/><circle cx="851.4" cy="515.5" r="0.9" fill="#000"/><circle cx="857.5" cy="557.2" r="6.8" fill="#000" opacity="0.6" filter="url(#sh)"/><circle cx="855.0" cy="555.7" r="6.6" fill="url(#sg)"/><circle cx="855.0" cy="556.2" r="0.9" fill="#000"/><circle cx="886.5" cy="602.5" r="6.8" fill="#000" opacity="0.6" filter="url(#sh)"/><circle cx="884.0" cy="601.0" r="6.6" fill="url(#sg)"/><circle cx="884.0" cy="601.5" r="0.9" fill="#000"/><rect x="745.5" y="637.1" width="13" height="13" fill="#90f0f0" stroke="#b04050" stroke-width="2"/><rect x="747.5" y="640.1" width="7" height="7" fill="#fff" opacity="0.45"/><path d="M748.0 641.1h6M751.0 638.1v6" stroke="#000" stroke-width="1.5"/><rect x="779.0" y="637.5" width="13" height="13" fill="#90f0f0" stroke="#b04050" stroke-width="2"/><rect x="781.0" y="640.5" width="7" height="7" fill="#fff" opacity="0.45"/><rect x="821.4" y="634.9" width="13" height="13" fill="#90f0f0" stroke="#b04050" stroke-width="2"/><rect x="823.4" y="637.9" width="7" height="7" fill="#fff" opacity="0.45"/><rect x="850.5" y="637.1" width="13" height="13" fill="#90f0f0" stroke="#b04050" stroke-width="2"/><rect x="852.5" y="640.1" width="7" height="7" fill="#fff" opacity="0.45"/><circle cx="775.9" cy="646.4" r="6.8" fill="#000" opacity="0.6" filter="url(#sh)"/><circle cx="773.4" cy="644.9" r="6.6" fill="url(#sc)"/><circle cx="773.4" cy="645.4" r="0.9" fill="#000"/><circle cx="830.5" cy="642.5" r="6.8" fill="#000" opacity="0.6" filter="url(#sh)"/><circle cx="828.0" cy="641.0" r="6.6" fill="url(#sc)"/><circle cx="828.0" cy="641.5" r="0.9" fill="#000"/><circle cx="856.1" cy="642.9" r="6.8" fill="#000" opacity="0.6" filter="url(#sh)"/><circle cx="853.6" cy="641.4" r="6.6" fill="url(#sc)"/><circle cx="853.6" cy="641.9" r="0.9" fill="#000"/><rect x="682.1" y="766.4" width="13" height="13" fill="#4040e0" stroke="#6010b0" stroke-width="2"/><rect x="684.1" y="769.4" width="7" height="7" fill="#fff" opacity="0.45"/><rect x="731.5" y="735.5" width="13" height="13" fill="#4040e0" stroke="#6010b0" stroke-width="2"/><rect x="733.5" y="738.5" width="7" height="7" fill="#fff" opacity="0.45"/><rect x="787.8" y="703.5" width="13" height="13" fill="#4040e0" stroke="#6010b0" stroke-width="2"/><rect x="789.8" y="706.5" width="7" height="7" fill="#fff" opacity="0.45"/><rect x="837.1" y="669.0" width="13" height="13" fill="#4040e0" stroke="#6010b0" stroke-width="2"/><rect x="839.1" y="672.0" width="7" height="7" fill="#fff" opacity="0.45"/><circle cx="691.1" cy="774.4" r="6.8" fill="#000" opacity="0.6" filter="url(#sh)"/><circle cx="688.6" cy="772.9" r="6.6" fill="url(#sb)"/><circle cx="688.6" cy="773.4" r="0.9" fill="#000"/><circle cx="740.5" cy="743.5" r="6.8" fill="#000" opacity="0.6" filter="url(#sh)"/><circle cx="738.0" cy="742.0" r="6.6" fill="url(#sb)"/><circle cx="738.0" cy="742.5" r="0.9" fill="#000"/><circle cx="799.2" cy="712.0" r="6.8" fill="#000" opacity="0.6" filter="url(#sh)"/><circle cx="796.7" cy="710.5" r="6.6" fill="url(#sb)"/><circle cx="796.7" cy="711.0" r="0.9" fill="#000"/><circle cx="852.0" cy="675.8" r="6.8" fill="#000" opacity="0.6" filter="url(#sh)"/><circle cx="849.5" cy="674.3" r="6.6" fill="url(#sb)"/><circle cx="849.5" cy="674.8" r="0.9" fill="#000"/><rect x="894.2" y="660.5" width="13" height="13" fill="#e850e8" stroke="#c010b0" stroke-width="2"/><rect x="896.2" y="663.5" width="7" height="7" fill="#fff" opacity="0.45"/><rect x="907.3" y="679.7" width="13" height="13" fill="#e850e8" stroke="#c010b0" stroke-width="2"/><rect x="909.3" y="682.7" width="7" height="7" fill="#fff" opacity="0.45"/><rect x="915.5" y="701.5" width="13" height="13" fill="#e850e8" stroke="#c010b0" stroke-width="2"/><rect x="917.5" y="704.5" width="7" height="7" fill="#fff" opacity="0.45"/><rect x="915.6" y="722.5" width="13" height="13" fill="#e850e8" stroke="#c010b0" stroke-width="2"/><rect x="917.6" y="725.5" width="7" height="7" fill="#fff" opacity="0.45"/><circle cx="906.3" cy="668.2" r="6.8" fill="#000" opacity="0.6" filter="url(#sh)"/><circle cx="903.8" cy="666.7" r="6.6" fill="url(#sm)"/><circle cx="903.8" cy="667.2" r="0.9" fill="#000"/><circle cx="922.3" cy="686.0" r="6.8" fill="#000" opacity="0.6" filter="url(#sh)"/><circle cx="919.8" cy="684.5" r="6.6" fill="url(#sm)"/><circle cx="919.8" cy="685.0" r="0.9" fill="#000"/><circle cx="928.9" cy="708.4" r="6.8" fill="#000" opacity="0.6" filter="url(#sh)"/><circle cx="926.4" cy="706.9" r="6.6" fill="url(#sm)"/><circle cx="926.4" cy="707.4" r="0.9" fill="#000"/><circle cx="933.0" cy="730.1" r="6.8" fill="#000" opacity="0.6" filter="url(#sh)"/><circle cx="930.5" cy="728.6" r="6.6" fill="url(#sm)"/><circle cx="930.5" cy="729.1" r="0.9" fill="#000"/><rect x="926.8" y="612.5" width="13" height="13" fill="#f0e080" stroke="#c06020" stroke-width="2"/><rect x="928.8" y="615.5" width="7" height="7" fill="#fff" opacity="0.45"/><rect x="972.2" y="590.4" width="13" height="13" fill="#f0e080" stroke="#c06020" stroke-width="2"/><rect x="974.2" y="593.4" width="7" height="7" fill="#fff" opacity="0.45"/><rect x="1015.1" y="565.1" width="13" height="13" fill="#f0e080" stroke="#c06020" stroke-width="2"/><rect x="1017.1" y="568.1" width="7" height="7" fill="#fff" opacity="0.45"/><rect x="1047.7" y="538.5" width="13" height="13" fill="#f0e080" stroke="#c06020" stroke-width="2"/><rect x="1049.7" y="541.5" width="7" height="7" fill="#fff" opacity="0.45"/><circle cx="937.3" cy="618.2" r="6.8" fill="#000" opacity="0.6" filter="url(#sh)"/><circle cx="934.8" cy="616.7" r="6.6" fill="url(#sy)"/><circle cx="934.8" cy="617.2" r="0.9" fill="#000"/><circle cx="981.2" cy="598.4" r="6.8" fill="#000" opacity="0.6" filter="url(#sh)"/><circle cx="978.7" cy="596.9" r="6.6" fill="url(#sy)"/><circle cx="978.7" cy="597.4" r="0.9" fill="#000"/><circle cx="1024.1" cy="573.1" r="6.8" fill="#000" opacity="0.6" filter="url(#sh)"/><circle cx="1021.6" cy="571.6" r="6.6" fill="url(#sy)"/><circle cx="1021.6" cy="572.1" r="0.9" fill="#000"/><circle cx="1056.7" cy="546.5" r="6.8" fill="#000" opacity="0.6" filter="url(#sh)"/><circle cx="1054.2" cy="545.0" r="6.6" fill="url(#sy)"/><circle cx="1054.2" cy="545.5" r="0.9" fill="#000"/><rect x="1004.5" y="636.5" width="13" height="13" fill="#e01818" stroke="#b00010" stroke-width="2"/><rect x="1006.5" y="639.5" width="7" height="7" fill="#fff" opacity="0.45"/><rect x="1129.5" y="639.5" width="13" height="13" fill="#e01818" stroke="#b00010" stroke-width="2"/><rect x="1131.5" y="642.5" width="7" height="7" fill="#fff" opacity="0.45"/><rect x="1243.5" y="641.5" width="13" height="13" fill="#e01818" stroke="#b00010" stroke-width="2"/><rect x="1245.5" y="644.5" width="7" height="7" fill="#fff" opacity="0.45"/><rect x="1359.2" y="643.1" width="13" height="13" fill="#e01818" stroke="#b00010" stroke-width="2"/><rect x="1361.2" y="646.1" width="7" height="7" fill="#fff" opacity="0.45"/><path d="M1361.7 647.1h6M1364.7 644.1v6" stroke="#fff" stroke-width="1.5"/><circle cx="1016.3" cy="643.4" r="6.8" fill="#000" opacity="0.6" filter="url(#sh)"/><circle cx="1013.8" cy="641.9" r="6.6" fill="url(#sr)"/><circle cx="1013.8" cy="642.4" r="0.9" fill="#000"/><circle cx="1143.3" cy="648.4" r="6.8" fill="#000" opacity="0.6" filter="url(#sh)"/><circle cx="1140.8" cy="646.9" r="6.6" fill="url(#sr)"/><circle cx="1140.8" cy="647.4" r="0.9" fill="#000"/><circle cx="1254.8" cy="649.2" r="6.8" fill="#000" opacity="0.6" filter="url(#sh)"/><circle cx="1252.3" cy="647.7" r="6.6" fill="url(#sr)"/><circle cx="1252.3" cy="648.2" r="0.9" fill="#000"/><circle cx="1339.4" cy="641.2" r="6.8" fill="#000" opacity="0.6" filter="url(#sh)"/><circle cx="1336.9" cy="639.7" r="6.6" fill="url(#sr)"/><circle cx="1336.9" cy="640.2" r="0.9" fill="#000"/><circle cx="903" cy="644.5" r="7" fill="#000" opacity="0.8" filter="url(#sh)"/><circle cx="901" cy="644" r="6.6" fill="#40a0a0"/><circle cx="896.4" cy="643.3" r="6.6" fill="url(#sw)"/><circle cx="896.4" cy="643.3" r="6.4" fill="none" stroke="#101000" stroke-width="1.8"/><path d="M641.7 383.8L615.5 401.7" stroke="#c8c8c8" stroke-width="0.8"/><text x="641.7" y="387.8" textLength="50" lengthAdjust="spacingAndGlyphs" font-family="Liberation Serif" font-size="11.5" fill="#dcdce4">520 nm</text><path d="M832.0 426.5L807.7 444.6" stroke="#c8c8c8" stroke-width="0.8"/><text x="832.0" y="430.5" textLength="50" lengthAdjust="spacingAndGlyphs" font-family="Liberation Serif" font-size="11.5" fill="#dcdce4">540 nm</text><path d="M1008.0 489.0L983.8 507.3" stroke="#c8c8c8" stroke-width="0.8"/><text x="1008.0" y="493.0" textLength="50" lengthAdjust="spacingAndGlyphs" font-family="Liberation Serif" font-size="11.5" fill="#dcdce4">560 nm</text><path d="M1133.0 534.0L1108.0 551.5" stroke="#c8c8c8" stroke-width="0.8"/><text x="1133.0" y="538.0" textLength="50" lengthAdjust="spacingAndGlyphs" font-family="Liberation Serif" font-size="11.5" fill="#dcdce4">580 nm</text><path d="M1217.5 566.5L1192.7 584.2" stroke="#c8c8c8" stroke-width="0.8"/><text x="1217.5" y="570.5" textLength="50" lengthAdjust="spacingAndGlyphs" font-family="Liberation Serif" font-size="11.5" fill="#dcdce4">600 nm</text><path d="M1298.6 596.4L1273.5 613.0" stroke="#c8c8c8" stroke-width="0.8"/><text x="1298.6" y="600.4" textLength="50" lengthAdjust="spacingAndGlyphs" font-family="Liberation Serif" font-size="11.5" fill="#dcdce4">620 nm</text><path d="M1385.7 628.6L1365.8 642.0" stroke="#c8c8c8" stroke-width="0.8"/><text x="1385.7" y="632.6" textLength="50" lengthAdjust="spacingAndGlyphs" font-family="Liberation Serif" font-size="11.5" fill="#dcdce4">640 nm</text><path d="M1423.6 642.9L1401.4 658.6" stroke="#c8c8c8" stroke-width="0.8"/><text x="1423.6" y="646.9" textLength="50" lengthAdjust="spacingAndGlyphs" font-family="Liberation Serif" font-size="11.5" fill="#dcdce4">660 nm</text><path d="M1439.3 649.3L1415.7 665.7" stroke="#c8c8c8" stroke-width="0.8"/><text x="1439.3" y="653.3" textLength="50" lengthAdjust="spacingAndGlyphs" font-family="Liberation Serif" font-size="11.5" fill="#dcdce4">680 nm</text><path d="M486.2 525.2L501.2 520.2" stroke="#c8c8c8" stroke-width="0.8"/><text x="436.2" y="534.2" textLength="50" lengthAdjust="spacingAndGlyphs" font-family="Liberation Serif" font-size="11.5" fill="#dcdce4">500 nm</text><path d="M573.0 730.0L598.4 717.5" stroke="#c8c8c8" stroke-width="0.8"/><text x="533.0" y="731.0" textLength="50" lengthAdjust="spacingAndGlyphs" font-family="Liberation Serif" font-size="11.5" fill="#dcdce4">480 nm</text><path d="M630.0 783.0L654.6 771.0" stroke="#c8c8c8" stroke-width="0.8"/><text x="590.0" y="784.0" textLength="50" lengthAdjust="spacingAndGlyphs" font-family="Liberation Serif" font-size="11.5" fill="#dcdce4">460 nm</text><path d="M647.5 795.5L671.6 783.2" stroke="#c8c8c8" stroke-width="0.8"/><text x="607.5" y="796.5" textLength="50" lengthAdjust="spacingAndGlyphs" font-family="Liberation Serif" font-size="11.5" fill="#dcdce4">440 nm</text><path d="M660.5 801.5L685.0 789.8" stroke="#c8c8c8" stroke-width="0.8"/><text x="620.5" y="802.5" textLength="50" lengthAdjust="spacingAndGlyphs" font-family="Liberation Serif" font-size="11.5" fill="#dcdce4">420 nm</text><text x="403.3" y="749.3" textLength="16.5" lengthAdjust="spacingAndGlyphs" font-family="Liberation Serif" font-size="14.5" fill="#f4f4f4">0.1</text><text x="403.3" y="701.9" textLength="16.5" lengthAdjust="spacingAndGlyphs" font-family="Liberation Serif" font-size="14.5" fill="#f4f4f4">0.2</text><text x="403.3" y="654.4" textLength="16.5" lengthAdjust="spacingAndGlyphs" font-family="Liberation Serif" font-size="14.5" fill="#f4f4f4">0.3</text><text x="403.3" y="607.0" textLength="16.5" lengthAdjust="spacingAndGlyphs" font-family="Liberation Serif" font-size="14.5" fill="#f4f4f4">0.4</text><text x="403.3" y="559.5" textLength="16.5" lengthAdjust="spacingAndGlyphs" font-family="Liberation Serif" font-size="14.5" fill="#f4f4f4">0.5</text><text x="403.3" y="512.0" textLength="16.5" lengthAdjust="spacingAndGlyphs" font-family="Liberation Serif" font-size="14.5" fill="#f4f4f4">0.6</text><text x="403.3" y="464.6" textLength="16.5" lengthAdjust="spacingAndGlyphs" font-family="Liberation Serif" font-size="14.5" fill="#f4f4f4">0.7</text><text x="403.3" y="417.1" textLength="16.5" lengthAdjust="spacingAndGlyphs" font-family="Liberation Serif" font-size="14.5" fill="#f4f4f4">0.8</text><text x="626.6" y="822" textLength="16.5" lengthAdjust="spacingAndGlyphs" font-family="Liberation Serif" font-size="14.5" fill="#f4f4f4">0.1</text><text x="754.6" y="822" textLength="16.5" lengthAdjust="spacingAndGlyphs" font-family="Liberation Serif" font-size="14.5" fill="#f4f4f4">0.2</text><text x="882.6" y="822" textLength="16.5" lengthAdjust="spacingAndGlyphs" font-family="Liberation Serif" font-size="14.5" fill="#f4f4f4">0.3</text><text x="1010.6" y="822" textLength="16.5" lengthAdjust="spacingAndGlyphs" font-family="Liberation Serif" font-size="14.5" fill="#f4f4f4">0.4</text><text x="1138.6" y="822" textLength="16.5" lengthAdjust="spacingAndGlyphs" font-family="Liberation Serif" font-size="14.5" fill="#f4f4f4">0.5</text><text x="1266.6" y="822" textLength="16.5" lengthAdjust="spacingAndGlyphs" font-family="Liberation Serif" font-size="14.5" fill="#f4f4f4">0.6</text><text x="1394.6" y="822" textLength="16.5" lengthAdjust="spacingAndGlyphs" font-family="Liberation Serif" font-size="14.5" fill="#f4f4f4">0.7</text><text x="1387" y="764" font-family="Liberation Sans" font-weight="bold" font-size="16" fill="#4c5050">hcfr.sourceforge.net</text></svg></body></html>
